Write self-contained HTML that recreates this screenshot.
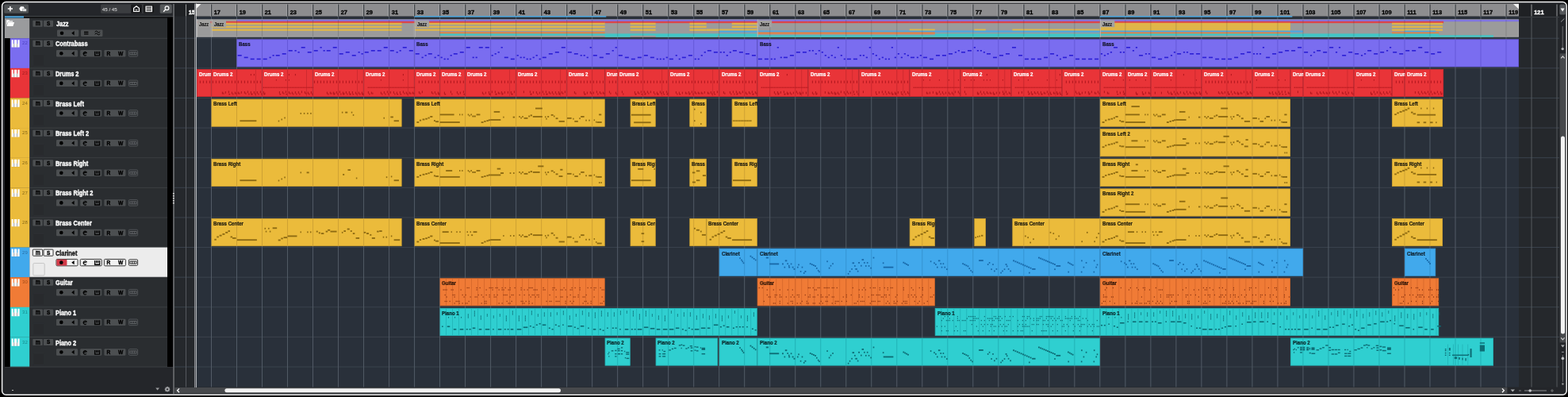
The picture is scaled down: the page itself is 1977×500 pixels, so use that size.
<!DOCTYPE html><html><head><meta charset="utf-8"><title>Project</title><style>
html,body{margin:0;padding:0;background:#24262a;width:1977px;height:500px;overflow:hidden}
body{position:relative;font-family:"Liberation Sans",sans-serif}
svg.l{position:absolute;left:0;top:0}
#txt{position:absolute;left:0;top:0;width:1977px;height:500px;will-change:transform}
.pl{position:absolute;font-size:6.9px;line-height:8px;font-weight:bold;white-space:nowrap;overflow:hidden;transform:scaleX(.885);transform-origin:0 0}
.fl{position:absolute;font-size:6.9px;line-height:8px;font-weight:bold;color:#1b1b1b;white-space:nowrap;overflow:hidden;transform:scaleX(.84);transform-origin:0 0}
.rl{position:absolute;top:10.9px;font-size:7.4px;line-height:9px;font-weight:bold;white-space:nowrap}
.ms{position:absolute;width:12.3px;height:8.2px;color:#000;font-size:6.4px;line-height:8.4px;font-weight:bold;text-align:center}
.tn{position:absolute;color:#fff;font-size:8.5px;line-height:10px;font-weight:bold;white-space:nowrap;transform:scaleX(.866);transform-origin:0 0}
.tn.dark{color:#111}
.rw{position:absolute;font-size:6.6px;line-height:9px;font-weight:bold;color:#000}
.num{position:absolute;font-size:6px;line-height:7px;width:8px;text-align:center}
.lm{display:inline-block;font-size:8.4px;line-height:8px;position:relative;top:-0.9px;transform:scaleX(.82)}
.tn,.ms,.rw,.rl{-webkit-text-stroke:0.35px currentColor}
.pl,.fl{-webkit-text-stroke:0.22px currentColor}
</style></head><body><svg class="l" width="1977" height="500" viewBox="0 0 1977 500"><rect x="220" y="4.5" width="1746" height="483" fill="#25282c"/><rect x="246.5" y="20.5" width="1668.5" height="467" fill="#29303a"/><rect x="220" y="47.7" width="1746" height="1" fill="#3b434d"/><rect x="220" y="85.32" width="1746" height="1" fill="#3b434d"/><rect x="220" y="122.94" width="1746" height="1" fill="#3b434d"/><rect x="220" y="160.56" width="1746" height="1" fill="#3b434d"/><rect x="220" y="198.18" width="1746" height="1" fill="#3b434d"/><rect x="220" y="235.8" width="1746" height="1" fill="#3b434d"/><rect x="220" y="273.42" width="1746" height="1" fill="#3b434d"/><rect x="220" y="311.04" width="1746" height="1" fill="#3b434d"/><rect x="220" y="348.66" width="1746" height="1" fill="#3b434d"/><rect x="220" y="386.28" width="1746" height="1" fill="#3b434d"/><rect x="220" y="423.9" width="1746" height="1" fill="#3b434d"/><rect x="220" y="461.52" width="1746" height="1" fill="#3b434d"/><rect x="233.99" y="20.4" width="1" height="467.1" fill="#565a5f"/><rect x="266" y="20.4" width="1" height="467.1" fill="#525b66"/><rect x="298.01" y="20.4" width="1" height="467.1" fill="#525b66"/><rect x="330.02" y="20.4" width="1" height="467.1" fill="#525b66"/><rect x="362.03" y="20.4" width="1" height="467.1" fill="#525b66"/><rect x="394.04" y="20.4" width="1" height="467.1" fill="#525b66"/><rect x="426.05" y="20.4" width="1" height="467.1" fill="#525b66"/><rect x="458.06" y="20.4" width="1" height="467.1" fill="#525b66"/><rect x="490.07" y="20.4" width="1" height="467.1" fill="#525b66"/><rect x="522.08" y="20.4" width="1" height="467.1" fill="#525b66"/><rect x="554.09" y="20.4" width="1" height="467.1" fill="#525b66"/><rect x="586.1" y="20.4" width="1" height="467.1" fill="#525b66"/><rect x="618.11" y="20.4" width="1" height="467.1" fill="#525b66"/><rect x="650.12" y="20.4" width="1" height="467.1" fill="#525b66"/><rect x="682.13" y="20.4" width="1" height="467.1" fill="#525b66"/><rect x="714.14" y="20.4" width="1" height="467.1" fill="#525b66"/><rect x="746.15" y="20.4" width="1" height="467.1" fill="#525b66"/><rect x="778.16" y="20.4" width="1" height="467.1" fill="#525b66"/><rect x="810.17" y="20.4" width="1" height="467.1" fill="#525b66"/><rect x="842.18" y="20.4" width="1" height="467.1" fill="#525b66"/><rect x="874.19" y="20.4" width="1" height="467.1" fill="#525b66"/><rect x="906.2" y="20.4" width="1" height="467.1" fill="#525b66"/><rect x="938.21" y="20.4" width="1" height="467.1" fill="#525b66"/><rect x="970.22" y="20.4" width="1" height="467.1" fill="#525b66"/><rect x="1002.23" y="20.4" width="1" height="467.1" fill="#525b66"/><rect x="1034.24" y="20.4" width="1" height="467.1" fill="#525b66"/><rect x="1066.25" y="20.4" width="1" height="467.1" fill="#525b66"/><rect x="1098.26" y="20.4" width="1" height="467.1" fill="#525b66"/><rect x="1130.27" y="20.4" width="1" height="467.1" fill="#525b66"/><rect x="1162.28" y="20.4" width="1" height="467.1" fill="#525b66"/><rect x="1194.29" y="20.4" width="1" height="467.1" fill="#525b66"/><rect x="1226.3" y="20.4" width="1" height="467.1" fill="#525b66"/><rect x="1258.31" y="20.4" width="1" height="467.1" fill="#525b66"/><rect x="1290.32" y="20.4" width="1" height="467.1" fill="#525b66"/><rect x="1322.33" y="20.4" width="1" height="467.1" fill="#525b66"/><rect x="1354.34" y="20.4" width="1" height="467.1" fill="#525b66"/><rect x="1386.35" y="20.4" width="1" height="467.1" fill="#525b66"/><rect x="1418.36" y="20.4" width="1" height="467.1" fill="#525b66"/><rect x="1450.37" y="20.4" width="1" height="467.1" fill="#525b66"/><rect x="1482.38" y="20.4" width="1" height="467.1" fill="#525b66"/><rect x="1514.39" y="20.4" width="1" height="467.1" fill="#525b66"/><rect x="1546.4" y="20.4" width="1" height="467.1" fill="#525b66"/><rect x="1578.41" y="20.4" width="1" height="467.1" fill="#525b66"/><rect x="1610.42" y="20.4" width="1" height="467.1" fill="#525b66"/><rect x="1642.43" y="20.4" width="1" height="467.1" fill="#525b66"/><rect x="1674.44" y="20.4" width="1" height="467.1" fill="#525b66"/><rect x="1706.45" y="20.4" width="1" height="467.1" fill="#525b66"/><rect x="1738.46" y="20.4" width="1" height="467.1" fill="#525b66"/><rect x="1770.47" y="20.4" width="1" height="467.1" fill="#525b66"/><rect x="1802.48" y="20.4" width="1" height="467.1" fill="#525b66"/><rect x="1834.49" y="20.4" width="1" height="467.1" fill="#525b66"/><rect x="1866.5" y="20.4" width="1" height="467.1" fill="#525b66"/><rect x="1898.51" y="20.4" width="1" height="467.1" fill="#525b66"/><rect x="1930.52" y="20.4" width="1" height="467.1" fill="#565a5f"/><rect x="1962.53" y="20.4" width="1" height="467.1" fill="#565a5f"/><rect x="248.49" y="24.8" width="17.61" height="21.4" fill="#9b9b9b" stroke="#b4b4b4" stroke-width="0.8"/><rect x="266.9" y="24.8" width="255.28" height="21.4" fill="#9b9b9b" stroke="#b4b4b4" stroke-width="0.8"/><rect x="522.98" y="24.8" width="431.33" height="21.4" fill="#9b9b9b" stroke="#b4b4b4" stroke-width="0.8"/><rect x="955.11" y="24.8" width="431.33" height="21.4" fill="#9b9b9b" stroke="#b4b4b4" stroke-width="0.8"/><rect x="1387.25" y="24.8" width="527.37" height="21.4" fill="#9b9b9b" stroke="#b4b4b4" stroke-width="0.8"/><rect x="298.91" y="49.8" width="223.27" height="34.2" fill="#7a6df0" stroke="#6a5ce0" stroke-width="0.8"/><rect x="522.98" y="49.8" width="431.33" height="34.2" fill="#7a6df0" stroke="#6a5ce0" stroke-width="0.8"/><rect x="955.11" y="49.8" width="431.33" height="34.2" fill="#7a6df0" stroke="#6a5ce0" stroke-width="0.8"/><rect x="1387.25" y="49.8" width="527.37" height="34.2" fill="#7a6df0" stroke="#6a5ce0" stroke-width="0.8"/><rect x="248.4" y="87.42" width="17.7" height="34.2" fill="#e93438" stroke="#d22a30" stroke-width="0.8"/><rect x="266.9" y="87.42" width="63.22" height="34.2" fill="#e93438" stroke="#d22a30" stroke-width="0.8"/><rect x="330.92" y="87.42" width="63.22" height="34.2" fill="#e93438" stroke="#d22a30" stroke-width="0.8"/><rect x="394.94" y="87.42" width="63.22" height="34.2" fill="#e93438" stroke="#d22a30" stroke-width="0.8"/><rect x="458.96" y="87.42" width="63.22" height="34.2" fill="#e93438" stroke="#d22a30" stroke-width="0.8"/><rect x="522.98" y="87.42" width="31.21" height="34.2" fill="#e93438" stroke="#d22a30" stroke-width="0.8"/><rect x="554.99" y="87.42" width="31.21" height="34.2" fill="#e93438" stroke="#d22a30" stroke-width="0.8"/><rect x="587" y="87.42" width="63.22" height="34.2" fill="#e93438" stroke="#d22a30" stroke-width="0.8"/><rect x="651.02" y="87.42" width="63.22" height="34.2" fill="#e93438" stroke="#d22a30" stroke-width="0.8"/><rect x="715.04" y="87.42" width="47.21" height="34.2" fill="#e93438" stroke="#d22a30" stroke-width="0.8"/><rect x="763.05" y="87.42" width="15.2" height="34.2" fill="#e93438" stroke="#d22a30" stroke-width="0.8"/><rect x="779.06" y="87.42" width="63.22" height="34.2" fill="#e93438" stroke="#d22a30" stroke-width="0.8"/><rect x="843.08" y="87.42" width="63.22" height="34.2" fill="#e93438" stroke="#d22a30" stroke-width="0.8"/><rect x="907.1" y="87.42" width="47.21" height="34.2" fill="#e93438" stroke="#d22a30" stroke-width="0.8"/><rect x="955.11" y="87.42" width="63.22" height="34.2" fill="#e93438" stroke="#d22a30" stroke-width="0.8"/><rect x="1019.13" y="87.42" width="63.22" height="34.2" fill="#e93438" stroke="#d22a30" stroke-width="0.8"/><rect x="1083.16" y="87.42" width="63.22" height="34.2" fill="#e93438" stroke="#d22a30" stroke-width="0.8"/><rect x="1147.18" y="87.42" width="63.22" height="34.2" fill="#e93438" stroke="#d22a30" stroke-width="0.8"/><rect x="1211.2" y="87.42" width="63.22" height="34.2" fill="#e93438" stroke="#d22a30" stroke-width="0.8"/><rect x="1275.22" y="87.42" width="63.22" height="34.2" fill="#e93438" stroke="#d22a30" stroke-width="0.8"/><rect x="1339.24" y="87.42" width="47.21" height="34.2" fill="#e93438" stroke="#d22a30" stroke-width="0.8"/><rect x="1387.25" y="87.42" width="31.21" height="34.2" fill="#e93438" stroke="#d22a30" stroke-width="0.8"/><rect x="1419.26" y="87.42" width="31.21" height="34.2" fill="#e93438" stroke="#d22a30" stroke-width="0.8"/><rect x="1451.27" y="87.42" width="63.22" height="34.2" fill="#e93438" stroke="#d22a30" stroke-width="0.8"/><rect x="1515.29" y="87.42" width="63.22" height="34.2" fill="#e93438" stroke="#d22a30" stroke-width="0.8"/><rect x="1579.31" y="87.42" width="47.22" height="34.2" fill="#e93438" stroke="#d22a30" stroke-width="0.8"/><rect x="1627.33" y="87.42" width="15.2" height="34.2" fill="#e93438" stroke="#d22a30" stroke-width="0.8"/><rect x="1643.33" y="87.42" width="63.22" height="34.2" fill="#e93438" stroke="#d22a30" stroke-width="0.8"/><rect x="1707.35" y="87.42" width="47.22" height="34.2" fill="#e93438" stroke="#d22a30" stroke-width="0.8"/><rect x="1755.37" y="87.42" width="15.2" height="34.2" fill="#e93438" stroke="#d22a30" stroke-width="0.8"/><rect x="1771.37" y="87.42" width="48.34" height="34.2" fill="#e93438" stroke="#d22a30" stroke-width="0.8"/><rect x="266.9" y="125.04" width="239.27" height="34.2" fill="#ebbb3b" stroke="#d6a832" stroke-width="0.8"/><rect x="522.98" y="125.04" width="239.28" height="34.2" fill="#ebbb3b" stroke="#d6a832" stroke-width="0.8"/><rect x="795.06" y="125.04" width="31.21" height="34.2" fill="#ebbb3b" stroke="#d6a832" stroke-width="0.8"/><rect x="869.81" y="125.04" width="20.49" height="34.2" fill="#ebbb3b" stroke="#d6a832" stroke-width="0.8"/><rect x="923.1" y="125.04" width="31.21" height="34.2" fill="#ebbb3b" stroke="#d6a832" stroke-width="0.8"/><rect x="1387.25" y="125.04" width="239.28" height="34.2" fill="#ebbb3b" stroke="#d6a832" stroke-width="0.8"/><rect x="1755.37" y="125.04" width="63.22" height="34.2" fill="#ebbb3b" stroke="#d6a832" stroke-width="0.8"/><rect x="1387.25" y="162.66" width="239.28" height="34.2" fill="#ebbb3b" stroke="#d6a832" stroke-width="0.8"/><rect x="266.9" y="200.28" width="239.27" height="34.2" fill="#ebbb3b" stroke="#d6a832" stroke-width="0.8"/><rect x="522.98" y="200.28" width="239.28" height="34.2" fill="#ebbb3b" stroke="#d6a832" stroke-width="0.8"/><rect x="795.06" y="200.28" width="31.21" height="34.2" fill="#ebbb3b" stroke="#d6a832" stroke-width="0.8"/><rect x="869.81" y="200.28" width="20.49" height="34.2" fill="#ebbb3b" stroke="#d6a832" stroke-width="0.8"/><rect x="923.1" y="200.28" width="31.21" height="34.2" fill="#ebbb3b" stroke="#d6a832" stroke-width="0.8"/><rect x="1387.25" y="200.28" width="239.28" height="34.2" fill="#ebbb3b" stroke="#d6a832" stroke-width="0.8"/><rect x="1755.37" y="200.28" width="63.22" height="34.2" fill="#ebbb3b" stroke="#d6a832" stroke-width="0.8"/><rect x="1387.25" y="237.9" width="239.28" height="34.2" fill="#ebbb3b" stroke="#d6a832" stroke-width="0.8"/><rect x="266.9" y="275.52" width="239.27" height="34.2" fill="#ebbb3b" stroke="#d6a832" stroke-width="0.8"/><rect x="522.98" y="275.52" width="239.28" height="34.2" fill="#ebbb3b" stroke="#d6a832" stroke-width="0.8"/><rect x="795.06" y="275.52" width="31.21" height="34.2" fill="#ebbb3b" stroke="#d6a832" stroke-width="0.8"/><rect x="869.81" y="275.52" width="20.49" height="34.2" fill="#ebbb3b" stroke="#d6a832" stroke-width="0.8"/><rect x="891.09" y="275.52" width="63.22" height="34.2" fill="#ebbb3b" stroke="#d6a832" stroke-width="0.8"/><rect x="1147.18" y="275.52" width="31.21" height="34.2" fill="#ebbb3b" stroke="#d6a832" stroke-width="0.8"/><rect x="1228.8" y="275.52" width="13.6" height="34.2" fill="#ebbb3b" stroke="#d6a832" stroke-width="0.8"/><rect x="1276.82" y="275.52" width="109.63" height="34.2" fill="#ebbb3b" stroke="#d6a832" stroke-width="0.8"/><rect x="1387.25" y="275.52" width="239.28" height="34.2" fill="#ebbb3b" stroke="#d6a832" stroke-width="0.8"/><rect x="1755.37" y="275.52" width="63.22" height="34.2" fill="#ebbb3b" stroke="#d6a832" stroke-width="0.8"/><rect x="907.1" y="313.14" width="47.21" height="34.2" fill="#41a9ec" stroke="#3698d8" stroke-width="0.8"/><rect x="955.11" y="313.14" width="431.33" height="34.2" fill="#41a9ec" stroke="#3698d8" stroke-width="0.8"/><rect x="1387.25" y="313.14" width="255.28" height="34.2" fill="#41a9ec" stroke="#3698d8" stroke-width="0.8"/><rect x="1771.37" y="313.14" width="38.41" height="34.2" fill="#41a9ec" stroke="#3698d8" stroke-width="0.8"/><rect x="554.99" y="350.76" width="207.27" height="34.2" fill="#f07b36" stroke="#d96a2a" stroke-width="0.8"/><rect x="955.11" y="350.76" width="223.27" height="34.2" fill="#f07b36" stroke="#d96a2a" stroke-width="0.8"/><rect x="1387.25" y="350.76" width="239.28" height="34.2" fill="#f07b36" stroke="#d96a2a" stroke-width="0.8"/><rect x="1755.37" y="350.76" width="58.42" height="34.2" fill="#f07b36" stroke="#d96a2a" stroke-width="0.8"/><rect x="554.99" y="388.38" width="399.32" height="34.2" fill="#2fcfd0" stroke="#25b8ba" stroke-width="0.8"/><rect x="1179.18" y="388.38" width="207.27" height="34.2" fill="#2fcfd0" stroke="#25b8ba" stroke-width="0.8"/><rect x="1387.25" y="388.38" width="426.53" height="34.2" fill="#2fcfd0" stroke="#25b8ba" stroke-width="0.8"/><rect x="763.05" y="426" width="31.21" height="34.2" fill="#2fcfd0" stroke="#25b8ba" stroke-width="0.8"/><rect x="827.07" y="426" width="77.62" height="34.2" fill="#2fcfd0" stroke="#25b8ba" stroke-width="0.8"/><rect x="907.1" y="426" width="47.21" height="34.2" fill="#2fcfd0" stroke="#25b8ba" stroke-width="0.8"/><rect x="955.11" y="426" width="431.33" height="34.2" fill="#2fcfd0" stroke="#25b8ba" stroke-width="0.8"/><rect x="1627.33" y="426" width="255.28" height="34.2" fill="#2fcfd0" stroke="#25b8ba" stroke-width="0.8"/><rect x="298.51" y="24.8" width="224.07" height="2.4" fill="#7a6df0" opacity="0.82"/><rect x="522.58" y="24.8" width="432.13" height="2.4" fill="#7a6df0" opacity="0.82"/><rect x="954.71" y="24.8" width="432.13" height="2.4" fill="#7a6df0" opacity="0.82"/><rect x="1386.85" y="24.8" width="528.16" height="2.4" fill="#7a6df0" opacity="0.82"/><rect x="248" y="26.75" width="18.5" height="2.4" fill="#e93438" opacity="0.82"/><rect x="266.5" y="26.75" width="64.02" height="2.4" fill="#e93438" opacity="0.82"/><rect x="330.52" y="26.75" width="64.02" height="2.4" fill="#e93438" opacity="0.82"/><rect x="394.54" y="26.75" width="64.02" height="2.4" fill="#e93438" opacity="0.82"/><rect x="458.56" y="26.75" width="64.02" height="2.4" fill="#e93438" opacity="0.82"/><rect x="522.58" y="26.75" width="32.01" height="2.4" fill="#e93438" opacity="0.82"/><rect x="554.59" y="26.75" width="32.01" height="2.4" fill="#e93438" opacity="0.82"/><rect x="586.6" y="26.75" width="64.02" height="2.4" fill="#e93438" opacity="0.82"/><rect x="650.62" y="26.75" width="64.02" height="2.4" fill="#e93438" opacity="0.82"/><rect x="714.64" y="26.75" width="48.01" height="2.4" fill="#e93438" opacity="0.82"/><rect x="762.65" y="26.75" width="16" height="2.4" fill="#e93438" opacity="0.82"/><rect x="778.66" y="26.75" width="64.02" height="2.4" fill="#e93438" opacity="0.82"/><rect x="842.68" y="26.75" width="64.02" height="2.4" fill="#e93438" opacity="0.82"/><rect x="906.7" y="26.75" width="48.01" height="2.4" fill="#e93438" opacity="0.82"/><rect x="954.71" y="26.75" width="64.02" height="2.4" fill="#e93438" opacity="0.82"/><rect x="1018.73" y="26.75" width="64.02" height="2.4" fill="#e93438" opacity="0.82"/><rect x="1082.76" y="26.75" width="64.02" height="2.4" fill="#e93438" opacity="0.82"/><rect x="1146.78" y="26.75" width="64.02" height="2.4" fill="#e93438" opacity="0.82"/><rect x="1210.8" y="26.75" width="64.02" height="2.4" fill="#e93438" opacity="0.82"/><rect x="1274.82" y="26.75" width="64.02" height="2.4" fill="#e93438" opacity="0.82"/><rect x="1338.84" y="26.75" width="48.01" height="2.4" fill="#e93438" opacity="0.82"/><rect x="1386.85" y="26.75" width="32.01" height="2.4" fill="#e93438" opacity="0.82"/><rect x="1418.86" y="26.75" width="32.01" height="2.4" fill="#e93438" opacity="0.82"/><rect x="1450.87" y="26.75" width="64.02" height="2.4" fill="#e93438" opacity="0.82"/><rect x="1514.89" y="26.75" width="64.02" height="2.4" fill="#e93438" opacity="0.82"/><rect x="1578.91" y="26.75" width="48.02" height="2.4" fill="#e93438" opacity="0.82"/><rect x="1626.92" y="26.75" width="16" height="2.4" fill="#e93438" opacity="0.82"/><rect x="1642.93" y="26.75" width="64.02" height="2.4" fill="#e93438" opacity="0.82"/><rect x="1706.95" y="26.75" width="48.02" height="2.4" fill="#e93438" opacity="0.82"/><rect x="1754.96" y="26.75" width="16" height="2.4" fill="#e93438" opacity="0.82"/><rect x="1770.97" y="26.75" width="49.14" height="2.4" fill="#e93438" opacity="0.82"/><rect x="266.5" y="28.7" width="240.07" height="2.4" fill="#ebbb3b" opacity="0.82"/><rect x="522.58" y="28.7" width="240.08" height="2.4" fill="#ebbb3b" opacity="0.82"/><rect x="794.66" y="28.7" width="32.01" height="2.4" fill="#ebbb3b" opacity="0.82"/><rect x="869.41" y="28.7" width="21.29" height="2.4" fill="#ebbb3b" opacity="0.82"/><rect x="922.7" y="28.7" width="32.01" height="2.4" fill="#ebbb3b" opacity="0.82"/><rect x="1386.85" y="28.7" width="240.08" height="2.4" fill="#ebbb3b" opacity="0.82"/><rect x="1754.96" y="28.7" width="64.02" height="2.4" fill="#ebbb3b" opacity="0.82"/><rect x="1386.85" y="30.65" width="240.08" height="2.4" fill="#ebbb3b" opacity="0.82"/><rect x="266.5" y="32.6" width="240.07" height="2.4" fill="#ebbb3b" opacity="0.82"/><rect x="522.58" y="32.6" width="240.08" height="2.4" fill="#ebbb3b" opacity="0.82"/><rect x="794.66" y="32.6" width="32.01" height="2.4" fill="#ebbb3b" opacity="0.82"/><rect x="869.41" y="32.6" width="21.29" height="2.4" fill="#ebbb3b" opacity="0.82"/><rect x="922.7" y="32.6" width="32.01" height="2.4" fill="#ebbb3b" opacity="0.82"/><rect x="1386.85" y="32.6" width="240.08" height="2.4" fill="#ebbb3b" opacity="0.82"/><rect x="1754.96" y="32.6" width="64.02" height="2.4" fill="#ebbb3b" opacity="0.82"/><rect x="1386.85" y="34.55" width="240.08" height="2.4" fill="#ebbb3b" opacity="0.82"/><rect x="266.5" y="36.5" width="240.07" height="2.4" fill="#ebbb3b" opacity="0.82"/><rect x="522.58" y="36.5" width="240.08" height="2.4" fill="#ebbb3b" opacity="0.82"/><rect x="794.66" y="36.5" width="32.01" height="2.4" fill="#ebbb3b" opacity="0.82"/><rect x="869.41" y="36.5" width="21.29" height="2.4" fill="#ebbb3b" opacity="0.82"/><rect x="890.69" y="36.5" width="64.02" height="2.4" fill="#ebbb3b" opacity="0.82"/><rect x="1146.78" y="36.5" width="32.01" height="2.4" fill="#ebbb3b" opacity="0.82"/><rect x="1228.4" y="36.5" width="14.4" height="2.4" fill="#ebbb3b" opacity="0.82"/><rect x="1276.42" y="36.5" width="110.43" height="2.4" fill="#ebbb3b" opacity="0.82"/><rect x="1386.85" y="36.5" width="240.08" height="2.4" fill="#ebbb3b" opacity="0.82"/><rect x="1754.96" y="36.5" width="64.02" height="2.4" fill="#ebbb3b" opacity="0.82"/><rect x="906.7" y="38.45" width="48.01" height="2.4" fill="#41a9ec" opacity="0.82"/><rect x="954.71" y="38.45" width="432.13" height="2.4" fill="#41a9ec" opacity="0.82"/><rect x="1386.85" y="38.45" width="256.08" height="2.4" fill="#41a9ec" opacity="0.82"/><rect x="1770.97" y="38.45" width="39.21" height="2.4" fill="#41a9ec" opacity="0.82"/><rect x="554.59" y="40.4" width="208.07" height="2.4" fill="#f07b36" opacity="0.82"/><rect x="954.71" y="40.4" width="224.07" height="2.4" fill="#f07b36" opacity="0.82"/><rect x="1386.85" y="40.4" width="240.08" height="2.4" fill="#f07b36" opacity="0.82"/><rect x="1754.96" y="40.4" width="59.22" height="2.4" fill="#f07b36" opacity="0.82"/><rect x="554.59" y="42.35" width="400.12" height="2.4" fill="#2fcfd0" opacity="0.82"/><rect x="1178.78" y="42.35" width="208.07" height="2.4" fill="#2fcfd0" opacity="0.82"/><rect x="1386.85" y="42.35" width="427.33" height="2.4" fill="#2fcfd0" opacity="0.82"/><rect x="762.65" y="44.3" width="32.01" height="2.4" fill="#2fcfd0" opacity="0.82"/><rect x="826.67" y="44.3" width="78.42" height="2.4" fill="#2fcfd0" opacity="0.82"/><rect x="906.7" y="44.3" width="48.01" height="2.4" fill="#2fcfd0" opacity="0.82"/><rect x="954.71" y="44.3" width="432.13" height="2.4" fill="#2fcfd0" opacity="0.82"/><rect x="1626.92" y="44.3" width="256.08" height="2.4" fill="#2fcfd0" opacity="0.82"/><rect x="266" y="24.9" width="1" height="21.2" fill="rgba(60,60,60,0.22)"/><rect x="298.01" y="24.9" width="1" height="21.2" fill="rgba(60,60,60,0.22)"/><rect x="330.02" y="24.9" width="1" height="21.2" fill="rgba(60,60,60,0.22)"/><rect x="362.03" y="24.9" width="1" height="21.2" fill="rgba(60,60,60,0.22)"/><rect x="394.04" y="24.9" width="1" height="21.2" fill="rgba(60,60,60,0.22)"/><rect x="426.05" y="24.9" width="1" height="21.2" fill="rgba(60,60,60,0.22)"/><rect x="458.06" y="24.9" width="1" height="21.2" fill="rgba(60,60,60,0.22)"/><rect x="490.07" y="24.9" width="1" height="21.2" fill="rgba(60,60,60,0.22)"/><rect x="522.08" y="24.9" width="1" height="21.2" fill="rgba(60,60,60,0.22)"/><rect x="554.09" y="24.9" width="1" height="21.2" fill="rgba(60,60,60,0.22)"/><rect x="586.1" y="24.9" width="1" height="21.2" fill="rgba(60,60,60,0.22)"/><rect x="618.11" y="24.9" width="1" height="21.2" fill="rgba(60,60,60,0.22)"/><rect x="650.12" y="24.9" width="1" height="21.2" fill="rgba(60,60,60,0.22)"/><rect x="682.13" y="24.9" width="1" height="21.2" fill="rgba(60,60,60,0.22)"/><rect x="714.14" y="24.9" width="1" height="21.2" fill="rgba(60,60,60,0.22)"/><rect x="746.15" y="24.9" width="1" height="21.2" fill="rgba(60,60,60,0.22)"/><rect x="778.16" y="24.9" width="1" height="21.2" fill="rgba(60,60,60,0.22)"/><rect x="810.17" y="24.9" width="1" height="21.2" fill="rgba(60,60,60,0.22)"/><rect x="842.18" y="24.9" width="1" height="21.2" fill="rgba(60,60,60,0.22)"/><rect x="874.19" y="24.9" width="1" height="21.2" fill="rgba(60,60,60,0.22)"/><rect x="906.2" y="24.9" width="1" height="21.2" fill="rgba(60,60,60,0.22)"/><rect x="938.21" y="24.9" width="1" height="21.2" fill="rgba(60,60,60,0.22)"/><rect x="970.22" y="24.9" width="1" height="21.2" fill="rgba(60,60,60,0.22)"/><rect x="1002.23" y="24.9" width="1" height="21.2" fill="rgba(60,60,60,0.22)"/><rect x="1034.24" y="24.9" width="1" height="21.2" fill="rgba(60,60,60,0.22)"/><rect x="1066.25" y="24.9" width="1" height="21.2" fill="rgba(60,60,60,0.22)"/><rect x="1098.26" y="24.9" width="1" height="21.2" fill="rgba(60,60,60,0.22)"/><rect x="1130.27" y="24.9" width="1" height="21.2" fill="rgba(60,60,60,0.22)"/><rect x="1162.28" y="24.9" width="1" height="21.2" fill="rgba(60,60,60,0.22)"/><rect x="1194.29" y="24.9" width="1" height="21.2" fill="rgba(60,60,60,0.22)"/><rect x="1226.3" y="24.9" width="1" height="21.2" fill="rgba(60,60,60,0.22)"/><rect x="1258.31" y="24.9" width="1" height="21.2" fill="rgba(60,60,60,0.22)"/><rect x="1290.32" y="24.9" width="1" height="21.2" fill="rgba(60,60,60,0.22)"/><rect x="1322.33" y="24.9" width="1" height="21.2" fill="rgba(60,60,60,0.22)"/><rect x="1354.34" y="24.9" width="1" height="21.2" fill="rgba(60,60,60,0.22)"/><rect x="1386.35" y="24.9" width="1" height="21.2" fill="rgba(60,60,60,0.22)"/><rect x="1418.36" y="24.9" width="1" height="21.2" fill="rgba(60,60,60,0.22)"/><rect x="1450.37" y="24.9" width="1" height="21.2" fill="rgba(60,60,60,0.22)"/><rect x="1482.38" y="24.9" width="1" height="21.2" fill="rgba(60,60,60,0.22)"/><rect x="1514.39" y="24.9" width="1" height="21.2" fill="rgba(60,60,60,0.22)"/><rect x="1546.4" y="24.9" width="1" height="21.2" fill="rgba(60,60,60,0.22)"/><rect x="1578.41" y="24.9" width="1" height="21.2" fill="rgba(60,60,60,0.22)"/><rect x="1610.42" y="24.9" width="1" height="21.2" fill="rgba(60,60,60,0.22)"/><rect x="1642.43" y="24.9" width="1" height="21.2" fill="rgba(60,60,60,0.22)"/><rect x="1674.44" y="24.9" width="1" height="21.2" fill="rgba(60,60,60,0.22)"/><rect x="1706.45" y="24.9" width="1" height="21.2" fill="rgba(60,60,60,0.22)"/><rect x="1738.46" y="24.9" width="1" height="21.2" fill="rgba(60,60,60,0.22)"/><rect x="1770.47" y="24.9" width="1" height="21.2" fill="rgba(60,60,60,0.22)"/><rect x="1802.48" y="24.9" width="1" height="21.2" fill="rgba(60,60,60,0.22)"/><rect x="1834.49" y="24.9" width="1" height="21.2" fill="rgba(60,60,60,0.22)"/><rect x="1866.5" y="24.9" width="1" height="21.2" fill="rgba(60,60,60,0.22)"/><rect x="1898.51" y="24.9" width="1" height="21.2" fill="rgba(60,60,60,0.22)"/><rect x="249.09" y="25.4" width="16.41" height="8.8" fill="#a3a2a0"/><rect x="248.09" y="24.4" width="1" height="22.2" fill="#b9b9b9"/><rect x="267.5" y="25.4" width="17.5" height="8.8" fill="#a3a2a0"/><rect x="266.5" y="24.4" width="1" height="22.2" fill="#b9b9b9"/><rect x="523.58" y="25.4" width="17.5" height="8.8" fill="#a3a2a0"/><rect x="522.58" y="24.4" width="1" height="22.2" fill="#b9b9b9"/><rect x="955.71" y="25.4" width="17.5" height="8.8" fill="#a3a2a0"/><rect x="954.71" y="24.4" width="1" height="22.2" fill="#b9b9b9"/><rect x="1387.85" y="25.4" width="17.5" height="8.8" fill="#a3a2a0"/><rect x="1386.85" y="24.4" width="1" height="22.2" fill="#b9b9b9"/><rect x="330.02" y="49.9" width="1" height="34" fill="#6558d8"/><rect x="362.03" y="49.9" width="1" height="34" fill="#6558d8"/><rect x="394.04" y="49.9" width="1" height="34" fill="#6558d8"/><rect x="426.05" y="49.9" width="1" height="34" fill="#6558d8"/><rect x="458.06" y="49.9" width="1" height="34" fill="#6558d8"/><rect x="490.07" y="49.9" width="1" height="34" fill="#6558d8"/><rect x="299.71" y="69" width="5" height="1.6" fill="#2b1fd6"/><rect x="307.71" y="71.6" width="5" height="1.6" fill="#2b1fd6"/><rect x="315.71" y="73.6" width="5" height="1.6" fill="#2b1fd6"/><rect x="323.71" y="73.6" width="5" height="1.6" fill="#2b1fd6"/><rect x="331.72" y="73.6" width="5" height="1.6" fill="#2b1fd6"/><rect x="339.52" y="71.6" width="2.2" height="1.6" fill="#2b1fd6"/><rect x="343.52" y="69" width="2.2" height="1.6" fill="#2b1fd6"/><rect x="347.72" y="69" width="5" height="1.6" fill="#2b1fd6"/><rect x="355.72" y="67" width="5" height="1.6" fill="#2b1fd6"/><rect x="363.73" y="63" width="5" height="1.6" fill="#2b1fd6"/><rect x="371.53" y="63" width="2.2" height="1.6" fill="#2b1fd6"/><rect x="375.53" y="65" width="2.2" height="1.6" fill="#2b1fd6"/><rect x="379.73" y="59" width="5" height="1.6" fill="#2b1fd6"/><rect x="387.73" y="65" width="5" height="1.6" fill="#2b1fd6"/><rect x="395.74" y="63" width="5" height="1.6" fill="#2b1fd6"/><rect x="403.54" y="59" width="2.2" height="1.6" fill="#2b1fd6"/><rect x="407.54" y="63" width="2.2" height="1.6" fill="#2b1fd6"/><rect x="411.74" y="63" width="5" height="1.6" fill="#2b1fd6"/><rect x="419.74" y="59" width="5" height="1.6" fill="#2b1fd6"/><rect x="427.75" y="67" width="5" height="1.6" fill="#2b1fd6"/><rect x="435.75" y="65" width="5" height="1.6" fill="#2b1fd6"/><rect x="443.75" y="69" width="5" height="1.6" fill="#2b1fd6"/><rect x="451.55" y="65" width="2.2" height="1.6" fill="#2b1fd6"/><rect x="455.55" y="67" width="2.2" height="1.6" fill="#2b1fd6"/><rect x="459.76" y="65" width="5" height="1.6" fill="#2b1fd6"/><rect x="467.76" y="63" width="5" height="1.6" fill="#2b1fd6"/><rect x="475.76" y="63" width="5" height="1.6" fill="#2b1fd6"/><rect x="483.76" y="59" width="5" height="1.6" fill="#2b1fd6"/><rect x="491.77" y="63" width="5" height="1.6" fill="#2b1fd6"/><rect x="499.57" y="65" width="2.2" height="1.6" fill="#2b1fd6"/><rect x="503.57" y="63" width="2.2" height="1.6" fill="#2b1fd6"/><rect x="507.77" y="59" width="5" height="1.6" fill="#2b1fd6"/><rect x="515.77" y="63" width="5" height="1.6" fill="#2b1fd6"/><rect x="554.09" y="49.9" width="1" height="34" fill="#6558d8"/><rect x="586.1" y="49.9" width="1" height="34" fill="#6558d8"/><rect x="618.11" y="49.9" width="1" height="34" fill="#6558d8"/><rect x="650.12" y="49.9" width="1" height="34" fill="#6558d8"/><rect x="682.13" y="49.9" width="1" height="34" fill="#6558d8"/><rect x="714.14" y="49.9" width="1" height="34" fill="#6558d8"/><rect x="746.15" y="49.9" width="1" height="34" fill="#6558d8"/><rect x="778.16" y="49.9" width="1" height="34" fill="#6558d8"/><rect x="810.17" y="49.9" width="1" height="34" fill="#6558d8"/><rect x="842.18" y="49.9" width="1" height="34" fill="#6558d8"/><rect x="874.19" y="49.9" width="1" height="34" fill="#6558d8"/><rect x="906.2" y="49.9" width="1" height="34" fill="#6558d8"/><rect x="938.21" y="49.9" width="1" height="34" fill="#6558d8"/><rect x="523.78" y="67" width="5" height="1.6" fill="#2b1fd6"/><rect x="531.58" y="71.6" width="2.2" height="1.6" fill="#2b1fd6"/><rect x="535.58" y="69" width="2.2" height="1.6" fill="#2b1fd6"/><rect x="539.78" y="67" width="5" height="1.6" fill="#2b1fd6"/><rect x="547.58" y="71.6" width="2.2" height="1.6" fill="#2b1fd6"/><rect x="551.58" y="69" width="2.2" height="1.6" fill="#2b1fd6"/><rect x="555.59" y="71.6" width="2.2" height="1.6" fill="#2b1fd6"/><rect x="559.59" y="73.6" width="2.2" height="1.6" fill="#2b1fd6"/><rect x="563.59" y="73.6" width="2.2" height="1.6" fill="#2b1fd6"/><rect x="567.59" y="69" width="2.2" height="1.6" fill="#2b1fd6"/><rect x="571.79" y="67" width="5" height="1.6" fill="#2b1fd6"/><rect x="579.79" y="65" width="5" height="1.6" fill="#2b1fd6"/><rect x="587.8" y="59" width="5" height="1.6" fill="#2b1fd6"/><rect x="595.6" y="71.6" width="2.2" height="1.6" fill="#2b1fd6"/><rect x="599.6" y="71.6" width="2.2" height="1.6" fill="#2b1fd6"/><rect x="603.8" y="59" width="5" height="1.6" fill="#2b1fd6"/><rect x="611.8" y="59" width="5" height="1.6" fill="#2b1fd6"/><rect x="619.61" y="69" width="2.2" height="1.6" fill="#2b1fd6"/><rect x="623.61" y="67" width="2.2" height="1.6" fill="#2b1fd6"/><rect x="627.61" y="65" width="2.2" height="1.6" fill="#2b1fd6"/><rect x="631.61" y="59" width="2.2" height="1.6" fill="#2b1fd6"/><rect x="635.81" y="71.6" width="5" height="1.6" fill="#2b1fd6"/><rect x="643.81" y="73.6" width="5" height="1.6" fill="#2b1fd6"/><rect x="651.62" y="69" width="2.2" height="1.6" fill="#2b1fd6"/><rect x="655.62" y="71.6" width="2.2" height="1.6" fill="#2b1fd6"/><rect x="659.62" y="71.6" width="2.2" height="1.6" fill="#2b1fd6"/><rect x="663.62" y="73.6" width="2.2" height="1.6" fill="#2b1fd6"/><rect x="667.62" y="73.6" width="2.2" height="1.6" fill="#2b1fd6"/><rect x="671.62" y="71.6" width="2.2" height="1.6" fill="#2b1fd6"/><rect x="675.62" y="69" width="2.2" height="1.6" fill="#2b1fd6"/><rect x="679.62" y="73.6" width="2.2" height="1.6" fill="#2b1fd6"/><rect x="683.83" y="71.6" width="5" height="1.6" fill="#2b1fd6"/><rect x="691.83" y="67" width="5" height="1.6" fill="#2b1fd6"/><rect x="699.83" y="65" width="5" height="1.6" fill="#2b1fd6"/><rect x="707.83" y="59" width="5" height="1.6" fill="#2b1fd6"/><rect x="715.84" y="65" width="5" height="1.6" fill="#2b1fd6"/><rect x="723.84" y="67" width="5" height="1.6" fill="#2b1fd6"/><rect x="731.64" y="69" width="2.2" height="1.6" fill="#2b1fd6"/><rect x="735.64" y="69" width="2.2" height="1.6" fill="#2b1fd6"/><rect x="739.64" y="71.6" width="2.2" height="1.6" fill="#2b1fd6"/><rect x="743.64" y="59" width="2.2" height="1.6" fill="#2b1fd6"/><rect x="747.85" y="69" width="5" height="1.6" fill="#2b1fd6"/><rect x="755.85" y="71.6" width="5" height="1.6" fill="#2b1fd6"/><rect x="763.85" y="67" width="5" height="1.6" fill="#2b1fd6"/><rect x="771.65" y="63" width="2.2" height="1.6" fill="#2b1fd6"/><rect x="775.65" y="59" width="2.2" height="1.6" fill="#2b1fd6"/><rect x="779.86" y="69" width="5" height="1.6" fill="#2b1fd6"/><rect x="787.86" y="71.6" width="5" height="1.6" fill="#2b1fd6"/><rect x="795.86" y="73.6" width="5" height="1.6" fill="#2b1fd6"/><rect x="803.86" y="71.6" width="5" height="1.6" fill="#2b1fd6"/><rect x="811.87" y="69" width="5" height="1.6" fill="#2b1fd6"/><rect x="819.87" y="71.6" width="5" height="1.6" fill="#2b1fd6"/><rect x="827.67" y="73.6" width="2.2" height="1.6" fill="#2b1fd6"/><rect x="831.67" y="73.6" width="2.2" height="1.6" fill="#2b1fd6"/><rect x="835.67" y="73.6" width="2.2" height="1.6" fill="#2b1fd6"/><rect x="839.67" y="71.6" width="2.2" height="1.6" fill="#2b1fd6"/><rect x="843.88" y="73.6" width="5" height="1.6" fill="#2b1fd6"/><rect x="851.68" y="69" width="2.2" height="1.6" fill="#2b1fd6"/><rect x="855.68" y="73.6" width="2.2" height="1.6" fill="#2b1fd6"/><rect x="859.88" y="71.6" width="5" height="1.6" fill="#2b1fd6"/><rect x="867.88" y="69" width="5" height="1.6" fill="#2b1fd6"/><rect x="875.69" y="73.6" width="2.2" height="1.6" fill="#2b1fd6"/><rect x="879.69" y="73.6" width="2.2" height="1.6" fill="#2b1fd6"/><rect x="883.69" y="69" width="2.2" height="1.6" fill="#2b1fd6"/><rect x="887.69" y="65" width="2.2" height="1.6" fill="#2b1fd6"/><rect x="891.89" y="63" width="5" height="1.6" fill="#2b1fd6"/><rect x="899.89" y="65" width="5" height="1.6" fill="#2b1fd6"/><rect x="907.7" y="65" width="2.2" height="1.6" fill="#2b1fd6"/><rect x="911.7" y="65" width="2.2" height="1.6" fill="#2b1fd6"/><rect x="915.7" y="69" width="2.2" height="1.6" fill="#2b1fd6"/><rect x="919.7" y="65" width="2.2" height="1.6" fill="#2b1fd6"/><rect x="923.9" y="63" width="5" height="1.6" fill="#2b1fd6"/><rect x="931.9" y="65" width="5" height="1.6" fill="#2b1fd6"/><rect x="939.91" y="67" width="5" height="1.6" fill="#2b1fd6"/><rect x="947.91" y="69" width="5" height="1.6" fill="#2b1fd6"/><rect x="970.22" y="49.9" width="1" height="34" fill="#6558d8"/><rect x="1002.23" y="49.9" width="1" height="34" fill="#6558d8"/><rect x="1034.24" y="49.9" width="1" height="34" fill="#6558d8"/><rect x="1066.25" y="49.9" width="1" height="34" fill="#6558d8"/><rect x="1098.26" y="49.9" width="1" height="34" fill="#6558d8"/><rect x="1130.27" y="49.9" width="1" height="34" fill="#6558d8"/><rect x="1162.28" y="49.9" width="1" height="34" fill="#6558d8"/><rect x="1194.29" y="49.9" width="1" height="34" fill="#6558d8"/><rect x="1226.3" y="49.9" width="1" height="34" fill="#6558d8"/><rect x="1258.31" y="49.9" width="1" height="34" fill="#6558d8"/><rect x="1290.32" y="49.9" width="1" height="34" fill="#6558d8"/><rect x="1322.33" y="49.9" width="1" height="34" fill="#6558d8"/><rect x="1354.34" y="49.9" width="1" height="34" fill="#6558d8"/><rect x="955.91" y="73.6" width="5" height="1.6" fill="#2b1fd6"/><rect x="963.91" y="73.6" width="5" height="1.6" fill="#2b1fd6"/><rect x="971.72" y="73.6" width="2.2" height="1.6" fill="#2b1fd6"/><rect x="975.72" y="73.6" width="2.2" height="1.6" fill="#2b1fd6"/><rect x="979.72" y="59" width="2.2" height="1.6" fill="#2b1fd6"/><rect x="983.72" y="71.6" width="2.2" height="1.6" fill="#2b1fd6"/><rect x="987.92" y="71.6" width="5" height="1.6" fill="#2b1fd6"/><rect x="995.92" y="69" width="5" height="1.6" fill="#2b1fd6"/><rect x="1003.93" y="65" width="5" height="1.6" fill="#2b1fd6"/><rect x="1011.93" y="65" width="5" height="1.6" fill="#2b1fd6"/><rect x="1019.73" y="63" width="2.2" height="1.6" fill="#2b1fd6"/><rect x="1023.73" y="63" width="2.2" height="1.6" fill="#2b1fd6"/><rect x="1027.73" y="67" width="2.2" height="1.6" fill="#2b1fd6"/><rect x="1031.73" y="63" width="2.2" height="1.6" fill="#2b1fd6"/><rect x="1035.74" y="65" width="2.2" height="1.6" fill="#2b1fd6"/><rect x="1039.74" y="69" width="2.2" height="1.6" fill="#2b1fd6"/><rect x="1043.74" y="71.6" width="2.2" height="1.6" fill="#2b1fd6"/><rect x="1047.74" y="69" width="2.2" height="1.6" fill="#2b1fd6"/><rect x="1051.75" y="71.6" width="2.2" height="1.6" fill="#2b1fd6"/><rect x="1055.75" y="59" width="2.2" height="1.6" fill="#2b1fd6"/><rect x="1059.75" y="69" width="2.2" height="1.6" fill="#2b1fd6"/><rect x="1063.75" y="73.6" width="2.2" height="1.6" fill="#2b1fd6"/><rect x="1067.95" y="73.6" width="5" height="1.6" fill="#2b1fd6"/><rect x="1075.95" y="73.6" width="5" height="1.6" fill="#2b1fd6"/><rect x="1083.76" y="69" width="2.2" height="1.6" fill="#2b1fd6"/><rect x="1087.76" y="69" width="2.2" height="1.6" fill="#2b1fd6"/><rect x="1091.76" y="71.6" width="2.2" height="1.6" fill="#2b1fd6"/><rect x="1095.76" y="59" width="2.2" height="1.6" fill="#2b1fd6"/><rect x="1099.76" y="67" width="2.2" height="1.6" fill="#2b1fd6"/><rect x="1103.76" y="69" width="2.2" height="1.6" fill="#2b1fd6"/><rect x="1107.76" y="73.6" width="2.2" height="1.6" fill="#2b1fd6"/><rect x="1111.76" y="71.6" width="2.2" height="1.6" fill="#2b1fd6"/><rect x="1115.77" y="73.6" width="2.2" height="1.6" fill="#2b1fd6"/><rect x="1119.77" y="73.6" width="2.2" height="1.6" fill="#2b1fd6"/><rect x="1123.77" y="59" width="2.2" height="1.6" fill="#2b1fd6"/><rect x="1127.77" y="71.6" width="2.2" height="1.6" fill="#2b1fd6"/><rect x="1131.77" y="67" width="2.2" height="1.6" fill="#2b1fd6"/><rect x="1135.77" y="71.6" width="2.2" height="1.6" fill="#2b1fd6"/><rect x="1139.77" y="67" width="2.2" height="1.6" fill="#2b1fd6"/><rect x="1143.77" y="69" width="2.2" height="1.6" fill="#2b1fd6"/><rect x="1147.98" y="71.6" width="5" height="1.6" fill="#2b1fd6"/><rect x="1155.78" y="71.6" width="2.2" height="1.6" fill="#2b1fd6"/><rect x="1159.78" y="69" width="2.2" height="1.6" fill="#2b1fd6"/><rect x="1163.98" y="71.6" width="5" height="1.6" fill="#2b1fd6"/><rect x="1171.98" y="73.6" width="5" height="1.6" fill="#2b1fd6"/><rect x="1179.99" y="69" width="5" height="1.6" fill="#2b1fd6"/><rect x="1187.99" y="69" width="5" height="1.6" fill="#2b1fd6"/><rect x="1195.99" y="67" width="5" height="1.6" fill="#2b1fd6"/><rect x="1203.79" y="65" width="2.2" height="1.6" fill="#2b1fd6"/><rect x="1207.79" y="63" width="2.2" height="1.6" fill="#2b1fd6"/><rect x="1212" y="65" width="5" height="1.6" fill="#2b1fd6"/><rect x="1220" y="63" width="5" height="1.6" fill="#2b1fd6"/><rect x="1227.8" y="59" width="2.2" height="1.6" fill="#2b1fd6"/><rect x="1231.8" y="63" width="2.2" height="1.6" fill="#2b1fd6"/><rect x="1235.8" y="63" width="2.2" height="1.6" fill="#2b1fd6"/><rect x="1239.8" y="65" width="2.2" height="1.6" fill="#2b1fd6"/><rect x="1244.01" y="67" width="5" height="1.6" fill="#2b1fd6"/><rect x="1252.01" y="71.6" width="5" height="1.6" fill="#2b1fd6"/><rect x="1260.01" y="69" width="5" height="1.6" fill="#2b1fd6"/><rect x="1268.01" y="67" width="5" height="1.6" fill="#2b1fd6"/><rect x="1276.02" y="59" width="5" height="1.6" fill="#2b1fd6"/><rect x="1284.02" y="69" width="5" height="1.6" fill="#2b1fd6"/><rect x="1292.02" y="73.6" width="5" height="1.6" fill="#2b1fd6"/><rect x="1300.02" y="73.6" width="5" height="1.6" fill="#2b1fd6"/><rect x="1308.03" y="73.6" width="5" height="1.6" fill="#2b1fd6"/><rect x="1316.03" y="71.6" width="5" height="1.6" fill="#2b1fd6"/><rect x="1324.03" y="67" width="5" height="1.6" fill="#2b1fd6"/><rect x="1331.83" y="69" width="2.2" height="1.6" fill="#2b1fd6"/><rect x="1335.83" y="73.6" width="2.2" height="1.6" fill="#2b1fd6"/><rect x="1340.04" y="71.6" width="5" height="1.6" fill="#2b1fd6"/><rect x="1348.04" y="69" width="5" height="1.6" fill="#2b1fd6"/><rect x="1356.04" y="73.6" width="5" height="1.6" fill="#2b1fd6"/><rect x="1364.04" y="73.6" width="5" height="1.6" fill="#2b1fd6"/><rect x="1372.05" y="73.6" width="5" height="1.6" fill="#2b1fd6"/><rect x="1380.05" y="73.6" width="5" height="1.6" fill="#2b1fd6"/><rect x="1418.36" y="49.9" width="1" height="34" fill="#6558d8"/><rect x="1450.37" y="49.9" width="1" height="34" fill="#6558d8"/><rect x="1482.38" y="49.9" width="1" height="34" fill="#6558d8"/><rect x="1514.39" y="49.9" width="1" height="34" fill="#6558d8"/><rect x="1546.4" y="49.9" width="1" height="34" fill="#6558d8"/><rect x="1578.41" y="49.9" width="1" height="34" fill="#6558d8"/><rect x="1610.42" y="49.9" width="1" height="34" fill="#6558d8"/><rect x="1642.43" y="49.9" width="1" height="34" fill="#6558d8"/><rect x="1674.44" y="49.9" width="1" height="34" fill="#6558d8"/><rect x="1706.45" y="49.9" width="1" height="34" fill="#6558d8"/><rect x="1738.46" y="49.9" width="1" height="34" fill="#6558d8"/><rect x="1770.47" y="49.9" width="1" height="34" fill="#6558d8"/><rect x="1802.48" y="49.9" width="1" height="34" fill="#6558d8"/><rect x="1834.49" y="49.9" width="1" height="34" fill="#6558d8"/><rect x="1866.5" y="49.9" width="1" height="34" fill="#6558d8"/><rect x="1898.51" y="49.9" width="1" height="34" fill="#6558d8"/><rect x="1387.85" y="67" width="2.2" height="1.6" fill="#2b1fd6"/><rect x="1391.85" y="69" width="2.2" height="1.6" fill="#2b1fd6"/><rect x="1395.85" y="67" width="2.2" height="1.6" fill="#2b1fd6"/><rect x="1399.85" y="65" width="2.2" height="1.6" fill="#2b1fd6"/><rect x="1404.06" y="59" width="5" height="1.6" fill="#2b1fd6"/><rect x="1411.86" y="65" width="2.2" height="1.6" fill="#2b1fd6"/><rect x="1415.86" y="65" width="2.2" height="1.6" fill="#2b1fd6"/><rect x="1420.06" y="59" width="5" height="1.6" fill="#2b1fd6"/><rect x="1427.86" y="63" width="2.2" height="1.6" fill="#2b1fd6"/><rect x="1431.86" y="59" width="2.2" height="1.6" fill="#2b1fd6"/><rect x="1436.07" y="69" width="5" height="1.6" fill="#2b1fd6"/><rect x="1443.87" y="67" width="2.2" height="1.6" fill="#2b1fd6"/><rect x="1447.87" y="67" width="2.2" height="1.6" fill="#2b1fd6"/><rect x="1452.07" y="71.6" width="5" height="1.6" fill="#2b1fd6"/><rect x="1460.07" y="73.6" width="5" height="1.6" fill="#2b1fd6"/><rect x="1468.08" y="71.6" width="5" height="1.6" fill="#2b1fd6"/><rect x="1475.88" y="69" width="2.2" height="1.6" fill="#2b1fd6"/><rect x="1479.88" y="65" width="2.2" height="1.6" fill="#2b1fd6"/><rect x="1484.08" y="67" width="5" height="1.6" fill="#2b1fd6"/><rect x="1491.88" y="65" width="2.2" height="1.6" fill="#2b1fd6"/><rect x="1495.88" y="65" width="2.2" height="1.6" fill="#2b1fd6"/><rect x="1500.09" y="67" width="5" height="1.6" fill="#2b1fd6"/><rect x="1508.09" y="67" width="5" height="1.6" fill="#2b1fd6"/><rect x="1516.09" y="71.6" width="5" height="1.6" fill="#2b1fd6"/><rect x="1524.09" y="71.6" width="5" height="1.6" fill="#2b1fd6"/><rect x="1532.1" y="73.6" width="5" height="1.6" fill="#2b1fd6"/><rect x="1540.1" y="73.6" width="5" height="1.6" fill="#2b1fd6"/><rect x="1548.1" y="73.6" width="5" height="1.6" fill="#2b1fd6"/><rect x="1556.1" y="71.6" width="5" height="1.6" fill="#2b1fd6"/><rect x="1564.11" y="67" width="5" height="1.6" fill="#2b1fd6"/><rect x="1572.11" y="65" width="5" height="1.6" fill="#2b1fd6"/><rect x="1579.91" y="67" width="2.2" height="1.6" fill="#2b1fd6"/><rect x="1583.91" y="67" width="2.2" height="1.6" fill="#2b1fd6"/><rect x="1587.91" y="67" width="2.2" height="1.6" fill="#2b1fd6"/><rect x="1591.91" y="59" width="2.2" height="1.6" fill="#2b1fd6"/><rect x="1596.12" y="71.6" width="5" height="1.6" fill="#2b1fd6"/><rect x="1604.12" y="67" width="5" height="1.6" fill="#2b1fd6"/><rect x="1612.12" y="65" width="5" height="1.6" fill="#2b1fd6"/><rect x="1620.12" y="63" width="5" height="1.6" fill="#2b1fd6"/><rect x="1628.13" y="63" width="5" height="1.6" fill="#2b1fd6"/><rect x="1636.13" y="59" width="5" height="1.6" fill="#2b1fd6"/><rect x="1644.13" y="65" width="5" height="1.6" fill="#2b1fd6"/><rect x="1651.93" y="69" width="2.2" height="1.6" fill="#2b1fd6"/><rect x="1655.93" y="65" width="2.2" height="1.6" fill="#2b1fd6"/><rect x="1660.14" y="63" width="5" height="1.6" fill="#2b1fd6"/><rect x="1668.14" y="65" width="5" height="1.6" fill="#2b1fd6"/><rect x="1676.14" y="59" width="5" height="1.6" fill="#2b1fd6"/><rect x="1683.94" y="65" width="2.2" height="1.6" fill="#2b1fd6"/><rect x="1687.94" y="59" width="2.2" height="1.6" fill="#2b1fd6"/><rect x="1692.15" y="69" width="5" height="1.6" fill="#2b1fd6"/><rect x="1700.15" y="65" width="5" height="1.6" fill="#2b1fd6"/><rect x="1708.15" y="67" width="5" height="1.6" fill="#2b1fd6"/><rect x="1715.95" y="69" width="2.2" height="1.6" fill="#2b1fd6"/><rect x="1719.95" y="67" width="2.2" height="1.6" fill="#2b1fd6"/><rect x="1724.16" y="63" width="5" height="1.6" fill="#2b1fd6"/><rect x="1732.16" y="67" width="5" height="1.6" fill="#2b1fd6"/><rect x="1740.16" y="65" width="5" height="1.6" fill="#2b1fd6"/><rect x="1747.96" y="63" width="2.2" height="1.6" fill="#2b1fd6"/><rect x="1751.96" y="59" width="2.2" height="1.6" fill="#2b1fd6"/><rect x="1756.17" y="65" width="5" height="1.6" fill="#2b1fd6"/><rect x="1764.17" y="67" width="5" height="1.6" fill="#2b1fd6"/><rect x="1772.17" y="63" width="5" height="1.6" fill="#2b1fd6"/><rect x="1780.17" y="63" width="5" height="1.6" fill="#2b1fd6"/><rect x="1788.18" y="59" width="5" height="1.6" fill="#2b1fd6"/><rect x="1796.18" y="65" width="5" height="1.6" fill="#2b1fd6"/><rect x="1804.18" y="67" width="5" height="1.6" fill="#2b1fd6"/><rect x="1812.18" y="65" width="5" height="1.6" fill="#2b1fd6"/><rect x="251.9" y="101.62" width="1" height="3.2" fill="#b0161d"/><rect x="255.9" y="101.62" width="1" height="3.2" fill="#b0161d"/><rect x="259.9" y="101.62" width="1" height="3.2" fill="#b0161d"/><rect x="263.9" y="101.62" width="1" height="3.2" fill="#b0161d"/><rect x="298.01" y="87.52" width="1" height="34" fill="#c9282e"/><rect x="322.12" y="87.52" width="0.8" height="34" fill="#c9282e"/><rect x="267.9" y="101.62" width="1" height="3.2" fill="#b0161d"/><rect x="271.9" y="101.62" width="1" height="3.2" fill="#b0161d"/><rect x="271.9" y="93.02" width="1" height="2.2" fill="#b0161d"/><rect x="275.9" y="101.62" width="1" height="3.2" fill="#b0161d"/><rect x="279.9" y="101.62" width="1" height="3.2" fill="#b0161d"/><rect x="279.9" y="115.62" width="1" height="2.8" fill="#b0161d"/><rect x="281.4" y="116.62" width="1" height="2.2" fill="#b0161d"/><rect x="283.9" y="101.62" width="1" height="3.2" fill="#b0161d"/><rect x="283.9" y="115.02" width="1" height="2.8" fill="#b0161d"/><rect x="283.9" y="93.02" width="1" height="2.2" fill="#b0161d"/><rect x="287.9" y="101.62" width="1" height="3.2" fill="#b0161d"/><rect x="287.9" y="114.42" width="1" height="2.8" fill="#b0161d"/><rect x="288.5" y="118.02" width="1.6" height="1.4" fill="#b0161d"/><rect x="291.9" y="101.62" width="1" height="3.2" fill="#b0161d"/><rect x="291.9" y="115.62" width="1" height="2.8" fill="#b0161d"/><rect x="293.4" y="117.42" width="1" height="2.2" fill="#b0161d"/><rect x="295.9" y="101.62" width="1" height="3.2" fill="#b0161d"/><rect x="295.9" y="115.62" width="1" height="2.8" fill="#b0161d"/><rect x="297.4" y="116.62" width="1" height="2.2" fill="#b0161d"/><rect x="299.9" y="101.62" width="1" height="3.2" fill="#b0161d"/><rect x="299.9" y="115.62" width="1" height="2.8" fill="#b0161d"/><rect x="301.4" y="116.62" width="1" height="2.2" fill="#b0161d"/><rect x="303.9" y="101.62" width="1" height="3.2" fill="#b0161d"/><rect x="303.9" y="115.02" width="1" height="2.8" fill="#b0161d"/><rect x="307.9" y="101.62" width="1" height="3.2" fill="#b0161d"/><rect x="307.9" y="115.02" width="1" height="2.8" fill="#b0161d"/><rect x="309.4" y="116.62" width="1" height="2.2" fill="#b0161d"/><rect x="311.9" y="101.62" width="1" height="3.2" fill="#b0161d"/><rect x="311.9" y="114.42" width="1" height="2.8" fill="#b0161d"/><rect x="313.4" y="117.42" width="1" height="2.2" fill="#b0161d"/><rect x="315.9" y="101.62" width="1" height="3.2" fill="#b0161d"/><rect x="315.9" y="115.02" width="1" height="2.8" fill="#b0161d"/><rect x="317.4" y="117.42" width="1" height="2.2" fill="#b0161d"/><rect x="316.5" y="118.02" width="1.6" height="1.4" fill="#b0161d"/><rect x="315.9" y="93.02" width="1" height="2.2" fill="#b0161d"/><rect x="319.9" y="101.62" width="1" height="3.2" fill="#b0161d"/><rect x="319.9" y="115.02" width="1" height="2.8" fill="#b0161d"/><rect x="321.4" y="117.42" width="1" height="2.2" fill="#b0161d"/><rect x="319.9" y="93.02" width="1" height="2.2" fill="#b0161d"/><rect x="323.9" y="101.62" width="1" height="3.2" fill="#b0161d"/><rect x="323.9" y="115.02" width="1" height="2.8" fill="#b0161d"/><rect x="325.4" y="117.42" width="1" height="2.2" fill="#b0161d"/><rect x="327.9" y="101.62" width="1" height="3.2" fill="#b0161d"/><rect x="327.9" y="114.42" width="1" height="2.8" fill="#b0161d"/><rect x="329.4" y="117.42" width="1" height="2.2" fill="#b0161d"/><rect x="362.03" y="87.52" width="1" height="34" fill="#c9282e"/><rect x="386.14" y="87.52" width="0.8" height="34" fill="#c9282e"/><rect x="331.7" y="109.62" width="1.2" height="1.3" fill="#b0161d"/><rect x="333.7" y="109.62" width="1.2" height="1.3" fill="#b0161d"/><rect x="331.9" y="115.02" width="1" height="2.8" fill="#b0161d"/><rect x="333.4" y="116.62" width="1" height="2.2" fill="#b0161d"/><rect x="332.5" y="118.02" width="1.6" height="1.4" fill="#b0161d"/><rect x="335.7" y="109.62" width="1.2" height="1.3" fill="#b0161d"/><rect x="337.7" y="109.62" width="1.2" height="1.3" fill="#b0161d"/><rect x="339.7" y="109.62" width="1.2" height="1.3" fill="#b0161d"/><rect x="341.7" y="109.62" width="1.2" height="1.3" fill="#b0161d"/><rect x="343.7" y="109.62" width="1.2" height="1.3" fill="#b0161d"/><rect x="345.7" y="109.62" width="1.2" height="1.3" fill="#b0161d"/><rect x="347.7" y="109.62" width="1.2" height="1.3" fill="#b0161d"/><rect x="349.7" y="109.62" width="1.2" height="1.3" fill="#b0161d"/><rect x="347.9" y="100.02" width="1" height="1.6" fill="#b0161d"/><rect x="351.7" y="109.62" width="1.2" height="1.3" fill="#b0161d"/><rect x="353.7" y="109.62" width="1.2" height="1.3" fill="#b0161d"/><rect x="351.9" y="115.02" width="1" height="2.8" fill="#b0161d"/><rect x="352.5" y="118.02" width="1.6" height="1.4" fill="#b0161d"/><rect x="355.7" y="109.62" width="1.2" height="1.3" fill="#b0161d"/><rect x="357.7" y="109.62" width="1.2" height="1.3" fill="#b0161d"/><rect x="355.9" y="115.02" width="1" height="2.8" fill="#b0161d"/><rect x="357.4" y="116.62" width="1" height="2.2" fill="#b0161d"/><rect x="359.7" y="109.62" width="1.2" height="1.3" fill="#b0161d"/><rect x="361.7" y="109.62" width="1.2" height="1.3" fill="#b0161d"/><rect x="359.9" y="100.02" width="1" height="1.6" fill="#b0161d"/><rect x="359.9" y="114.42" width="1" height="2.8" fill="#b0161d"/><rect x="360.5" y="118.02" width="1.6" height="1.4" fill="#b0161d"/><rect x="363.7" y="109.62" width="1.2" height="1.3" fill="#b0161d"/><rect x="365.7" y="109.62" width="1.2" height="1.3" fill="#b0161d"/><rect x="363.9" y="100.02" width="1" height="1.6" fill="#b0161d"/><rect x="363.9" y="115.02" width="1" height="2.8" fill="#b0161d"/><rect x="365.4" y="116.62" width="1" height="2.2" fill="#b0161d"/><rect x="363.9" y="93.02" width="1" height="2.2" fill="#b0161d"/><rect x="367.7" y="109.62" width="1.2" height="1.3" fill="#b0161d"/><rect x="369.7" y="109.62" width="1.2" height="1.3" fill="#b0161d"/><rect x="367.9" y="115.62" width="1" height="2.8" fill="#b0161d"/><rect x="369.4" y="117.42" width="1" height="2.2" fill="#b0161d"/><rect x="371.7" y="109.62" width="1.2" height="1.3" fill="#b0161d"/><rect x="373.7" y="109.62" width="1.2" height="1.3" fill="#b0161d"/><rect x="371.9" y="115.02" width="1" height="2.8" fill="#b0161d"/><rect x="373.4" y="117.42" width="1" height="2.2" fill="#b0161d"/><rect x="371.9" y="93.02" width="1" height="2.2" fill="#b0161d"/><rect x="375.7" y="109.62" width="1.2" height="1.3" fill="#b0161d"/><rect x="377.7" y="109.62" width="1.2" height="1.3" fill="#b0161d"/><rect x="375.9" y="115.02" width="1" height="2.8" fill="#b0161d"/><rect x="377.4" y="117.42" width="1" height="2.2" fill="#b0161d"/><rect x="379.7" y="109.62" width="1.2" height="1.3" fill="#b0161d"/><rect x="381.7" y="109.62" width="1.2" height="1.3" fill="#b0161d"/><rect x="379.9" y="114.42" width="1" height="2.8" fill="#b0161d"/><rect x="383.7" y="109.62" width="1.2" height="1.3" fill="#b0161d"/><rect x="385.7" y="109.62" width="1.2" height="1.3" fill="#b0161d"/><rect x="383.9" y="115.02" width="1" height="2.8" fill="#b0161d"/><rect x="385.4" y="116.62" width="1" height="2.2" fill="#b0161d"/><rect x="387.7" y="109.62" width="1.2" height="1.3" fill="#b0161d"/><rect x="389.7" y="109.62" width="1.2" height="1.3" fill="#b0161d"/><rect x="387.9" y="115.62" width="1" height="2.8" fill="#b0161d"/><rect x="389.4" y="117.42" width="1" height="2.2" fill="#b0161d"/><rect x="391.7" y="109.62" width="1.2" height="1.3" fill="#b0161d"/><rect x="393.7" y="109.62" width="1.2" height="1.3" fill="#b0161d"/><rect x="391.9" y="115.02" width="1" height="2.8" fill="#b0161d"/><rect x="393.4" y="117.42" width="1" height="2.2" fill="#b0161d"/><rect x="426.05" y="87.52" width="1" height="34" fill="#c9282e"/><rect x="450.16" y="87.52" width="0.8" height="34" fill="#c9282e"/><rect x="395.9" y="101.62" width="1" height="3.2" fill="#b0161d"/><rect x="399.9" y="101.62" width="1" height="3.2" fill="#b0161d"/><rect x="403.9" y="101.62" width="1" height="3.2" fill="#b0161d"/><rect x="407.9" y="101.62" width="1" height="3.2" fill="#b0161d"/><rect x="411.9" y="101.62" width="1" height="3.2" fill="#b0161d"/><rect x="411.9" y="115.62" width="1" height="2.8" fill="#b0161d"/><rect x="413.4" y="117.42" width="1" height="2.2" fill="#b0161d"/><rect x="415.9" y="101.62" width="1" height="3.2" fill="#b0161d"/><rect x="415.9" y="115.62" width="1" height="2.8" fill="#b0161d"/><rect x="417.4" y="116.62" width="1" height="2.2" fill="#b0161d"/><rect x="419.9" y="101.62" width="1" height="3.2" fill="#b0161d"/><rect x="419.9" y="115.62" width="1" height="2.8" fill="#b0161d"/><rect x="421.4" y="116.62" width="1" height="2.2" fill="#b0161d"/><rect x="420.5" y="118.02" width="1.6" height="1.4" fill="#b0161d"/><rect x="423.9" y="101.62" width="1" height="3.2" fill="#b0161d"/><rect x="423.9" y="115.02" width="1" height="2.8" fill="#b0161d"/><rect x="425.4" y="117.42" width="1" height="2.2" fill="#b0161d"/><rect x="427.9" y="101.62" width="1" height="3.2" fill="#b0161d"/><rect x="427.9" y="114.42" width="1" height="2.8" fill="#b0161d"/><rect x="429.4" y="117.42" width="1" height="2.2" fill="#b0161d"/><rect x="431.9" y="101.62" width="1" height="3.2" fill="#b0161d"/><rect x="431.9" y="115.62" width="1" height="2.8" fill="#b0161d"/><rect x="433.4" y="116.62" width="1" height="2.2" fill="#b0161d"/><rect x="432.5" y="118.02" width="1.6" height="1.4" fill="#b0161d"/><rect x="435.9" y="101.62" width="1" height="3.2" fill="#b0161d"/><rect x="435.9" y="115.02" width="1" height="2.8" fill="#b0161d"/><rect x="437.4" y="117.42" width="1" height="2.2" fill="#b0161d"/><rect x="439.9" y="101.62" width="1" height="3.2" fill="#b0161d"/><rect x="439.9" y="115.02" width="1" height="2.8" fill="#b0161d"/><rect x="441.4" y="117.42" width="1" height="2.2" fill="#b0161d"/><rect x="440.5" y="118.02" width="1.6" height="1.4" fill="#b0161d"/><rect x="443.9" y="101.62" width="1" height="3.2" fill="#b0161d"/><rect x="443.9" y="115.02" width="1" height="2.8" fill="#b0161d"/><rect x="444.5" y="118.02" width="1.6" height="1.4" fill="#b0161d"/><rect x="447.9" y="101.62" width="1" height="3.2" fill="#b0161d"/><rect x="447.9" y="115.62" width="1" height="2.8" fill="#b0161d"/><rect x="449.4" y="117.42" width="1" height="2.2" fill="#b0161d"/><rect x="451.9" y="101.62" width="1" height="3.2" fill="#b0161d"/><rect x="451.9" y="115.62" width="1" height="2.8" fill="#b0161d"/><rect x="453.4" y="117.42" width="1" height="2.2" fill="#b0161d"/><rect x="455.9" y="101.62" width="1" height="3.2" fill="#b0161d"/><rect x="455.9" y="115.62" width="1" height="2.8" fill="#b0161d"/><rect x="457.4" y="117.42" width="1" height="2.2" fill="#b0161d"/><rect x="456.5" y="118.02" width="1.6" height="1.4" fill="#b0161d"/><rect x="490.07" y="87.52" width="1" height="34" fill="#c9282e"/><rect x="514.18" y="87.52" width="0.8" height="34" fill="#c9282e"/><rect x="463.7" y="109.62" width="1.2" height="1.3" fill="#b0161d"/><rect x="465.7" y="109.62" width="1.2" height="1.3" fill="#b0161d"/><rect x="463.9" y="115.02" width="1" height="2.8" fill="#b0161d"/><rect x="465.4" y="117.42" width="1" height="2.2" fill="#b0161d"/><rect x="467.7" y="109.62" width="1.2" height="1.3" fill="#b0161d"/><rect x="469.7" y="109.62" width="1.2" height="1.3" fill="#b0161d"/><rect x="467.9" y="115.62" width="1" height="2.8" fill="#b0161d"/><rect x="469.4" y="116.62" width="1" height="2.2" fill="#b0161d"/><rect x="471.7" y="109.62" width="1.2" height="1.3" fill="#b0161d"/><rect x="473.7" y="109.62" width="1.2" height="1.3" fill="#b0161d"/><rect x="475.7" y="109.62" width="1.2" height="1.3" fill="#b0161d"/><rect x="477.7" y="109.62" width="1.2" height="1.3" fill="#b0161d"/><rect x="479.7" y="109.62" width="1.2" height="1.3" fill="#b0161d"/><rect x="481.7" y="109.62" width="1.2" height="1.3" fill="#b0161d"/><rect x="479.9" y="100.02" width="1" height="1.6" fill="#b0161d"/><rect x="479.9" y="115.62" width="1" height="2.8" fill="#b0161d"/><rect x="481.4" y="117.42" width="1" height="2.2" fill="#b0161d"/><rect x="483.7" y="109.62" width="1.2" height="1.3" fill="#b0161d"/><rect x="485.7" y="109.62" width="1.2" height="1.3" fill="#b0161d"/><rect x="483.9" y="115.02" width="1" height="2.8" fill="#b0161d"/><rect x="485.4" y="117.42" width="1" height="2.2" fill="#b0161d"/><rect x="487.7" y="109.62" width="1.2" height="1.3" fill="#b0161d"/><rect x="489.7" y="109.62" width="1.2" height="1.3" fill="#b0161d"/><rect x="487.9" y="114.42" width="1" height="2.8" fill="#b0161d"/><rect x="489.4" y="117.42" width="1" height="2.2" fill="#b0161d"/><rect x="491.7" y="109.62" width="1.2" height="1.3" fill="#b0161d"/><rect x="493.7" y="109.62" width="1.2" height="1.3" fill="#b0161d"/><rect x="491.9" y="115.02" width="1" height="2.8" fill="#b0161d"/><rect x="495.7" y="109.62" width="1.2" height="1.3" fill="#b0161d"/><rect x="497.7" y="109.62" width="1.2" height="1.3" fill="#b0161d"/><rect x="495.9" y="115.02" width="1" height="2.8" fill="#b0161d"/><rect x="497.4" y="117.42" width="1" height="2.2" fill="#b0161d"/><rect x="499.7" y="109.62" width="1.2" height="1.3" fill="#b0161d"/><rect x="501.7" y="109.62" width="1.2" height="1.3" fill="#b0161d"/><rect x="499.9" y="115.62" width="1" height="2.8" fill="#b0161d"/><rect x="500.5" y="118.02" width="1.6" height="1.4" fill="#b0161d"/><rect x="503.7" y="109.62" width="1.2" height="1.3" fill="#b0161d"/><rect x="505.7" y="109.62" width="1.2" height="1.3" fill="#b0161d"/><rect x="503.9" y="115.02" width="1" height="2.8" fill="#b0161d"/><rect x="504.5" y="118.02" width="1.6" height="1.4" fill="#b0161d"/><rect x="507.7" y="109.62" width="1.2" height="1.3" fill="#b0161d"/><rect x="509.7" y="109.62" width="1.2" height="1.3" fill="#b0161d"/><rect x="507.9" y="100.02" width="1" height="1.6" fill="#b0161d"/><rect x="507.9" y="114.42" width="1" height="2.8" fill="#b0161d"/><rect x="509.4" y="116.62" width="1" height="2.2" fill="#b0161d"/><rect x="507.9" y="93.02" width="1" height="2.2" fill="#b0161d"/><rect x="511.7" y="109.62" width="1.2" height="1.3" fill="#b0161d"/><rect x="513.7" y="109.62" width="1.2" height="1.3" fill="#b0161d"/><rect x="511.9" y="115.62" width="1" height="2.8" fill="#b0161d"/><rect x="513.4" y="117.42" width="1" height="2.2" fill="#b0161d"/><rect x="515.7" y="109.62" width="1.2" height="1.3" fill="#b0161d"/><rect x="517.7" y="109.62" width="1.2" height="1.3" fill="#b0161d"/><rect x="515.9" y="115.62" width="1" height="2.8" fill="#b0161d"/><rect x="517.4" y="116.62" width="1" height="2.2" fill="#b0161d"/><rect x="519.7" y="109.62" width="1.2" height="1.3" fill="#b0161d"/><rect x="521.7" y="109.62" width="1.2" height="1.3" fill="#b0161d"/><rect x="519.9" y="115.62" width="1" height="2.8" fill="#b0161d"/><rect x="521.4" y="116.62" width="1" height="2.2" fill="#b0161d"/><rect x="527.9" y="101.62" width="1" height="3.2" fill="#b0161d"/><rect x="527.9" y="115.02" width="1" height="2.8" fill="#b0161d"/><rect x="529.4" y="116.62" width="1" height="2.2" fill="#b0161d"/><rect x="531.9" y="101.62" width="1" height="3.2" fill="#b0161d"/><rect x="531.9" y="114.42" width="1" height="2.8" fill="#b0161d"/><rect x="535.9" y="101.62" width="1" height="3.2" fill="#b0161d"/><rect x="539.9" y="101.62" width="1" height="3.2" fill="#b0161d"/><rect x="543.9" y="101.62" width="1" height="3.2" fill="#b0161d"/><rect x="543.9" y="115.02" width="1" height="2.8" fill="#b0161d"/><rect x="545.4" y="116.62" width="1" height="2.2" fill="#b0161d"/><rect x="547.9" y="101.62" width="1" height="3.2" fill="#b0161d"/><rect x="547.9" y="115.02" width="1" height="2.8" fill="#b0161d"/><rect x="549.4" y="117.42" width="1" height="2.2" fill="#b0161d"/><rect x="551.9" y="101.62" width="1" height="3.2" fill="#b0161d"/><rect x="551.9" y="115.62" width="1" height="2.8" fill="#b0161d"/><rect x="553.4" y="116.62" width="1" height="2.2" fill="#b0161d"/><rect x="552.5" y="118.02" width="1.6" height="1.4" fill="#b0161d"/><rect x="559.9" y="101.62" width="1" height="3.2" fill="#b0161d"/><rect x="559.9" y="115.62" width="1" height="2.8" fill="#b0161d"/><rect x="560.5" y="118.02" width="1.6" height="1.4" fill="#b0161d"/><rect x="563.9" y="101.62" width="1" height="3.2" fill="#b0161d"/><rect x="567.9" y="101.62" width="1" height="3.2" fill="#b0161d"/><rect x="567.9" y="114.42" width="1" height="2.8" fill="#b0161d"/><rect x="569.4" y="117.42" width="1" height="2.2" fill="#b0161d"/><rect x="571.9" y="101.62" width="1" height="3.2" fill="#b0161d"/><rect x="575.9" y="101.62" width="1" height="3.2" fill="#b0161d"/><rect x="575.9" y="115.02" width="1" height="2.8" fill="#b0161d"/><rect x="577.4" y="117.42" width="1" height="2.2" fill="#b0161d"/><rect x="579.9" y="101.62" width="1" height="3.2" fill="#b0161d"/><rect x="579.9" y="115.62" width="1" height="2.8" fill="#b0161d"/><rect x="583.9" y="101.62" width="1" height="3.2" fill="#b0161d"/><rect x="583.9" y="114.42" width="1" height="2.8" fill="#b0161d"/><rect x="584.5" y="118.02" width="1.6" height="1.4" fill="#b0161d"/><rect x="618.11" y="87.52" width="1" height="34" fill="#c9282e"/><rect x="642.22" y="87.52" width="0.8" height="34" fill="#c9282e"/><rect x="591.9" y="101.62" width="1" height="3.2" fill="#b0161d"/><rect x="595.9" y="101.62" width="1" height="3.2" fill="#b0161d"/><rect x="599.9" y="101.62" width="1" height="3.2" fill="#b0161d"/><rect x="603.9" y="101.62" width="1" height="3.2" fill="#b0161d"/><rect x="607.9" y="101.62" width="1" height="3.2" fill="#b0161d"/><rect x="607.9" y="115.62" width="1" height="2.8" fill="#b0161d"/><rect x="609.4" y="117.42" width="1" height="2.2" fill="#b0161d"/><rect x="611.9" y="101.62" width="1" height="3.2" fill="#b0161d"/><rect x="611.9" y="115.62" width="1" height="2.8" fill="#b0161d"/><rect x="615.9" y="101.62" width="1" height="3.2" fill="#b0161d"/><rect x="615.9" y="115.02" width="1" height="2.8" fill="#b0161d"/><rect x="617.4" y="117.42" width="1" height="2.2" fill="#b0161d"/><rect x="616.5" y="118.02" width="1.6" height="1.4" fill="#b0161d"/><rect x="619.9" y="101.62" width="1" height="3.2" fill="#b0161d"/><rect x="619.9" y="114.42" width="1" height="2.8" fill="#b0161d"/><rect x="623.9" y="101.62" width="1" height="3.2" fill="#b0161d"/><rect x="623.9" y="114.42" width="1" height="2.8" fill="#b0161d"/><rect x="625.4" y="117.42" width="1" height="2.2" fill="#b0161d"/><rect x="624.5" y="118.02" width="1.6" height="1.4" fill="#b0161d"/><rect x="627.9" y="101.62" width="1" height="3.2" fill="#b0161d"/><rect x="627.9" y="115.62" width="1" height="2.8" fill="#b0161d"/><rect x="629.4" y="116.62" width="1" height="2.2" fill="#b0161d"/><rect x="631.9" y="101.62" width="1" height="3.2" fill="#b0161d"/><rect x="631.9" y="115.02" width="1" height="2.8" fill="#b0161d"/><rect x="633.4" y="116.62" width="1" height="2.2" fill="#b0161d"/><rect x="632.5" y="118.02" width="1.6" height="1.4" fill="#b0161d"/><rect x="635.9" y="101.62" width="1" height="3.2" fill="#b0161d"/><rect x="635.9" y="115.02" width="1" height="2.8" fill="#b0161d"/><rect x="639.9" y="101.62" width="1" height="3.2" fill="#b0161d"/><rect x="639.9" y="115.02" width="1" height="2.8" fill="#b0161d"/><rect x="643.9" y="101.62" width="1" height="3.2" fill="#b0161d"/><rect x="643.9" y="115.02" width="1" height="2.8" fill="#b0161d"/><rect x="645.4" y="117.42" width="1" height="2.2" fill="#b0161d"/><rect x="644.5" y="118.02" width="1.6" height="1.4" fill="#b0161d"/><rect x="647.9" y="101.62" width="1" height="3.2" fill="#b0161d"/><rect x="647.9" y="114.42" width="1" height="2.8" fill="#b0161d"/><rect x="682.13" y="87.52" width="1" height="34" fill="#c9282e"/><rect x="706.24" y="87.52" width="0.8" height="34" fill="#c9282e"/><rect x="655.9" y="101.62" width="1" height="3.2" fill="#b0161d"/><rect x="659.9" y="101.62" width="1" height="3.2" fill="#b0161d"/><rect x="659.9" y="114.42" width="1" height="2.8" fill="#b0161d"/><rect x="663.9" y="101.62" width="1" height="3.2" fill="#b0161d"/><rect x="667.9" y="101.62" width="1" height="3.2" fill="#b0161d"/><rect x="667.9" y="114.42" width="1" height="2.8" fill="#b0161d"/><rect x="669.4" y="117.42" width="1" height="2.2" fill="#b0161d"/><rect x="668.5" y="118.02" width="1.6" height="1.4" fill="#b0161d"/><rect x="671.9" y="101.62" width="1" height="3.2" fill="#b0161d"/><rect x="671.9" y="115.02" width="1" height="2.8" fill="#b0161d"/><rect x="675.9" y="101.62" width="1" height="3.2" fill="#b0161d"/><rect x="675.9" y="115.02" width="1" height="2.8" fill="#b0161d"/><rect x="677.4" y="117.42" width="1" height="2.2" fill="#b0161d"/><rect x="679.9" y="101.62" width="1" height="3.2" fill="#b0161d"/><rect x="679.9" y="115.62" width="1" height="2.8" fill="#b0161d"/><rect x="683.9" y="101.62" width="1" height="3.2" fill="#b0161d"/><rect x="683.9" y="114.42" width="1" height="2.8" fill="#b0161d"/><rect x="685.4" y="117.42" width="1" height="2.2" fill="#b0161d"/><rect x="687.9" y="101.62" width="1" height="3.2" fill="#b0161d"/><rect x="687.9" y="114.42" width="1" height="2.8" fill="#b0161d"/><rect x="689.4" y="117.42" width="1" height="2.2" fill="#b0161d"/><rect x="688.5" y="118.02" width="1.6" height="1.4" fill="#b0161d"/><rect x="691.9" y="101.62" width="1" height="3.2" fill="#b0161d"/><rect x="691.9" y="115.02" width="1" height="2.8" fill="#b0161d"/><rect x="693.4" y="116.62" width="1" height="2.2" fill="#b0161d"/><rect x="695.9" y="101.62" width="1" height="3.2" fill="#b0161d"/><rect x="695.9" y="115.02" width="1" height="2.8" fill="#b0161d"/><rect x="697.4" y="117.42" width="1" height="2.2" fill="#b0161d"/><rect x="699.9" y="101.62" width="1" height="3.2" fill="#b0161d"/><rect x="699.9" y="115.02" width="1" height="2.8" fill="#b0161d"/><rect x="701.4" y="117.42" width="1" height="2.2" fill="#b0161d"/><rect x="703.9" y="101.62" width="1" height="3.2" fill="#b0161d"/><rect x="703.9" y="115.02" width="1" height="2.8" fill="#b0161d"/><rect x="705.4" y="116.62" width="1" height="2.2" fill="#b0161d"/><rect x="704.5" y="118.02" width="1.6" height="1.4" fill="#b0161d"/><rect x="707.9" y="101.62" width="1" height="3.2" fill="#b0161d"/><rect x="707.9" y="115.02" width="1" height="2.8" fill="#b0161d"/><rect x="709.4" y="116.62" width="1" height="2.2" fill="#b0161d"/><rect x="711.9" y="101.62" width="1" height="3.2" fill="#b0161d"/><rect x="711.9" y="114.42" width="1" height="2.8" fill="#b0161d"/><rect x="746.15" y="87.52" width="1" height="34" fill="#c9282e"/><rect x="719.9" y="101.62" width="1" height="3.2" fill="#b0161d"/><rect x="723.9" y="101.62" width="1" height="3.2" fill="#b0161d"/><rect x="723.9" y="115.02" width="1" height="2.8" fill="#b0161d"/><rect x="725.4" y="116.62" width="1" height="2.2" fill="#b0161d"/><rect x="727.9" y="101.62" width="1" height="3.2" fill="#b0161d"/><rect x="731.9" y="101.62" width="1" height="3.2" fill="#b0161d"/><rect x="735.9" y="101.62" width="1" height="3.2" fill="#b0161d"/><rect x="735.9" y="115.02" width="1" height="2.8" fill="#b0161d"/><rect x="737.4" y="117.42" width="1" height="2.2" fill="#b0161d"/><rect x="736.5" y="118.02" width="1.6" height="1.4" fill="#b0161d"/><rect x="739.9" y="101.62" width="1" height="3.2" fill="#b0161d"/><rect x="739.9" y="115.62" width="1" height="2.8" fill="#b0161d"/><rect x="743.9" y="101.62" width="1" height="3.2" fill="#b0161d"/><rect x="743.9" y="115.02" width="1" height="2.8" fill="#b0161d"/><rect x="745.4" y="116.62" width="1" height="2.2" fill="#b0161d"/><rect x="747.9" y="101.62" width="1" height="3.2" fill="#b0161d"/><rect x="747.9" y="115.62" width="1" height="2.8" fill="#b0161d"/><rect x="751.9" y="101.62" width="1" height="3.2" fill="#b0161d"/><rect x="751.9" y="114.42" width="1" height="2.8" fill="#b0161d"/><rect x="753.4" y="117.42" width="1" height="2.2" fill="#b0161d"/><rect x="755.9" y="101.62" width="1" height="3.2" fill="#b0161d"/><rect x="755.9" y="115.02" width="1" height="2.8" fill="#b0161d"/><rect x="757.4" y="116.62" width="1" height="2.2" fill="#b0161d"/><rect x="759.9" y="101.62" width="1" height="3.2" fill="#b0161d"/><rect x="759.9" y="115.62" width="1" height="2.8" fill="#b0161d"/><rect x="761.4" y="116.62" width="1" height="2.2" fill="#b0161d"/><rect x="767.9" y="101.62" width="1" height="3.2" fill="#b0161d"/><rect x="767.9" y="114.42" width="1" height="2.8" fill="#b0161d"/><rect x="769.4" y="116.62" width="1" height="2.2" fill="#b0161d"/><rect x="771.9" y="101.62" width="1" height="3.2" fill="#b0161d"/><rect x="775.9" y="101.62" width="1" height="3.2" fill="#b0161d"/><rect x="775.9" y="115.62" width="1" height="2.8" fill="#b0161d"/><rect x="777.4" y="117.42" width="1" height="2.2" fill="#b0161d"/><rect x="810.17" y="87.52" width="1" height="34" fill="#c9282e"/><rect x="834.28" y="87.52" width="0.8" height="34" fill="#c9282e"/><rect x="783.9" y="101.62" width="1" height="3.2" fill="#b0161d"/><rect x="783.9" y="114.42" width="1" height="2.8" fill="#b0161d"/><rect x="785.4" y="117.42" width="1" height="2.2" fill="#b0161d"/><rect x="787.9" y="101.62" width="1" height="3.2" fill="#b0161d"/><rect x="791.9" y="101.62" width="1" height="3.2" fill="#b0161d"/><rect x="795.9" y="101.62" width="1" height="3.2" fill="#b0161d"/><rect x="799.9" y="101.62" width="1" height="3.2" fill="#b0161d"/><rect x="799.9" y="115.02" width="1" height="2.8" fill="#b0161d"/><rect x="801.4" y="117.42" width="1" height="2.2" fill="#b0161d"/><rect x="800.5" y="118.02" width="1.6" height="1.4" fill="#b0161d"/><rect x="803.9" y="101.62" width="1" height="3.2" fill="#b0161d"/><rect x="803.9" y="115.02" width="1" height="2.8" fill="#b0161d"/><rect x="805.4" y="116.62" width="1" height="2.2" fill="#b0161d"/><rect x="807.9" y="101.62" width="1" height="3.2" fill="#b0161d"/><rect x="807.9" y="114.42" width="1" height="2.8" fill="#b0161d"/><rect x="808.5" y="118.02" width="1.6" height="1.4" fill="#b0161d"/><rect x="811.9" y="101.62" width="1" height="3.2" fill="#b0161d"/><rect x="811.9" y="114.42" width="1" height="2.8" fill="#b0161d"/><rect x="813.4" y="116.62" width="1" height="2.2" fill="#b0161d"/><rect x="812.5" y="118.02" width="1.6" height="1.4" fill="#b0161d"/><rect x="815.9" y="101.62" width="1" height="3.2" fill="#b0161d"/><rect x="815.9" y="114.42" width="1" height="2.8" fill="#b0161d"/><rect x="817.4" y="116.62" width="1" height="2.2" fill="#b0161d"/><rect x="819.9" y="101.62" width="1" height="3.2" fill="#b0161d"/><rect x="819.9" y="114.42" width="1" height="2.8" fill="#b0161d"/><rect x="823.9" y="101.62" width="1" height="3.2" fill="#b0161d"/><rect x="823.9" y="115.02" width="1" height="2.8" fill="#b0161d"/><rect x="825.4" y="117.42" width="1" height="2.2" fill="#b0161d"/><rect x="827.9" y="101.62" width="1" height="3.2" fill="#b0161d"/><rect x="827.9" y="115.62" width="1" height="2.8" fill="#b0161d"/><rect x="829.4" y="117.42" width="1" height="2.2" fill="#b0161d"/><rect x="828.5" y="118.02" width="1.6" height="1.4" fill="#b0161d"/><rect x="831.9" y="101.62" width="1" height="3.2" fill="#b0161d"/><rect x="831.9" y="114.42" width="1" height="2.8" fill="#b0161d"/><rect x="833.4" y="116.62" width="1" height="2.2" fill="#b0161d"/><rect x="835.9" y="101.62" width="1" height="3.2" fill="#b0161d"/><rect x="835.9" y="115.02" width="1" height="2.8" fill="#b0161d"/><rect x="836.5" y="118.02" width="1.6" height="1.4" fill="#b0161d"/><rect x="839.9" y="101.62" width="1" height="3.2" fill="#b0161d"/><rect x="839.9" y="114.42" width="1" height="2.8" fill="#b0161d"/><rect x="841.4" y="116.62" width="1" height="2.2" fill="#b0161d"/><rect x="840.5" y="118.02" width="1.6" height="1.4" fill="#b0161d"/><rect x="874.19" y="87.52" width="1" height="34" fill="#c9282e"/><rect x="898.3" y="87.52" width="0.8" height="34" fill="#c9282e"/><rect x="847.9" y="101.62" width="1" height="3.2" fill="#b0161d"/><rect x="851.9" y="101.62" width="1" height="3.2" fill="#b0161d"/><rect x="851.9" y="115.02" width="1" height="2.8" fill="#b0161d"/><rect x="853.4" y="117.42" width="1" height="2.2" fill="#b0161d"/><rect x="855.9" y="101.62" width="1" height="3.2" fill="#b0161d"/><rect x="855.9" y="115.62" width="1" height="2.8" fill="#b0161d"/><rect x="856.5" y="118.02" width="1.6" height="1.4" fill="#b0161d"/><rect x="859.9" y="101.62" width="1" height="3.2" fill="#b0161d"/><rect x="859.9" y="115.62" width="1" height="2.8" fill="#b0161d"/><rect x="859.9" y="93.02" width="1" height="2.2" fill="#b0161d"/><rect x="863.9" y="101.62" width="1" height="3.2" fill="#b0161d"/><rect x="863.9" y="115.62" width="1" height="2.8" fill="#b0161d"/><rect x="865.4" y="116.62" width="1" height="2.2" fill="#b0161d"/><rect x="867.9" y="101.62" width="1" height="3.2" fill="#b0161d"/><rect x="867.9" y="115.02" width="1" height="2.8" fill="#b0161d"/><rect x="869.4" y="116.62" width="1" height="2.2" fill="#b0161d"/><rect x="868.5" y="118.02" width="1.6" height="1.4" fill="#b0161d"/><rect x="871.9" y="101.62" width="1" height="3.2" fill="#b0161d"/><rect x="871.9" y="114.42" width="1" height="2.8" fill="#b0161d"/><rect x="873.4" y="117.42" width="1" height="2.2" fill="#b0161d"/><rect x="875.9" y="101.62" width="1" height="3.2" fill="#b0161d"/><rect x="875.9" y="115.02" width="1" height="2.8" fill="#b0161d"/><rect x="877.4" y="116.62" width="1" height="2.2" fill="#b0161d"/><rect x="879.9" y="101.62" width="1" height="3.2" fill="#b0161d"/><rect x="879.9" y="115.62" width="1" height="2.8" fill="#b0161d"/><rect x="881.4" y="116.62" width="1" height="2.2" fill="#b0161d"/><rect x="883.9" y="101.62" width="1" height="3.2" fill="#b0161d"/><rect x="883.9" y="115.62" width="1" height="2.8" fill="#b0161d"/><rect x="885.4" y="116.62" width="1" height="2.2" fill="#b0161d"/><rect x="887.9" y="101.62" width="1" height="3.2" fill="#b0161d"/><rect x="887.9" y="115.02" width="1" height="2.8" fill="#b0161d"/><rect x="891.9" y="101.62" width="1" height="3.2" fill="#b0161d"/><rect x="891.9" y="115.62" width="1" height="2.8" fill="#b0161d"/><rect x="893.4" y="116.62" width="1" height="2.2" fill="#b0161d"/><rect x="895.9" y="101.62" width="1" height="3.2" fill="#b0161d"/><rect x="895.9" y="115.02" width="1" height="2.8" fill="#b0161d"/><rect x="897.4" y="117.42" width="1" height="2.2" fill="#b0161d"/><rect x="899.9" y="101.62" width="1" height="3.2" fill="#b0161d"/><rect x="899.9" y="115.02" width="1" height="2.8" fill="#b0161d"/><rect x="900.5" y="118.02" width="1.6" height="1.4" fill="#b0161d"/><rect x="903.9" y="101.62" width="1" height="3.2" fill="#b0161d"/><rect x="903.9" y="114.42" width="1" height="2.8" fill="#b0161d"/><rect x="938.21" y="87.52" width="1" height="34" fill="#c9282e"/><rect x="911.9" y="101.62" width="1" height="3.2" fill="#b0161d"/><rect x="911.9" y="115.02" width="1" height="2.8" fill="#b0161d"/><rect x="913.4" y="116.62" width="1" height="2.2" fill="#b0161d"/><rect x="915.9" y="101.62" width="1" height="3.2" fill="#b0161d"/><rect x="915.9" y="93.02" width="1" height="2.2" fill="#b0161d"/><rect x="919.9" y="101.62" width="1" height="3.2" fill="#b0161d"/><rect x="919.9" y="115.02" width="1" height="2.8" fill="#b0161d"/><rect x="921.4" y="117.42" width="1" height="2.2" fill="#b0161d"/><rect x="923.9" y="101.62" width="1" height="3.2" fill="#b0161d"/><rect x="923.9" y="114.42" width="1" height="2.8" fill="#b0161d"/><rect x="925.4" y="117.42" width="1" height="2.2" fill="#b0161d"/><rect x="927.9" y="101.62" width="1" height="3.2" fill="#b0161d"/><rect x="927.9" y="114.42" width="1" height="2.8" fill="#b0161d"/><rect x="929.4" y="116.62" width="1" height="2.2" fill="#b0161d"/><rect x="928.5" y="118.02" width="1.6" height="1.4" fill="#b0161d"/><rect x="931.9" y="101.62" width="1" height="3.2" fill="#b0161d"/><rect x="931.9" y="115.02" width="1" height="2.8" fill="#b0161d"/><rect x="933.4" y="116.62" width="1" height="2.2" fill="#b0161d"/><rect x="935.9" y="101.62" width="1" height="3.2" fill="#b0161d"/><rect x="935.9" y="114.42" width="1" height="2.8" fill="#b0161d"/><rect x="939.9" y="101.62" width="1" height="3.2" fill="#b0161d"/><rect x="939.9" y="115.62" width="1" height="2.8" fill="#b0161d"/><rect x="941.4" y="117.42" width="1" height="2.2" fill="#b0161d"/><rect x="943.9" y="101.62" width="1" height="3.2" fill="#b0161d"/><rect x="943.9" y="115.02" width="1" height="2.8" fill="#b0161d"/><rect x="945.4" y="116.62" width="1" height="2.2" fill="#b0161d"/><rect x="947.9" y="101.62" width="1" height="3.2" fill="#b0161d"/><rect x="947.9" y="114.42" width="1" height="2.8" fill="#b0161d"/><rect x="949.4" y="117.42" width="1" height="2.2" fill="#b0161d"/><rect x="948.5" y="118.02" width="1.6" height="1.4" fill="#b0161d"/><rect x="951.9" y="101.62" width="1" height="3.2" fill="#b0161d"/><rect x="951.9" y="115.02" width="1" height="2.8" fill="#b0161d"/><rect x="953.4" y="116.62" width="1" height="2.2" fill="#b0161d"/><rect x="970.22" y="87.52" width="1" height="34" fill="#c9282e"/><rect x="1002.23" y="87.52" width="1" height="34" fill="#c9282e"/><rect x="1010.33" y="87.52" width="0.8" height="34" fill="#c9282e"/><rect x="959.7" y="109.62" width="1.2" height="1.3" fill="#b0161d"/><rect x="961.7" y="109.62" width="1.2" height="1.3" fill="#b0161d"/><rect x="963.7" y="109.62" width="1.2" height="1.3" fill="#b0161d"/><rect x="965.7" y="109.62" width="1.2" height="1.3" fill="#b0161d"/><rect x="967.7" y="109.62" width="1.2" height="1.3" fill="#b0161d"/><rect x="969.7" y="109.62" width="1.2" height="1.3" fill="#b0161d"/><rect x="971.7" y="109.62" width="1.2" height="1.3" fill="#b0161d"/><rect x="973.7" y="109.62" width="1.2" height="1.3" fill="#b0161d"/><rect x="975.7" y="109.62" width="1.2" height="1.3" fill="#b0161d"/><rect x="977.7" y="109.62" width="1.2" height="1.3" fill="#b0161d"/><rect x="975.9" y="115.02" width="1" height="2.8" fill="#b0161d"/><rect x="977.4" y="117.42" width="1" height="2.2" fill="#b0161d"/><rect x="979.7" y="109.62" width="1.2" height="1.3" fill="#b0161d"/><rect x="981.7" y="109.62" width="1.2" height="1.3" fill="#b0161d"/><rect x="979.9" y="115.02" width="1" height="2.8" fill="#b0161d"/><rect x="981.4" y="116.62" width="1" height="2.2" fill="#b0161d"/><rect x="980.5" y="118.02" width="1.6" height="1.4" fill="#b0161d"/><rect x="983.7" y="109.62" width="1.2" height="1.3" fill="#b0161d"/><rect x="985.7" y="109.62" width="1.2" height="1.3" fill="#b0161d"/><rect x="983.9" y="115.02" width="1" height="2.8" fill="#b0161d"/><rect x="987.7" y="109.62" width="1.2" height="1.3" fill="#b0161d"/><rect x="989.7" y="109.62" width="1.2" height="1.3" fill="#b0161d"/><rect x="987.9" y="114.42" width="1" height="2.8" fill="#b0161d"/><rect x="989.4" y="117.42" width="1" height="2.2" fill="#b0161d"/><rect x="988.5" y="118.02" width="1.6" height="1.4" fill="#b0161d"/><rect x="991.7" y="109.62" width="1.2" height="1.3" fill="#b0161d"/><rect x="993.7" y="109.62" width="1.2" height="1.3" fill="#b0161d"/><rect x="991.9" y="115.62" width="1" height="2.8" fill="#b0161d"/><rect x="993.4" y="116.62" width="1" height="2.2" fill="#b0161d"/><rect x="992.5" y="118.02" width="1.6" height="1.4" fill="#b0161d"/><rect x="991.9" y="93.02" width="1" height="2.2" fill="#b0161d"/><rect x="995.7" y="109.62" width="1.2" height="1.3" fill="#b0161d"/><rect x="997.7" y="109.62" width="1.2" height="1.3" fill="#b0161d"/><rect x="995.9" y="115.62" width="1" height="2.8" fill="#b0161d"/><rect x="997.4" y="117.42" width="1" height="2.2" fill="#b0161d"/><rect x="999.7" y="109.62" width="1.2" height="1.3" fill="#b0161d"/><rect x="1001.7" y="109.62" width="1.2" height="1.3" fill="#b0161d"/><rect x="999.9" y="115.62" width="1" height="2.8" fill="#b0161d"/><rect x="1003.7" y="109.62" width="1.2" height="1.3" fill="#b0161d"/><rect x="1005.7" y="109.62" width="1.2" height="1.3" fill="#b0161d"/><rect x="1003.9" y="114.42" width="1" height="2.8" fill="#b0161d"/><rect x="1005.4" y="116.62" width="1" height="2.2" fill="#b0161d"/><rect x="1007.7" y="109.62" width="1.2" height="1.3" fill="#b0161d"/><rect x="1009.7" y="109.62" width="1.2" height="1.3" fill="#b0161d"/><rect x="1007.9" y="115.62" width="1" height="2.8" fill="#b0161d"/><rect x="1009.4" y="116.62" width="1" height="2.2" fill="#b0161d"/><rect x="1008.5" y="118.02" width="1.6" height="1.4" fill="#b0161d"/><rect x="1011.7" y="109.62" width="1.2" height="1.3" fill="#b0161d"/><rect x="1013.7" y="109.62" width="1.2" height="1.3" fill="#b0161d"/><rect x="1011.9" y="115.62" width="1" height="2.8" fill="#b0161d"/><rect x="1015.7" y="109.62" width="1.2" height="1.3" fill="#b0161d"/><rect x="1017.7" y="109.62" width="1.2" height="1.3" fill="#b0161d"/><rect x="1015.9" y="115.62" width="1" height="2.8" fill="#b0161d"/><rect x="1034.24" y="87.52" width="1" height="34" fill="#c9282e"/><rect x="1066.25" y="87.52" width="1" height="34" fill="#c9282e"/><rect x="1074.35" y="87.52" width="0.8" height="34" fill="#c9282e"/><rect x="1023.9" y="101.62" width="1" height="3.2" fill="#b0161d"/><rect x="1023.9" y="115.62" width="1" height="2.8" fill="#b0161d"/><rect x="1025.4" y="117.42" width="1" height="2.2" fill="#b0161d"/><rect x="1027.9" y="101.62" width="1" height="3.2" fill="#b0161d"/><rect x="1027.9" y="115.02" width="1" height="2.8" fill="#b0161d"/><rect x="1029.4" y="116.62" width="1" height="2.2" fill="#b0161d"/><rect x="1028.5" y="118.02" width="1.6" height="1.4" fill="#b0161d"/><rect x="1031.9" y="101.62" width="1" height="3.2" fill="#b0161d"/><rect x="1035.9" y="101.62" width="1" height="3.2" fill="#b0161d"/><rect x="1039.9" y="101.62" width="1" height="3.2" fill="#b0161d"/><rect x="1039.9" y="115.02" width="1" height="2.8" fill="#b0161d"/><rect x="1043.9" y="101.62" width="1" height="3.2" fill="#b0161d"/><rect x="1043.9" y="115.62" width="1" height="2.8" fill="#b0161d"/><rect x="1045.4" y="116.62" width="1" height="2.2" fill="#b0161d"/><rect x="1047.9" y="101.62" width="1" height="3.2" fill="#b0161d"/><rect x="1047.9" y="115.02" width="1" height="2.8" fill="#b0161d"/><rect x="1049.4" y="116.62" width="1" height="2.2" fill="#b0161d"/><rect x="1051.9" y="101.62" width="1" height="3.2" fill="#b0161d"/><rect x="1051.9" y="115.62" width="1" height="2.8" fill="#b0161d"/><rect x="1053.4" y="116.62" width="1" height="2.2" fill="#b0161d"/><rect x="1052.5" y="118.02" width="1.6" height="1.4" fill="#b0161d"/><rect x="1055.9" y="101.62" width="1" height="3.2" fill="#b0161d"/><rect x="1055.9" y="115.62" width="1" height="2.8" fill="#b0161d"/><rect x="1057.4" y="117.42" width="1" height="2.2" fill="#b0161d"/><rect x="1059.9" y="101.62" width="1" height="3.2" fill="#b0161d"/><rect x="1059.9" y="114.42" width="1" height="2.8" fill="#b0161d"/><rect x="1063.9" y="101.62" width="1" height="3.2" fill="#b0161d"/><rect x="1063.9" y="115.02" width="1" height="2.8" fill="#b0161d"/><rect x="1065.4" y="117.42" width="1" height="2.2" fill="#b0161d"/><rect x="1067.9" y="101.62" width="1" height="3.2" fill="#b0161d"/><rect x="1067.9" y="114.42" width="1" height="2.8" fill="#b0161d"/><rect x="1069.4" y="116.62" width="1" height="2.2" fill="#b0161d"/><rect x="1071.9" y="101.62" width="1" height="3.2" fill="#b0161d"/><rect x="1071.9" y="115.62" width="1" height="2.8" fill="#b0161d"/><rect x="1075.9" y="101.62" width="1" height="3.2" fill="#b0161d"/><rect x="1075.9" y="114.42" width="1" height="2.8" fill="#b0161d"/><rect x="1076.5" y="118.02" width="1.6" height="1.4" fill="#b0161d"/><rect x="1079.9" y="101.62" width="1" height="3.2" fill="#b0161d"/><rect x="1079.9" y="114.42" width="1" height="2.8" fill="#b0161d"/><rect x="1081.4" y="117.42" width="1" height="2.2" fill="#b0161d"/><rect x="1098.26" y="87.52" width="1" height="34" fill="#c9282e"/><rect x="1130.27" y="87.52" width="1" height="34" fill="#c9282e"/><rect x="1138.37" y="87.52" width="0.8" height="34" fill="#c9282e"/><rect x="1087.9" y="101.62" width="1" height="3.2" fill="#b0161d"/><rect x="1087.9" y="114.42" width="1" height="2.8" fill="#b0161d"/><rect x="1091.9" y="101.62" width="1" height="3.2" fill="#b0161d"/><rect x="1095.9" y="101.62" width="1" height="3.2" fill="#b0161d"/><rect x="1099.9" y="101.62" width="1" height="3.2" fill="#b0161d"/><rect x="1103.9" y="101.62" width="1" height="3.2" fill="#b0161d"/><rect x="1103.9" y="115.02" width="1" height="2.8" fill="#b0161d"/><rect x="1104.5" y="118.02" width="1.6" height="1.4" fill="#b0161d"/><rect x="1107.9" y="101.62" width="1" height="3.2" fill="#b0161d"/><rect x="1107.9" y="115.02" width="1" height="2.8" fill="#b0161d"/><rect x="1111.9" y="101.62" width="1" height="3.2" fill="#b0161d"/><rect x="1111.9" y="114.42" width="1" height="2.8" fill="#b0161d"/><rect x="1113.4" y="117.42" width="1" height="2.2" fill="#b0161d"/><rect x="1115.9" y="101.62" width="1" height="3.2" fill="#b0161d"/><rect x="1115.9" y="114.42" width="1" height="2.8" fill="#b0161d"/><rect x="1117.4" y="117.42" width="1" height="2.2" fill="#b0161d"/><rect x="1119.9" y="101.62" width="1" height="3.2" fill="#b0161d"/><rect x="1119.9" y="115.02" width="1" height="2.8" fill="#b0161d"/><rect x="1121.4" y="116.62" width="1" height="2.2" fill="#b0161d"/><rect x="1123.9" y="101.62" width="1" height="3.2" fill="#b0161d"/><rect x="1123.9" y="115.62" width="1" height="2.8" fill="#b0161d"/><rect x="1125.4" y="117.42" width="1" height="2.2" fill="#b0161d"/><rect x="1124.5" y="118.02" width="1.6" height="1.4" fill="#b0161d"/><rect x="1127.9" y="101.62" width="1" height="3.2" fill="#b0161d"/><rect x="1127.9" y="115.62" width="1" height="2.8" fill="#b0161d"/><rect x="1129.4" y="116.62" width="1" height="2.2" fill="#b0161d"/><rect x="1128.5" y="118.02" width="1.6" height="1.4" fill="#b0161d"/><rect x="1131.9" y="101.62" width="1" height="3.2" fill="#b0161d"/><rect x="1131.9" y="115.02" width="1" height="2.8" fill="#b0161d"/><rect x="1135.9" y="101.62" width="1" height="3.2" fill="#b0161d"/><rect x="1135.9" y="115.02" width="1" height="2.8" fill="#b0161d"/><rect x="1136.5" y="118.02" width="1.6" height="1.4" fill="#b0161d"/><rect x="1139.9" y="101.62" width="1" height="3.2" fill="#b0161d"/><rect x="1139.9" y="114.42" width="1" height="2.8" fill="#b0161d"/><rect x="1141.4" y="117.42" width="1" height="2.2" fill="#b0161d"/><rect x="1143.9" y="101.62" width="1" height="3.2" fill="#b0161d"/><rect x="1143.9" y="115.02" width="1" height="2.8" fill="#b0161d"/><rect x="1145.4" y="116.62" width="1" height="2.2" fill="#b0161d"/><rect x="1162.28" y="87.52" width="1" height="34" fill="#c9282e"/><rect x="1194.29" y="87.52" width="1" height="34" fill="#c9282e"/><rect x="1202.39" y="87.52" width="0.8" height="34" fill="#c9282e"/><rect x="1151.7" y="109.62" width="1.2" height="1.3" fill="#b0161d"/><rect x="1153.7" y="109.62" width="1.2" height="1.3" fill="#b0161d"/><rect x="1155.7" y="109.62" width="1.2" height="1.3" fill="#b0161d"/><rect x="1157.7" y="109.62" width="1.2" height="1.3" fill="#b0161d"/><rect x="1159.7" y="109.62" width="1.2" height="1.3" fill="#b0161d"/><rect x="1161.7" y="109.62" width="1.2" height="1.3" fill="#b0161d"/><rect x="1163.7" y="109.62" width="1.2" height="1.3" fill="#b0161d"/><rect x="1165.7" y="109.62" width="1.2" height="1.3" fill="#b0161d"/><rect x="1163.9" y="100.02" width="1" height="1.6" fill="#b0161d"/><rect x="1167.7" y="109.62" width="1.2" height="1.3" fill="#b0161d"/><rect x="1169.7" y="109.62" width="1.2" height="1.3" fill="#b0161d"/><rect x="1167.9" y="115.62" width="1" height="2.8" fill="#b0161d"/><rect x="1169.4" y="116.62" width="1" height="2.2" fill="#b0161d"/><rect x="1171.7" y="109.62" width="1.2" height="1.3" fill="#b0161d"/><rect x="1173.7" y="109.62" width="1.2" height="1.3" fill="#b0161d"/><rect x="1171.9" y="100.02" width="1" height="1.6" fill="#b0161d"/><rect x="1171.9" y="115.62" width="1" height="2.8" fill="#b0161d"/><rect x="1175.7" y="109.62" width="1.2" height="1.3" fill="#b0161d"/><rect x="1177.7" y="109.62" width="1.2" height="1.3" fill="#b0161d"/><rect x="1175.9" y="115.02" width="1" height="2.8" fill="#b0161d"/><rect x="1179.7" y="109.62" width="1.2" height="1.3" fill="#b0161d"/><rect x="1181.7" y="109.62" width="1.2" height="1.3" fill="#b0161d"/><rect x="1179.9" y="115.62" width="1" height="2.8" fill="#b0161d"/><rect x="1181.4" y="116.62" width="1" height="2.2" fill="#b0161d"/><rect x="1180.5" y="118.02" width="1.6" height="1.4" fill="#b0161d"/><rect x="1183.7" y="109.62" width="1.2" height="1.3" fill="#b0161d"/><rect x="1185.7" y="109.62" width="1.2" height="1.3" fill="#b0161d"/><rect x="1183.9" y="100.02" width="1" height="1.6" fill="#b0161d"/><rect x="1183.9" y="114.42" width="1" height="2.8" fill="#b0161d"/><rect x="1185.4" y="117.42" width="1" height="2.2" fill="#b0161d"/><rect x="1187.7" y="109.62" width="1.2" height="1.3" fill="#b0161d"/><rect x="1189.7" y="109.62" width="1.2" height="1.3" fill="#b0161d"/><rect x="1187.9" y="115.02" width="1" height="2.8" fill="#b0161d"/><rect x="1189.4" y="117.42" width="1" height="2.2" fill="#b0161d"/><rect x="1191.7" y="109.62" width="1.2" height="1.3" fill="#b0161d"/><rect x="1193.7" y="109.62" width="1.2" height="1.3" fill="#b0161d"/><rect x="1191.9" y="115.62" width="1" height="2.8" fill="#b0161d"/><rect x="1195.7" y="109.62" width="1.2" height="1.3" fill="#b0161d"/><rect x="1197.7" y="109.62" width="1.2" height="1.3" fill="#b0161d"/><rect x="1195.9" y="100.02" width="1" height="1.6" fill="#b0161d"/><rect x="1195.9" y="115.62" width="1" height="2.8" fill="#b0161d"/><rect x="1197.4" y="117.42" width="1" height="2.2" fill="#b0161d"/><rect x="1199.7" y="109.62" width="1.2" height="1.3" fill="#b0161d"/><rect x="1201.7" y="109.62" width="1.2" height="1.3" fill="#b0161d"/><rect x="1199.9" y="115.62" width="1" height="2.8" fill="#b0161d"/><rect x="1201.4" y="117.42" width="1" height="2.2" fill="#b0161d"/><rect x="1203.7" y="109.62" width="1.2" height="1.3" fill="#b0161d"/><rect x="1205.7" y="109.62" width="1.2" height="1.3" fill="#b0161d"/><rect x="1203.9" y="114.42" width="1" height="2.8" fill="#b0161d"/><rect x="1207.7" y="109.62" width="1.2" height="1.3" fill="#b0161d"/><rect x="1209.7" y="109.62" width="1.2" height="1.3" fill="#b0161d"/><rect x="1207.9" y="100.02" width="1" height="1.6" fill="#b0161d"/><rect x="1207.9" y="114.42" width="1" height="2.8" fill="#b0161d"/><rect x="1209.4" y="116.62" width="1" height="2.2" fill="#b0161d"/><rect x="1226.3" y="87.52" width="1" height="34" fill="#c9282e"/><rect x="1258.31" y="87.52" width="1" height="34" fill="#c9282e"/><rect x="1266.41" y="87.52" width="0.8" height="34" fill="#c9282e"/><rect x="1215.7" y="109.62" width="1.2" height="1.3" fill="#b0161d"/><rect x="1217.7" y="109.62" width="1.2" height="1.3" fill="#b0161d"/><rect x="1215.9" y="100.02" width="1" height="1.6" fill="#b0161d"/><rect x="1215.9" y="114.42" width="1" height="2.8" fill="#b0161d"/><rect x="1217.4" y="117.42" width="1" height="2.2" fill="#b0161d"/><rect x="1219.7" y="109.62" width="1.2" height="1.3" fill="#b0161d"/><rect x="1221.7" y="109.62" width="1.2" height="1.3" fill="#b0161d"/><rect x="1223.7" y="109.62" width="1.2" height="1.3" fill="#b0161d"/><rect x="1225.7" y="109.62" width="1.2" height="1.3" fill="#b0161d"/><rect x="1223.9" y="100.02" width="1" height="1.6" fill="#b0161d"/><rect x="1227.7" y="109.62" width="1.2" height="1.3" fill="#b0161d"/><rect x="1229.7" y="109.62" width="1.2" height="1.3" fill="#b0161d"/><rect x="1227.9" y="100.02" width="1" height="1.6" fill="#b0161d"/><rect x="1231.7" y="109.62" width="1.2" height="1.3" fill="#b0161d"/><rect x="1233.7" y="109.62" width="1.2" height="1.3" fill="#b0161d"/><rect x="1231.9" y="115.62" width="1" height="2.8" fill="#b0161d"/><rect x="1233.4" y="116.62" width="1" height="2.2" fill="#b0161d"/><rect x="1232.5" y="118.02" width="1.6" height="1.4" fill="#b0161d"/><rect x="1235.7" y="109.62" width="1.2" height="1.3" fill="#b0161d"/><rect x="1237.7" y="109.62" width="1.2" height="1.3" fill="#b0161d"/><rect x="1235.9" y="114.42" width="1" height="2.8" fill="#b0161d"/><rect x="1237.4" y="117.42" width="1" height="2.2" fill="#b0161d"/><rect x="1239.7" y="109.62" width="1.2" height="1.3" fill="#b0161d"/><rect x="1241.7" y="109.62" width="1.2" height="1.3" fill="#b0161d"/><rect x="1239.9" y="100.02" width="1" height="1.6" fill="#b0161d"/><rect x="1239.9" y="115.02" width="1" height="2.8" fill="#b0161d"/><rect x="1241.4" y="117.42" width="1" height="2.2" fill="#b0161d"/><rect x="1243.7" y="109.62" width="1.2" height="1.3" fill="#b0161d"/><rect x="1245.7" y="109.62" width="1.2" height="1.3" fill="#b0161d"/><rect x="1243.9" y="100.02" width="1" height="1.6" fill="#b0161d"/><rect x="1243.9" y="115.02" width="1" height="2.8" fill="#b0161d"/><rect x="1245.4" y="116.62" width="1" height="2.2" fill="#b0161d"/><rect x="1243.9" y="93.02" width="1" height="2.2" fill="#b0161d"/><rect x="1247.7" y="109.62" width="1.2" height="1.3" fill="#b0161d"/><rect x="1249.7" y="109.62" width="1.2" height="1.3" fill="#b0161d"/><rect x="1247.9" y="100.02" width="1" height="1.6" fill="#b0161d"/><rect x="1247.9" y="115.62" width="1" height="2.8" fill="#b0161d"/><rect x="1249.4" y="116.62" width="1" height="2.2" fill="#b0161d"/><rect x="1251.7" y="109.62" width="1.2" height="1.3" fill="#b0161d"/><rect x="1253.7" y="109.62" width="1.2" height="1.3" fill="#b0161d"/><rect x="1251.9" y="115.62" width="1" height="2.8" fill="#b0161d"/><rect x="1253.4" y="117.42" width="1" height="2.2" fill="#b0161d"/><rect x="1252.5" y="118.02" width="1.6" height="1.4" fill="#b0161d"/><rect x="1255.7" y="109.62" width="1.2" height="1.3" fill="#b0161d"/><rect x="1257.7" y="109.62" width="1.2" height="1.3" fill="#b0161d"/><rect x="1255.9" y="115.62" width="1" height="2.8" fill="#b0161d"/><rect x="1259.7" y="109.62" width="1.2" height="1.3" fill="#b0161d"/><rect x="1261.7" y="109.62" width="1.2" height="1.3" fill="#b0161d"/><rect x="1259.9" y="115.62" width="1" height="2.8" fill="#b0161d"/><rect x="1263.7" y="109.62" width="1.2" height="1.3" fill="#b0161d"/><rect x="1265.7" y="109.62" width="1.2" height="1.3" fill="#b0161d"/><rect x="1263.9" y="100.02" width="1" height="1.6" fill="#b0161d"/><rect x="1263.9" y="114.42" width="1" height="2.8" fill="#b0161d"/><rect x="1265.4" y="116.62" width="1" height="2.2" fill="#b0161d"/><rect x="1264.5" y="118.02" width="1.6" height="1.4" fill="#b0161d"/><rect x="1267.7" y="109.62" width="1.2" height="1.3" fill="#b0161d"/><rect x="1269.7" y="109.62" width="1.2" height="1.3" fill="#b0161d"/><rect x="1267.9" y="114.42" width="1" height="2.8" fill="#b0161d"/><rect x="1269.4" y="117.42" width="1" height="2.2" fill="#b0161d"/><rect x="1271.7" y="109.62" width="1.2" height="1.3" fill="#b0161d"/><rect x="1273.7" y="109.62" width="1.2" height="1.3" fill="#b0161d"/><rect x="1271.9" y="115.62" width="1" height="2.8" fill="#b0161d"/><rect x="1273.4" y="116.62" width="1" height="2.2" fill="#b0161d"/><rect x="1290.32" y="87.52" width="1" height="34" fill="#c9282e"/><rect x="1322.33" y="87.52" width="1" height="34" fill="#c9282e"/><rect x="1330.43" y="87.52" width="0.8" height="34" fill="#c9282e"/><rect x="1279.7" y="109.62" width="1.2" height="1.3" fill="#b0161d"/><rect x="1281.7" y="109.62" width="1.2" height="1.3" fill="#b0161d"/><rect x="1283.7" y="109.62" width="1.2" height="1.3" fill="#b0161d"/><rect x="1285.7" y="109.62" width="1.2" height="1.3" fill="#b0161d"/><rect x="1283.9" y="100.02" width="1" height="1.6" fill="#b0161d"/><rect x="1283.9" y="115.62" width="1" height="2.8" fill="#b0161d"/><rect x="1287.7" y="109.62" width="1.2" height="1.3" fill="#b0161d"/><rect x="1289.7" y="109.62" width="1.2" height="1.3" fill="#b0161d"/><rect x="1287.9" y="115.02" width="1" height="2.8" fill="#b0161d"/><rect x="1291.7" y="109.62" width="1.2" height="1.3" fill="#b0161d"/><rect x="1293.7" y="109.62" width="1.2" height="1.3" fill="#b0161d"/><rect x="1295.7" y="109.62" width="1.2" height="1.3" fill="#b0161d"/><rect x="1297.7" y="109.62" width="1.2" height="1.3" fill="#b0161d"/><rect x="1295.9" y="100.02" width="1" height="1.6" fill="#b0161d"/><rect x="1295.9" y="114.42" width="1" height="2.8" fill="#b0161d"/><rect x="1297.4" y="116.62" width="1" height="2.2" fill="#b0161d"/><rect x="1296.5" y="118.02" width="1.6" height="1.4" fill="#b0161d"/><rect x="1299.7" y="109.62" width="1.2" height="1.3" fill="#b0161d"/><rect x="1301.7" y="109.62" width="1.2" height="1.3" fill="#b0161d"/><rect x="1299.9" y="115.02" width="1" height="2.8" fill="#b0161d"/><rect x="1301.4" y="117.42" width="1" height="2.2" fill="#b0161d"/><rect x="1300.5" y="118.02" width="1.6" height="1.4" fill="#b0161d"/><rect x="1303.7" y="109.62" width="1.2" height="1.3" fill="#b0161d"/><rect x="1305.7" y="109.62" width="1.2" height="1.3" fill="#b0161d"/><rect x="1303.9" y="115.02" width="1" height="2.8" fill="#b0161d"/><rect x="1305.4" y="116.62" width="1" height="2.2" fill="#b0161d"/><rect x="1307.7" y="109.62" width="1.2" height="1.3" fill="#b0161d"/><rect x="1309.7" y="109.62" width="1.2" height="1.3" fill="#b0161d"/><rect x="1307.9" y="115.02" width="1" height="2.8" fill="#b0161d"/><rect x="1309.4" y="117.42" width="1" height="2.2" fill="#b0161d"/><rect x="1311.7" y="109.62" width="1.2" height="1.3" fill="#b0161d"/><rect x="1313.7" y="109.62" width="1.2" height="1.3" fill="#b0161d"/><rect x="1311.9" y="115.02" width="1" height="2.8" fill="#b0161d"/><rect x="1313.4" y="117.42" width="1" height="2.2" fill="#b0161d"/><rect x="1312.5" y="118.02" width="1.6" height="1.4" fill="#b0161d"/><rect x="1315.7" y="109.62" width="1.2" height="1.3" fill="#b0161d"/><rect x="1317.7" y="109.62" width="1.2" height="1.3" fill="#b0161d"/><rect x="1315.9" y="115.62" width="1" height="2.8" fill="#b0161d"/><rect x="1317.4" y="116.62" width="1" height="2.2" fill="#b0161d"/><rect x="1319.7" y="109.62" width="1.2" height="1.3" fill="#b0161d"/><rect x="1321.7" y="109.62" width="1.2" height="1.3" fill="#b0161d"/><rect x="1319.9" y="100.02" width="1" height="1.6" fill="#b0161d"/><rect x="1319.9" y="114.42" width="1" height="2.8" fill="#b0161d"/><rect x="1321.4" y="117.42" width="1" height="2.2" fill="#b0161d"/><rect x="1323.7" y="109.62" width="1.2" height="1.3" fill="#b0161d"/><rect x="1325.7" y="109.62" width="1.2" height="1.3" fill="#b0161d"/><rect x="1323.9" y="115.62" width="1" height="2.8" fill="#b0161d"/><rect x="1324.5" y="118.02" width="1.6" height="1.4" fill="#b0161d"/><rect x="1327.7" y="109.62" width="1.2" height="1.3" fill="#b0161d"/><rect x="1329.7" y="109.62" width="1.2" height="1.3" fill="#b0161d"/><rect x="1327.9" y="115.62" width="1" height="2.8" fill="#b0161d"/><rect x="1329.4" y="116.62" width="1" height="2.2" fill="#b0161d"/><rect x="1331.7" y="109.62" width="1.2" height="1.3" fill="#b0161d"/><rect x="1333.7" y="109.62" width="1.2" height="1.3" fill="#b0161d"/><rect x="1331.9" y="100.02" width="1" height="1.6" fill="#b0161d"/><rect x="1331.9" y="115.02" width="1" height="2.8" fill="#b0161d"/><rect x="1333.4" y="116.62" width="1" height="2.2" fill="#b0161d"/><rect x="1332.5" y="118.02" width="1.6" height="1.4" fill="#b0161d"/><rect x="1335.7" y="109.62" width="1.2" height="1.3" fill="#b0161d"/><rect x="1337.7" y="109.62" width="1.2" height="1.3" fill="#b0161d"/><rect x="1335.9" y="115.62" width="1" height="2.8" fill="#b0161d"/><rect x="1336.5" y="118.02" width="1.6" height="1.4" fill="#b0161d"/><rect x="1335.9" y="93.02" width="1" height="2.2" fill="#b0161d"/><rect x="1354.34" y="87.52" width="1" height="34" fill="#c9282e"/><rect x="1343.9" y="101.62" width="1" height="3.2" fill="#b0161d"/><rect x="1343.9" y="114.42" width="1" height="2.8" fill="#b0161d"/><rect x="1345.4" y="116.62" width="1" height="2.2" fill="#b0161d"/><rect x="1344.5" y="118.02" width="1.6" height="1.4" fill="#b0161d"/><rect x="1347.9" y="101.62" width="1" height="3.2" fill="#b0161d"/><rect x="1351.9" y="101.62" width="1" height="3.2" fill="#b0161d"/><rect x="1355.9" y="101.62" width="1" height="3.2" fill="#b0161d"/><rect x="1355.9" y="114.42" width="1" height="2.8" fill="#b0161d"/><rect x="1357.4" y="116.62" width="1" height="2.2" fill="#b0161d"/><rect x="1355.9" y="93.02" width="1" height="2.2" fill="#b0161d"/><rect x="1359.9" y="101.62" width="1" height="3.2" fill="#b0161d"/><rect x="1359.9" y="115.62" width="1" height="2.8" fill="#b0161d"/><rect x="1361.4" y="117.42" width="1" height="2.2" fill="#b0161d"/><rect x="1360.5" y="118.02" width="1.6" height="1.4" fill="#b0161d"/><rect x="1363.9" y="101.62" width="1" height="3.2" fill="#b0161d"/><rect x="1363.9" y="115.62" width="1" height="2.8" fill="#b0161d"/><rect x="1367.9" y="101.62" width="1" height="3.2" fill="#b0161d"/><rect x="1367.9" y="115.02" width="1" height="2.8" fill="#b0161d"/><rect x="1371.9" y="101.62" width="1" height="3.2" fill="#b0161d"/><rect x="1371.9" y="115.02" width="1" height="2.8" fill="#b0161d"/><rect x="1373.4" y="116.62" width="1" height="2.2" fill="#b0161d"/><rect x="1372.5" y="118.02" width="1.6" height="1.4" fill="#b0161d"/><rect x="1375.9" y="101.62" width="1" height="3.2" fill="#b0161d"/><rect x="1375.9" y="114.42" width="1" height="2.8" fill="#b0161d"/><rect x="1379.9" y="101.62" width="1" height="3.2" fill="#b0161d"/><rect x="1379.9" y="115.62" width="1" height="2.8" fill="#b0161d"/><rect x="1381.4" y="116.62" width="1" height="2.2" fill="#b0161d"/><rect x="1383.9" y="101.62" width="1" height="3.2" fill="#b0161d"/><rect x="1383.9" y="114.42" width="1" height="2.8" fill="#b0161d"/><rect x="1385.4" y="116.62" width="1" height="2.2" fill="#b0161d"/><rect x="1391.7" y="109.62" width="1.2" height="1.3" fill="#b0161d"/><rect x="1393.7" y="109.62" width="1.2" height="1.3" fill="#b0161d"/><rect x="1391.9" y="114.42" width="1" height="2.8" fill="#b0161d"/><rect x="1395.7" y="109.62" width="1.2" height="1.3" fill="#b0161d"/><rect x="1397.7" y="109.62" width="1.2" height="1.3" fill="#b0161d"/><rect x="1395.9" y="115.62" width="1" height="2.8" fill="#b0161d"/><rect x="1397.4" y="116.62" width="1" height="2.2" fill="#b0161d"/><rect x="1399.7" y="109.62" width="1.2" height="1.3" fill="#b0161d"/><rect x="1401.7" y="109.62" width="1.2" height="1.3" fill="#b0161d"/><rect x="1403.7" y="109.62" width="1.2" height="1.3" fill="#b0161d"/><rect x="1405.7" y="109.62" width="1.2" height="1.3" fill="#b0161d"/><rect x="1403.9" y="100.02" width="1" height="1.6" fill="#b0161d"/><rect x="1407.7" y="109.62" width="1.2" height="1.3" fill="#b0161d"/><rect x="1409.7" y="109.62" width="1.2" height="1.3" fill="#b0161d"/><rect x="1407.9" y="114.42" width="1" height="2.8" fill="#b0161d"/><rect x="1408.5" y="118.02" width="1.6" height="1.4" fill="#b0161d"/><rect x="1411.7" y="109.62" width="1.2" height="1.3" fill="#b0161d"/><rect x="1413.7" y="109.62" width="1.2" height="1.3" fill="#b0161d"/><rect x="1411.9" y="115.62" width="1" height="2.8" fill="#b0161d"/><rect x="1415.7" y="109.62" width="1.2" height="1.3" fill="#b0161d"/><rect x="1417.7" y="109.62" width="1.2" height="1.3" fill="#b0161d"/><rect x="1415.9" y="100.02" width="1" height="1.6" fill="#b0161d"/><rect x="1415.9" y="114.42" width="1" height="2.8" fill="#b0161d"/><rect x="1417.4" y="116.62" width="1" height="2.2" fill="#b0161d"/><rect x="1416.5" y="118.02" width="1.6" height="1.4" fill="#b0161d"/><rect x="1423.7" y="109.62" width="1.2" height="1.3" fill="#b0161d"/><rect x="1425.7" y="109.62" width="1.2" height="1.3" fill="#b0161d"/><rect x="1423.9" y="100.02" width="1" height="1.6" fill="#b0161d"/><rect x="1427.7" y="109.62" width="1.2" height="1.3" fill="#b0161d"/><rect x="1429.7" y="109.62" width="1.2" height="1.3" fill="#b0161d"/><rect x="1431.7" y="109.62" width="1.2" height="1.3" fill="#b0161d"/><rect x="1433.7" y="109.62" width="1.2" height="1.3" fill="#b0161d"/><rect x="1431.9" y="100.02" width="1" height="1.6" fill="#b0161d"/><rect x="1431.9" y="115.62" width="1" height="2.8" fill="#b0161d"/><rect x="1433.4" y="117.42" width="1" height="2.2" fill="#b0161d"/><rect x="1432.5" y="118.02" width="1.6" height="1.4" fill="#b0161d"/><rect x="1435.7" y="109.62" width="1.2" height="1.3" fill="#b0161d"/><rect x="1437.7" y="109.62" width="1.2" height="1.3" fill="#b0161d"/><rect x="1439.7" y="109.62" width="1.2" height="1.3" fill="#b0161d"/><rect x="1441.7" y="109.62" width="1.2" height="1.3" fill="#b0161d"/><rect x="1439.9" y="115.02" width="1" height="2.8" fill="#b0161d"/><rect x="1441.4" y="117.42" width="1" height="2.2" fill="#b0161d"/><rect x="1440.5" y="118.02" width="1.6" height="1.4" fill="#b0161d"/><rect x="1443.7" y="109.62" width="1.2" height="1.3" fill="#b0161d"/><rect x="1445.7" y="109.62" width="1.2" height="1.3" fill="#b0161d"/><rect x="1443.9" y="100.02" width="1" height="1.6" fill="#b0161d"/><rect x="1443.9" y="115.62" width="1" height="2.8" fill="#b0161d"/><rect x="1447.7" y="109.62" width="1.2" height="1.3" fill="#b0161d"/><rect x="1449.7" y="109.62" width="1.2" height="1.3" fill="#b0161d"/><rect x="1447.9" y="115.62" width="1" height="2.8" fill="#b0161d"/><rect x="1449.4" y="116.62" width="1" height="2.2" fill="#b0161d"/><rect x="1482.38" y="87.52" width="1" height="34" fill="#c9282e"/><rect x="1506.49" y="87.52" width="0.8" height="34" fill="#c9282e"/><rect x="1455.7" y="109.62" width="1.2" height="1.3" fill="#b0161d"/><rect x="1457.7" y="109.62" width="1.2" height="1.3" fill="#b0161d"/><rect x="1455.9" y="115.62" width="1" height="2.8" fill="#b0161d"/><rect x="1459.7" y="109.62" width="1.2" height="1.3" fill="#b0161d"/><rect x="1461.7" y="109.62" width="1.2" height="1.3" fill="#b0161d"/><rect x="1463.7" y="109.62" width="1.2" height="1.3" fill="#b0161d"/><rect x="1465.7" y="109.62" width="1.2" height="1.3" fill="#b0161d"/><rect x="1463.9" y="115.62" width="1" height="2.8" fill="#b0161d"/><rect x="1467.7" y="109.62" width="1.2" height="1.3" fill="#b0161d"/><rect x="1469.7" y="109.62" width="1.2" height="1.3" fill="#b0161d"/><rect x="1471.7" y="109.62" width="1.2" height="1.3" fill="#b0161d"/><rect x="1473.7" y="109.62" width="1.2" height="1.3" fill="#b0161d"/><rect x="1471.9" y="114.42" width="1" height="2.8" fill="#b0161d"/><rect x="1473.4" y="116.62" width="1" height="2.2" fill="#b0161d"/><rect x="1475.7" y="109.62" width="1.2" height="1.3" fill="#b0161d"/><rect x="1477.7" y="109.62" width="1.2" height="1.3" fill="#b0161d"/><rect x="1475.9" y="100.02" width="1" height="1.6" fill="#b0161d"/><rect x="1475.9" y="115.62" width="1" height="2.8" fill="#b0161d"/><rect x="1477.4" y="117.42" width="1" height="2.2" fill="#b0161d"/><rect x="1476.5" y="118.02" width="1.6" height="1.4" fill="#b0161d"/><rect x="1479.7" y="109.62" width="1.2" height="1.3" fill="#b0161d"/><rect x="1481.7" y="109.62" width="1.2" height="1.3" fill="#b0161d"/><rect x="1479.9" y="114.42" width="1" height="2.8" fill="#b0161d"/><rect x="1481.4" y="117.42" width="1" height="2.2" fill="#b0161d"/><rect x="1483.7" y="109.62" width="1.2" height="1.3" fill="#b0161d"/><rect x="1485.7" y="109.62" width="1.2" height="1.3" fill="#b0161d"/><rect x="1483.9" y="115.62" width="1" height="2.8" fill="#b0161d"/><rect x="1485.4" y="117.42" width="1" height="2.2" fill="#b0161d"/><rect x="1487.7" y="109.62" width="1.2" height="1.3" fill="#b0161d"/><rect x="1489.7" y="109.62" width="1.2" height="1.3" fill="#b0161d"/><rect x="1487.9" y="115.02" width="1" height="2.8" fill="#b0161d"/><rect x="1491.7" y="109.62" width="1.2" height="1.3" fill="#b0161d"/><rect x="1493.7" y="109.62" width="1.2" height="1.3" fill="#b0161d"/><rect x="1491.9" y="115.62" width="1" height="2.8" fill="#b0161d"/><rect x="1493.4" y="117.42" width="1" height="2.2" fill="#b0161d"/><rect x="1491.9" y="93.02" width="1" height="2.2" fill="#b0161d"/><rect x="1495.7" y="109.62" width="1.2" height="1.3" fill="#b0161d"/><rect x="1497.7" y="109.62" width="1.2" height="1.3" fill="#b0161d"/><rect x="1495.9" y="114.42" width="1" height="2.8" fill="#b0161d"/><rect x="1497.4" y="117.42" width="1" height="2.2" fill="#b0161d"/><rect x="1499.7" y="109.62" width="1.2" height="1.3" fill="#b0161d"/><rect x="1501.7" y="109.62" width="1.2" height="1.3" fill="#b0161d"/><rect x="1499.9" y="115.02" width="1" height="2.8" fill="#b0161d"/><rect x="1501.4" y="116.62" width="1" height="2.2" fill="#b0161d"/><rect x="1503.7" y="109.62" width="1.2" height="1.3" fill="#b0161d"/><rect x="1505.7" y="109.62" width="1.2" height="1.3" fill="#b0161d"/><rect x="1503.9" y="115.62" width="1" height="2.8" fill="#b0161d"/><rect x="1505.4" y="117.42" width="1" height="2.2" fill="#b0161d"/><rect x="1507.7" y="109.62" width="1.2" height="1.3" fill="#b0161d"/><rect x="1509.7" y="109.62" width="1.2" height="1.3" fill="#b0161d"/><rect x="1507.9" y="100.02" width="1" height="1.6" fill="#b0161d"/><rect x="1507.9" y="115.62" width="1" height="2.8" fill="#b0161d"/><rect x="1509.4" y="116.62" width="1" height="2.2" fill="#b0161d"/><rect x="1511.7" y="109.62" width="1.2" height="1.3" fill="#b0161d"/><rect x="1513.7" y="109.62" width="1.2" height="1.3" fill="#b0161d"/><rect x="1511.9" y="115.02" width="1" height="2.8" fill="#b0161d"/><rect x="1513.4" y="116.62" width="1" height="2.2" fill="#b0161d"/><rect x="1512.5" y="118.02" width="1.6" height="1.4" fill="#b0161d"/><rect x="1546.4" y="87.52" width="1" height="34" fill="#c9282e"/><rect x="1570.51" y="87.52" width="0.8" height="34" fill="#c9282e"/><rect x="1519.9" y="101.62" width="1" height="3.2" fill="#b0161d"/><rect x="1519.9" y="114.42" width="1" height="2.8" fill="#b0161d"/><rect x="1521.4" y="116.62" width="1" height="2.2" fill="#b0161d"/><rect x="1523.9" y="101.62" width="1" height="3.2" fill="#b0161d"/><rect x="1527.9" y="101.62" width="1" height="3.2" fill="#b0161d"/><rect x="1531.9" y="101.62" width="1" height="3.2" fill="#b0161d"/><rect x="1535.9" y="101.62" width="1" height="3.2" fill="#b0161d"/><rect x="1535.9" y="115.02" width="1" height="2.8" fill="#b0161d"/><rect x="1537.4" y="116.62" width="1" height="2.2" fill="#b0161d"/><rect x="1539.9" y="101.62" width="1" height="3.2" fill="#b0161d"/><rect x="1539.9" y="115.02" width="1" height="2.8" fill="#b0161d"/><rect x="1541.4" y="116.62" width="1" height="2.2" fill="#b0161d"/><rect x="1543.9" y="101.62" width="1" height="3.2" fill="#b0161d"/><rect x="1543.9" y="115.02" width="1" height="2.8" fill="#b0161d"/><rect x="1547.9" y="101.62" width="1" height="3.2" fill="#b0161d"/><rect x="1547.9" y="115.02" width="1" height="2.8" fill="#b0161d"/><rect x="1549.4" y="117.42" width="1" height="2.2" fill="#b0161d"/><rect x="1548.5" y="118.02" width="1.6" height="1.4" fill="#b0161d"/><rect x="1551.9" y="101.62" width="1" height="3.2" fill="#b0161d"/><rect x="1551.9" y="114.42" width="1" height="2.8" fill="#b0161d"/><rect x="1553.4" y="117.42" width="1" height="2.2" fill="#b0161d"/><rect x="1551.9" y="93.02" width="1" height="2.2" fill="#b0161d"/><rect x="1555.9" y="101.62" width="1" height="3.2" fill="#b0161d"/><rect x="1555.9" y="115.02" width="1" height="2.8" fill="#b0161d"/><rect x="1557.4" y="116.62" width="1" height="2.2" fill="#b0161d"/><rect x="1559.9" y="101.62" width="1" height="3.2" fill="#b0161d"/><rect x="1559.9" y="115.62" width="1" height="2.8" fill="#b0161d"/><rect x="1561.4" y="116.62" width="1" height="2.2" fill="#b0161d"/><rect x="1560.5" y="118.02" width="1.6" height="1.4" fill="#b0161d"/><rect x="1563.9" y="101.62" width="1" height="3.2" fill="#b0161d"/><rect x="1563.9" y="115.62" width="1" height="2.8" fill="#b0161d"/><rect x="1565.4" y="116.62" width="1" height="2.2" fill="#b0161d"/><rect x="1567.9" y="101.62" width="1" height="3.2" fill="#b0161d"/><rect x="1567.9" y="114.42" width="1" height="2.8" fill="#b0161d"/><rect x="1571.9" y="101.62" width="1" height="3.2" fill="#b0161d"/><rect x="1571.9" y="115.02" width="1" height="2.8" fill="#b0161d"/><rect x="1573.4" y="116.62" width="1" height="2.2" fill="#b0161d"/><rect x="1572.5" y="118.02" width="1.6" height="1.4" fill="#b0161d"/><rect x="1575.9" y="101.62" width="1" height="3.2" fill="#b0161d"/><rect x="1575.9" y="115.02" width="1" height="2.8" fill="#b0161d"/><rect x="1577.4" y="116.62" width="1" height="2.2" fill="#b0161d"/><rect x="1610.42" y="87.52" width="1" height="34" fill="#c9282e"/><rect x="1583.7" y="109.62" width="1.2" height="1.3" fill="#b0161d"/><rect x="1585.7" y="109.62" width="1.2" height="1.3" fill="#b0161d"/><rect x="1583.9" y="100.02" width="1" height="1.6" fill="#b0161d"/><rect x="1587.7" y="109.62" width="1.2" height="1.3" fill="#b0161d"/><rect x="1589.7" y="109.62" width="1.2" height="1.3" fill="#b0161d"/><rect x="1591.7" y="109.62" width="1.2" height="1.3" fill="#b0161d"/><rect x="1593.7" y="109.62" width="1.2" height="1.3" fill="#b0161d"/><rect x="1595.7" y="109.62" width="1.2" height="1.3" fill="#b0161d"/><rect x="1597.7" y="109.62" width="1.2" height="1.3" fill="#b0161d"/><rect x="1599.7" y="109.62" width="1.2" height="1.3" fill="#b0161d"/><rect x="1601.7" y="109.62" width="1.2" height="1.3" fill="#b0161d"/><rect x="1599.9" y="115.62" width="1" height="2.8" fill="#b0161d"/><rect x="1601.4" y="116.62" width="1" height="2.2" fill="#b0161d"/><rect x="1603.7" y="109.62" width="1.2" height="1.3" fill="#b0161d"/><rect x="1605.7" y="109.62" width="1.2" height="1.3" fill="#b0161d"/><rect x="1603.9" y="115.02" width="1" height="2.8" fill="#b0161d"/><rect x="1604.5" y="118.02" width="1.6" height="1.4" fill="#b0161d"/><rect x="1607.7" y="109.62" width="1.2" height="1.3" fill="#b0161d"/><rect x="1609.7" y="109.62" width="1.2" height="1.3" fill="#b0161d"/><rect x="1607.9" y="115.62" width="1" height="2.8" fill="#b0161d"/><rect x="1609.4" y="117.42" width="1" height="2.2" fill="#b0161d"/><rect x="1611.7" y="109.62" width="1.2" height="1.3" fill="#b0161d"/><rect x="1613.7" y="109.62" width="1.2" height="1.3" fill="#b0161d"/><rect x="1611.9" y="100.02" width="1" height="1.6" fill="#b0161d"/><rect x="1611.9" y="114.42" width="1" height="2.8" fill="#b0161d"/><rect x="1613.4" y="116.62" width="1" height="2.2" fill="#b0161d"/><rect x="1612.5" y="118.02" width="1.6" height="1.4" fill="#b0161d"/><rect x="1615.7" y="109.62" width="1.2" height="1.3" fill="#b0161d"/><rect x="1617.7" y="109.62" width="1.2" height="1.3" fill="#b0161d"/><rect x="1615.9" y="114.42" width="1" height="2.8" fill="#b0161d"/><rect x="1616.5" y="118.02" width="1.6" height="1.4" fill="#b0161d"/><rect x="1619.7" y="109.62" width="1.2" height="1.3" fill="#b0161d"/><rect x="1621.7" y="109.62" width="1.2" height="1.3" fill="#b0161d"/><rect x="1619.9" y="100.02" width="1" height="1.6" fill="#b0161d"/><rect x="1619.9" y="114.42" width="1" height="2.8" fill="#b0161d"/><rect x="1620.5" y="118.02" width="1.6" height="1.4" fill="#b0161d"/><rect x="1623.7" y="109.62" width="1.2" height="1.3" fill="#b0161d"/><rect x="1625.7" y="109.62" width="1.2" height="1.3" fill="#b0161d"/><rect x="1623.9" y="115.62" width="1" height="2.8" fill="#b0161d"/><rect x="1625.4" y="116.62" width="1" height="2.2" fill="#b0161d"/><rect x="1631.7" y="109.62" width="1.2" height="1.3" fill="#b0161d"/><rect x="1633.7" y="109.62" width="1.2" height="1.3" fill="#b0161d"/><rect x="1635.7" y="109.62" width="1.2" height="1.3" fill="#b0161d"/><rect x="1637.7" y="109.62" width="1.2" height="1.3" fill="#b0161d"/><rect x="1635.9" y="114.42" width="1" height="2.8" fill="#b0161d"/><rect x="1635.9" y="93.02" width="1" height="2.2" fill="#b0161d"/><rect x="1639.7" y="109.62" width="1.2" height="1.3" fill="#b0161d"/><rect x="1641.7" y="109.62" width="1.2" height="1.3" fill="#b0161d"/><rect x="1674.44" y="87.52" width="1" height="34" fill="#c9282e"/><rect x="1698.55" y="87.52" width="0.8" height="34" fill="#c9282e"/><rect x="1647.7" y="109.62" width="1.2" height="1.3" fill="#b0161d"/><rect x="1649.7" y="109.62" width="1.2" height="1.3" fill="#b0161d"/><rect x="1651.7" y="109.62" width="1.2" height="1.3" fill="#b0161d"/><rect x="1653.7" y="109.62" width="1.2" height="1.3" fill="#b0161d"/><rect x="1651.9" y="115.62" width="1" height="2.8" fill="#b0161d"/><rect x="1653.4" y="116.62" width="1" height="2.2" fill="#b0161d"/><rect x="1655.7" y="109.62" width="1.2" height="1.3" fill="#b0161d"/><rect x="1657.7" y="109.62" width="1.2" height="1.3" fill="#b0161d"/><rect x="1659.7" y="109.62" width="1.2" height="1.3" fill="#b0161d"/><rect x="1661.7" y="109.62" width="1.2" height="1.3" fill="#b0161d"/><rect x="1659.9" y="115.62" width="1" height="2.8" fill="#b0161d"/><rect x="1661.4" y="117.42" width="1" height="2.2" fill="#b0161d"/><rect x="1663.7" y="109.62" width="1.2" height="1.3" fill="#b0161d"/><rect x="1665.7" y="109.62" width="1.2" height="1.3" fill="#b0161d"/><rect x="1663.9" y="115.02" width="1" height="2.8" fill="#b0161d"/><rect x="1665.4" y="116.62" width="1" height="2.2" fill="#b0161d"/><rect x="1667.7" y="109.62" width="1.2" height="1.3" fill="#b0161d"/><rect x="1669.7" y="109.62" width="1.2" height="1.3" fill="#b0161d"/><rect x="1667.9" y="115.02" width="1" height="2.8" fill="#b0161d"/><rect x="1669.4" y="116.62" width="1" height="2.2" fill="#b0161d"/><rect x="1671.7" y="109.62" width="1.2" height="1.3" fill="#b0161d"/><rect x="1673.7" y="109.62" width="1.2" height="1.3" fill="#b0161d"/><rect x="1671.9" y="115.62" width="1" height="2.8" fill="#b0161d"/><rect x="1673.4" y="116.62" width="1" height="2.2" fill="#b0161d"/><rect x="1675.7" y="109.62" width="1.2" height="1.3" fill="#b0161d"/><rect x="1677.7" y="109.62" width="1.2" height="1.3" fill="#b0161d"/><rect x="1675.9" y="115.62" width="1" height="2.8" fill="#b0161d"/><rect x="1679.7" y="109.62" width="1.2" height="1.3" fill="#b0161d"/><rect x="1681.7" y="109.62" width="1.2" height="1.3" fill="#b0161d"/><rect x="1679.9" y="114.42" width="1" height="2.8" fill="#b0161d"/><rect x="1681.4" y="116.62" width="1" height="2.2" fill="#b0161d"/><rect x="1683.7" y="109.62" width="1.2" height="1.3" fill="#b0161d"/><rect x="1685.7" y="109.62" width="1.2" height="1.3" fill="#b0161d"/><rect x="1683.9" y="115.02" width="1" height="2.8" fill="#b0161d"/><rect x="1685.4" y="117.42" width="1" height="2.2" fill="#b0161d"/><rect x="1687.7" y="109.62" width="1.2" height="1.3" fill="#b0161d"/><rect x="1689.7" y="109.62" width="1.2" height="1.3" fill="#b0161d"/><rect x="1687.9" y="114.42" width="1" height="2.8" fill="#b0161d"/><rect x="1691.7" y="109.62" width="1.2" height="1.3" fill="#b0161d"/><rect x="1693.7" y="109.62" width="1.2" height="1.3" fill="#b0161d"/><rect x="1691.9" y="115.62" width="1" height="2.8" fill="#b0161d"/><rect x="1693.4" y="116.62" width="1" height="2.2" fill="#b0161d"/><rect x="1695.7" y="109.62" width="1.2" height="1.3" fill="#b0161d"/><rect x="1697.7" y="109.62" width="1.2" height="1.3" fill="#b0161d"/><rect x="1695.9" y="115.02" width="1" height="2.8" fill="#b0161d"/><rect x="1696.5" y="118.02" width="1.6" height="1.4" fill="#b0161d"/><rect x="1699.7" y="109.62" width="1.2" height="1.3" fill="#b0161d"/><rect x="1701.7" y="109.62" width="1.2" height="1.3" fill="#b0161d"/><rect x="1699.9" y="115.62" width="1" height="2.8" fill="#b0161d"/><rect x="1703.7" y="109.62" width="1.2" height="1.3" fill="#b0161d"/><rect x="1705.7" y="109.62" width="1.2" height="1.3" fill="#b0161d"/><rect x="1703.9" y="115.62" width="1" height="2.8" fill="#b0161d"/><rect x="1705.4" y="117.42" width="1" height="2.2" fill="#b0161d"/><rect x="1738.46" y="87.52" width="1" height="34" fill="#c9282e"/><rect x="1711.7" y="109.62" width="1.2" height="1.3" fill="#b0161d"/><rect x="1713.7" y="109.62" width="1.2" height="1.3" fill="#b0161d"/><rect x="1715.7" y="109.62" width="1.2" height="1.3" fill="#b0161d"/><rect x="1717.7" y="109.62" width="1.2" height="1.3" fill="#b0161d"/><rect x="1715.9" y="100.02" width="1" height="1.6" fill="#b0161d"/><rect x="1719.7" y="109.62" width="1.2" height="1.3" fill="#b0161d"/><rect x="1721.7" y="109.62" width="1.2" height="1.3" fill="#b0161d"/><rect x="1723.7" y="109.62" width="1.2" height="1.3" fill="#b0161d"/><rect x="1725.7" y="109.62" width="1.2" height="1.3" fill="#b0161d"/><rect x="1727.7" y="109.62" width="1.2" height="1.3" fill="#b0161d"/><rect x="1729.7" y="109.62" width="1.2" height="1.3" fill="#b0161d"/><rect x="1727.9" y="115.62" width="1" height="2.8" fill="#b0161d"/><rect x="1729.4" y="117.42" width="1" height="2.2" fill="#b0161d"/><rect x="1728.5" y="118.02" width="1.6" height="1.4" fill="#b0161d"/><rect x="1731.7" y="109.62" width="1.2" height="1.3" fill="#b0161d"/><rect x="1733.7" y="109.62" width="1.2" height="1.3" fill="#b0161d"/><rect x="1731.9" y="100.02" width="1" height="1.6" fill="#b0161d"/><rect x="1731.9" y="114.42" width="1" height="2.8" fill="#b0161d"/><rect x="1733.4" y="117.42" width="1" height="2.2" fill="#b0161d"/><rect x="1735.7" y="109.62" width="1.2" height="1.3" fill="#b0161d"/><rect x="1737.7" y="109.62" width="1.2" height="1.3" fill="#b0161d"/><rect x="1735.9" y="115.02" width="1" height="2.8" fill="#b0161d"/><rect x="1739.7" y="109.62" width="1.2" height="1.3" fill="#b0161d"/><rect x="1741.7" y="109.62" width="1.2" height="1.3" fill="#b0161d"/><rect x="1739.9" y="115.62" width="1" height="2.8" fill="#b0161d"/><rect x="1741.4" y="117.42" width="1" height="2.2" fill="#b0161d"/><rect x="1743.7" y="109.62" width="1.2" height="1.3" fill="#b0161d"/><rect x="1745.7" y="109.62" width="1.2" height="1.3" fill="#b0161d"/><rect x="1743.9" y="115.02" width="1" height="2.8" fill="#b0161d"/><rect x="1745.4" y="117.42" width="1" height="2.2" fill="#b0161d"/><rect x="1747.7" y="109.62" width="1.2" height="1.3" fill="#b0161d"/><rect x="1749.7" y="109.62" width="1.2" height="1.3" fill="#b0161d"/><rect x="1747.9" y="115.02" width="1" height="2.8" fill="#b0161d"/><rect x="1749.4" y="116.62" width="1" height="2.2" fill="#b0161d"/><rect x="1751.7" y="109.62" width="1.2" height="1.3" fill="#b0161d"/><rect x="1753.7" y="109.62" width="1.2" height="1.3" fill="#b0161d"/><rect x="1751.9" y="114.42" width="1" height="2.8" fill="#b0161d"/><rect x="1753.4" y="117.42" width="1" height="2.2" fill="#b0161d"/><rect x="1759.9" y="101.62" width="1" height="3.2" fill="#b0161d"/><rect x="1763.9" y="101.62" width="1" height="3.2" fill="#b0161d"/><rect x="1767.9" y="101.62" width="1" height="3.2" fill="#b0161d"/><rect x="1802.48" y="87.52" width="1" height="34" fill="#c9282e"/><rect x="1775.9" y="101.62" width="1" height="3.2" fill="#b0161d"/><rect x="1779.9" y="101.62" width="1" height="3.2" fill="#b0161d"/><rect x="1779.9" y="93.02" width="1" height="2.2" fill="#b0161d"/><rect x="1783.9" y="101.62" width="1" height="3.2" fill="#b0161d"/><rect x="1783.9" y="115.02" width="1" height="2.8" fill="#b0161d"/><rect x="1787.9" y="101.62" width="1" height="3.2" fill="#b0161d"/><rect x="1787.9" y="115.02" width="1" height="2.8" fill="#b0161d"/><rect x="1789.4" y="117.42" width="1" height="2.2" fill="#b0161d"/><rect x="1791.9" y="101.62" width="1" height="3.2" fill="#b0161d"/><rect x="1791.9" y="114.42" width="1" height="2.8" fill="#b0161d"/><rect x="1793.4" y="116.62" width="1" height="2.2" fill="#b0161d"/><rect x="1795.9" y="101.62" width="1" height="3.2" fill="#b0161d"/><rect x="1795.9" y="115.02" width="1" height="2.8" fill="#b0161d"/><rect x="1797.4" y="116.62" width="1" height="2.2" fill="#b0161d"/><rect x="1799.9" y="101.62" width="1" height="3.2" fill="#b0161d"/><rect x="1799.9" y="114.42" width="1" height="2.8" fill="#b0161d"/><rect x="1801.4" y="117.42" width="1" height="2.2" fill="#b0161d"/><rect x="1803.9" y="101.62" width="1" height="3.2" fill="#b0161d"/><rect x="1803.9" y="114.42" width="1" height="2.8" fill="#b0161d"/><rect x="1805.4" y="117.42" width="1" height="2.2" fill="#b0161d"/><rect x="1807.9" y="101.62" width="1" height="3.2" fill="#b0161d"/><rect x="1807.9" y="115.62" width="1" height="2.8" fill="#b0161d"/><rect x="1809.4" y="116.62" width="1" height="2.2" fill="#b0161d"/><rect x="1811.9" y="101.62" width="1" height="3.2" fill="#b0161d"/><rect x="1811.9" y="114.42" width="1" height="2.8" fill="#b0161d"/><rect x="1813.4" y="117.42" width="1" height="2.2" fill="#b0161d"/><rect x="1815.9" y="101.62" width="1" height="3.2" fill="#b0161d"/><rect x="1815.9" y="115.02" width="1" height="2.8" fill="#b0161d"/><rect x="1817.4" y="116.62" width="1" height="2.2" fill="#b0161d"/><rect x="1816.5" y="118.02" width="1.6" height="1.4" fill="#b0161d"/><rect x="298.01" y="125.14" width="1" height="34" fill="#cfa234"/><rect x="330.02" y="125.14" width="1" height="34" fill="#cfa234"/><rect x="362.03" y="125.14" width="1" height="34" fill="#cfa234"/><rect x="394.04" y="125.14" width="1" height="34" fill="#cfa234"/><rect x="426.05" y="125.14" width="1" height="34" fill="#cfa234"/><rect x="458.06" y="125.14" width="1" height="34" fill="#cfa234"/><rect x="490.07" y="125.14" width="1" height="34" fill="#cfa234"/><rect x="302.41" y="151.31" width="20.99" height="1.85" fill="#8d6a12"/><rect x="350.72" y="151.56" width="1.52" height="1.85" fill="#8d6a12"/><rect x="354.51" y="149.54" width="1.52" height="1.85" fill="#8d6a12"/><rect x="358.31" y="147.51" width="1.52" height="1.85" fill="#8d6a12"/><rect x="378.54" y="141.95" width="1.52" height="1.85" fill="#8d6a12"/><rect x="382.84" y="141.95" width="1.52" height="1.85" fill="#8d6a12"/><rect x="387.14" y="141.95" width="1.52" height="1.85" fill="#8d6a12"/><rect x="391.18" y="141.95" width="1.52" height="1.85" fill="#8d6a12"/><rect x="430.89" y="140.68" width="1.52" height="1.85" fill="#8d6a12"/><rect x="435.19" y="140.68" width="3.03" height="1.85" fill="#8d6a12"/><rect x="442.78" y="140.68" width="1.52" height="1.85" fill="#8d6a12"/><rect x="444.8" y="143.97" width="1.52" height="1.85" fill="#8d6a12"/><rect x="483.5" y="147.77" width="1.52" height="1.85" fill="#8d6a12"/><rect x="492.35" y="146.5" width="3.54" height="1.85" fill="#8d6a12"/><rect x="496.65" y="151.31" width="6.32" height="1.85" fill="#8d6a12"/><rect x="554.09" y="125.14" width="1" height="34" fill="#cfa234"/><rect x="586.1" y="125.14" width="1" height="34" fill="#cfa234"/><rect x="618.11" y="125.14" width="1" height="34" fill="#cfa234"/><rect x="650.12" y="125.14" width="1" height="34" fill="#cfa234"/><rect x="682.13" y="125.14" width="1" height="34" fill="#cfa234"/><rect x="714.14" y="125.14" width="1" height="34" fill="#cfa234"/><rect x="746.15" y="125.14" width="1" height="34" fill="#cfa234"/><rect x="525.38" y="153.07" width="2.88" height="1.85" fill="#8d6a12"/><rect x="528.9" y="150.67" width="2.24" height="1.85" fill="#8d6a12"/><rect x="532.59" y="149.55" width="2.88" height="1.85" fill="#8d6a12"/><rect x="536.27" y="148.75" width="2.56" height="1.85" fill="#8d6a12"/><rect x="539.47" y="147.63" width="2.24" height="1.85" fill="#8d6a12"/><rect x="542.19" y="146.03" width="3.2" height="1.85" fill="#8d6a12"/><rect x="546.99" y="151.15" width="1.92" height="1.85" fill="#8d6a12"/><rect x="549.07" y="152.27" width="4" height="1.85" fill="#8d6a12"/><rect x="554.67" y="143.47" width="17.93" height="1.85" fill="#8d6a12"/><rect x="554.67" y="153.07" width="25.13" height="1.85" fill="#8d6a12"/><rect x="579" y="143.47" width="1.4" height="1.85" fill="#8d6a12"/><rect x="582.2" y="143.47" width="1.4" height="1.85" fill="#8d6a12"/><rect x="589.72" y="143.47" width="1.4" height="1.85" fill="#8d6a12"/><rect x="591.32" y="144.75" width="1.4" height="1.85" fill="#8d6a12"/><rect x="593.4" y="143.47" width="1.6" height="1.85" fill="#8d6a12"/><rect x="595.33" y="145.55" width="1.92" height="1.85" fill="#8d6a12"/><rect x="597.41" y="145.55" width="2.4" height="1.85" fill="#8d6a12"/><rect x="600.61" y="143.47" width="4.8" height="1.85" fill="#8d6a12"/><rect x="606.69" y="153.07" width="2.88" height="1.85" fill="#8d6a12"/><rect x="610.21" y="151.95" width="2.4" height="1.85" fill="#8d6a12"/><rect x="613.41" y="151.15" width="2.4" height="1.85" fill="#8d6a12"/><rect x="615.81" y="150.35" width="2.4" height="1.85" fill="#8d6a12"/><rect x="618.21" y="150.03" width="13.12" height="1.85" fill="#8d6a12"/><rect x="622.69" y="139.95" width="7.52" height="1.85" fill="#8d6a12"/><rect x="634.22" y="146.67" width="1.4" height="1.85" fill="#8d6a12"/><rect x="646.7" y="146.67" width="2.4" height="1.85" fill="#8d6a12"/><rect x="654.22" y="146.03" width="1.6" height="1.85" fill="#8d6a12"/><rect x="656.3" y="147.63" width="1.6" height="1.85" fill="#8d6a12"/><rect x="658.23" y="146.03" width="1.6" height="1.85" fill="#8d6a12"/><rect x="660.63" y="147.95" width="4.8" height="1.85" fill="#8d6a12"/><rect x="666.23" y="145.55" width="1.92" height="1.85" fill="#8d6a12"/><rect x="668.63" y="144.43" width="2.4" height="1.85" fill="#8d6a12"/><rect x="671.83" y="146.03" width="12" height="1.85" fill="#8d6a12"/><rect x="675.03" y="135.63" width="8.8" height="1.85" fill="#8d6a12"/><rect x="687.03" y="146.35" width="1.4" height="1.85" fill="#8d6a12"/><rect x="688.32" y="148.75" width="1.4" height="1.85" fill="#8d6a12"/><rect x="690.24" y="146.03" width="1.92" height="1.85" fill="#8d6a12"/><rect x="694.72" y="143.95" width="2.88" height="1.85" fill="#8d6a12"/><rect x="697.92" y="145.55" width="1.6" height="1.85" fill="#8d6a12"/><rect x="700.64" y="148.27" width="2.88" height="1.85" fill="#8d6a12"/><rect x="704.64" y="151.95" width="7.2" height="1.85" fill="#8d6a12"/><rect x="715.04" y="147.95" width="5.6" height="1.85" fill="#8d6a12"/><rect x="722.25" y="148.75" width="1.4" height="1.85" fill="#8d6a12"/><rect x="724.33" y="151.95" width="4.48" height="1.85" fill="#8d6a12"/><rect x="730.25" y="148.27" width="1.6" height="1.85" fill="#8d6a12"/><rect x="732.17" y="146.03" width="4.48" height="1.85" fill="#8d6a12"/><rect x="738.25" y="150.67" width="1.6" height="1.85" fill="#8d6a12"/><rect x="742.25" y="150.67" width="1.6" height="1.85" fill="#8d6a12"/><rect x="748.65" y="150.35" width="1.4" height="1.85" fill="#8d6a12"/><rect x="751.06" y="152.75" width="1.4" height="1.85" fill="#8d6a12"/><rect x="752.66" y="153.07" width="6.08" height="1.85" fill="#8d6a12"/><rect x="755.06" y="143.47" width="3.2" height="1.85" fill="#8d6a12"/><rect x="810.17" y="125.14" width="1" height="34" fill="#cfa234"/><rect x="795.96" y="143.74" width="24.7" height="1.85" fill="#8d6a12"/><rect x="799.16" y="153.34" width="21.5" height="1.85" fill="#8d6a12"/><rect x="874.19" y="125.14" width="1" height="34" fill="#cfa234"/><rect x="875.01" y="136.74" width="1.5" height="1.85" fill="#8d6a12"/><rect x="883.11" y="140.74" width="1.5" height="1.85" fill="#8d6a12"/><rect x="875.01" y="151.24" width="1.5" height="1.85" fill="#8d6a12"/><rect x="883.11" y="155.14" width="1.5" height="1.85" fill="#8d6a12"/><rect x="938.21" y="125.14" width="1" height="34" fill="#cfa234"/><rect x="924" y="151.24" width="1.4" height="1.85" fill="#8d6a12"/><rect x="926" y="151.24" width="1.4" height="1.85" fill="#8d6a12"/><rect x="928" y="151.24" width="1.4" height="1.85" fill="#8d6a12"/><rect x="930" y="151.24" width="1.4" height="1.85" fill="#8d6a12"/><rect x="932" y="151.24" width="1.4" height="1.85" fill="#8d6a12"/><rect x="934" y="151.24" width="1.4" height="1.85" fill="#8d6a12"/><rect x="936" y="151.24" width="1.4" height="1.85" fill="#8d6a12"/><rect x="938" y="151.24" width="1.4" height="1.85" fill="#8d6a12"/><rect x="940" y="151.24" width="1.4" height="1.85" fill="#8d6a12"/><rect x="942" y="151.24" width="1.4" height="1.85" fill="#8d6a12"/><rect x="944" y="151.24" width="1.4" height="1.85" fill="#8d6a12"/><rect x="946" y="151.24" width="1.4" height="1.85" fill="#8d6a12"/><rect x="1418.36" y="125.14" width="1" height="34" fill="#cfa234"/><rect x="1450.37" y="125.14" width="1" height="34" fill="#cfa234"/><rect x="1482.38" y="125.14" width="1" height="34" fill="#cfa234"/><rect x="1514.39" y="125.14" width="1" height="34" fill="#cfa234"/><rect x="1546.4" y="125.14" width="1" height="34" fill="#cfa234"/><rect x="1578.41" y="125.14" width="1" height="34" fill="#cfa234"/><rect x="1610.42" y="125.14" width="1" height="34" fill="#cfa234"/><rect x="1389.65" y="153.07" width="2.88" height="1.85" fill="#8d6a12"/><rect x="1393.17" y="150.67" width="2.24" height="1.85" fill="#8d6a12"/><rect x="1396.86" y="149.55" width="2.88" height="1.85" fill="#8d6a12"/><rect x="1400.54" y="148.75" width="2.56" height="1.85" fill="#8d6a12"/><rect x="1403.74" y="147.63" width="2.24" height="1.85" fill="#8d6a12"/><rect x="1406.46" y="146.03" width="3.2" height="1.85" fill="#8d6a12"/><rect x="1411.26" y="151.15" width="1.92" height="1.85" fill="#8d6a12"/><rect x="1413.34" y="152.27" width="4" height="1.85" fill="#8d6a12"/><rect x="1418.94" y="143.47" width="17.93" height="1.85" fill="#8d6a12"/><rect x="1418.94" y="153.07" width="25.13" height="1.85" fill="#8d6a12"/><rect x="1426.46" y="133.22" width="10.4" height="1.85" fill="#8d6a12"/><rect x="1443.27" y="143.47" width="1.4" height="1.85" fill="#8d6a12"/><rect x="1446.47" y="143.47" width="1.4" height="1.85" fill="#8d6a12"/><rect x="1453.99" y="143.47" width="1.4" height="1.85" fill="#8d6a12"/><rect x="1455.59" y="144.75" width="1.4" height="1.85" fill="#8d6a12"/><rect x="1457.67" y="143.47" width="1.6" height="1.85" fill="#8d6a12"/><rect x="1459.6" y="145.55" width="1.92" height="1.85" fill="#8d6a12"/><rect x="1461.68" y="145.55" width="2.4" height="1.85" fill="#8d6a12"/><rect x="1464.88" y="143.47" width="4.8" height="1.85" fill="#8d6a12"/><rect x="1470.96" y="153.07" width="2.88" height="1.85" fill="#8d6a12"/><rect x="1474.48" y="151.95" width="2.4" height="1.85" fill="#8d6a12"/><rect x="1477.68" y="151.15" width="2.4" height="1.85" fill="#8d6a12"/><rect x="1480.08" y="150.35" width="2.4" height="1.85" fill="#8d6a12"/><rect x="1482.48" y="150.03" width="13.12" height="1.85" fill="#8d6a12"/><rect x="1486.96" y="139.95" width="7.52" height="1.85" fill="#8d6a12"/><rect x="1498.49" y="146.67" width="1.4" height="1.85" fill="#8d6a12"/><rect x="1510.97" y="146.67" width="2.4" height="1.85" fill="#8d6a12"/><rect x="1518.49" y="146.03" width="1.6" height="1.85" fill="#8d6a12"/><rect x="1520.57" y="147.63" width="1.6" height="1.85" fill="#8d6a12"/><rect x="1522.5" y="146.03" width="1.6" height="1.85" fill="#8d6a12"/><rect x="1524.9" y="147.95" width="4.8" height="1.85" fill="#8d6a12"/><rect x="1530.5" y="145.55" width="1.92" height="1.85" fill="#8d6a12"/><rect x="1532.9" y="144.43" width="2.4" height="1.85" fill="#8d6a12"/><rect x="1536.1" y="146.03" width="12" height="1.85" fill="#8d6a12"/><rect x="1539.3" y="135.63" width="8.8" height="1.85" fill="#8d6a12"/><rect x="1551.3" y="146.35" width="1.4" height="1.85" fill="#8d6a12"/><rect x="1552.59" y="148.75" width="1.4" height="1.85" fill="#8d6a12"/><rect x="1554.51" y="146.03" width="1.92" height="1.85" fill="#8d6a12"/><rect x="1558.99" y="143.95" width="2.88" height="1.85" fill="#8d6a12"/><rect x="1562.19" y="145.55" width="1.6" height="1.85" fill="#8d6a12"/><rect x="1564.91" y="148.27" width="2.88" height="1.85" fill="#8d6a12"/><rect x="1568.91" y="151.95" width="7.2" height="1.85" fill="#8d6a12"/><rect x="1579.31" y="147.95" width="5.6" height="1.85" fill="#8d6a12"/><rect x="1586.52" y="148.75" width="1.4" height="1.85" fill="#8d6a12"/><rect x="1588.6" y="151.95" width="4.48" height="1.85" fill="#8d6a12"/><rect x="1594.52" y="148.27" width="1.6" height="1.85" fill="#8d6a12"/><rect x="1596.44" y="146.03" width="4.48" height="1.85" fill="#8d6a12"/><rect x="1602.52" y="150.67" width="1.6" height="1.85" fill="#8d6a12"/><rect x="1606.52" y="150.67" width="1.6" height="1.85" fill="#8d6a12"/><rect x="1612.92" y="150.35" width="1.4" height="1.85" fill="#8d6a12"/><rect x="1615.33" y="152.75" width="1.4" height="1.85" fill="#8d6a12"/><rect x="1616.93" y="153.07" width="6.08" height="1.85" fill="#8d6a12"/><rect x="1619.33" y="143.47" width="3.2" height="1.85" fill="#8d6a12"/><rect x="1770.47" y="125.14" width="1" height="34" fill="#cfa234"/><rect x="1802.48" y="125.14" width="1" height="34" fill="#cfa234"/><rect x="1758.25" y="143.21" width="2.53" height="1.85" fill="#8d6a12"/><rect x="1761.29" y="141.44" width="2.53" height="1.85" fill="#8d6a12"/><rect x="1764.58" y="139.93" width="3.03" height="1.85" fill="#8d6a12"/><rect x="1768.12" y="138.66" width="3.03" height="1.85" fill="#8d6a12"/><rect x="1771.4" y="137.4" width="3.03" height="1.85" fill="#8d6a12"/><rect x="1774.69" y="135.63" width="2.53" height="1.85" fill="#8d6a12"/><rect x="1778.99" y="140.68" width="2.53" height="1.85" fill="#8d6a12"/><rect x="1781.52" y="142.46" width="3.54" height="1.85" fill="#8d6a12"/><rect x="1786.58" y="143.72" width="23.52" height="1.85" fill="#8d6a12"/><rect x="1791.13" y="135.63" width="1.4" height="1.85" fill="#8d6a12"/><rect x="1798.72" y="135.63" width="1.4" height="1.85" fill="#8d6a12"/><rect x="1806.81" y="135.63" width="1.4" height="1.85" fill="#8d6a12"/><rect x="1786.58" y="153.33" width="3.54" height="1.85" fill="#8d6a12"/><rect x="1794.67" y="153.33" width="3.54" height="1.85" fill="#8d6a12"/><rect x="1803.02" y="153.33" width="3.54" height="1.85" fill="#8d6a12"/><rect x="1810.1" y="153.33" width="1.52" height="1.85" fill="#8d6a12"/><rect x="1418.36" y="162.76" width="1" height="34" fill="#cfa234"/><rect x="1450.37" y="162.76" width="1" height="34" fill="#cfa234"/><rect x="1482.38" y="162.76" width="1" height="34" fill="#cfa234"/><rect x="1514.39" y="162.76" width="1" height="34" fill="#cfa234"/><rect x="1546.4" y="162.76" width="1" height="34" fill="#cfa234"/><rect x="1578.41" y="162.76" width="1" height="34" fill="#cfa234"/><rect x="1610.42" y="162.76" width="1" height="34" fill="#cfa234"/><rect x="1389.65" y="184.3" width="2.88" height="1.85" fill="#8d6a12"/><rect x="1393.17" y="182.38" width="2.24" height="1.85" fill="#8d6a12"/><rect x="1396.86" y="181.26" width="2.88" height="1.85" fill="#8d6a12"/><rect x="1400.54" y="180.46" width="2.56" height="1.85" fill="#8d6a12"/><rect x="1403.74" y="179.66" width="2.24" height="1.85" fill="#8d6a12"/><rect x="1406.46" y="178.38" width="3.2" height="1.85" fill="#8d6a12"/><rect x="1411.26" y="182.86" width="1.92" height="1.85" fill="#8d6a12"/><rect x="1413.34" y="183.5" width="4" height="1.85" fill="#8d6a12"/><rect x="1418.94" y="184.3" width="25.13" height="1.85" fill="#8d6a12"/><rect x="1426.46" y="176.46" width="8" height="1.85" fill="#8d6a12"/><rect x="1443.27" y="176.46" width="1.4" height="1.85" fill="#8d6a12"/><rect x="1446.47" y="176.46" width="1.4" height="1.85" fill="#8d6a12"/><rect x="1453.99" y="176.46" width="1.4" height="1.85" fill="#8d6a12"/><rect x="1455.59" y="177.74" width="1.4" height="1.85" fill="#8d6a12"/><rect x="1457.67" y="176.46" width="1.6" height="1.85" fill="#8d6a12"/><rect x="1459.6" y="178.38" width="1.92" height="1.85" fill="#8d6a12"/><rect x="1461.68" y="178.38" width="2.4" height="1.85" fill="#8d6a12"/><rect x="1464.88" y="176.46" width="4.8" height="1.85" fill="#8d6a12"/><rect x="1470.96" y="184.3" width="2.88" height="1.85" fill="#8d6a12"/><rect x="1474.48" y="183.5" width="2.4" height="1.85" fill="#8d6a12"/><rect x="1477.68" y="182.7" width="2.4" height="1.85" fill="#8d6a12"/><rect x="1480.08" y="181.9" width="2.4" height="1.85" fill="#8d6a12"/><rect x="1482.48" y="181.9" width="13.12" height="1.85" fill="#8d6a12"/><rect x="1490.97" y="174.06" width="4.48" height="1.85" fill="#8d6a12"/><rect x="1495.29" y="179.5" width="4" height="1.85" fill="#8d6a12"/><rect x="1506.97" y="179.5" width="1.6" height="1.85" fill="#8d6a12"/><rect x="1511.29" y="179.5" width="1.6" height="1.85" fill="#8d6a12"/><rect x="1518.49" y="178.38" width="1.6" height="1.85" fill="#8d6a12"/><rect x="1520.57" y="179.98" width="1.6" height="1.85" fill="#8d6a12"/><rect x="1522.5" y="178.38" width="1.6" height="1.85" fill="#8d6a12"/><rect x="1524.9" y="180.3" width="4.8" height="1.85" fill="#8d6a12"/><rect x="1530.5" y="178.38" width="1.92" height="1.85" fill="#8d6a12"/><rect x="1532.9" y="177.58" width="2.4" height="1.85" fill="#8d6a12"/><rect x="1536.1" y="178.38" width="8.8" height="1.85" fill="#8d6a12"/><rect x="1542.5" y="170.86" width="7.2" height="1.85" fill="#8d6a12"/><rect x="1551.3" y="178.7" width="1.4" height="1.85" fill="#8d6a12"/><rect x="1552.59" y="181.1" width="1.4" height="1.85" fill="#8d6a12"/><rect x="1554.51" y="178.38" width="1.92" height="1.85" fill="#8d6a12"/><rect x="1558.99" y="176.78" width="2.88" height="1.85" fill="#8d6a12"/><rect x="1562.19" y="178.38" width="1.6" height="1.85" fill="#8d6a12"/><rect x="1564.91" y="180.78" width="2.88" height="1.85" fill="#8d6a12"/><rect x="1568.91" y="183.5" width="4.8" height="1.85" fill="#8d6a12"/><rect x="1570.51" y="175.18" width="3.2" height="1.85" fill="#8d6a12"/><rect x="1579.31" y="180.3" width="5.6" height="1.85" fill="#8d6a12"/><rect x="1586.52" y="181.1" width="1.4" height="1.85" fill="#8d6a12"/><rect x="1588.6" y="183.5" width="4.48" height="1.85" fill="#8d6a12"/><rect x="1594.52" y="180.78" width="1.6" height="1.85" fill="#8d6a12"/><rect x="1596.44" y="178.38" width="4.48" height="1.85" fill="#8d6a12"/><rect x="1602.52" y="182.7" width="1.6" height="1.85" fill="#8d6a12"/><rect x="1606.52" y="182.7" width="4" height="1.85" fill="#8d6a12"/><rect x="1612.92" y="181.9" width="1.4" height="1.85" fill="#8d6a12"/><rect x="1615.33" y="183.98" width="1.4" height="1.85" fill="#8d6a12"/><rect x="1616.93" y="184.3" width="6.08" height="1.85" fill="#8d6a12"/><rect x="1619.33" y="191.5" width="1.4" height="1.85" fill="#8d6a12"/><rect x="1621.73" y="191.5" width="1.4" height="1.85" fill="#8d6a12"/><rect x="298.01" y="200.38" width="1" height="34" fill="#cfa234"/><rect x="330.02" y="200.38" width="1" height="34" fill="#cfa234"/><rect x="362.03" y="200.38" width="1" height="34" fill="#cfa234"/><rect x="394.04" y="200.38" width="1" height="34" fill="#cfa234"/><rect x="426.05" y="200.38" width="1" height="34" fill="#cfa234"/><rect x="458.06" y="200.38" width="1" height="34" fill="#cfa234"/><rect x="490.07" y="200.38" width="1" height="34" fill="#cfa234"/><rect x="302.41" y="226.29" width="20.99" height="1.85" fill="#8d6a12"/><rect x="350.72" y="226.55" width="1.52" height="1.85" fill="#8d6a12"/><rect x="354.51" y="224.52" width="1.52" height="1.85" fill="#8d6a12"/><rect x="358.31" y="222.5" width="1.52" height="1.85" fill="#8d6a12"/><rect x="378.54" y="216.43" width="1.52" height="1.85" fill="#8d6a12"/><rect x="386.63" y="216.43" width="3.03" height="1.85" fill="#8d6a12"/><rect x="432.16" y="218.96" width="2.02" height="1.85" fill="#8d6a12"/><rect x="438.48" y="213.14" width="3.54" height="1.85" fill="#8d6a12"/><rect x="448.85" y="223.51" width="1.52" height="1.85" fill="#8d6a12"/><rect x="486.78" y="222.25" width="1.52" height="1.85" fill="#8d6a12"/><rect x="492.85" y="221.49" width="1.52" height="1.85" fill="#8d6a12"/><rect x="496.65" y="226.29" width="6.32" height="1.85" fill="#8d6a12"/><rect x="554.09" y="200.38" width="1" height="34" fill="#cfa234"/><rect x="586.1" y="200.38" width="1" height="34" fill="#cfa234"/><rect x="618.11" y="200.38" width="1" height="34" fill="#cfa234"/><rect x="650.12" y="200.38" width="1" height="34" fill="#cfa234"/><rect x="682.13" y="200.38" width="1" height="34" fill="#cfa234"/><rect x="714.14" y="200.38" width="1" height="34" fill="#cfa234"/><rect x="746.15" y="200.38" width="1" height="34" fill="#cfa234"/><rect x="525.38" y="221.92" width="2.88" height="1.85" fill="#8d6a12"/><rect x="528.9" y="220" width="2.24" height="1.85" fill="#8d6a12"/><rect x="532.59" y="218.88" width="2.88" height="1.85" fill="#8d6a12"/><rect x="536.27" y="218.08" width="2.56" height="1.85" fill="#8d6a12"/><rect x="539.47" y="217.28" width="2.24" height="1.85" fill="#8d6a12"/><rect x="542.19" y="216" width="3.2" height="1.85" fill="#8d6a12"/><rect x="546.99" y="220.48" width="1.92" height="1.85" fill="#8d6a12"/><rect x="549.07" y="221.12" width="4" height="1.85" fill="#8d6a12"/><rect x="554.67" y="221.92" width="25.13" height="1.85" fill="#8d6a12"/><rect x="562.19" y="214.08" width="8" height="1.85" fill="#8d6a12"/><rect x="579" y="214.08" width="1.4" height="1.85" fill="#8d6a12"/><rect x="582.2" y="214.08" width="1.4" height="1.85" fill="#8d6a12"/><rect x="589.72" y="214.08" width="1.4" height="1.85" fill="#8d6a12"/><rect x="591.32" y="215.36" width="1.4" height="1.85" fill="#8d6a12"/><rect x="593.4" y="214.08" width="1.6" height="1.85" fill="#8d6a12"/><rect x="595.33" y="216" width="1.92" height="1.85" fill="#8d6a12"/><rect x="597.41" y="216" width="2.4" height="1.85" fill="#8d6a12"/><rect x="600.61" y="214.08" width="4.8" height="1.85" fill="#8d6a12"/><rect x="606.69" y="221.92" width="2.88" height="1.85" fill="#8d6a12"/><rect x="610.21" y="221.12" width="2.4" height="1.85" fill="#8d6a12"/><rect x="613.41" y="220.32" width="2.4" height="1.85" fill="#8d6a12"/><rect x="615.81" y="219.52" width="2.4" height="1.85" fill="#8d6a12"/><rect x="618.21" y="219.52" width="13.12" height="1.85" fill="#8d6a12"/><rect x="626.7" y="211.68" width="4.48" height="1.85" fill="#8d6a12"/><rect x="631.02" y="217.12" width="4" height="1.85" fill="#8d6a12"/><rect x="642.7" y="217.12" width="1.6" height="1.85" fill="#8d6a12"/><rect x="647.02" y="217.12" width="1.6" height="1.85" fill="#8d6a12"/><rect x="654.22" y="216" width="1.6" height="1.85" fill="#8d6a12"/><rect x="656.3" y="217.6" width="1.6" height="1.85" fill="#8d6a12"/><rect x="658.23" y="216" width="1.6" height="1.85" fill="#8d6a12"/><rect x="660.63" y="217.92" width="4.8" height="1.85" fill="#8d6a12"/><rect x="666.23" y="216" width="1.92" height="1.85" fill="#8d6a12"/><rect x="668.63" y="215.2" width="2.4" height="1.85" fill="#8d6a12"/><rect x="671.83" y="216" width="8.8" height="1.85" fill="#8d6a12"/><rect x="678.23" y="208.48" width="7.2" height="1.85" fill="#8d6a12"/><rect x="687.03" y="216.32" width="1.4" height="1.85" fill="#8d6a12"/><rect x="688.32" y="218.72" width="1.4" height="1.85" fill="#8d6a12"/><rect x="690.24" y="216" width="1.92" height="1.85" fill="#8d6a12"/><rect x="694.72" y="214.4" width="2.88" height="1.85" fill="#8d6a12"/><rect x="697.92" y="216" width="1.6" height="1.85" fill="#8d6a12"/><rect x="700.64" y="218.4" width="2.88" height="1.85" fill="#8d6a12"/><rect x="704.64" y="221.12" width="4.8" height="1.85" fill="#8d6a12"/><rect x="706.24" y="212.8" width="3.2" height="1.85" fill="#8d6a12"/><rect x="715.04" y="217.92" width="5.6" height="1.85" fill="#8d6a12"/><rect x="722.25" y="218.72" width="1.4" height="1.85" fill="#8d6a12"/><rect x="724.33" y="221.12" width="4.48" height="1.85" fill="#8d6a12"/><rect x="730.25" y="218.4" width="1.6" height="1.85" fill="#8d6a12"/><rect x="732.17" y="216" width="4.48" height="1.85" fill="#8d6a12"/><rect x="738.25" y="220.32" width="1.6" height="1.85" fill="#8d6a12"/><rect x="742.25" y="220.32" width="4" height="1.85" fill="#8d6a12"/><rect x="748.65" y="219.52" width="1.4" height="1.85" fill="#8d6a12"/><rect x="751.06" y="221.6" width="1.4" height="1.85" fill="#8d6a12"/><rect x="752.66" y="221.92" width="6.08" height="1.85" fill="#8d6a12"/><rect x="755.06" y="229.12" width="1.4" height="1.85" fill="#8d6a12"/><rect x="757.46" y="229.12" width="1.4" height="1.85" fill="#8d6a12"/><rect x="810.17" y="200.38" width="1" height="34" fill="#cfa234"/><rect x="804.26" y="211.98" width="7" height="1.85" fill="#8d6a12"/><rect x="824.46" y="211.98" width="1.41" height="1.85" fill="#8d6a12"/><rect x="795.96" y="226.28" width="24.7" height="1.85" fill="#8d6a12"/><rect x="874.19" y="200.38" width="1" height="34" fill="#cfa234"/><rect x="872.91" y="216.48" width="3.5" height="1.85" fill="#8d6a12"/><rect x="877.91" y="214.38" width="4.5" height="1.85" fill="#8d6a12"/><rect x="885.91" y="220.18" width="3.99" height="1.85" fill="#8d6a12"/><rect x="877.91" y="226.28" width="4.5" height="1.85" fill="#8d6a12"/><rect x="872.91" y="228.58" width="4" height="1.85" fill="#8d6a12"/><rect x="938.21" y="200.38" width="1" height="34" fill="#cfa234"/><rect x="924" y="226.28" width="23" height="1.85" fill="#8d6a12"/><rect x="1418.36" y="200.38" width="1" height="34" fill="#cfa234"/><rect x="1450.37" y="200.38" width="1" height="34" fill="#cfa234"/><rect x="1482.38" y="200.38" width="1" height="34" fill="#cfa234"/><rect x="1514.39" y="200.38" width="1" height="34" fill="#cfa234"/><rect x="1546.4" y="200.38" width="1" height="34" fill="#cfa234"/><rect x="1578.41" y="200.38" width="1" height="34" fill="#cfa234"/><rect x="1610.42" y="200.38" width="1" height="34" fill="#cfa234"/><rect x="1389.65" y="221.92" width="2.88" height="1.85" fill="#8d6a12"/><rect x="1393.17" y="220" width="2.24" height="1.85" fill="#8d6a12"/><rect x="1396.86" y="218.88" width="2.88" height="1.85" fill="#8d6a12"/><rect x="1400.54" y="218.08" width="2.56" height="1.85" fill="#8d6a12"/><rect x="1403.74" y="217.28" width="2.24" height="1.85" fill="#8d6a12"/><rect x="1406.46" y="216" width="3.2" height="1.85" fill="#8d6a12"/><rect x="1411.26" y="220.48" width="1.92" height="1.85" fill="#8d6a12"/><rect x="1413.34" y="221.12" width="4" height="1.85" fill="#8d6a12"/><rect x="1418.94" y="221.92" width="25.13" height="1.85" fill="#8d6a12"/><rect x="1426.46" y="214.08" width="8" height="1.85" fill="#8d6a12"/><rect x="1443.27" y="214.08" width="1.4" height="1.85" fill="#8d6a12"/><rect x="1446.47" y="214.08" width="1.4" height="1.85" fill="#8d6a12"/><rect x="1453.99" y="214.08" width="1.4" height="1.85" fill="#8d6a12"/><rect x="1455.59" y="215.36" width="1.4" height="1.85" fill="#8d6a12"/><rect x="1457.67" y="214.08" width="1.6" height="1.85" fill="#8d6a12"/><rect x="1459.6" y="216" width="1.92" height="1.85" fill="#8d6a12"/><rect x="1461.68" y="216" width="2.4" height="1.85" fill="#8d6a12"/><rect x="1464.88" y="214.08" width="4.8" height="1.85" fill="#8d6a12"/><rect x="1470.96" y="221.92" width="2.88" height="1.85" fill="#8d6a12"/><rect x="1474.48" y="221.12" width="2.4" height="1.85" fill="#8d6a12"/><rect x="1477.68" y="220.32" width="2.4" height="1.85" fill="#8d6a12"/><rect x="1480.08" y="219.52" width="2.4" height="1.85" fill="#8d6a12"/><rect x="1482.48" y="219.52" width="13.12" height="1.85" fill="#8d6a12"/><rect x="1490.97" y="211.68" width="4.48" height="1.85" fill="#8d6a12"/><rect x="1495.29" y="217.12" width="4" height="1.85" fill="#8d6a12"/><rect x="1506.97" y="217.12" width="1.6" height="1.85" fill="#8d6a12"/><rect x="1511.29" y="217.12" width="1.6" height="1.85" fill="#8d6a12"/><rect x="1518.49" y="216" width="1.6" height="1.85" fill="#8d6a12"/><rect x="1520.57" y="217.6" width="1.6" height="1.85" fill="#8d6a12"/><rect x="1522.5" y="216" width="1.6" height="1.85" fill="#8d6a12"/><rect x="1524.9" y="217.92" width="4.8" height="1.85" fill="#8d6a12"/><rect x="1530.5" y="216" width="1.92" height="1.85" fill="#8d6a12"/><rect x="1532.9" y="215.2" width="2.4" height="1.85" fill="#8d6a12"/><rect x="1536.1" y="216" width="8.8" height="1.85" fill="#8d6a12"/><rect x="1542.5" y="208.48" width="7.2" height="1.85" fill="#8d6a12"/><rect x="1551.3" y="216.32" width="1.4" height="1.85" fill="#8d6a12"/><rect x="1552.59" y="218.72" width="1.4" height="1.85" fill="#8d6a12"/><rect x="1554.51" y="216" width="1.92" height="1.85" fill="#8d6a12"/><rect x="1558.99" y="214.4" width="2.88" height="1.85" fill="#8d6a12"/><rect x="1562.19" y="216" width="1.6" height="1.85" fill="#8d6a12"/><rect x="1564.91" y="218.4" width="2.88" height="1.85" fill="#8d6a12"/><rect x="1568.91" y="221.12" width="4.8" height="1.85" fill="#8d6a12"/><rect x="1570.51" y="212.8" width="3.2" height="1.85" fill="#8d6a12"/><rect x="1579.31" y="217.92" width="5.6" height="1.85" fill="#8d6a12"/><rect x="1586.52" y="218.72" width="1.4" height="1.85" fill="#8d6a12"/><rect x="1588.6" y="221.12" width="4.48" height="1.85" fill="#8d6a12"/><rect x="1594.52" y="218.4" width="1.6" height="1.85" fill="#8d6a12"/><rect x="1596.44" y="216" width="4.48" height="1.85" fill="#8d6a12"/><rect x="1602.52" y="220.32" width="1.6" height="1.85" fill="#8d6a12"/><rect x="1606.52" y="220.32" width="4" height="1.85" fill="#8d6a12"/><rect x="1612.92" y="219.52" width="1.4" height="1.85" fill="#8d6a12"/><rect x="1615.33" y="221.6" width="1.4" height="1.85" fill="#8d6a12"/><rect x="1616.93" y="221.92" width="6.08" height="1.85" fill="#8d6a12"/><rect x="1619.33" y="229.12" width="1.4" height="1.85" fill="#8d6a12"/><rect x="1621.73" y="229.12" width="1.4" height="1.85" fill="#8d6a12"/><rect x="1431.85" y="206.38" width="3" height="1.85" fill="#8d6a12"/><rect x="1770.47" y="200.38" width="1" height="34" fill="#cfa234"/><rect x="1802.48" y="200.38" width="1" height="34" fill="#cfa234"/><rect x="1758.25" y="218.45" width="2.53" height="1.85" fill="#8d6a12"/><rect x="1761.29" y="216.68" width="2.53" height="1.85" fill="#8d6a12"/><rect x="1764.58" y="215.17" width="3.03" height="1.85" fill="#8d6a12"/><rect x="1768.12" y="213.9" width="3.03" height="1.85" fill="#8d6a12"/><rect x="1771.4" y="212.64" width="3.03" height="1.85" fill="#8d6a12"/><rect x="1774.69" y="210.87" width="2.53" height="1.85" fill="#8d6a12"/><rect x="1778.99" y="215.92" width="2.53" height="1.85" fill="#8d6a12"/><rect x="1781.52" y="217.7" width="3.54" height="1.85" fill="#8d6a12"/><rect x="1786.58" y="218.96" width="24.53" height="1.85" fill="#8d6a12"/><rect x="1791.13" y="210.61" width="1.4" height="1.85" fill="#8d6a12"/><rect x="1798.72" y="210.61" width="1.4" height="1.85" fill="#8d6a12"/><rect x="1806.81" y="210.61" width="1.4" height="1.85" fill="#8d6a12"/><rect x="1786.58" y="228.57" width="3.54" height="1.85" fill="#8d6a12"/><rect x="1794.67" y="228.57" width="3.54" height="1.85" fill="#8d6a12"/><rect x="1803.02" y="228.57" width="3.03" height="1.85" fill="#8d6a12"/><rect x="1810.6" y="228.57" width="1.4" height="1.85" fill="#8d6a12"/><rect x="1418.36" y="238" width="1" height="34" fill="#cfa234"/><rect x="1450.37" y="238" width="1" height="34" fill="#cfa234"/><rect x="1482.38" y="238" width="1" height="34" fill="#cfa234"/><rect x="1514.39" y="238" width="1" height="34" fill="#cfa234"/><rect x="1546.4" y="238" width="1" height="34" fill="#cfa234"/><rect x="1578.41" y="238" width="1" height="34" fill="#cfa234"/><rect x="1610.42" y="238" width="1" height="34" fill="#cfa234"/><rect x="1389.65" y="265.93" width="2.88" height="1.85" fill="#8d6a12"/><rect x="1393.17" y="263.53" width="2.24" height="1.85" fill="#8d6a12"/><rect x="1396.86" y="262.41" width="2.88" height="1.85" fill="#8d6a12"/><rect x="1400.54" y="261.61" width="2.56" height="1.85" fill="#8d6a12"/><rect x="1403.74" y="260.49" width="2.24" height="1.85" fill="#8d6a12"/><rect x="1406.46" y="258.89" width="3.2" height="1.85" fill="#8d6a12"/><rect x="1411.26" y="264.01" width="1.92" height="1.85" fill="#8d6a12"/><rect x="1413.34" y="265.13" width="4" height="1.85" fill="#8d6a12"/><rect x="1418.94" y="256.33" width="17.93" height="1.85" fill="#8d6a12"/><rect x="1418.94" y="265.93" width="25.13" height="1.85" fill="#8d6a12"/><rect x="1443.27" y="256.33" width="1.4" height="1.85" fill="#8d6a12"/><rect x="1446.47" y="256.33" width="1.4" height="1.85" fill="#8d6a12"/><rect x="1453.99" y="256.33" width="1.4" height="1.85" fill="#8d6a12"/><rect x="1455.59" y="257.61" width="1.4" height="1.85" fill="#8d6a12"/><rect x="1457.67" y="256.33" width="1.6" height="1.85" fill="#8d6a12"/><rect x="1459.6" y="258.41" width="1.92" height="1.85" fill="#8d6a12"/><rect x="1461.68" y="258.41" width="2.4" height="1.85" fill="#8d6a12"/><rect x="1464.88" y="256.33" width="4.8" height="1.85" fill="#8d6a12"/><rect x="1470.96" y="265.93" width="2.88" height="1.85" fill="#8d6a12"/><rect x="1474.48" y="264.81" width="2.4" height="1.85" fill="#8d6a12"/><rect x="1477.68" y="264.01" width="2.4" height="1.85" fill="#8d6a12"/><rect x="1480.08" y="263.21" width="2.4" height="1.85" fill="#8d6a12"/><rect x="1482.48" y="262.89" width="13.12" height="1.85" fill="#8d6a12"/><rect x="1486.96" y="252.81" width="7.52" height="1.85" fill="#8d6a12"/><rect x="1498.49" y="259.53" width="1.4" height="1.85" fill="#8d6a12"/><rect x="1510.97" y="259.53" width="2.4" height="1.85" fill="#8d6a12"/><rect x="1518.49" y="258.89" width="1.6" height="1.85" fill="#8d6a12"/><rect x="1520.57" y="260.49" width="1.6" height="1.85" fill="#8d6a12"/><rect x="1522.5" y="258.89" width="1.6" height="1.85" fill="#8d6a12"/><rect x="1524.9" y="260.81" width="4.8" height="1.85" fill="#8d6a12"/><rect x="1530.5" y="258.41" width="1.92" height="1.85" fill="#8d6a12"/><rect x="1532.9" y="257.29" width="2.4" height="1.85" fill="#8d6a12"/><rect x="1536.1" y="258.89" width="12" height="1.85" fill="#8d6a12"/><rect x="1539.3" y="248.49" width="8.8" height="1.85" fill="#8d6a12"/><rect x="1551.3" y="259.21" width="1.4" height="1.85" fill="#8d6a12"/><rect x="1552.59" y="261.61" width="1.4" height="1.85" fill="#8d6a12"/><rect x="1554.51" y="258.89" width="1.92" height="1.85" fill="#8d6a12"/><rect x="1558.99" y="256.81" width="2.88" height="1.85" fill="#8d6a12"/><rect x="1562.19" y="258.41" width="1.6" height="1.85" fill="#8d6a12"/><rect x="1564.91" y="261.13" width="2.88" height="1.85" fill="#8d6a12"/><rect x="1568.91" y="264.81" width="7.2" height="1.85" fill="#8d6a12"/><rect x="1579.31" y="260.81" width="5.6" height="1.85" fill="#8d6a12"/><rect x="1586.52" y="261.61" width="1.4" height="1.85" fill="#8d6a12"/><rect x="1588.6" y="264.81" width="4.48" height="1.85" fill="#8d6a12"/><rect x="1594.52" y="261.13" width="1.6" height="1.85" fill="#8d6a12"/><rect x="1596.44" y="258.89" width="4.48" height="1.85" fill="#8d6a12"/><rect x="1602.52" y="263.53" width="1.6" height="1.85" fill="#8d6a12"/><rect x="1606.52" y="263.53" width="1.6" height="1.85" fill="#8d6a12"/><rect x="1612.92" y="263.21" width="1.4" height="1.85" fill="#8d6a12"/><rect x="1615.33" y="265.61" width="1.4" height="1.85" fill="#8d6a12"/><rect x="1616.93" y="265.93" width="6.08" height="1.85" fill="#8d6a12"/><rect x="1619.33" y="256.33" width="3.2" height="1.85" fill="#8d6a12"/><rect x="298.01" y="275.62" width="1" height="34" fill="#cfa234"/><rect x="330.02" y="275.62" width="1" height="34" fill="#cfa234"/><rect x="362.03" y="275.62" width="1" height="34" fill="#cfa234"/><rect x="394.04" y="275.62" width="1" height="34" fill="#cfa234"/><rect x="426.05" y="275.62" width="1" height="34" fill="#cfa234"/><rect x="458.06" y="275.62" width="1" height="34" fill="#cfa234"/><rect x="490.07" y="275.62" width="1" height="34" fill="#cfa234"/><rect x="270.29" y="300.78" width="2.53" height="1.85" fill="#8d6a12"/><rect x="273.33" y="297.49" width="2.53" height="1.85" fill="#8d6a12"/><rect x="276.62" y="295.72" width="3.03" height="1.85" fill="#8d6a12"/><rect x="280.41" y="293.95" width="3.03" height="1.85" fill="#8d6a12"/><rect x="284.2" y="291.92" width="3.03" height="1.85" fill="#8d6a12"/><rect x="287.49" y="290.15" width="2.53" height="1.85" fill="#8d6a12"/><rect x="290.53" y="297.49" width="2.53" height="1.85" fill="#8d6a12"/><rect x="293.06" y="299.01" width="4.55" height="1.85" fill="#8d6a12"/><rect x="298.87" y="301.28" width="25.04" height="1.85" fill="#8d6a12"/><rect x="333.52" y="286.87" width="1.52" height="1.85" fill="#8d6a12"/><rect x="338.07" y="286.87" width="1.52" height="1.85" fill="#8d6a12"/><rect x="334.79" y="290.66" width="1.52" height="1.85" fill="#8d6a12"/><rect x="339.84" y="290.66" width="1.52" height="1.85" fill="#8d6a12"/><rect x="343.64" y="286.36" width="5.56" height="1.85" fill="#8d6a12"/><rect x="350.72" y="301.53" width="3.03" height="1.85" fill="#8d6a12"/><rect x="354.26" y="299.51" width="2.53" height="1.85" fill="#8d6a12"/><rect x="357.55" y="298.25" width="4.55" height="1.85" fill="#8d6a12"/><rect x="362.61" y="296.48" width="11.89" height="1.85" fill="#8d6a12"/><rect x="378.54" y="291.42" width="1.4" height="1.85" fill="#8d6a12"/><rect x="387.14" y="291.42" width="1.52" height="1.85" fill="#8d6a12"/><rect x="390.93" y="291.42" width="1.52" height="1.85" fill="#8d6a12"/><rect x="398.77" y="290.66" width="2.02" height="1.85" fill="#8d6a12"/><rect x="401.81" y="292.43" width="2.02" height="1.85" fill="#8d6a12"/><rect x="404.84" y="293.19" width="3.54" height="1.85" fill="#8d6a12"/><rect x="410.66" y="290.66" width="2.53" height="1.85" fill="#8d6a12"/><rect x="413.19" y="288.89" width="3.03" height="1.85" fill="#8d6a12"/><rect x="416.47" y="290.66" width="8.09" height="1.85" fill="#8d6a12"/><rect x="430.89" y="291.92" width="1.52" height="1.85" fill="#8d6a12"/><rect x="433.42" y="290.15" width="2.53" height="1.85" fill="#8d6a12"/><rect x="437.72" y="287.62" width="3.03" height="1.85" fill="#8d6a12"/><rect x="441.77" y="290.15" width="2.02" height="1.85" fill="#8d6a12"/><rect x="444.8" y="293.19" width="2.53" height="1.85" fill="#8d6a12"/><rect x="448.59" y="299.01" width="4.55" height="1.85" fill="#8d6a12"/><rect x="458.71" y="291.92" width="2.53" height="1.85" fill="#8d6a12"/><rect x="462" y="293.19" width="3.03" height="1.85" fill="#8d6a12"/><rect x="466.3" y="294.96" width="2.02" height="1.85" fill="#8d6a12"/><rect x="468.83" y="299.01" width="4.05" height="1.85" fill="#8d6a12"/><rect x="475.15" y="290.66" width="2.53" height="1.85" fill="#8d6a12"/><rect x="478.18" y="290.15" width="3.54" height="1.85" fill="#8d6a12"/><rect x="482.74" y="297.74" width="1.52" height="1.85" fill="#8d6a12"/><rect x="486.53" y="297.74" width="1.52" height="1.85" fill="#8d6a12"/><rect x="492.85" y="296.48" width="1.52" height="1.85" fill="#8d6a12"/><rect x="496.65" y="301.28" width="7.59" height="1.85" fill="#8d6a12"/><rect x="554.09" y="275.62" width="1" height="34" fill="#cfa234"/><rect x="586.1" y="275.62" width="1" height="34" fill="#cfa234"/><rect x="618.11" y="275.62" width="1" height="34" fill="#cfa234"/><rect x="650.12" y="275.62" width="1" height="34" fill="#cfa234"/><rect x="682.13" y="275.62" width="1" height="34" fill="#cfa234"/><rect x="714.14" y="275.62" width="1" height="34" fill="#cfa234"/><rect x="746.15" y="275.62" width="1" height="34" fill="#cfa234"/><rect x="525.38" y="303.55" width="2.88" height="1.85" fill="#8d6a12"/><rect x="528.9" y="301.15" width="2.24" height="1.85" fill="#8d6a12"/><rect x="532.59" y="300.03" width="2.88" height="1.85" fill="#8d6a12"/><rect x="536.27" y="299.23" width="2.56" height="1.85" fill="#8d6a12"/><rect x="539.47" y="298.11" width="2.24" height="1.85" fill="#8d6a12"/><rect x="542.19" y="296.51" width="3.2" height="1.85" fill="#8d6a12"/><rect x="546.99" y="301.63" width="1.92" height="1.85" fill="#8d6a12"/><rect x="549.07" y="302.75" width="4" height="1.85" fill="#8d6a12"/><rect x="554.67" y="305.15" width="25.13" height="1.85" fill="#8d6a12"/><rect x="557.71" y="291.23" width="8" height="1.85" fill="#8d6a12"/><rect x="568.6" y="291.23" width="1.4" height="1.85" fill="#8d6a12"/><rect x="575.32" y="291.23" width="1.4" height="1.85" fill="#8d6a12"/><rect x="579.32" y="291.23" width="1.4" height="1.85" fill="#8d6a12"/><rect x="588.6" y="291.23" width="1.4" height="1.85" fill="#8d6a12"/><rect x="592.6" y="291.23" width="1.4" height="1.85" fill="#8d6a12"/><rect x="596.61" y="291.23" width="4.8" height="1.85" fill="#8d6a12"/><rect x="589.72" y="295.23" width="1.4" height="1.85" fill="#8d6a12"/><rect x="594.21" y="295.23" width="1.92" height="1.85" fill="#8d6a12"/><rect x="606.69" y="305.15" width="2.88" height="1.85" fill="#8d6a12"/><rect x="610.21" y="303.55" width="2.4" height="1.85" fill="#8d6a12"/><rect x="613.41" y="302.43" width="2.4" height="1.85" fill="#8d6a12"/><rect x="615.81" y="301.63" width="2.4" height="1.85" fill="#8d6a12"/><rect x="618.21" y="301.15" width="13.12" height="1.85" fill="#8d6a12"/><rect x="634.22" y="296.03" width="1.4" height="1.85" fill="#8d6a12"/><rect x="643.02" y="296.03" width="1.4" height="1.85" fill="#8d6a12"/><rect x="647.02" y="296.03" width="1.6" height="1.85" fill="#8d6a12"/><rect x="654.22" y="295.23" width="1.6" height="1.85" fill="#8d6a12"/><rect x="656.3" y="296.83" width="1.6" height="1.85" fill="#8d6a12"/><rect x="658.23" y="295.23" width="1.6" height="1.85" fill="#8d6a12"/><rect x="660.63" y="297.15" width="4.8" height="1.85" fill="#8d6a12"/><rect x="666.23" y="295.23" width="1.92" height="1.85" fill="#8d6a12"/><rect x="668.63" y="293.95" width="2.4" height="1.85" fill="#8d6a12"/><rect x="671.83" y="295.23" width="12" height="1.85" fill="#8d6a12"/><rect x="687.03" y="296.03" width="1.4" height="1.85" fill="#8d6a12"/><rect x="688.32" y="298.43" width="1.4" height="1.85" fill="#8d6a12"/><rect x="690.24" y="295.55" width="1.92" height="1.85" fill="#8d6a12"/><rect x="694.72" y="292.83" width="2.88" height="1.85" fill="#8d6a12"/><rect x="697.92" y="295.23" width="1.6" height="1.85" fill="#8d6a12"/><rect x="700.64" y="298.75" width="2.88" height="1.85" fill="#8d6a12"/><rect x="704.64" y="303.55" width="7.2" height="1.85" fill="#8d6a12"/><rect x="715.04" y="297.63" width="5.6" height="1.85" fill="#8d6a12"/><rect x="722.25" y="299.23" width="1.4" height="1.85" fill="#8d6a12"/><rect x="724.33" y="303.55" width="4.48" height="1.85" fill="#8d6a12"/><rect x="730.25" y="297.63" width="1.6" height="1.85" fill="#8d6a12"/><rect x="732.17" y="295.23" width="4.48" height="1.85" fill="#8d6a12"/><rect x="738.25" y="300.83" width="1.6" height="1.85" fill="#8d6a12"/><rect x="742.25" y="300.83" width="1.6" height="1.85" fill="#8d6a12"/><rect x="748.65" y="300.03" width="1.4" height="1.85" fill="#8d6a12"/><rect x="751.06" y="304.03" width="1.4" height="1.85" fill="#8d6a12"/><rect x="752.66" y="305.63" width="6.08" height="1.85" fill="#8d6a12"/><rect x="810.17" y="275.62" width="1" height="34" fill="#cfa234"/><rect x="808.66" y="293.22" width="3.5" height="1.85" fill="#8d6a12"/><rect x="808.66" y="303.22" width="3.5" height="1.85" fill="#8d6a12"/><rect x="874.19" y="275.62" width="1" height="34" fill="#cfa234"/><rect x="875.01" y="286.82" width="1.8" height="1.85" fill="#8d6a12"/><rect x="877.91" y="288.82" width="4" height="1.85" fill="#8d6a12"/><rect x="882.91" y="290.62" width="1.8" height="1.85" fill="#8d6a12"/><rect x="884.91" y="294.92" width="4.99" height="1.85" fill="#8d6a12"/><rect x="906.2" y="275.62" width="1" height="34" fill="#cfa234"/><rect x="938.21" y="275.62" width="1" height="34" fill="#cfa234"/><rect x="894.49" y="300.78" width="2.53" height="1.85" fill="#8d6a12"/><rect x="897.52" y="297.49" width="2.53" height="1.85" fill="#8d6a12"/><rect x="900.81" y="295.72" width="3.03" height="1.85" fill="#8d6a12"/><rect x="904.6" y="293.95" width="3.03" height="1.85" fill="#8d6a12"/><rect x="908.4" y="291.92" width="3.03" height="1.85" fill="#8d6a12"/><rect x="911.69" y="290.15" width="2.53" height="1.85" fill="#8d6a12"/><rect x="914.72" y="297.49" width="2.53" height="1.85" fill="#8d6a12"/><rect x="917.25" y="299.01" width="4.55" height="1.85" fill="#8d6a12"/><rect x="923.07" y="301.28" width="25.04" height="1.85" fill="#8d6a12"/><rect x="1162.28" y="275.62" width="1" height="34" fill="#cfa234"/><rect x="1150.57" y="300.78" width="2.53" height="1.85" fill="#8d6a12"/><rect x="1153.6" y="297.49" width="2.53" height="1.85" fill="#8d6a12"/><rect x="1156.89" y="295.72" width="3.03" height="1.85" fill="#8d6a12"/><rect x="1160.68" y="293.95" width="3.03" height="1.85" fill="#8d6a12"/><rect x="1164.48" y="291.92" width="3.03" height="1.85" fill="#8d6a12"/><rect x="1167.77" y="290.15" width="2.53" height="1.85" fill="#8d6a12"/><rect x="1170.8" y="297.49" width="2.53" height="1.85" fill="#8d6a12"/><rect x="1173.33" y="299.01" width="4.55" height="1.85" fill="#8d6a12"/><rect x="1229.4" y="298.22" width="1.6" height="1.85" fill="#8d6a12"/><rect x="1231.9" y="297.22" width="1.6" height="1.85" fill="#8d6a12"/><rect x="1234.4" y="296.62" width="1.6" height="1.85" fill="#8d6a12"/><rect x="1237" y="295.82" width="2.4" height="1.85" fill="#8d6a12"/><rect x="1290.32" y="275.62" width="1" height="34" fill="#cfa234"/><rect x="1322.33" y="275.62" width="1" height="34" fill="#cfa234"/><rect x="1354.34" y="275.62" width="1" height="34" fill="#cfa234"/><rect x="1292.1" y="296.48" width="1.6" height="1.85" fill="#8d6a12"/><rect x="1295.38" y="298.25" width="1.6" height="1.85" fill="#8d6a12"/><rect x="1298.42" y="304.57" width="1.6" height="1.85" fill="#8d6a12"/><rect x="1302.21" y="300.27" width="1.6" height="1.85" fill="#8d6a12"/><rect x="1323.71" y="291.92" width="1.6" height="1.85" fill="#8d6a12"/><rect x="1327.5" y="293.19" width="1.6" height="1.85" fill="#8d6a12"/><rect x="1330.79" y="300.27" width="1.6" height="1.85" fill="#8d6a12"/><rect x="1334.33" y="296.48" width="1.6" height="1.85" fill="#8d6a12"/><rect x="1363.42" y="303.3" width="1.6" height="1.85" fill="#8d6a12"/><rect x="1369.99" y="291.92" width="1.6" height="1.85" fill="#8d6a12"/><rect x="1379.35" y="303.3" width="1.6" height="1.85" fill="#8d6a12"/><rect x="1381.88" y="298.25" width="1.6" height="1.85" fill="#8d6a12"/><rect x="1384.41" y="293.19" width="1.6" height="1.85" fill="#8d6a12"/><rect x="1418.36" y="275.62" width="1" height="34" fill="#cfa234"/><rect x="1450.37" y="275.62" width="1" height="34" fill="#cfa234"/><rect x="1482.38" y="275.62" width="1" height="34" fill="#cfa234"/><rect x="1514.39" y="275.62" width="1" height="34" fill="#cfa234"/><rect x="1546.4" y="275.62" width="1" height="34" fill="#cfa234"/><rect x="1578.41" y="275.62" width="1" height="34" fill="#cfa234"/><rect x="1610.42" y="275.62" width="1" height="34" fill="#cfa234"/><rect x="1389.65" y="303.55" width="2.88" height="1.85" fill="#8d6a12"/><rect x="1393.17" y="301.15" width="2.24" height="1.85" fill="#8d6a12"/><rect x="1396.86" y="300.03" width="2.88" height="1.85" fill="#8d6a12"/><rect x="1400.54" y="299.23" width="2.56" height="1.85" fill="#8d6a12"/><rect x="1403.74" y="298.11" width="2.24" height="1.85" fill="#8d6a12"/><rect x="1406.46" y="296.51" width="3.2" height="1.85" fill="#8d6a12"/><rect x="1411.26" y="301.63" width="1.92" height="1.85" fill="#8d6a12"/><rect x="1413.34" y="302.75" width="4" height="1.85" fill="#8d6a12"/><rect x="1418.94" y="305.15" width="25.13" height="1.85" fill="#8d6a12"/><rect x="1421.98" y="291.23" width="8" height="1.85" fill="#8d6a12"/><rect x="1432.87" y="291.23" width="1.4" height="1.85" fill="#8d6a12"/><rect x="1439.59" y="291.23" width="1.4" height="1.85" fill="#8d6a12"/><rect x="1443.59" y="291.23" width="1.4" height="1.85" fill="#8d6a12"/><rect x="1452.87" y="291.23" width="1.4" height="1.85" fill="#8d6a12"/><rect x="1456.87" y="291.23" width="1.4" height="1.85" fill="#8d6a12"/><rect x="1460.88" y="291.23" width="4.8" height="1.85" fill="#8d6a12"/><rect x="1453.99" y="295.23" width="1.4" height="1.85" fill="#8d6a12"/><rect x="1458.48" y="295.23" width="1.92" height="1.85" fill="#8d6a12"/><rect x="1470.96" y="305.15" width="2.88" height="1.85" fill="#8d6a12"/><rect x="1474.48" y="303.55" width="2.4" height="1.85" fill="#8d6a12"/><rect x="1477.68" y="302.43" width="2.4" height="1.85" fill="#8d6a12"/><rect x="1480.08" y="301.63" width="2.4" height="1.85" fill="#8d6a12"/><rect x="1482.48" y="301.15" width="13.12" height="1.85" fill="#8d6a12"/><rect x="1498.49" y="296.03" width="1.4" height="1.85" fill="#8d6a12"/><rect x="1507.29" y="296.03" width="1.4" height="1.85" fill="#8d6a12"/><rect x="1511.29" y="296.03" width="1.6" height="1.85" fill="#8d6a12"/><rect x="1518.49" y="295.23" width="1.6" height="1.85" fill="#8d6a12"/><rect x="1520.57" y="296.83" width="1.6" height="1.85" fill="#8d6a12"/><rect x="1522.5" y="295.23" width="1.6" height="1.85" fill="#8d6a12"/><rect x="1524.9" y="297.15" width="4.8" height="1.85" fill="#8d6a12"/><rect x="1530.5" y="295.23" width="1.92" height="1.85" fill="#8d6a12"/><rect x="1532.9" y="293.95" width="2.4" height="1.85" fill="#8d6a12"/><rect x="1536.1" y="295.23" width="12" height="1.85" fill="#8d6a12"/><rect x="1551.3" y="296.03" width="1.4" height="1.85" fill="#8d6a12"/><rect x="1552.59" y="298.43" width="1.4" height="1.85" fill="#8d6a12"/><rect x="1554.51" y="295.55" width="1.92" height="1.85" fill="#8d6a12"/><rect x="1558.99" y="292.83" width="2.88" height="1.85" fill="#8d6a12"/><rect x="1562.19" y="295.23" width="1.6" height="1.85" fill="#8d6a12"/><rect x="1564.91" y="298.75" width="2.88" height="1.85" fill="#8d6a12"/><rect x="1568.91" y="303.55" width="7.2" height="1.85" fill="#8d6a12"/><rect x="1579.31" y="297.63" width="5.6" height="1.85" fill="#8d6a12"/><rect x="1586.52" y="299.23" width="1.4" height="1.85" fill="#8d6a12"/><rect x="1588.6" y="303.55" width="4.48" height="1.85" fill="#8d6a12"/><rect x="1594.52" y="297.63" width="1.6" height="1.85" fill="#8d6a12"/><rect x="1596.44" y="295.23" width="4.48" height="1.85" fill="#8d6a12"/><rect x="1602.52" y="300.83" width="1.6" height="1.85" fill="#8d6a12"/><rect x="1606.52" y="300.83" width="1.6" height="1.85" fill="#8d6a12"/><rect x="1612.92" y="300.03" width="1.4" height="1.85" fill="#8d6a12"/><rect x="1615.33" y="304.03" width="1.4" height="1.85" fill="#8d6a12"/><rect x="1616.93" y="305.63" width="6.08" height="1.85" fill="#8d6a12"/><rect x="1770.47" y="275.62" width="1" height="34" fill="#cfa234"/><rect x="1802.48" y="275.62" width="1" height="34" fill="#cfa234"/><rect x="1758.25" y="300.78" width="2.53" height="1.85" fill="#8d6a12"/><rect x="1761.29" y="298.25" width="2.53" height="1.85" fill="#8d6a12"/><rect x="1764.58" y="296.48" width="3.03" height="1.85" fill="#8d6a12"/><rect x="1768.12" y="294.45" width="3.03" height="1.85" fill="#8d6a12"/><rect x="1771.4" y="292.68" width="3.03" height="1.85" fill="#8d6a12"/><rect x="1774.69" y="290.66" width="2.53" height="1.85" fill="#8d6a12"/><rect x="1778.99" y="297.49" width="2.53" height="1.85" fill="#8d6a12"/><rect x="1781.52" y="299.01" width="3.54" height="1.85" fill="#8d6a12"/><rect x="1786.58" y="301.28" width="25.29" height="1.85" fill="#8d6a12"/><rect x="938.21" y="313.24" width="1" height="34" fill="#3594d2"/><rect x="932.28" y="324.33" width="1.6" height="1.8" fill="#1868a8"/><rect x="934.17" y="326.61" width="1.6" height="1.8" fill="#1868a8"/><rect x="935.44" y="328.38" width="1.6" height="1.8" fill="#1868a8"/><rect x="936.7" y="330.4" width="1.6" height="1.8" fill="#1868a8"/><rect x="945.56" y="321.8" width="1.8" height="1.8" fill="#1868a8"/><rect x="947.66" y="323.41" width="1.8" height="1.8" fill="#1868a8"/><rect x="949.77" y="325.01" width="1.8" height="1.8" fill="#1868a8"/><rect x="951.88" y="326.61" width="1.6" height="1.8" fill="#1868a8"/><rect x="970.22" y="313.24" width="1" height="34" fill="#3594d2"/><rect x="1002.23" y="313.24" width="1" height="34" fill="#3594d2"/><rect x="1034.24" y="313.24" width="1" height="34" fill="#3594d2"/><rect x="1066.25" y="313.24" width="1" height="34" fill="#3594d2"/><rect x="1098.26" y="313.24" width="1" height="34" fill="#3594d2"/><rect x="1130.27" y="313.24" width="1" height="34" fill="#3594d2"/><rect x="1162.28" y="313.24" width="1" height="34" fill="#3594d2"/><rect x="1194.29" y="313.24" width="1" height="34" fill="#3594d2"/><rect x="1226.3" y="313.24" width="1" height="34" fill="#3594d2"/><rect x="1258.31" y="313.24" width="1" height="34" fill="#3594d2"/><rect x="1290.32" y="313.24" width="1" height="34" fill="#3594d2"/><rect x="1322.33" y="313.24" width="1" height="34" fill="#3594d2"/><rect x="1354.34" y="313.24" width="1" height="34" fill="#3594d2"/><rect x="965.79" y="323.7" width="3.16" height="1.8" fill="#1868a8"/><rect x="970.21" y="331.54" width="12.01" height="1.8" fill="#1868a8"/><rect x="986.02" y="331.54" width="1.9" height="1.8" fill="#1868a8"/><rect x="989.81" y="327.49" width="2.53" height="1.8" fill="#1868a8"/><rect x="992.34" y="331.29" width="1.6" height="1.8" fill="#1868a8"/><rect x="988.55" y="335.71" width="1.6" height="1.8" fill="#1868a8"/><rect x="993.99" y="333.82" width="1.6" height="1.8" fill="#1868a8"/><rect x="996.77" y="331.54" width="1.6" height="1.8" fill="#1868a8"/><rect x="994.24" y="335.71" width="1.9" height="1.8" fill="#1868a8"/><rect x="998.67" y="335.71" width="1.9" height="1.8" fill="#1868a8"/><rect x="1000.56" y="337.99" width="1.9" height="1.8" fill="#1868a8"/><rect x="1006.25" y="332.55" width="1.6" height="1.8" fill="#1868a8"/><rect x="1004.99" y="335.71" width="1.6" height="1.8" fill="#1868a8"/><rect x="1010.68" y="335.71" width="1.6" height="1.8" fill="#1868a8"/><rect x="1008.78" y="341.02" width="1.6" height="1.8" fill="#1868a8"/><rect x="1014.47" y="341.02" width="1.9" height="1.8" fill="#1868a8"/><rect x="1012.96" y="343.05" width="1.6" height="1.8" fill="#1868a8"/><rect x="1029.02" y="336.98" width="1.6" height="1.8" fill="#1868a8"/><rect x="1030.91" y="339.89" width="1.6" height="1.8" fill="#1868a8"/><rect x="1032.18" y="341.4" width="1.6" height="1.8" fill="#1868a8"/><rect x="1042.29" y="328.38" width="1.6" height="1.8" fill="#1868a8"/><rect x="1049.25" y="331.29" width="1.6" height="1.8" fill="#1868a8"/><rect x="1046.72" y="333.82" width="1.6" height="1.8" fill="#1868a8"/><rect x="1044.82" y="336.73" width="1.6" height="1.8" fill="#1868a8"/><rect x="1068.85" y="343.93" width="1.6" height="1.8" fill="#1868a8"/><rect x="1070.75" y="341.02" width="1.6" height="1.8" fill="#1868a8"/><rect x="1073.27" y="337.99" width="1.6" height="1.8" fill="#1868a8"/><rect x="1077.07" y="334.07" width="1.6" height="1.8" fill="#1868a8"/><rect x="1074.54" y="330.4" width="2.53" height="1.8" fill="#1868a8"/><rect x="1082.13" y="330.02" width="1.9" height="1.8" fill="#1868a8"/><rect x="1086.55" y="326.23" width="2.53" height="1.8" fill="#1868a8"/><rect x="1089.08" y="330.02" width="1.6" height="1.8" fill="#1868a8"/><rect x="1092.87" y="330.02" width="1.6" height="1.8" fill="#1868a8"/><rect x="1078.33" y="337.99" width="2.53" height="1.8" fill="#1868a8"/><rect x="1080.86" y="340.77" width="1.6" height="1.8" fill="#1868a8"/><rect x="1085.03" y="333.82" width="1.6" height="1.8" fill="#1868a8"/><rect x="1090.98" y="334.07" width="1.6" height="1.8" fill="#1868a8"/><rect x="1094.77" y="334.07" width="1.6" height="1.8" fill="#1868a8"/><rect x="1097.3" y="336.73" width="1.6" height="1.8" fill="#1868a8"/><rect x="1100.72" y="323.7" width="1.6" height="1.8" fill="#1868a8"/><rect x="1112.85" y="330.4" width="1.6" height="1.8" fill="#1868a8"/><rect x="1113.74" y="335.71" width="12.65" height="1.8" fill="#1868a8"/><rect x="1020.8" y="331.29" width="1.8" height="1.8" fill="#1868a8"/><rect x="1022.9" y="332.26" width="1.8" height="1.8" fill="#1868a8"/><rect x="1025.01" y="333.23" width="1.8" height="1.8" fill="#1868a8"/><rect x="1027.12" y="334.2" width="1.8" height="1.8" fill="#1868a8"/><rect x="1138.4" y="329.77" width="1.8" height="1.8" fill="#1868a8"/><rect x="1140.3" y="330.82" width="1.8" height="1.8" fill="#1868a8"/><rect x="1142.19" y="331.88" width="1.8" height="1.8" fill="#1868a8"/><rect x="1144.09" y="332.93" width="1.8" height="1.8" fill="#1868a8"/><rect x="1172.79" y="328.38" width="1.6" height="1.8" fill="#1868a8"/><rect x="1177.22" y="330.4" width="1.6" height="1.8" fill="#1868a8"/><rect x="1182.91" y="327.49" width="2.53" height="1.8" fill="#1868a8"/><rect x="1179.12" y="332.17" width="1.6" height="1.8" fill="#1868a8"/><rect x="1181.01" y="335.71" width="1.6" height="1.8" fill="#1868a8"/><rect x="1185.44" y="331.29" width="1.6" height="1.8" fill="#1868a8"/><rect x="1188.6" y="331.29" width="1.6" height="1.8" fill="#1868a8"/><rect x="1186.7" y="335.71" width="1.6" height="1.8" fill="#1868a8"/><rect x="1190.5" y="335.71" width="1.6" height="1.8" fill="#1868a8"/><rect x="1193.03" y="338.24" width="1.6" height="1.8" fill="#1868a8"/><rect x="1221.48" y="337.23" width="1.6" height="1.8" fill="#1868a8"/><rect x="1223.38" y="339.89" width="1.6" height="1.8" fill="#1868a8"/><rect x="1225.27" y="341.66" width="1.6" height="1.8" fill="#1868a8"/><rect x="1234.12" y="327.24" width="5.69" height="1.8" fill="#1868a8"/><rect x="1246.77" y="330.02" width="1.6" height="1.8" fill="#1868a8"/><rect x="1244.87" y="332.17" width="1.6" height="1.8" fill="#1868a8"/><rect x="1251.2" y="332.17" width="1.6" height="1.8" fill="#1868a8"/><rect x="1249.3" y="338.24" width="1.6" height="1.8" fill="#1868a8"/><rect x="1253.09" y="340.52" width="1.6" height="1.8" fill="#1868a8"/><rect x="1255.62" y="337.99" width="1.6" height="1.8" fill="#1868a8"/><rect x="1261.31" y="342.67" width="1.6" height="1.8" fill="#1868a8"/><rect x="1263.21" y="340.52" width="1.6" height="1.8" fill="#1868a8"/><rect x="1265.74" y="338.24" width="1.6" height="1.8" fill="#1868a8"/><rect x="1267.63" y="332.17" width="1.9" height="1.8" fill="#1868a8"/><rect x="1268.9" y="334.45" width="1.6" height="1.8" fill="#1868a8"/><rect x="1270.8" y="337.99" width="1.6" height="1.8" fill="#1868a8"/><rect x="1273.33" y="340.52" width="1.6" height="1.8" fill="#1868a8"/><rect x="1301.15" y="337.99" width="4.43" height="1.8" fill="#1868a8"/><rect x="1297.1" y="342.67" width="1.6" height="1.8" fill="#1868a8"/><rect x="1331.49" y="334.07" width="5.69" height="1.8" fill="#1868a8"/><rect x="1329.22" y="338.24" width="1.6" height="1.8" fill="#1868a8"/><rect x="1346.42" y="341.66" width="1.6" height="1.8" fill="#1868a8"/><rect x="1363.11" y="327.49" width="1.6" height="1.8" fill="#1868a8"/><rect x="1368.8" y="330.02" width="1.6" height="1.8" fill="#1868a8"/><rect x="1365.64" y="335.71" width="1.6" height="1.8" fill="#1868a8"/><rect x="1362.85" y="341.66" width="1.6" height="1.8" fill="#1868a8"/><rect x="1378.91" y="327.49" width="1.6" height="1.8" fill="#1868a8"/><rect x="1382.71" y="332.55" width="1.6" height="1.8" fill="#1868a8"/><rect x="1381.44" y="335.71" width="1.6" height="1.8" fill="#1868a8"/><rect x="1378.54" y="341.66" width="1.6" height="1.8" fill="#1868a8"/><rect x="1213.26" y="331.29" width="1.8" height="1.8" fill="#1868a8"/><rect x="1215.37" y="332.34" width="1.8" height="1.8" fill="#1868a8"/><rect x="1217.47" y="333.4" width="1.8" height="1.8" fill="#1868a8"/><rect x="1219.58" y="334.45" width="1.8" height="1.8" fill="#1868a8"/><rect x="1277.12" y="327.49" width="1.9" height="1.8" fill="#1868a8"/><rect x="1279.51" y="328.52" width="1.9" height="1.8" fill="#1868a8"/><rect x="1281.9" y="329.55" width="1.9" height="1.8" fill="#1868a8"/><rect x="1284.28" y="330.57" width="1.9" height="1.8" fill="#1868a8"/><rect x="1286.67" y="331.6" width="1.9" height="1.8" fill="#1868a8"/><rect x="1289.06" y="332.62" width="1.9" height="1.8" fill="#1868a8"/><rect x="1291.45" y="333.65" width="1.9" height="1.8" fill="#1868a8"/><rect x="1293.84" y="334.67" width="1.9" height="1.8" fill="#1868a8"/><rect x="1296.23" y="335.7" width="1.9" height="1.8" fill="#1868a8"/><rect x="1298.62" y="336.73" width="1.9" height="1.8" fill="#1868a8"/><rect x="1308.99" y="323.7" width="1.9" height="1.8" fill="#1868a8"/><rect x="1311.21" y="324.64" width="1.9" height="1.8" fill="#1868a8"/><rect x="1313.43" y="325.58" width="1.9" height="1.8" fill="#1868a8"/><rect x="1315.65" y="326.52" width="1.9" height="1.8" fill="#1868a8"/><rect x="1317.87" y="327.47" width="1.9" height="1.8" fill="#1868a8"/><rect x="1320.09" y="328.41" width="1.9" height="1.8" fill="#1868a8"/><rect x="1322.31" y="329.35" width="1.9" height="1.8" fill="#1868a8"/><rect x="1324.53" y="330.29" width="1.9" height="1.8" fill="#1868a8"/><rect x="1326.75" y="331.23" width="1.9" height="1.8" fill="#1868a8"/><rect x="1328.96" y="332.17" width="1.9" height="1.8" fill="#1868a8"/><rect x="1346.04" y="329.77" width="1.8" height="1.8" fill="#1868a8"/><rect x="1347.93" y="330.82" width="1.8" height="1.8" fill="#1868a8"/><rect x="1349.83" y="331.88" width="1.8" height="1.8" fill="#1868a8"/><rect x="1351.73" y="332.93" width="1.8" height="1.8" fill="#1868a8"/><rect x="1418.36" y="313.24" width="1" height="34" fill="#3594d2"/><rect x="1450.37" y="313.24" width="1" height="34" fill="#3594d2"/><rect x="1482.38" y="313.24" width="1" height="34" fill="#3594d2"/><rect x="1514.39" y="313.24" width="1" height="34" fill="#3594d2"/><rect x="1546.4" y="313.24" width="1" height="34" fill="#3594d2"/><rect x="1578.41" y="313.24" width="1" height="34" fill="#3594d2"/><rect x="1610.42" y="313.24" width="1" height="34" fill="#3594d2"/><rect x="1412.87" y="328.38" width="1.6" height="1.8" fill="#1868a8"/><rect x="1417.3" y="330.4" width="1.6" height="1.8" fill="#1868a8"/><rect x="1422.99" y="327.49" width="2.53" height="1.8" fill="#1868a8"/><rect x="1419.2" y="332.17" width="1.6" height="1.8" fill="#1868a8"/><rect x="1421.09" y="335.71" width="1.6" height="1.8" fill="#1868a8"/><rect x="1425.52" y="331.29" width="1.6" height="1.8" fill="#1868a8"/><rect x="1428.68" y="331.29" width="1.6" height="1.8" fill="#1868a8"/><rect x="1426.78" y="335.71" width="1.6" height="1.8" fill="#1868a8"/><rect x="1430.58" y="335.71" width="1.6" height="1.8" fill="#1868a8"/><rect x="1433.11" y="338.24" width="1.6" height="1.8" fill="#1868a8"/><rect x="1461.56" y="337.23" width="1.6" height="1.8" fill="#1868a8"/><rect x="1463.46" y="339.89" width="1.6" height="1.8" fill="#1868a8"/><rect x="1465.35" y="341.66" width="1.6" height="1.8" fill="#1868a8"/><rect x="1474.2" y="327.24" width="5.69" height="1.8" fill="#1868a8"/><rect x="1486.85" y="330.02" width="1.6" height="1.8" fill="#1868a8"/><rect x="1484.95" y="332.17" width="1.6" height="1.8" fill="#1868a8"/><rect x="1491.28" y="332.17" width="1.6" height="1.8" fill="#1868a8"/><rect x="1489.38" y="338.24" width="1.6" height="1.8" fill="#1868a8"/><rect x="1493.17" y="340.52" width="1.6" height="1.8" fill="#1868a8"/><rect x="1495.7" y="337.99" width="1.6" height="1.8" fill="#1868a8"/><rect x="1501.39" y="342.67" width="1.6" height="1.8" fill="#1868a8"/><rect x="1503.29" y="340.52" width="1.6" height="1.8" fill="#1868a8"/><rect x="1505.82" y="338.24" width="1.6" height="1.8" fill="#1868a8"/><rect x="1507.71" y="332.17" width="1.9" height="1.8" fill="#1868a8"/><rect x="1508.98" y="334.45" width="1.6" height="1.8" fill="#1868a8"/><rect x="1510.88" y="337.99" width="1.6" height="1.8" fill="#1868a8"/><rect x="1513.41" y="340.52" width="1.6" height="1.8" fill="#1868a8"/><rect x="1541.23" y="337.99" width="4.43" height="1.8" fill="#1868a8"/><rect x="1537.18" y="342.67" width="1.6" height="1.8" fill="#1868a8"/><rect x="1571.57" y="334.07" width="5.69" height="1.8" fill="#1868a8"/><rect x="1569.3" y="338.24" width="1.6" height="1.8" fill="#1868a8"/><rect x="1586.5" y="341.66" width="1.6" height="1.8" fill="#1868a8"/><rect x="1603.19" y="327.49" width="1.6" height="1.8" fill="#1868a8"/><rect x="1608.88" y="330.02" width="1.6" height="1.8" fill="#1868a8"/><rect x="1605.72" y="335.71" width="1.6" height="1.8" fill="#1868a8"/><rect x="1602.93" y="341.66" width="1.6" height="1.8" fill="#1868a8"/><rect x="1618.99" y="327.49" width="1.6" height="1.8" fill="#1868a8"/><rect x="1622.79" y="332.55" width="1.6" height="1.8" fill="#1868a8"/><rect x="1621.52" y="335.71" width="1.6" height="1.8" fill="#1868a8"/><rect x="1618.62" y="341.66" width="1.6" height="1.8" fill="#1868a8"/><rect x="1453.34" y="331.29" width="1.8" height="1.8" fill="#1868a8"/><rect x="1455.45" y="332.34" width="1.8" height="1.8" fill="#1868a8"/><rect x="1457.55" y="333.4" width="1.8" height="1.8" fill="#1868a8"/><rect x="1459.66" y="334.45" width="1.8" height="1.8" fill="#1868a8"/><rect x="1517.2" y="327.49" width="1.9" height="1.8" fill="#1868a8"/><rect x="1519.59" y="328.52" width="1.9" height="1.8" fill="#1868a8"/><rect x="1521.98" y="329.55" width="1.9" height="1.8" fill="#1868a8"/><rect x="1524.36" y="330.57" width="1.9" height="1.8" fill="#1868a8"/><rect x="1526.75" y="331.6" width="1.9" height="1.8" fill="#1868a8"/><rect x="1529.14" y="332.62" width="1.9" height="1.8" fill="#1868a8"/><rect x="1531.53" y="333.65" width="1.9" height="1.8" fill="#1868a8"/><rect x="1533.92" y="334.67" width="1.9" height="1.8" fill="#1868a8"/><rect x="1536.31" y="335.7" width="1.9" height="1.8" fill="#1868a8"/><rect x="1538.7" y="336.73" width="1.9" height="1.8" fill="#1868a8"/><rect x="1549.07" y="323.7" width="1.9" height="1.8" fill="#1868a8"/><rect x="1551.29" y="324.64" width="1.9" height="1.8" fill="#1868a8"/><rect x="1553.51" y="325.58" width="1.9" height="1.8" fill="#1868a8"/><rect x="1555.73" y="326.52" width="1.9" height="1.8" fill="#1868a8"/><rect x="1557.95" y="327.47" width="1.9" height="1.8" fill="#1868a8"/><rect x="1560.17" y="328.41" width="1.9" height="1.8" fill="#1868a8"/><rect x="1562.39" y="329.35" width="1.9" height="1.8" fill="#1868a8"/><rect x="1564.61" y="330.29" width="1.9" height="1.8" fill="#1868a8"/><rect x="1566.83" y="331.23" width="1.9" height="1.8" fill="#1868a8"/><rect x="1569.04" y="332.17" width="1.9" height="1.8" fill="#1868a8"/><rect x="1586.12" y="329.77" width="1.8" height="1.8" fill="#1868a8"/><rect x="1588.01" y="330.82" width="1.8" height="1.8" fill="#1868a8"/><rect x="1589.91" y="331.88" width="1.8" height="1.8" fill="#1868a8"/><rect x="1591.81" y="332.93" width="1.8" height="1.8" fill="#1868a8"/><rect x="1802.48" y="313.24" width="1" height="34" fill="#3594d2"/><rect x="1797.09" y="325.09" width="1.8" height="1.8" fill="#1868a8"/><rect x="1798.86" y="327.11" width="1.8" height="1.8" fill="#1868a8"/><rect x="1800.63" y="329.14" width="1.8" height="1.8" fill="#1868a8"/><rect x="1802.15" y="331.16" width="1.8" height="1.8" fill="#1868a8"/><rect x="586.1" y="350.86" width="1" height="34" fill="#d4672b"/><rect x="618.11" y="350.86" width="1" height="34" fill="#d4672b"/><rect x="650.12" y="350.86" width="1" height="34" fill="#d4672b"/><rect x="682.13" y="350.86" width="1" height="34" fill="#d4672b"/><rect x="714.14" y="350.86" width="1" height="34" fill="#d4672b"/><rect x="746.15" y="350.86" width="1" height="34" fill="#d4672b"/><rect x="562.19" y="350.86" width="0.8" height="34" fill="#d4672b"/><rect x="570.2" y="350.86" width="0.8" height="34" fill="#d4672b"/><rect x="578.2" y="350.86" width="0.8" height="34" fill="#d4672b"/><rect x="586.2" y="350.86" width="0.8" height="34" fill="#d4672b"/><rect x="594.2" y="350.86" width="0.8" height="34" fill="#d4672b"/><rect x="602.21" y="350.86" width="0.8" height="34" fill="#d4672b"/><rect x="610.21" y="350.86" width="0.8" height="34" fill="#d4672b"/><rect x="618.21" y="350.86" width="0.8" height="34" fill="#d4672b"/><rect x="626.21" y="350.86" width="0.8" height="34" fill="#d4672b"/><rect x="634.22" y="350.86" width="0.8" height="34" fill="#d4672b"/><rect x="642.22" y="350.86" width="0.8" height="34" fill="#d4672b"/><rect x="650.22" y="350.86" width="0.8" height="34" fill="#d4672b"/><rect x="658.22" y="350.86" width="0.8" height="34" fill="#d4672b"/><rect x="666.23" y="350.86" width="0.8" height="34" fill="#d4672b"/><rect x="674.23" y="350.86" width="0.8" height="34" fill="#d4672b"/><rect x="682.23" y="350.86" width="0.8" height="34" fill="#d4672b"/><rect x="690.23" y="350.86" width="0.8" height="34" fill="#d4672b"/><rect x="698.24" y="350.86" width="0.8" height="34" fill="#d4672b"/><rect x="706.24" y="350.86" width="0.8" height="34" fill="#d4672b"/><rect x="714.24" y="350.86" width="0.8" height="34" fill="#d4672b"/><rect x="722.24" y="350.86" width="0.8" height="34" fill="#d4672b"/><rect x="730.25" y="350.86" width="0.8" height="34" fill="#d4672b"/><rect x="738.25" y="350.86" width="0.8" height="34" fill="#d4672b"/><rect x="746.25" y="350.86" width="0.8" height="34" fill="#d4672b"/><rect x="754.25" y="350.86" width="0.8" height="34" fill="#d4672b"/><rect x="558.59" y="364.36" width="1.1" height="1.3" fill="#8a3410"/><rect x="560.59" y="364.36" width="1.1" height="1.3" fill="#8a3410"/><rect x="560.59" y="370.86" width="1.1" height="1.3" fill="#8a3410"/><rect x="560.59" y="378.86" width="1.1" height="1.3" fill="#8a3410"/><rect x="562.59" y="364.36" width="1.1" height="1.3" fill="#8a3410"/><rect x="562.59" y="373.36" width="1.1" height="1.3" fill="#8a3410"/><rect x="562.59" y="378.86" width="1.1" height="1.3" fill="#8a3410"/><rect x="566.59" y="378.86" width="1.1" height="1.3" fill="#8a3410"/><rect x="568.59" y="364.36" width="1.1" height="1.3" fill="#8a3410"/><rect x="570.59" y="364.36" width="1.1" height="1.3" fill="#8a3410"/><rect x="570.59" y="370.86" width="1.1" height="1.3" fill="#8a3410"/><rect x="572.59" y="370.86" width="1.1" height="1.3" fill="#8a3410"/><rect x="572.59" y="373.36" width="1.1" height="1.3" fill="#8a3410"/><rect x="572.59" y="381.36" width="1.1" height="1.3" fill="#8a3410"/><rect x="574.59" y="378.86" width="1.1" height="1.3" fill="#8a3410"/><rect x="576.59" y="378.86" width="1.1" height="1.3" fill="#8a3410"/><rect x="578.59" y="378.86" width="1.1" height="1.3" fill="#8a3410"/><rect x="578.59" y="381.36" width="1.1" height="1.3" fill="#8a3410"/><rect x="580.59" y="364.36" width="1.1" height="1.3" fill="#8a3410"/><rect x="582.59" y="370.86" width="1.1" height="1.3" fill="#8a3410"/><rect x="582.59" y="381.36" width="1.1" height="1.3" fill="#8a3410"/><rect x="584.59" y="373.36" width="1.1" height="1.3" fill="#8a3410"/><rect x="586.59" y="370.86" width="1.1" height="1.3" fill="#8a3410"/><rect x="586.59" y="381.36" width="1.1" height="1.3" fill="#8a3410"/><rect x="588.59" y="361.86" width="1.1" height="1.3" fill="#8a3410"/><rect x="588.59" y="381.36" width="1.1" height="1.3" fill="#8a3410"/><rect x="590.59" y="361.86" width="1.1" height="1.3" fill="#8a3410"/><rect x="590.59" y="378.86" width="1.1" height="1.3" fill="#8a3410"/><rect x="592.59" y="373.36" width="1.1" height="1.3" fill="#8a3410"/><rect x="598.59" y="373.36" width="1.1" height="1.3" fill="#8a3410"/><rect x="600.59" y="361.86" width="1.1" height="1.3" fill="#8a3410"/><rect x="600.59" y="364.36" width="1.1" height="1.3" fill="#8a3410"/><rect x="600.59" y="373.36" width="1.1" height="1.3" fill="#8a3410"/><rect x="602.59" y="370.86" width="1.1" height="1.3" fill="#8a3410"/><rect x="604.59" y="361.86" width="1.1" height="1.3" fill="#8a3410"/><rect x="606.59" y="370.86" width="1.1" height="1.3" fill="#8a3410"/><rect x="606.59" y="381.36" width="1.1" height="1.3" fill="#8a3410"/><rect x="608.59" y="373.36" width="1.1" height="1.3" fill="#8a3410"/><rect x="610.59" y="378.86" width="1.1" height="1.3" fill="#8a3410"/><rect x="610.59" y="381.36" width="1.1" height="1.3" fill="#8a3410"/><rect x="612.59" y="364.36" width="1.1" height="1.3" fill="#8a3410"/><rect x="612.59" y="370.86" width="1.1" height="1.3" fill="#8a3410"/><rect x="612.59" y="378.86" width="1.1" height="1.3" fill="#8a3410"/><rect x="612.59" y="381.36" width="1.1" height="1.3" fill="#8a3410"/><rect x="616.59" y="361.86" width="1.1" height="1.3" fill="#8a3410"/><rect x="616.59" y="370.86" width="1.1" height="1.3" fill="#8a3410"/><rect x="616.59" y="373.36" width="1.1" height="1.3" fill="#8a3410"/><rect x="618.59" y="361.86" width="1.1" height="1.3" fill="#8a3410"/><rect x="620.59" y="361.86" width="1.1" height="1.3" fill="#8a3410"/><rect x="620.59" y="364.36" width="1.1" height="1.3" fill="#8a3410"/><rect x="622.59" y="370.86" width="1.1" height="1.3" fill="#8a3410"/><rect x="622.59" y="373.36" width="1.1" height="1.3" fill="#8a3410"/><rect x="624.59" y="361.86" width="1.1" height="1.3" fill="#8a3410"/><rect x="624.59" y="373.36" width="1.1" height="1.3" fill="#8a3410"/><rect x="626.59" y="361.86" width="1.1" height="1.3" fill="#8a3410"/><rect x="626.59" y="370.86" width="1.1" height="1.3" fill="#8a3410"/><rect x="628.59" y="364.36" width="1.1" height="1.3" fill="#8a3410"/><rect x="628.59" y="381.36" width="1.1" height="1.3" fill="#8a3410"/><rect x="632.59" y="361.86" width="1.1" height="1.3" fill="#8a3410"/><rect x="632.59" y="364.36" width="1.1" height="1.3" fill="#8a3410"/><rect x="632.59" y="381.36" width="1.1" height="1.3" fill="#8a3410"/><rect x="634.59" y="364.36" width="1.1" height="1.3" fill="#8a3410"/><rect x="634.59" y="370.86" width="1.1" height="1.3" fill="#8a3410"/><rect x="636.59" y="361.86" width="1.1" height="1.3" fill="#8a3410"/><rect x="636.59" y="370.86" width="1.1" height="1.3" fill="#8a3410"/><rect x="638.59" y="370.86" width="1.1" height="1.3" fill="#8a3410"/><rect x="638.59" y="378.86" width="1.1" height="1.3" fill="#8a3410"/><rect x="640.59" y="364.36" width="1.1" height="1.3" fill="#8a3410"/><rect x="640.59" y="381.36" width="1.1" height="1.3" fill="#8a3410"/><rect x="642.59" y="361.86" width="1.1" height="1.3" fill="#8a3410"/><rect x="642.59" y="364.36" width="1.1" height="1.3" fill="#8a3410"/><rect x="642.59" y="373.36" width="1.1" height="1.3" fill="#8a3410"/><rect x="642.59" y="381.36" width="1.1" height="1.3" fill="#8a3410"/><rect x="644.59" y="370.86" width="1.1" height="1.3" fill="#8a3410"/><rect x="644.59" y="378.86" width="1.1" height="1.3" fill="#8a3410"/><rect x="646.59" y="370.86" width="1.1" height="1.3" fill="#8a3410"/><rect x="648.59" y="361.86" width="1.1" height="1.3" fill="#8a3410"/><rect x="654.59" y="370.86" width="1.1" height="1.3" fill="#8a3410"/><rect x="656.59" y="361.86" width="1.1" height="1.3" fill="#8a3410"/><rect x="656.59" y="364.36" width="1.1" height="1.3" fill="#8a3410"/><rect x="656.59" y="378.86" width="1.1" height="1.3" fill="#8a3410"/><rect x="658.59" y="378.86" width="1.1" height="1.3" fill="#8a3410"/><rect x="658.59" y="381.36" width="1.1" height="1.3" fill="#8a3410"/><rect x="660.59" y="364.36" width="1.1" height="1.3" fill="#8a3410"/><rect x="660.59" y="370.86" width="1.1" height="1.3" fill="#8a3410"/><rect x="660.59" y="381.36" width="1.1" height="1.3" fill="#8a3410"/><rect x="662.59" y="378.86" width="1.1" height="1.3" fill="#8a3410"/><rect x="664.59" y="364.36" width="1.1" height="1.3" fill="#8a3410"/><rect x="666.59" y="361.86" width="1.1" height="1.3" fill="#8a3410"/><rect x="666.59" y="370.86" width="1.1" height="1.3" fill="#8a3410"/><rect x="666.59" y="378.86" width="1.1" height="1.3" fill="#8a3410"/><rect x="666.59" y="381.36" width="1.1" height="1.3" fill="#8a3410"/><rect x="668.59" y="361.86" width="1.1" height="1.3" fill="#8a3410"/><rect x="668.59" y="373.36" width="1.1" height="1.3" fill="#8a3410"/><rect x="670.59" y="361.86" width="1.1" height="1.3" fill="#8a3410"/><rect x="670.59" y="370.86" width="1.1" height="1.3" fill="#8a3410"/><rect x="670.59" y="381.36" width="1.1" height="1.3" fill="#8a3410"/><rect x="672.59" y="364.36" width="1.1" height="1.3" fill="#8a3410"/><rect x="672.59" y="370.86" width="1.1" height="1.3" fill="#8a3410"/><rect x="674.59" y="364.36" width="1.1" height="1.3" fill="#8a3410"/><rect x="674.59" y="373.36" width="1.1" height="1.3" fill="#8a3410"/><rect x="676.59" y="364.36" width="1.1" height="1.3" fill="#8a3410"/><rect x="676.59" y="370.86" width="1.1" height="1.3" fill="#8a3410"/><rect x="678.59" y="370.86" width="1.1" height="1.3" fill="#8a3410"/><rect x="678.59" y="373.36" width="1.1" height="1.3" fill="#8a3410"/><rect x="684.59" y="361.86" width="1.1" height="1.3" fill="#8a3410"/><rect x="684.59" y="364.36" width="1.1" height="1.3" fill="#8a3410"/><rect x="686.59" y="364.36" width="1.1" height="1.3" fill="#8a3410"/><rect x="688.59" y="378.86" width="1.1" height="1.3" fill="#8a3410"/><rect x="692.59" y="370.86" width="1.1" height="1.3" fill="#8a3410"/><rect x="692.59" y="378.86" width="1.1" height="1.3" fill="#8a3410"/><rect x="694.59" y="378.86" width="1.1" height="1.3" fill="#8a3410"/><rect x="696.59" y="361.86" width="1.1" height="1.3" fill="#8a3410"/><rect x="696.59" y="364.36" width="1.1" height="1.3" fill="#8a3410"/><rect x="698.59" y="361.86" width="1.1" height="1.3" fill="#8a3410"/><rect x="700.59" y="364.36" width="1.1" height="1.3" fill="#8a3410"/><rect x="700.59" y="373.36" width="1.1" height="1.3" fill="#8a3410"/><rect x="700.59" y="378.86" width="1.1" height="1.3" fill="#8a3410"/><rect x="702.59" y="378.86" width="1.1" height="1.3" fill="#8a3410"/><rect x="704.59" y="378.86" width="1.1" height="1.3" fill="#8a3410"/><rect x="706.59" y="364.36" width="1.1" height="1.3" fill="#8a3410"/><rect x="706.59" y="373.36" width="1.1" height="1.3" fill="#8a3410"/><rect x="708.59" y="364.36" width="1.1" height="1.3" fill="#8a3410"/><rect x="708.59" y="373.36" width="1.1" height="1.3" fill="#8a3410"/><rect x="710.59" y="361.86" width="1.1" height="1.3" fill="#8a3410"/><rect x="712.59" y="364.36" width="1.1" height="1.3" fill="#8a3410"/><rect x="712.59" y="378.86" width="1.1" height="1.3" fill="#8a3410"/><rect x="712.59" y="381.36" width="1.1" height="1.3" fill="#8a3410"/><rect x="714.59" y="373.36" width="1.1" height="1.3" fill="#8a3410"/><rect x="718.59" y="364.36" width="1.1" height="1.3" fill="#8a3410"/><rect x="718.59" y="370.86" width="1.1" height="1.3" fill="#8a3410"/><rect x="718.59" y="378.86" width="1.1" height="1.3" fill="#8a3410"/><rect x="720.59" y="361.86" width="1.1" height="1.3" fill="#8a3410"/><rect x="720.59" y="364.36" width="1.1" height="1.3" fill="#8a3410"/><rect x="720.59" y="381.36" width="1.1" height="1.3" fill="#8a3410"/><rect x="722.59" y="373.36" width="1.1" height="1.3" fill="#8a3410"/><rect x="722.59" y="378.86" width="1.1" height="1.3" fill="#8a3410"/><rect x="724.59" y="361.86" width="1.1" height="1.3" fill="#8a3410"/><rect x="724.59" y="373.36" width="1.1" height="1.3" fill="#8a3410"/><rect x="728.59" y="370.86" width="1.1" height="1.3" fill="#8a3410"/><rect x="728.59" y="373.36" width="1.1" height="1.3" fill="#8a3410"/><rect x="730.59" y="361.86" width="1.1" height="1.3" fill="#8a3410"/><rect x="730.59" y="364.36" width="1.1" height="1.3" fill="#8a3410"/><rect x="734.59" y="373.36" width="1.1" height="1.3" fill="#8a3410"/><rect x="734.59" y="381.36" width="1.1" height="1.3" fill="#8a3410"/><rect x="736.59" y="373.36" width="1.1" height="1.3" fill="#8a3410"/><rect x="736.59" y="378.86" width="1.1" height="1.3" fill="#8a3410"/><rect x="738.59" y="370.86" width="1.1" height="1.3" fill="#8a3410"/><rect x="738.59" y="378.86" width="1.1" height="1.3" fill="#8a3410"/><rect x="740.59" y="361.86" width="1.1" height="1.3" fill="#8a3410"/><rect x="740.59" y="381.36" width="1.1" height="1.3" fill="#8a3410"/><rect x="744.59" y="361.86" width="1.1" height="1.3" fill="#8a3410"/><rect x="744.59" y="378.86" width="1.1" height="1.3" fill="#8a3410"/><rect x="744.59" y="381.36" width="1.1" height="1.3" fill="#8a3410"/><rect x="748.59" y="361.86" width="1.1" height="1.3" fill="#8a3410"/><rect x="748.59" y="364.36" width="1.1" height="1.3" fill="#8a3410"/><rect x="748.59" y="373.36" width="1.1" height="1.3" fill="#8a3410"/><rect x="750.59" y="361.86" width="1.1" height="1.3" fill="#8a3410"/><rect x="756.59" y="361.86" width="1.1" height="1.3" fill="#8a3410"/><rect x="756.59" y="381.36" width="1.1" height="1.3" fill="#8a3410"/><rect x="758.59" y="364.36" width="1.1" height="1.3" fill="#8a3410"/><rect x="758.59" y="373.36" width="1.1" height="1.3" fill="#8a3410"/><rect x="758.59" y="381.36" width="1.1" height="1.3" fill="#8a3410"/><rect x="760.59" y="364.36" width="1.1" height="1.3" fill="#8a3410"/><rect x="760.59" y="378.86" width="1.1" height="1.3" fill="#8a3410"/><rect x="970.22" y="350.86" width="1" height="34" fill="#d4672b"/><rect x="1002.23" y="350.86" width="1" height="34" fill="#d4672b"/><rect x="1034.24" y="350.86" width="1" height="34" fill="#d4672b"/><rect x="1066.25" y="350.86" width="1" height="34" fill="#d4672b"/><rect x="1098.26" y="350.86" width="1" height="34" fill="#d4672b"/><rect x="1130.27" y="350.86" width="1" height="34" fill="#d4672b"/><rect x="1162.28" y="350.86" width="1" height="34" fill="#d4672b"/><rect x="962.32" y="350.86" width="0.8" height="34" fill="#d4672b"/><rect x="970.32" y="350.86" width="0.8" height="34" fill="#d4672b"/><rect x="978.32" y="350.86" width="0.8" height="34" fill="#d4672b"/><rect x="986.33" y="350.86" width="0.8" height="34" fill="#d4672b"/><rect x="994.33" y="350.86" width="0.8" height="34" fill="#d4672b"/><rect x="1002.33" y="350.86" width="0.8" height="34" fill="#d4672b"/><rect x="1010.33" y="350.86" width="0.8" height="34" fill="#d4672b"/><rect x="1018.34" y="350.86" width="0.8" height="34" fill="#d4672b"/><rect x="1026.34" y="350.86" width="0.8" height="34" fill="#d4672b"/><rect x="1034.34" y="350.86" width="0.8" height="34" fill="#d4672b"/><rect x="1042.34" y="350.86" width="0.8" height="34" fill="#d4672b"/><rect x="1050.35" y="350.86" width="0.8" height="34" fill="#d4672b"/><rect x="1058.35" y="350.86" width="0.8" height="34" fill="#d4672b"/><rect x="1066.35" y="350.86" width="0.8" height="34" fill="#d4672b"/><rect x="1074.35" y="350.86" width="0.8" height="34" fill="#d4672b"/><rect x="1082.36" y="350.86" width="0.8" height="34" fill="#d4672b"/><rect x="1090.36" y="350.86" width="0.8" height="34" fill="#d4672b"/><rect x="1098.36" y="350.86" width="0.8" height="34" fill="#d4672b"/><rect x="1106.36" y="350.86" width="0.8" height="34" fill="#d4672b"/><rect x="1114.37" y="350.86" width="0.8" height="34" fill="#d4672b"/><rect x="1122.37" y="350.86" width="0.8" height="34" fill="#d4672b"/><rect x="1130.37" y="350.86" width="0.8" height="34" fill="#d4672b"/><rect x="1138.37" y="350.86" width="0.8" height="34" fill="#d4672b"/><rect x="1146.38" y="350.86" width="0.8" height="34" fill="#d4672b"/><rect x="1154.38" y="350.86" width="0.8" height="34" fill="#d4672b"/><rect x="1162.38" y="350.86" width="0.8" height="34" fill="#d4672b"/><rect x="1170.38" y="350.86" width="0.8" height="34" fill="#d4672b"/><rect x="956.71" y="361.86" width="1.1" height="1.3" fill="#8a3410"/><rect x="960.71" y="361.86" width="1.1" height="1.3" fill="#8a3410"/><rect x="962.71" y="378.86" width="1.1" height="1.3" fill="#8a3410"/><rect x="966.71" y="364.36" width="1.1" height="1.3" fill="#8a3410"/><rect x="966.71" y="370.86" width="1.1" height="1.3" fill="#8a3410"/><rect x="968.71" y="373.36" width="1.1" height="1.3" fill="#8a3410"/><rect x="970.71" y="373.36" width="1.1" height="1.3" fill="#8a3410"/><rect x="974.71" y="364.36" width="1.1" height="1.3" fill="#8a3410"/><rect x="974.71" y="381.36" width="1.1" height="1.3" fill="#8a3410"/><rect x="976.71" y="370.86" width="1.1" height="1.3" fill="#8a3410"/><rect x="976.71" y="373.36" width="1.1" height="1.3" fill="#8a3410"/><rect x="976.71" y="381.36" width="1.1" height="1.3" fill="#8a3410"/><rect x="978.71" y="370.86" width="1.1" height="1.3" fill="#8a3410"/><rect x="982.71" y="364.36" width="1.1" height="1.3" fill="#8a3410"/><rect x="982.71" y="370.86" width="1.1" height="1.3" fill="#8a3410"/><rect x="982.71" y="373.36" width="1.1" height="1.3" fill="#8a3410"/><rect x="982.71" y="378.86" width="1.1" height="1.3" fill="#8a3410"/><rect x="982.71" y="381.36" width="1.1" height="1.3" fill="#8a3410"/><rect x="984.71" y="373.36" width="1.1" height="1.3" fill="#8a3410"/><rect x="990.71" y="373.36" width="1.1" height="1.3" fill="#8a3410"/><rect x="992.71" y="364.36" width="1.1" height="1.3" fill="#8a3410"/><rect x="992.71" y="381.36" width="1.1" height="1.3" fill="#8a3410"/><rect x="996.71" y="373.36" width="1.1" height="1.3" fill="#8a3410"/><rect x="996.71" y="378.86" width="1.1" height="1.3" fill="#8a3410"/><rect x="998.71" y="364.36" width="1.1" height="1.3" fill="#8a3410"/><rect x="998.71" y="370.86" width="1.1" height="1.3" fill="#8a3410"/><rect x="998.71" y="378.86" width="1.1" height="1.3" fill="#8a3410"/><rect x="998.71" y="381.36" width="1.1" height="1.3" fill="#8a3410"/><rect x="1000.71" y="373.36" width="1.1" height="1.3" fill="#8a3410"/><rect x="1004.71" y="370.86" width="1.1" height="1.3" fill="#8a3410"/><rect x="1004.71" y="381.36" width="1.1" height="1.3" fill="#8a3410"/><rect x="1006.71" y="370.86" width="1.1" height="1.3" fill="#8a3410"/><rect x="1006.71" y="373.36" width="1.1" height="1.3" fill="#8a3410"/><rect x="1008.71" y="381.36" width="1.1" height="1.3" fill="#8a3410"/><rect x="1010.71" y="378.86" width="1.1" height="1.3" fill="#8a3410"/><rect x="1014.71" y="370.86" width="1.1" height="1.3" fill="#8a3410"/><rect x="1016.71" y="378.86" width="1.1" height="1.3" fill="#8a3410"/><rect x="1016.71" y="381.36" width="1.1" height="1.3" fill="#8a3410"/><rect x="1018.71" y="361.86" width="1.1" height="1.3" fill="#8a3410"/><rect x="1018.71" y="373.36" width="1.1" height="1.3" fill="#8a3410"/><rect x="1018.71" y="381.36" width="1.1" height="1.3" fill="#8a3410"/><rect x="1020.71" y="361.86" width="1.1" height="1.3" fill="#8a3410"/><rect x="1020.71" y="370.86" width="1.1" height="1.3" fill="#8a3410"/><rect x="1020.71" y="373.36" width="1.1" height="1.3" fill="#8a3410"/><rect x="1024.71" y="361.86" width="1.1" height="1.3" fill="#8a3410"/><rect x="1024.71" y="373.36" width="1.1" height="1.3" fill="#8a3410"/><rect x="1024.71" y="381.36" width="1.1" height="1.3" fill="#8a3410"/><rect x="1026.71" y="364.36" width="1.1" height="1.3" fill="#8a3410"/><rect x="1026.71" y="373.36" width="1.1" height="1.3" fill="#8a3410"/><rect x="1026.71" y="381.36" width="1.1" height="1.3" fill="#8a3410"/><rect x="1028.71" y="364.36" width="1.1" height="1.3" fill="#8a3410"/><rect x="1030.71" y="361.86" width="1.1" height="1.3" fill="#8a3410"/><rect x="1030.71" y="370.86" width="1.1" height="1.3" fill="#8a3410"/><rect x="1032.71" y="361.86" width="1.1" height="1.3" fill="#8a3410"/><rect x="1032.71" y="381.36" width="1.1" height="1.3" fill="#8a3410"/><rect x="1034.71" y="370.86" width="1.1" height="1.3" fill="#8a3410"/><rect x="1034.71" y="373.36" width="1.1" height="1.3" fill="#8a3410"/><rect x="1034.71" y="378.86" width="1.1" height="1.3" fill="#8a3410"/><rect x="1036.71" y="373.36" width="1.1" height="1.3" fill="#8a3410"/><rect x="1036.71" y="381.36" width="1.1" height="1.3" fill="#8a3410"/><rect x="1038.71" y="361.86" width="1.1" height="1.3" fill="#8a3410"/><rect x="1040.71" y="361.86" width="1.1" height="1.3" fill="#8a3410"/><rect x="1040.71" y="373.36" width="1.1" height="1.3" fill="#8a3410"/><rect x="1040.71" y="378.86" width="1.1" height="1.3" fill="#8a3410"/><rect x="1042.71" y="361.86" width="1.1" height="1.3" fill="#8a3410"/><rect x="1042.71" y="373.36" width="1.1" height="1.3" fill="#8a3410"/><rect x="1042.71" y="378.86" width="1.1" height="1.3" fill="#8a3410"/><rect x="1044.71" y="361.86" width="1.1" height="1.3" fill="#8a3410"/><rect x="1044.71" y="370.86" width="1.1" height="1.3" fill="#8a3410"/><rect x="1048.71" y="361.86" width="1.1" height="1.3" fill="#8a3410"/><rect x="1048.71" y="373.36" width="1.1" height="1.3" fill="#8a3410"/><rect x="1048.71" y="381.36" width="1.1" height="1.3" fill="#8a3410"/><rect x="1050.71" y="361.86" width="1.1" height="1.3" fill="#8a3410"/><rect x="1050.71" y="373.36" width="1.1" height="1.3" fill="#8a3410"/><rect x="1052.71" y="378.86" width="1.1" height="1.3" fill="#8a3410"/><rect x="1052.71" y="381.36" width="1.1" height="1.3" fill="#8a3410"/><rect x="1054.71" y="361.86" width="1.1" height="1.3" fill="#8a3410"/><rect x="1054.71" y="378.86" width="1.1" height="1.3" fill="#8a3410"/><rect x="1056.71" y="378.86" width="1.1" height="1.3" fill="#8a3410"/><rect x="1060.71" y="378.86" width="1.1" height="1.3" fill="#8a3410"/><rect x="1062.71" y="373.36" width="1.1" height="1.3" fill="#8a3410"/><rect x="1066.71" y="370.86" width="1.1" height="1.3" fill="#8a3410"/><rect x="1066.71" y="373.36" width="1.1" height="1.3" fill="#8a3410"/><rect x="1066.71" y="378.86" width="1.1" height="1.3" fill="#8a3410"/><rect x="1072.71" y="370.86" width="1.1" height="1.3" fill="#8a3410"/><rect x="1074.71" y="361.86" width="1.1" height="1.3" fill="#8a3410"/><rect x="1076.71" y="381.36" width="1.1" height="1.3" fill="#8a3410"/><rect x="1078.71" y="381.36" width="1.1" height="1.3" fill="#8a3410"/><rect x="1080.71" y="378.86" width="1.1" height="1.3" fill="#8a3410"/><rect x="1082.71" y="364.36" width="1.1" height="1.3" fill="#8a3410"/><rect x="1082.71" y="370.86" width="1.1" height="1.3" fill="#8a3410"/><rect x="1082.71" y="373.36" width="1.1" height="1.3" fill="#8a3410"/><rect x="1084.71" y="378.86" width="1.1" height="1.3" fill="#8a3410"/><rect x="1086.71" y="364.36" width="1.1" height="1.3" fill="#8a3410"/><rect x="1086.71" y="373.36" width="1.1" height="1.3" fill="#8a3410"/><rect x="1086.71" y="378.86" width="1.1" height="1.3" fill="#8a3410"/><rect x="1088.71" y="361.86" width="1.1" height="1.3" fill="#8a3410"/><rect x="1088.71" y="378.86" width="1.1" height="1.3" fill="#8a3410"/><rect x="1090.71" y="364.36" width="1.1" height="1.3" fill="#8a3410"/><rect x="1094.71" y="373.36" width="1.1" height="1.3" fill="#8a3410"/><rect x="1096.71" y="361.86" width="1.1" height="1.3" fill="#8a3410"/><rect x="1096.71" y="381.36" width="1.1" height="1.3" fill="#8a3410"/><rect x="1098.71" y="370.86" width="1.1" height="1.3" fill="#8a3410"/><rect x="1098.71" y="378.86" width="1.1" height="1.3" fill="#8a3410"/><rect x="1100.71" y="361.86" width="1.1" height="1.3" fill="#8a3410"/><rect x="1100.71" y="370.86" width="1.1" height="1.3" fill="#8a3410"/><rect x="1100.71" y="378.86" width="1.1" height="1.3" fill="#8a3410"/><rect x="1102.71" y="361.86" width="1.1" height="1.3" fill="#8a3410"/><rect x="1102.71" y="378.86" width="1.1" height="1.3" fill="#8a3410"/><rect x="1104.71" y="370.86" width="1.1" height="1.3" fill="#8a3410"/><rect x="1106.71" y="370.86" width="1.1" height="1.3" fill="#8a3410"/><rect x="1106.71" y="378.86" width="1.1" height="1.3" fill="#8a3410"/><rect x="1108.71" y="361.86" width="1.1" height="1.3" fill="#8a3410"/><rect x="1108.71" y="364.36" width="1.1" height="1.3" fill="#8a3410"/><rect x="1108.71" y="370.86" width="1.1" height="1.3" fill="#8a3410"/><rect x="1108.71" y="378.86" width="1.1" height="1.3" fill="#8a3410"/><rect x="1110.71" y="373.36" width="1.1" height="1.3" fill="#8a3410"/><rect x="1112.71" y="373.36" width="1.1" height="1.3" fill="#8a3410"/><rect x="1114.71" y="361.86" width="1.1" height="1.3" fill="#8a3410"/><rect x="1114.71" y="370.86" width="1.1" height="1.3" fill="#8a3410"/><rect x="1116.71" y="370.86" width="1.1" height="1.3" fill="#8a3410"/><rect x="1116.71" y="373.36" width="1.1" height="1.3" fill="#8a3410"/><rect x="1116.71" y="381.36" width="1.1" height="1.3" fill="#8a3410"/><rect x="1118.71" y="361.86" width="1.1" height="1.3" fill="#8a3410"/><rect x="1118.71" y="364.36" width="1.1" height="1.3" fill="#8a3410"/><rect x="1118.71" y="378.86" width="1.1" height="1.3" fill="#8a3410"/><rect x="1120.71" y="370.86" width="1.1" height="1.3" fill="#8a3410"/><rect x="1120.71" y="381.36" width="1.1" height="1.3" fill="#8a3410"/><rect x="1122.71" y="361.86" width="1.1" height="1.3" fill="#8a3410"/><rect x="1124.71" y="361.86" width="1.1" height="1.3" fill="#8a3410"/><rect x="1126.71" y="378.86" width="1.1" height="1.3" fill="#8a3410"/><rect x="1126.71" y="381.36" width="1.1" height="1.3" fill="#8a3410"/><rect x="1128.71" y="373.36" width="1.1" height="1.3" fill="#8a3410"/><rect x="1128.71" y="381.36" width="1.1" height="1.3" fill="#8a3410"/><rect x="1130.71" y="370.86" width="1.1" height="1.3" fill="#8a3410"/><rect x="1130.71" y="378.86" width="1.1" height="1.3" fill="#8a3410"/><rect x="1136.71" y="381.36" width="1.1" height="1.3" fill="#8a3410"/><rect x="1138.71" y="361.86" width="1.1" height="1.3" fill="#8a3410"/><rect x="1138.71" y="364.36" width="1.1" height="1.3" fill="#8a3410"/><rect x="1138.71" y="378.86" width="1.1" height="1.3" fill="#8a3410"/><rect x="1140.71" y="378.86" width="1.1" height="1.3" fill="#8a3410"/><rect x="1140.71" y="381.36" width="1.1" height="1.3" fill="#8a3410"/><rect x="1142.71" y="378.86" width="1.1" height="1.3" fill="#8a3410"/><rect x="1142.71" y="381.36" width="1.1" height="1.3" fill="#8a3410"/><rect x="1144.71" y="370.86" width="1.1" height="1.3" fill="#8a3410"/><rect x="1144.71" y="373.36" width="1.1" height="1.3" fill="#8a3410"/><rect x="1148.71" y="361.86" width="1.1" height="1.3" fill="#8a3410"/><rect x="1148.71" y="370.86" width="1.1" height="1.3" fill="#8a3410"/><rect x="1150.71" y="364.36" width="1.1" height="1.3" fill="#8a3410"/><rect x="1150.71" y="373.36" width="1.1" height="1.3" fill="#8a3410"/><rect x="1152.71" y="370.86" width="1.1" height="1.3" fill="#8a3410"/><rect x="1152.71" y="378.86" width="1.1" height="1.3" fill="#8a3410"/><rect x="1154.71" y="373.36" width="1.1" height="1.3" fill="#8a3410"/><rect x="1156.71" y="381.36" width="1.1" height="1.3" fill="#8a3410"/><rect x="1158.71" y="361.86" width="1.1" height="1.3" fill="#8a3410"/><rect x="1158.71" y="378.86" width="1.1" height="1.3" fill="#8a3410"/><rect x="1160.71" y="373.36" width="1.1" height="1.3" fill="#8a3410"/><rect x="1162.71" y="361.86" width="1.1" height="1.3" fill="#8a3410"/><rect x="1162.71" y="364.36" width="1.1" height="1.3" fill="#8a3410"/><rect x="1162.71" y="370.86" width="1.1" height="1.3" fill="#8a3410"/><rect x="1164.71" y="381.36" width="1.1" height="1.3" fill="#8a3410"/><rect x="1168.71" y="378.86" width="1.1" height="1.3" fill="#8a3410"/><rect x="1172.71" y="361.86" width="1.1" height="1.3" fill="#8a3410"/><rect x="1172.71" y="373.36" width="1.1" height="1.3" fill="#8a3410"/><rect x="1174.71" y="373.36" width="1.1" height="1.3" fill="#8a3410"/><rect x="1176.71" y="370.86" width="1.1" height="1.3" fill="#8a3410"/><rect x="1418.36" y="350.86" width="1" height="34" fill="#d4672b"/><rect x="1450.37" y="350.86" width="1" height="34" fill="#d4672b"/><rect x="1482.38" y="350.86" width="1" height="34" fill="#d4672b"/><rect x="1514.39" y="350.86" width="1" height="34" fill="#d4672b"/><rect x="1546.4" y="350.86" width="1" height="34" fill="#d4672b"/><rect x="1578.41" y="350.86" width="1" height="34" fill="#d4672b"/><rect x="1610.42" y="350.86" width="1" height="34" fill="#d4672b"/><rect x="1394.45" y="350.86" width="0.8" height="34" fill="#d4672b"/><rect x="1402.45" y="350.86" width="0.8" height="34" fill="#d4672b"/><rect x="1410.46" y="350.86" width="0.8" height="34" fill="#d4672b"/><rect x="1418.46" y="350.86" width="0.8" height="34" fill="#d4672b"/><rect x="1426.46" y="350.86" width="0.8" height="34" fill="#d4672b"/><rect x="1434.47" y="350.86" width="0.8" height="34" fill="#d4672b"/><rect x="1442.47" y="350.86" width="0.8" height="34" fill="#d4672b"/><rect x="1450.47" y="350.86" width="0.8" height="34" fill="#d4672b"/><rect x="1458.47" y="350.86" width="0.8" height="34" fill="#d4672b"/><rect x="1466.48" y="350.86" width="0.8" height="34" fill="#d4672b"/><rect x="1474.48" y="350.86" width="0.8" height="34" fill="#d4672b"/><rect x="1482.48" y="350.86" width="0.8" height="34" fill="#d4672b"/><rect x="1490.48" y="350.86" width="0.8" height="34" fill="#d4672b"/><rect x="1498.49" y="350.86" width="0.8" height="34" fill="#d4672b"/><rect x="1506.49" y="350.86" width="0.8" height="34" fill="#d4672b"/><rect x="1514.49" y="350.86" width="0.8" height="34" fill="#d4672b"/><rect x="1522.49" y="350.86" width="0.8" height="34" fill="#d4672b"/><rect x="1530.5" y="350.86" width="0.8" height="34" fill="#d4672b"/><rect x="1538.5" y="350.86" width="0.8" height="34" fill="#d4672b"/><rect x="1546.5" y="350.86" width="0.8" height="34" fill="#d4672b"/><rect x="1554.5" y="350.86" width="0.8" height="34" fill="#d4672b"/><rect x="1562.51" y="350.86" width="0.8" height="34" fill="#d4672b"/><rect x="1570.51" y="350.86" width="0.8" height="34" fill="#d4672b"/><rect x="1578.51" y="350.86" width="0.8" height="34" fill="#d4672b"/><rect x="1586.51" y="350.86" width="0.8" height="34" fill="#d4672b"/><rect x="1594.52" y="350.86" width="0.8" height="34" fill="#d4672b"/><rect x="1602.52" y="350.86" width="0.8" height="34" fill="#d4672b"/><rect x="1610.52" y="350.86" width="0.8" height="34" fill="#d4672b"/><rect x="1618.52" y="350.86" width="0.8" height="34" fill="#d4672b"/><rect x="1388.85" y="381.36" width="1.1" height="1.3" fill="#8a3410"/><rect x="1390.85" y="370.86" width="1.1" height="1.3" fill="#8a3410"/><rect x="1390.85" y="373.36" width="1.1" height="1.3" fill="#8a3410"/><rect x="1390.85" y="378.86" width="1.1" height="1.3" fill="#8a3410"/><rect x="1392.85" y="364.36" width="1.1" height="1.3" fill="#8a3410"/><rect x="1392.85" y="373.36" width="1.1" height="1.3" fill="#8a3410"/><rect x="1392.85" y="378.86" width="1.1" height="1.3" fill="#8a3410"/><rect x="1394.85" y="361.86" width="1.1" height="1.3" fill="#8a3410"/><rect x="1394.85" y="373.36" width="1.1" height="1.3" fill="#8a3410"/><rect x="1398.85" y="378.86" width="1.1" height="1.3" fill="#8a3410"/><rect x="1400.85" y="373.36" width="1.1" height="1.3" fill="#8a3410"/><rect x="1402.85" y="361.86" width="1.1" height="1.3" fill="#8a3410"/><rect x="1402.85" y="373.36" width="1.1" height="1.3" fill="#8a3410"/><rect x="1404.85" y="381.36" width="1.1" height="1.3" fill="#8a3410"/><rect x="1412.85" y="361.86" width="1.1" height="1.3" fill="#8a3410"/><rect x="1418.85" y="378.86" width="1.1" height="1.3" fill="#8a3410"/><rect x="1418.85" y="381.36" width="1.1" height="1.3" fill="#8a3410"/><rect x="1422.85" y="364.36" width="1.1" height="1.3" fill="#8a3410"/><rect x="1424.85" y="361.86" width="1.1" height="1.3" fill="#8a3410"/><rect x="1426.85" y="381.36" width="1.1" height="1.3" fill="#8a3410"/><rect x="1430.85" y="381.36" width="1.1" height="1.3" fill="#8a3410"/><rect x="1432.85" y="361.86" width="1.1" height="1.3" fill="#8a3410"/><rect x="1432.85" y="378.86" width="1.1" height="1.3" fill="#8a3410"/><rect x="1432.85" y="381.36" width="1.1" height="1.3" fill="#8a3410"/><rect x="1434.85" y="364.36" width="1.1" height="1.3" fill="#8a3410"/><rect x="1436.85" y="381.36" width="1.1" height="1.3" fill="#8a3410"/><rect x="1438.85" y="373.36" width="1.1" height="1.3" fill="#8a3410"/><rect x="1438.85" y="381.36" width="1.1" height="1.3" fill="#8a3410"/><rect x="1440.85" y="361.86" width="1.1" height="1.3" fill="#8a3410"/><rect x="1442.85" y="361.86" width="1.1" height="1.3" fill="#8a3410"/><rect x="1442.85" y="364.36" width="1.1" height="1.3" fill="#8a3410"/><rect x="1442.85" y="381.36" width="1.1" height="1.3" fill="#8a3410"/><rect x="1444.85" y="381.36" width="1.1" height="1.3" fill="#8a3410"/><rect x="1446.85" y="378.86" width="1.1" height="1.3" fill="#8a3410"/><rect x="1448.85" y="364.36" width="1.1" height="1.3" fill="#8a3410"/><rect x="1448.85" y="378.86" width="1.1" height="1.3" fill="#8a3410"/><rect x="1448.85" y="381.36" width="1.1" height="1.3" fill="#8a3410"/><rect x="1452.85" y="378.86" width="1.1" height="1.3" fill="#8a3410"/><rect x="1454.85" y="373.36" width="1.1" height="1.3" fill="#8a3410"/><rect x="1456.85" y="361.86" width="1.1" height="1.3" fill="#8a3410"/><rect x="1456.85" y="381.36" width="1.1" height="1.3" fill="#8a3410"/><rect x="1458.85" y="378.86" width="1.1" height="1.3" fill="#8a3410"/><rect x="1460.85" y="364.36" width="1.1" height="1.3" fill="#8a3410"/><rect x="1460.85" y="381.36" width="1.1" height="1.3" fill="#8a3410"/><rect x="1462.85" y="364.36" width="1.1" height="1.3" fill="#8a3410"/><rect x="1462.85" y="370.86" width="1.1" height="1.3" fill="#8a3410"/><rect x="1462.85" y="373.36" width="1.1" height="1.3" fill="#8a3410"/><rect x="1462.85" y="378.86" width="1.1" height="1.3" fill="#8a3410"/><rect x="1464.85" y="364.36" width="1.1" height="1.3" fill="#8a3410"/><rect x="1464.85" y="381.36" width="1.1" height="1.3" fill="#8a3410"/><rect x="1470.85" y="370.86" width="1.1" height="1.3" fill="#8a3410"/><rect x="1470.85" y="373.36" width="1.1" height="1.3" fill="#8a3410"/><rect x="1472.85" y="370.86" width="1.1" height="1.3" fill="#8a3410"/><rect x="1472.85" y="373.36" width="1.1" height="1.3" fill="#8a3410"/><rect x="1474.85" y="370.86" width="1.1" height="1.3" fill="#8a3410"/><rect x="1474.85" y="381.36" width="1.1" height="1.3" fill="#8a3410"/><rect x="1476.85" y="370.86" width="1.1" height="1.3" fill="#8a3410"/><rect x="1476.85" y="373.36" width="1.1" height="1.3" fill="#8a3410"/><rect x="1476.85" y="378.86" width="1.1" height="1.3" fill="#8a3410"/><rect x="1478.85" y="370.86" width="1.1" height="1.3" fill="#8a3410"/><rect x="1480.85" y="378.86" width="1.1" height="1.3" fill="#8a3410"/><rect x="1482.85" y="378.86" width="1.1" height="1.3" fill="#8a3410"/><rect x="1484.85" y="370.86" width="1.1" height="1.3" fill="#8a3410"/><rect x="1490.85" y="364.36" width="1.1" height="1.3" fill="#8a3410"/><rect x="1494.85" y="361.86" width="1.1" height="1.3" fill="#8a3410"/><rect x="1494.85" y="370.86" width="1.1" height="1.3" fill="#8a3410"/><rect x="1494.85" y="373.36" width="1.1" height="1.3" fill="#8a3410"/><rect x="1496.85" y="370.86" width="1.1" height="1.3" fill="#8a3410"/><rect x="1496.85" y="378.86" width="1.1" height="1.3" fill="#8a3410"/><rect x="1496.85" y="381.36" width="1.1" height="1.3" fill="#8a3410"/><rect x="1498.85" y="378.86" width="1.1" height="1.3" fill="#8a3410"/><rect x="1498.85" y="381.36" width="1.1" height="1.3" fill="#8a3410"/><rect x="1500.85" y="370.86" width="1.1" height="1.3" fill="#8a3410"/><rect x="1504.85" y="364.36" width="1.1" height="1.3" fill="#8a3410"/><rect x="1506.85" y="370.86" width="1.1" height="1.3" fill="#8a3410"/><rect x="1510.85" y="364.36" width="1.1" height="1.3" fill="#8a3410"/><rect x="1510.85" y="373.36" width="1.1" height="1.3" fill="#8a3410"/><rect x="1510.85" y="378.86" width="1.1" height="1.3" fill="#8a3410"/><rect x="1516.85" y="361.86" width="1.1" height="1.3" fill="#8a3410"/><rect x="1516.85" y="381.36" width="1.1" height="1.3" fill="#8a3410"/><rect x="1518.85" y="364.36" width="1.1" height="1.3" fill="#8a3410"/><rect x="1518.85" y="370.86" width="1.1" height="1.3" fill="#8a3410"/><rect x="1518.85" y="378.86" width="1.1" height="1.3" fill="#8a3410"/><rect x="1518.85" y="381.36" width="1.1" height="1.3" fill="#8a3410"/><rect x="1520.85" y="361.86" width="1.1" height="1.3" fill="#8a3410"/><rect x="1520.85" y="364.36" width="1.1" height="1.3" fill="#8a3410"/><rect x="1520.85" y="381.36" width="1.1" height="1.3" fill="#8a3410"/><rect x="1522.85" y="370.86" width="1.1" height="1.3" fill="#8a3410"/><rect x="1524.85" y="361.86" width="1.1" height="1.3" fill="#8a3410"/><rect x="1524.85" y="370.86" width="1.1" height="1.3" fill="#8a3410"/><rect x="1524.85" y="373.36" width="1.1" height="1.3" fill="#8a3410"/><rect x="1524.85" y="378.86" width="1.1" height="1.3" fill="#8a3410"/><rect x="1528.85" y="364.36" width="1.1" height="1.3" fill="#8a3410"/><rect x="1530.85" y="370.86" width="1.1" height="1.3" fill="#8a3410"/><rect x="1536.85" y="361.86" width="1.1" height="1.3" fill="#8a3410"/><rect x="1536.85" y="373.36" width="1.1" height="1.3" fill="#8a3410"/><rect x="1538.85" y="370.86" width="1.1" height="1.3" fill="#8a3410"/><rect x="1538.85" y="373.36" width="1.1" height="1.3" fill="#8a3410"/><rect x="1540.85" y="361.86" width="1.1" height="1.3" fill="#8a3410"/><rect x="1540.85" y="370.86" width="1.1" height="1.3" fill="#8a3410"/><rect x="1540.85" y="381.36" width="1.1" height="1.3" fill="#8a3410"/><rect x="1542.85" y="373.36" width="1.1" height="1.3" fill="#8a3410"/><rect x="1542.85" y="381.36" width="1.1" height="1.3" fill="#8a3410"/><rect x="1544.85" y="364.36" width="1.1" height="1.3" fill="#8a3410"/><rect x="1544.85" y="370.86" width="1.1" height="1.3" fill="#8a3410"/><rect x="1544.85" y="378.86" width="1.1" height="1.3" fill="#8a3410"/><rect x="1544.85" y="381.36" width="1.1" height="1.3" fill="#8a3410"/><rect x="1548.85" y="378.86" width="1.1" height="1.3" fill="#8a3410"/><rect x="1548.85" y="381.36" width="1.1" height="1.3" fill="#8a3410"/><rect x="1550.85" y="370.86" width="1.1" height="1.3" fill="#8a3410"/><rect x="1550.85" y="373.36" width="1.1" height="1.3" fill="#8a3410"/><rect x="1550.85" y="381.36" width="1.1" height="1.3" fill="#8a3410"/><rect x="1552.85" y="378.86" width="1.1" height="1.3" fill="#8a3410"/><rect x="1554.85" y="361.86" width="1.1" height="1.3" fill="#8a3410"/><rect x="1554.85" y="364.36" width="1.1" height="1.3" fill="#8a3410"/><rect x="1554.85" y="370.86" width="1.1" height="1.3" fill="#8a3410"/><rect x="1554.85" y="381.36" width="1.1" height="1.3" fill="#8a3410"/><rect x="1556.85" y="370.86" width="1.1" height="1.3" fill="#8a3410"/><rect x="1556.85" y="373.36" width="1.1" height="1.3" fill="#8a3410"/><rect x="1558.85" y="378.86" width="1.1" height="1.3" fill="#8a3410"/><rect x="1560.85" y="373.36" width="1.1" height="1.3" fill="#8a3410"/><rect x="1560.85" y="381.36" width="1.1" height="1.3" fill="#8a3410"/><rect x="1562.85" y="381.36" width="1.1" height="1.3" fill="#8a3410"/><rect x="1564.85" y="370.86" width="1.1" height="1.3" fill="#8a3410"/><rect x="1566.85" y="381.36" width="1.1" height="1.3" fill="#8a3410"/><rect x="1568.85" y="364.36" width="1.1" height="1.3" fill="#8a3410"/><rect x="1568.85" y="373.36" width="1.1" height="1.3" fill="#8a3410"/><rect x="1570.85" y="370.86" width="1.1" height="1.3" fill="#8a3410"/><rect x="1570.85" y="378.86" width="1.1" height="1.3" fill="#8a3410"/><rect x="1570.85" y="381.36" width="1.1" height="1.3" fill="#8a3410"/><rect x="1572.85" y="378.86" width="1.1" height="1.3" fill="#8a3410"/><rect x="1574.85" y="361.86" width="1.1" height="1.3" fill="#8a3410"/><rect x="1574.85" y="364.36" width="1.1" height="1.3" fill="#8a3410"/><rect x="1574.85" y="378.86" width="1.1" height="1.3" fill="#8a3410"/><rect x="1576.85" y="361.86" width="1.1" height="1.3" fill="#8a3410"/><rect x="1576.85" y="381.36" width="1.1" height="1.3" fill="#8a3410"/><rect x="1578.85" y="370.86" width="1.1" height="1.3" fill="#8a3410"/><rect x="1578.85" y="378.86" width="1.1" height="1.3" fill="#8a3410"/><rect x="1578.85" y="381.36" width="1.1" height="1.3" fill="#8a3410"/><rect x="1580.85" y="378.86" width="1.1" height="1.3" fill="#8a3410"/><rect x="1582.85" y="361.86" width="1.1" height="1.3" fill="#8a3410"/><rect x="1582.85" y="370.86" width="1.1" height="1.3" fill="#8a3410"/><rect x="1582.85" y="378.86" width="1.1" height="1.3" fill="#8a3410"/><rect x="1588.85" y="370.86" width="1.1" height="1.3" fill="#8a3410"/><rect x="1588.85" y="373.36" width="1.1" height="1.3" fill="#8a3410"/><rect x="1590.85" y="370.86" width="1.1" height="1.3" fill="#8a3410"/><rect x="1592.85" y="378.86" width="1.1" height="1.3" fill="#8a3410"/><rect x="1592.85" y="381.36" width="1.1" height="1.3" fill="#8a3410"/><rect x="1594.85" y="370.86" width="1.1" height="1.3" fill="#8a3410"/><rect x="1598.85" y="361.86" width="1.1" height="1.3" fill="#8a3410"/><rect x="1600.85" y="370.86" width="1.1" height="1.3" fill="#8a3410"/><rect x="1600.85" y="373.36" width="1.1" height="1.3" fill="#8a3410"/><rect x="1600.85" y="378.86" width="1.1" height="1.3" fill="#8a3410"/><rect x="1604.85" y="370.86" width="1.1" height="1.3" fill="#8a3410"/><rect x="1604.85" y="378.86" width="1.1" height="1.3" fill="#8a3410"/><rect x="1606.85" y="361.86" width="1.1" height="1.3" fill="#8a3410"/><rect x="1608.85" y="361.86" width="1.1" height="1.3" fill="#8a3410"/><rect x="1608.85" y="364.36" width="1.1" height="1.3" fill="#8a3410"/><rect x="1608.85" y="373.36" width="1.1" height="1.3" fill="#8a3410"/><rect x="1610.85" y="381.36" width="1.1" height="1.3" fill="#8a3410"/><rect x="1614.85" y="381.36" width="1.1" height="1.3" fill="#8a3410"/><rect x="1618.85" y="370.86" width="1.1" height="1.3" fill="#8a3410"/><rect x="1618.85" y="373.36" width="1.1" height="1.3" fill="#8a3410"/><rect x="1618.85" y="381.36" width="1.1" height="1.3" fill="#8a3410"/><rect x="1620.85" y="361.86" width="1.1" height="1.3" fill="#8a3410"/><rect x="1620.85" y="364.36" width="1.1" height="1.3" fill="#8a3410"/><rect x="1620.85" y="378.86" width="1.1" height="1.3" fill="#8a3410"/><rect x="1620.85" y="381.36" width="1.1" height="1.3" fill="#8a3410"/><rect x="1624.85" y="373.36" width="1.1" height="1.3" fill="#8a3410"/><rect x="1770.47" y="350.86" width="1" height="34" fill="#d4672b"/><rect x="1802.48" y="350.86" width="1" height="34" fill="#d4672b"/><rect x="1762.57" y="350.86" width="0.8" height="34" fill="#d4672b"/><rect x="1770.57" y="350.86" width="0.8" height="34" fill="#d4672b"/><rect x="1778.57" y="350.86" width="0.8" height="34" fill="#d4672b"/><rect x="1786.58" y="350.86" width="0.8" height="34" fill="#d4672b"/><rect x="1794.58" y="350.86" width="0.8" height="34" fill="#d4672b"/><rect x="1802.58" y="350.86" width="0.8" height="34" fill="#d4672b"/><rect x="1810.58" y="350.86" width="0.8" height="34" fill="#d4672b"/><rect x="1756.96" y="361.86" width="1.1" height="1.3" fill="#8a3410"/><rect x="1756.96" y="370.86" width="1.1" height="1.3" fill="#8a3410"/><rect x="1758.96" y="364.36" width="1.1" height="1.3" fill="#8a3410"/><rect x="1762.96" y="364.36" width="1.1" height="1.3" fill="#8a3410"/><rect x="1764.96" y="381.36" width="1.1" height="1.3" fill="#8a3410"/><rect x="1766.96" y="361.86" width="1.1" height="1.3" fill="#8a3410"/><rect x="1766.96" y="373.36" width="1.1" height="1.3" fill="#8a3410"/><rect x="1766.96" y="381.36" width="1.1" height="1.3" fill="#8a3410"/><rect x="1768.96" y="373.36" width="1.1" height="1.3" fill="#8a3410"/><rect x="1768.96" y="378.86" width="1.1" height="1.3" fill="#8a3410"/><rect x="1770.96" y="370.86" width="1.1" height="1.3" fill="#8a3410"/><rect x="1774.96" y="381.36" width="1.1" height="1.3" fill="#8a3410"/><rect x="1776.96" y="370.86" width="1.1" height="1.3" fill="#8a3410"/><rect x="1778.96" y="361.86" width="1.1" height="1.3" fill="#8a3410"/><rect x="1778.96" y="378.86" width="1.1" height="1.3" fill="#8a3410"/><rect x="1780.96" y="370.86" width="1.1" height="1.3" fill="#8a3410"/><rect x="1784.96" y="361.86" width="1.1" height="1.3" fill="#8a3410"/><rect x="1784.96" y="373.36" width="1.1" height="1.3" fill="#8a3410"/><rect x="1784.96" y="378.86" width="1.1" height="1.3" fill="#8a3410"/><rect x="1786.96" y="361.86" width="1.1" height="1.3" fill="#8a3410"/><rect x="1786.96" y="370.86" width="1.1" height="1.3" fill="#8a3410"/><rect x="1788.96" y="364.36" width="1.1" height="1.3" fill="#8a3410"/><rect x="1788.96" y="370.86" width="1.1" height="1.3" fill="#8a3410"/><rect x="1788.96" y="373.36" width="1.1" height="1.3" fill="#8a3410"/><rect x="1790.96" y="370.86" width="1.1" height="1.3" fill="#8a3410"/><rect x="1790.96" y="373.36" width="1.1" height="1.3" fill="#8a3410"/><rect x="1792.96" y="364.36" width="1.1" height="1.3" fill="#8a3410"/><rect x="1792.96" y="370.86" width="1.1" height="1.3" fill="#8a3410"/><rect x="1792.96" y="378.86" width="1.1" height="1.3" fill="#8a3410"/><rect x="1792.96" y="381.36" width="1.1" height="1.3" fill="#8a3410"/><rect x="1794.96" y="373.36" width="1.1" height="1.3" fill="#8a3410"/><rect x="1800.96" y="364.36" width="1.1" height="1.3" fill="#8a3410"/><rect x="1800.96" y="373.36" width="1.1" height="1.3" fill="#8a3410"/><rect x="1802.96" y="361.86" width="1.1" height="1.3" fill="#8a3410"/><rect x="1802.96" y="364.36" width="1.1" height="1.3" fill="#8a3410"/><rect x="1802.96" y="381.36" width="1.1" height="1.3" fill="#8a3410"/><rect x="1804.96" y="364.36" width="1.1" height="1.3" fill="#8a3410"/><rect x="1804.96" y="370.86" width="1.1" height="1.3" fill="#8a3410"/><rect x="1804.96" y="378.86" width="1.1" height="1.3" fill="#8a3410"/><rect x="1806.96" y="373.36" width="1.1" height="1.3" fill="#8a3410"/><rect x="1810.96" y="364.36" width="1.1" height="1.3" fill="#8a3410"/><rect x="1810.96" y="373.36" width="1.1" height="1.3" fill="#8a3410"/><rect x="1812.96" y="364.36" width="1.1" height="1.3" fill="#8a3410"/><rect x="1812.96" y="370.86" width="1.1" height="1.3" fill="#8a3410"/><rect x="1812.96" y="373.36" width="1.1" height="1.3" fill="#8a3410"/><rect x="1812.96" y="378.86" width="1.1" height="1.3" fill="#8a3410"/><rect x="586.1" y="388.48" width="1" height="34" fill="#22b2b6"/><rect x="618.11" y="388.48" width="1" height="34" fill="#22b2b6"/><rect x="650.12" y="388.48" width="1" height="34" fill="#22b2b6"/><rect x="682.13" y="388.48" width="1" height="34" fill="#22b2b6"/><rect x="714.14" y="388.48" width="1" height="34" fill="#22b2b6"/><rect x="746.15" y="388.48" width="1" height="34" fill="#22b2b6"/><rect x="778.16" y="388.48" width="1" height="34" fill="#22b2b6"/><rect x="810.17" y="388.48" width="1" height="34" fill="#22b2b6"/><rect x="842.18" y="388.48" width="1" height="34" fill="#22b2b6"/><rect x="874.19" y="388.48" width="1" height="34" fill="#22b2b6"/><rect x="906.2" y="388.48" width="1" height="34" fill="#22b2b6"/><rect x="938.21" y="388.48" width="1" height="34" fill="#22b2b6"/><rect x="562.19" y="388.48" width="0.8" height="34" fill="#22b2b6"/><rect x="570.2" y="388.48" width="0.8" height="34" fill="#22b2b6"/><rect x="578.2" y="388.48" width="0.8" height="34" fill="#22b2b6"/><rect x="586.2" y="388.48" width="0.8" height="34" fill="#22b2b6"/><rect x="594.2" y="388.48" width="0.8" height="34" fill="#22b2b6"/><rect x="602.21" y="388.48" width="0.8" height="34" fill="#22b2b6"/><rect x="610.21" y="388.48" width="0.8" height="34" fill="#22b2b6"/><rect x="618.21" y="388.48" width="0.8" height="34" fill="#22b2b6"/><rect x="626.21" y="388.48" width="0.8" height="34" fill="#22b2b6"/><rect x="634.22" y="388.48" width="0.8" height="34" fill="#22b2b6"/><rect x="642.22" y="388.48" width="0.8" height="34" fill="#22b2b6"/><rect x="650.22" y="388.48" width="0.8" height="34" fill="#22b2b6"/><rect x="658.22" y="388.48" width="0.8" height="34" fill="#22b2b6"/><rect x="666.23" y="388.48" width="0.8" height="34" fill="#22b2b6"/><rect x="674.23" y="388.48" width="0.8" height="34" fill="#22b2b6"/><rect x="682.23" y="388.48" width="0.8" height="34" fill="#22b2b6"/><rect x="690.23" y="388.48" width="0.8" height="34" fill="#22b2b6"/><rect x="698.24" y="388.48" width="0.8" height="34" fill="#22b2b6"/><rect x="706.24" y="388.48" width="0.8" height="34" fill="#22b2b6"/><rect x="714.24" y="388.48" width="0.8" height="34" fill="#22b2b6"/><rect x="722.24" y="388.48" width="0.8" height="34" fill="#22b2b6"/><rect x="730.25" y="388.48" width="0.8" height="34" fill="#22b2b6"/><rect x="738.25" y="388.48" width="0.8" height="34" fill="#22b2b6"/><rect x="746.25" y="388.48" width="0.8" height="34" fill="#22b2b6"/><rect x="754.25" y="388.48" width="0.8" height="34" fill="#22b2b6"/><rect x="762.26" y="388.48" width="0.8" height="34" fill="#22b2b6"/><rect x="770.26" y="388.48" width="0.8" height="34" fill="#22b2b6"/><rect x="778.26" y="388.48" width="0.8" height="34" fill="#22b2b6"/><rect x="786.26" y="388.48" width="0.8" height="34" fill="#22b2b6"/><rect x="794.27" y="388.48" width="0.8" height="34" fill="#22b2b6"/><rect x="802.27" y="388.48" width="0.8" height="34" fill="#22b2b6"/><rect x="810.27" y="388.48" width="0.8" height="34" fill="#22b2b6"/><rect x="818.27" y="388.48" width="0.8" height="34" fill="#22b2b6"/><rect x="826.28" y="388.48" width="0.8" height="34" fill="#22b2b6"/><rect x="834.28" y="388.48" width="0.8" height="34" fill="#22b2b6"/><rect x="842.28" y="388.48" width="0.8" height="34" fill="#22b2b6"/><rect x="850.28" y="388.48" width="0.8" height="34" fill="#22b2b6"/><rect x="858.29" y="388.48" width="0.8" height="34" fill="#22b2b6"/><rect x="866.29" y="388.48" width="0.8" height="34" fill="#22b2b6"/><rect x="874.29" y="388.48" width="0.8" height="34" fill="#22b2b6"/><rect x="882.29" y="388.48" width="0.8" height="34" fill="#22b2b6"/><rect x="890.3" y="388.48" width="0.8" height="34" fill="#22b2b6"/><rect x="898.3" y="388.48" width="0.8" height="34" fill="#22b2b6"/><rect x="906.3" y="388.48" width="0.8" height="34" fill="#22b2b6"/><rect x="914.3" y="388.48" width="0.8" height="34" fill="#22b2b6"/><rect x="922.31" y="388.48" width="0.8" height="34" fill="#22b2b6"/><rect x="930.31" y="388.48" width="0.8" height="34" fill="#22b2b6"/><rect x="938.31" y="388.48" width="0.8" height="34" fill="#22b2b6"/><rect x="946.31" y="388.48" width="0.8" height="34" fill="#22b2b6"/><rect x="557.09" y="410.48" width="1.6" height="1.5" fill="#0d6c74"/><rect x="563.79" y="410.48" width="3.5" height="1.6" fill="#0d6c74"/><rect x="565.09" y="398.98" width="1" height="1.6" fill="#0d6c74"/><rect x="571.8" y="413.98" width="3.5" height="1.6" fill="#0d6c74"/><rect x="573.1" y="398.98" width="1" height="1.6" fill="#0d6c74"/><rect x="579.8" y="413.98" width="4.5" height="1.6" fill="#0d6c74"/><rect x="581.1" y="398.98" width="1" height="1.6" fill="#0d6c74"/><rect x="587.8" y="413.98" width="2" height="1.5" fill="#0d6c74"/><rect x="591.6" y="413.98" width="2" height="1.5" fill="#0d6c74"/><rect x="589.8" y="395.48" width="1.1" height="1.3" fill="#0d6c74"/><rect x="589.8" y="397.38" width="1.1" height="1.3" fill="#0d6c74"/><rect x="589.8" y="399.28" width="1.1" height="1.3" fill="#0d6c74"/><rect x="595.8" y="412.48" width="3.5" height="1.6" fill="#0d6c74"/><rect x="597.8" y="391.48" width="1.1" height="1.3" fill="#0d6c74"/><rect x="597.8" y="393.38" width="1.1" height="1.3" fill="#0d6c74"/><rect x="597.8" y="395.28" width="1.1" height="1.3" fill="#0d6c74"/><rect x="597.8" y="397.18" width="1.1" height="1.3" fill="#0d6c74"/><rect x="603.81" y="413.98" width="3.5" height="1.6" fill="#0d6c74"/><rect x="605.81" y="397.48" width="1.1" height="1.3" fill="#0d6c74"/><rect x="605.81" y="399.38" width="1.1" height="1.3" fill="#0d6c74"/><rect x="605.81" y="401.28" width="1.1" height="1.3" fill="#0d6c74"/><rect x="611.81" y="413.98" width="5.5" height="1.6" fill="#0d6c74"/><rect x="613.81" y="395.48" width="1.1" height="1.3" fill="#0d6c74"/><rect x="613.81" y="397.38" width="1.1" height="1.3" fill="#0d6c74"/><rect x="621.11" y="413.98" width="1.6" height="1.5" fill="#0d6c74"/><rect x="621.81" y="397.48" width="1.1" height="1.3" fill="#0d6c74"/><rect x="621.81" y="399.38" width="1.1" height="1.3" fill="#0d6c74"/><rect x="627.81" y="413.98" width="4.5" height="1.6" fill="#0d6c74"/><rect x="629.81" y="395.48" width="1.1" height="1.3" fill="#0d6c74"/><rect x="629.81" y="397.38" width="1.1" height="1.3" fill="#0d6c74"/><rect x="635.82" y="413.98" width="2" height="1.5" fill="#0d6c74"/><rect x="639.62" y="413.98" width="2" height="1.5" fill="#0d6c74"/><rect x="637.82" y="397.48" width="1.1" height="1.3" fill="#0d6c74"/><rect x="637.82" y="399.38" width="1.1" height="1.3" fill="#0d6c74"/><rect x="637.82" y="401.28" width="1.1" height="1.3" fill="#0d6c74"/><rect x="637.82" y="403.18" width="1.1" height="1.3" fill="#0d6c74"/><rect x="643.82" y="413.98" width="3.5" height="1.6" fill="#0d6c74"/><rect x="645.82" y="391.48" width="1.1" height="1.3" fill="#0d6c74"/><rect x="645.82" y="393.38" width="1.1" height="1.3" fill="#0d6c74"/><rect x="645.82" y="395.28" width="1.1" height="1.3" fill="#0d6c74"/><rect x="651.82" y="413.98" width="5.5" height="1.6" fill="#0d6c74"/><rect x="653.82" y="397.48" width="1.1" height="1.3" fill="#0d6c74"/><rect x="653.82" y="399.38" width="1.1" height="1.3" fill="#0d6c74"/><rect x="653.82" y="401.28" width="1.1" height="1.3" fill="#0d6c74"/><rect x="653.82" y="403.18" width="1.1" height="1.3" fill="#0d6c74"/><rect x="659.82" y="411.48" width="5.5" height="1.6" fill="#0d6c74"/><rect x="661.82" y="397.48" width="1.1" height="1.3" fill="#0d6c74"/><rect x="661.82" y="399.38" width="1.1" height="1.3" fill="#0d6c74"/><rect x="661.82" y="401.28" width="1.1" height="1.3" fill="#0d6c74"/><rect x="661.82" y="403.18" width="1.1" height="1.3" fill="#0d6c74"/><rect x="667.83" y="409.98" width="2" height="1.5" fill="#0d6c74"/><rect x="671.63" y="411.48" width="2" height="1.5" fill="#0d6c74"/><rect x="669.83" y="391.48" width="1.1" height="1.3" fill="#0d6c74"/><rect x="669.83" y="393.38" width="1.1" height="1.3" fill="#0d6c74"/><rect x="669.83" y="395.28" width="1.1" height="1.3" fill="#0d6c74"/><rect x="675.83" y="408.48" width="2" height="1.5" fill="#0d6c74"/><rect x="679.63" y="406.98" width="2" height="1.5" fill="#0d6c74"/><rect x="677.83" y="395.48" width="1.1" height="1.3" fill="#0d6c74"/><rect x="677.83" y="397.38" width="1.1" height="1.3" fill="#0d6c74"/><rect x="683.83" y="408.48" width="4.5" height="1.6" fill="#0d6c74"/><rect x="685.83" y="393.48" width="1.1" height="1.3" fill="#0d6c74"/><rect x="685.83" y="395.38" width="1.1" height="1.3" fill="#0d6c74"/><rect x="685.83" y="397.28" width="1.1" height="1.3" fill="#0d6c74"/><rect x="691.83" y="412.48" width="2" height="1.5" fill="#0d6c74"/><rect x="695.63" y="413.98" width="2" height="1.5" fill="#0d6c74"/><rect x="693.83" y="393.48" width="1.1" height="1.3" fill="#0d6c74"/><rect x="693.83" y="395.38" width="1.1" height="1.3" fill="#0d6c74"/><rect x="693.83" y="397.28" width="1.1" height="1.3" fill="#0d6c74"/><rect x="699.84" y="408.48" width="2" height="1.5" fill="#0d6c74"/><rect x="703.64" y="409.98" width="2" height="1.5" fill="#0d6c74"/><rect x="701.84" y="393.48" width="1.1" height="1.3" fill="#0d6c74"/><rect x="701.84" y="395.38" width="1.1" height="1.3" fill="#0d6c74"/><rect x="709.14" y="408.48" width="1.6" height="1.5" fill="#0d6c74"/><rect x="709.84" y="391.48" width="1.1" height="1.3" fill="#0d6c74"/><rect x="709.84" y="393.38" width="1.1" height="1.3" fill="#0d6c74"/><rect x="709.84" y="395.28" width="1.1" height="1.3" fill="#0d6c74"/><rect x="715.84" y="409.98" width="5.5" height="1.6" fill="#0d6c74"/><rect x="717.84" y="397.48" width="1.1" height="1.3" fill="#0d6c74"/><rect x="717.84" y="399.38" width="1.1" height="1.3" fill="#0d6c74"/><rect x="717.84" y="401.28" width="1.1" height="1.3" fill="#0d6c74"/><rect x="723.84" y="411.48" width="2" height="1.5" fill="#0d6c74"/><rect x="727.64" y="412.98" width="2" height="1.5" fill="#0d6c74"/><rect x="725.84" y="395.48" width="1.1" height="1.3" fill="#0d6c74"/><rect x="725.84" y="397.38" width="1.1" height="1.3" fill="#0d6c74"/><rect x="731.85" y="409.98" width="4.5" height="1.6" fill="#0d6c74"/><rect x="733.85" y="391.48" width="1.1" height="1.3" fill="#0d6c74"/><rect x="733.85" y="393.38" width="1.1" height="1.3" fill="#0d6c74"/><rect x="733.85" y="395.28" width="1.1" height="1.3" fill="#0d6c74"/><rect x="741.15" y="412.48" width="1.6" height="1.5" fill="#0d6c74"/><rect x="741.85" y="393.48" width="1.1" height="1.3" fill="#0d6c74"/><rect x="741.85" y="395.38" width="1.1" height="1.3" fill="#0d6c74"/><rect x="741.85" y="397.28" width="1.1" height="1.3" fill="#0d6c74"/><rect x="747.85" y="413.98" width="3.5" height="1.6" fill="#0d6c74"/><rect x="749.85" y="393.48" width="1.1" height="1.3" fill="#0d6c74"/><rect x="749.85" y="395.38" width="1.1" height="1.3" fill="#0d6c74"/><rect x="749.85" y="397.28" width="1.1" height="1.3" fill="#0d6c74"/><rect x="749.85" y="399.18" width="1.1" height="1.3" fill="#0d6c74"/><rect x="755.85" y="413.98" width="2" height="1.5" fill="#0d6c74"/><rect x="759.65" y="415.48" width="2" height="1.5" fill="#0d6c74"/><rect x="757.85" y="391.48" width="1.1" height="1.3" fill="#0d6c74"/><rect x="757.85" y="393.38" width="1.1" height="1.3" fill="#0d6c74"/><rect x="757.85" y="395.28" width="1.1" height="1.3" fill="#0d6c74"/><rect x="757.85" y="397.18" width="1.1" height="1.3" fill="#0d6c74"/><rect x="765.16" y="412.48" width="1.6" height="1.5" fill="#0d6c74"/><rect x="765.86" y="393.48" width="1.1" height="1.3" fill="#0d6c74"/><rect x="765.86" y="395.38" width="1.1" height="1.3" fill="#0d6c74"/><rect x="765.86" y="397.28" width="1.1" height="1.3" fill="#0d6c74"/><rect x="771.86" y="412.48" width="2" height="1.5" fill="#0d6c74"/><rect x="775.66" y="412.48" width="2" height="1.5" fill="#0d6c74"/><rect x="773.86" y="393.48" width="1.1" height="1.3" fill="#0d6c74"/><rect x="773.86" y="395.38" width="1.1" height="1.3" fill="#0d6c74"/><rect x="773.86" y="397.28" width="1.1" height="1.3" fill="#0d6c74"/><rect x="781.16" y="413.98" width="1.6" height="1.5" fill="#0d6c74"/><rect x="781.86" y="391.48" width="1.1" height="1.3" fill="#0d6c74"/><rect x="781.86" y="393.38" width="1.1" height="1.3" fill="#0d6c74"/><rect x="781.86" y="395.28" width="1.1" height="1.3" fill="#0d6c74"/><rect x="787.86" y="413.98" width="4.5" height="1.6" fill="#0d6c74"/><rect x="789.86" y="391.48" width="1.1" height="1.3" fill="#0d6c74"/><rect x="789.86" y="393.38" width="1.1" height="1.3" fill="#0d6c74"/><rect x="795.87" y="413.98" width="2" height="1.5" fill="#0d6c74"/><rect x="799.67" y="413.98" width="2" height="1.5" fill="#0d6c74"/><rect x="797.87" y="391.48" width="1.1" height="1.3" fill="#0d6c74"/><rect x="797.87" y="393.38" width="1.1" height="1.3" fill="#0d6c74"/><rect x="797.87" y="395.28" width="1.1" height="1.3" fill="#0d6c74"/><rect x="797.87" y="397.18" width="1.1" height="1.3" fill="#0d6c74"/><rect x="803.87" y="413.98" width="5.5" height="1.6" fill="#0d6c74"/><rect x="805.87" y="395.48" width="1.1" height="1.3" fill="#0d6c74"/><rect x="805.87" y="397.38" width="1.1" height="1.3" fill="#0d6c74"/><rect x="805.87" y="399.28" width="1.1" height="1.3" fill="#0d6c74"/><rect x="805.87" y="401.18" width="1.1" height="1.3" fill="#0d6c74"/><rect x="811.87" y="411.48" width="5.5" height="1.6" fill="#0d6c74"/><rect x="813.87" y="391.48" width="1.1" height="1.3" fill="#0d6c74"/><rect x="813.87" y="393.38" width="1.1" height="1.3" fill="#0d6c74"/><rect x="813.87" y="395.28" width="1.1" height="1.3" fill="#0d6c74"/><rect x="813.87" y="397.18" width="1.1" height="1.3" fill="#0d6c74"/><rect x="819.87" y="412.98" width="5.5" height="1.6" fill="#0d6c74"/><rect x="821.87" y="395.48" width="1.1" height="1.3" fill="#0d6c74"/><rect x="821.87" y="397.38" width="1.1" height="1.3" fill="#0d6c74"/><rect x="827.88" y="413.98" width="4.5" height="1.6" fill="#0d6c74"/><rect x="829.88" y="397.48" width="1.1" height="1.3" fill="#0d6c74"/><rect x="829.88" y="399.38" width="1.1" height="1.3" fill="#0d6c74"/><rect x="829.88" y="401.28" width="1.1" height="1.3" fill="#0d6c74"/><rect x="835.88" y="413.98" width="5.5" height="1.6" fill="#0d6c74"/><rect x="837.88" y="397.48" width="1.1" height="1.3" fill="#0d6c74"/><rect x="837.88" y="399.38" width="1.1" height="1.3" fill="#0d6c74"/><rect x="837.88" y="401.28" width="1.1" height="1.3" fill="#0d6c74"/><rect x="837.88" y="403.18" width="1.1" height="1.3" fill="#0d6c74"/><rect x="843.88" y="413.98" width="5.5" height="1.6" fill="#0d6c74"/><rect x="845.88" y="391.48" width="1.1" height="1.3" fill="#0d6c74"/><rect x="845.88" y="393.38" width="1.1" height="1.3" fill="#0d6c74"/><rect x="851.88" y="412.48" width="4.5" height="1.6" fill="#0d6c74"/><rect x="853.88" y="395.48" width="1.1" height="1.3" fill="#0d6c74"/><rect x="853.88" y="397.38" width="1.1" height="1.3" fill="#0d6c74"/><rect x="859.89" y="413.98" width="2" height="1.5" fill="#0d6c74"/><rect x="863.69" y="415.48" width="2" height="1.5" fill="#0d6c74"/><rect x="861.89" y="393.48" width="1.1" height="1.3" fill="#0d6c74"/><rect x="861.89" y="395.38" width="1.1" height="1.3" fill="#0d6c74"/><rect x="861.89" y="397.28" width="1.1" height="1.3" fill="#0d6c74"/><rect x="867.89" y="412.48" width="2" height="1.5" fill="#0d6c74"/><rect x="871.69" y="413.98" width="2" height="1.5" fill="#0d6c74"/><rect x="869.89" y="393.48" width="1.1" height="1.3" fill="#0d6c74"/><rect x="869.89" y="395.38" width="1.1" height="1.3" fill="#0d6c74"/><rect x="869.89" y="397.28" width="1.1" height="1.3" fill="#0d6c74"/><rect x="875.89" y="413.98" width="5.5" height="1.6" fill="#0d6c74"/><rect x="877.89" y="397.48" width="1.1" height="1.3" fill="#0d6c74"/><rect x="877.89" y="399.38" width="1.1" height="1.3" fill="#0d6c74"/><rect x="877.89" y="401.28" width="1.1" height="1.3" fill="#0d6c74"/><rect x="883.89" y="412.48" width="5.5" height="1.6" fill="#0d6c74"/><rect x="885.89" y="395.48" width="1.1" height="1.3" fill="#0d6c74"/><rect x="885.89" y="397.38" width="1.1" height="1.3" fill="#0d6c74"/><rect x="885.89" y="399.28" width="1.1" height="1.3" fill="#0d6c74"/><rect x="891.9" y="412.48" width="3.5" height="1.6" fill="#0d6c74"/><rect x="893.9" y="397.48" width="1.1" height="1.3" fill="#0d6c74"/><rect x="893.9" y="399.38" width="1.1" height="1.3" fill="#0d6c74"/><rect x="893.9" y="401.28" width="1.1" height="1.3" fill="#0d6c74"/><rect x="899.9" y="408.48" width="5.5" height="1.6" fill="#0d6c74"/><rect x="901.9" y="395.48" width="1.1" height="1.3" fill="#0d6c74"/><rect x="901.9" y="397.38" width="1.1" height="1.3" fill="#0d6c74"/><rect x="901.9" y="399.28" width="1.1" height="1.3" fill="#0d6c74"/><rect x="907.9" y="410.98" width="2" height="1.5" fill="#0d6c74"/><rect x="911.7" y="409.48" width="2" height="1.5" fill="#0d6c74"/><rect x="909.9" y="397.48" width="1.1" height="1.3" fill="#0d6c74"/><rect x="909.9" y="399.38" width="1.1" height="1.3" fill="#0d6c74"/><rect x="909.9" y="401.28" width="1.1" height="1.3" fill="#0d6c74"/><rect x="909.9" y="403.18" width="1.1" height="1.3" fill="#0d6c74"/><rect x="915.9" y="410.98" width="3.5" height="1.6" fill="#0d6c74"/><rect x="917.9" y="397.48" width="1.1" height="1.3" fill="#0d6c74"/><rect x="917.9" y="399.38" width="1.1" height="1.3" fill="#0d6c74"/><rect x="923.91" y="412.48" width="2" height="1.5" fill="#0d6c74"/><rect x="927.71" y="410.98" width="2" height="1.5" fill="#0d6c74"/><rect x="925.91" y="391.48" width="1.1" height="1.3" fill="#0d6c74"/><rect x="925.91" y="393.38" width="1.1" height="1.3" fill="#0d6c74"/><rect x="931.91" y="410.98" width="2" height="1.5" fill="#0d6c74"/><rect x="935.71" y="410.98" width="2" height="1.5" fill="#0d6c74"/><rect x="933.91" y="397.48" width="1.1" height="1.3" fill="#0d6c74"/><rect x="933.91" y="399.38" width="1.1" height="1.3" fill="#0d6c74"/><rect x="941.21" y="410.98" width="1.6" height="1.5" fill="#0d6c74"/><rect x="941.91" y="397.48" width="1.1" height="1.3" fill="#0d6c74"/><rect x="941.91" y="399.38" width="1.1" height="1.3" fill="#0d6c74"/><rect x="941.91" y="401.28" width="1.1" height="1.3" fill="#0d6c74"/><rect x="941.91" y="403.18" width="1.1" height="1.3" fill="#0d6c74"/><rect x="947.91" y="413.48" width="2" height="1.5" fill="#0d6c74"/><rect x="951.71" y="414.98" width="2" height="1.5" fill="#0d6c74"/><rect x="949.91" y="393.48" width="1.1" height="1.3" fill="#0d6c74"/><rect x="949.91" y="395.38" width="1.1" height="1.3" fill="#0d6c74"/><rect x="949.91" y="397.28" width="1.1" height="1.3" fill="#0d6c74"/><rect x="1194.29" y="388.48" width="1" height="34" fill="#22b2b6"/><rect x="1226.3" y="388.48" width="1" height="34" fill="#22b2b6"/><rect x="1258.31" y="388.48" width="1" height="34" fill="#22b2b6"/><rect x="1290.32" y="388.48" width="1" height="34" fill="#22b2b6"/><rect x="1322.33" y="388.48" width="1" height="34" fill="#22b2b6"/><rect x="1354.34" y="388.48" width="1" height="34" fill="#22b2b6"/><rect x="1186.39" y="388.48" width="0.8" height="34" fill="#22b2b6"/><rect x="1194.39" y="388.48" width="0.8" height="34" fill="#22b2b6"/><rect x="1202.39" y="388.48" width="0.8" height="34" fill="#22b2b6"/><rect x="1210.39" y="388.48" width="0.8" height="34" fill="#22b2b6"/><rect x="1218.4" y="388.48" width="0.8" height="34" fill="#22b2b6"/><rect x="1226.4" y="388.48" width="0.8" height="34" fill="#22b2b6"/><rect x="1234.4" y="388.48" width="0.8" height="34" fill="#22b2b6"/><rect x="1242.41" y="388.48" width="0.8" height="34" fill="#22b2b6"/><rect x="1250.41" y="388.48" width="0.8" height="34" fill="#22b2b6"/><rect x="1258.41" y="388.48" width="0.8" height="34" fill="#22b2b6"/><rect x="1266.41" y="388.48" width="0.8" height="34" fill="#22b2b6"/><rect x="1274.42" y="388.48" width="0.8" height="34" fill="#22b2b6"/><rect x="1282.42" y="388.48" width="0.8" height="34" fill="#22b2b6"/><rect x="1290.42" y="388.48" width="0.8" height="34" fill="#22b2b6"/><rect x="1298.42" y="388.48" width="0.8" height="34" fill="#22b2b6"/><rect x="1306.43" y="388.48" width="0.8" height="34" fill="#22b2b6"/><rect x="1314.43" y="388.48" width="0.8" height="34" fill="#22b2b6"/><rect x="1322.43" y="388.48" width="0.8" height="34" fill="#22b2b6"/><rect x="1330.43" y="388.48" width="0.8" height="34" fill="#22b2b6"/><rect x="1338.44" y="388.48" width="0.8" height="34" fill="#22b2b6"/><rect x="1346.44" y="388.48" width="0.8" height="34" fill="#22b2b6"/><rect x="1354.44" y="388.48" width="0.8" height="34" fill="#22b2b6"/><rect x="1362.44" y="388.48" width="0.8" height="34" fill="#22b2b6"/><rect x="1370.45" y="388.48" width="0.8" height="34" fill="#22b2b6"/><rect x="1378.45" y="388.48" width="0.8" height="34" fill="#22b2b6"/><rect x="1180.78" y="410.48" width="1.1" height="1.3" fill="#0d6c74"/><rect x="1186.78" y="402.98" width="1.1" height="1.3" fill="#0d6c74"/><rect x="1186.78" y="410.48" width="1.1" height="1.3" fill="#0d6c74"/><rect x="1186.78" y="415.98" width="1.1" height="1.3" fill="#0d6c74"/><rect x="1188.78" y="400.48" width="1.1" height="1.3" fill="#0d6c74"/><rect x="1190.78" y="397.98" width="1.1" height="1.3" fill="#0d6c74"/><rect x="1190.78" y="410.48" width="1.1" height="1.3" fill="#0d6c74"/><rect x="1192.78" y="402.98" width="1.1" height="1.3" fill="#0d6c74"/><rect x="1192.78" y="415.98" width="1.1" height="1.3" fill="#0d6c74"/><rect x="1194.78" y="397.98" width="1.1" height="1.3" fill="#0d6c74"/><rect x="1194.78" y="402.98" width="1.1" height="1.3" fill="#0d6c74"/><rect x="1194.78" y="415.98" width="1.1" height="1.3" fill="#0d6c74"/><rect x="1196.78" y="400.48" width="1.1" height="1.3" fill="#0d6c74"/><rect x="1196.78" y="402.98" width="1.1" height="1.3" fill="#0d6c74"/><rect x="1200.78" y="402.98" width="1.1" height="1.3" fill="#0d6c74"/><rect x="1202.78" y="415.98" width="1.1" height="1.3" fill="#0d6c74"/><rect x="1204.78" y="410.48" width="1.1" height="1.3" fill="#0d6c74"/><rect x="1206.78" y="397.98" width="1.1" height="1.3" fill="#0d6c74"/><rect x="1206.78" y="400.48" width="1.1" height="1.3" fill="#0d6c74"/><rect x="1206.78" y="402.98" width="1.1" height="1.3" fill="#0d6c74"/><rect x="1206.78" y="415.98" width="1.1" height="1.3" fill="#0d6c74"/><rect x="1208.78" y="402.98" width="1.1" height="1.3" fill="#0d6c74"/><rect x="1212.78" y="402.98" width="1.1" height="1.3" fill="#0d6c74"/><rect x="1214.78" y="402.98" width="1.1" height="1.3" fill="#0d6c74"/><rect x="1214.78" y="415.98" width="1.1" height="1.3" fill="#0d6c74"/><rect x="1216.78" y="402.98" width="1.1" height="1.3" fill="#0d6c74"/><rect x="1216.78" y="415.98" width="1.1" height="1.3" fill="#0d6c74"/><rect x="1218.78" y="400.48" width="1.1" height="1.3" fill="#0d6c74"/><rect x="1220.78" y="397.98" width="1.1" height="1.3" fill="#0d6c74"/><rect x="1222.78" y="397.98" width="1.1" height="1.3" fill="#0d6c74"/><rect x="1222.78" y="402.98" width="1.1" height="1.3" fill="#0d6c74"/><rect x="1224.78" y="397.98" width="1.1" height="1.3" fill="#0d6c74"/><rect x="1224.78" y="402.98" width="1.1" height="1.3" fill="#0d6c74"/><rect x="1224.78" y="407.98" width="1.1" height="1.3" fill="#0d6c74"/><rect x="1226.78" y="397.98" width="1.1" height="1.3" fill="#0d6c74"/><rect x="1226.78" y="400.48" width="1.1" height="1.3" fill="#0d6c74"/><rect x="1226.78" y="402.98" width="1.1" height="1.3" fill="#0d6c74"/><rect x="1228.78" y="397.98" width="1.1" height="1.3" fill="#0d6c74"/><rect x="1228.78" y="400.48" width="1.1" height="1.3" fill="#0d6c74"/><rect x="1228.78" y="402.98" width="1.1" height="1.3" fill="#0d6c74"/><rect x="1230.78" y="400.48" width="1.1" height="1.3" fill="#0d6c74"/><rect x="1230.78" y="410.48" width="1.1" height="1.3" fill="#0d6c74"/><rect x="1232.78" y="400.48" width="1.1" height="1.3" fill="#0d6c74"/><rect x="1232.78" y="415.98" width="1.1" height="1.3" fill="#0d6c74"/><rect x="1236.78" y="402.98" width="1.1" height="1.3" fill="#0d6c74"/><rect x="1236.78" y="407.98" width="1.1" height="1.3" fill="#0d6c74"/><rect x="1238.78" y="410.48" width="1.1" height="1.3" fill="#0d6c74"/><rect x="1238.78" y="415.98" width="1.1" height="1.3" fill="#0d6c74"/><rect x="1240.78" y="397.98" width="1.1" height="1.3" fill="#0d6c74"/><rect x="1240.78" y="402.98" width="1.1" height="1.3" fill="#0d6c74"/><rect x="1240.78" y="407.98" width="1.1" height="1.3" fill="#0d6c74"/><rect x="1244.78" y="400.48" width="1.1" height="1.3" fill="#0d6c74"/><rect x="1244.78" y="407.98" width="1.1" height="1.3" fill="#0d6c74"/><rect x="1246.78" y="400.48" width="1.1" height="1.3" fill="#0d6c74"/><rect x="1246.78" y="402.98" width="1.1" height="1.3" fill="#0d6c74"/><rect x="1246.78" y="415.98" width="1.1" height="1.3" fill="#0d6c74"/><rect x="1248.78" y="400.48" width="1.1" height="1.3" fill="#0d6c74"/><rect x="1248.78" y="407.98" width="1.1" height="1.3" fill="#0d6c74"/><rect x="1248.78" y="410.48" width="1.1" height="1.3" fill="#0d6c74"/><rect x="1250.78" y="400.48" width="1.1" height="1.3" fill="#0d6c74"/><rect x="1250.78" y="402.98" width="1.1" height="1.3" fill="#0d6c74"/><rect x="1250.78" y="407.98" width="1.1" height="1.3" fill="#0d6c74"/><rect x="1252.78" y="397.98" width="1.1" height="1.3" fill="#0d6c74"/><rect x="1252.78" y="402.98" width="1.1" height="1.3" fill="#0d6c74"/><rect x="1252.78" y="410.48" width="1.1" height="1.3" fill="#0d6c74"/><rect x="1252.78" y="415.98" width="1.1" height="1.3" fill="#0d6c74"/><rect x="1254.78" y="397.98" width="1.1" height="1.3" fill="#0d6c74"/><rect x="1254.78" y="400.48" width="1.1" height="1.3" fill="#0d6c74"/><rect x="1254.78" y="410.48" width="1.1" height="1.3" fill="#0d6c74"/><rect x="1256.78" y="400.48" width="1.1" height="1.3" fill="#0d6c74"/><rect x="1258.78" y="397.98" width="1.1" height="1.3" fill="#0d6c74"/><rect x="1258.78" y="400.48" width="1.1" height="1.3" fill="#0d6c74"/><rect x="1258.78" y="402.98" width="1.1" height="1.3" fill="#0d6c74"/><rect x="1258.78" y="410.48" width="1.1" height="1.3" fill="#0d6c74"/><rect x="1260.78" y="397.98" width="1.1" height="1.3" fill="#0d6c74"/><rect x="1260.78" y="402.98" width="1.1" height="1.3" fill="#0d6c74"/><rect x="1260.78" y="407.98" width="1.1" height="1.3" fill="#0d6c74"/><rect x="1262.78" y="400.48" width="1.1" height="1.3" fill="#0d6c74"/><rect x="1262.78" y="410.48" width="1.1" height="1.3" fill="#0d6c74"/><rect x="1264.78" y="407.98" width="1.1" height="1.3" fill="#0d6c74"/><rect x="1264.78" y="415.98" width="1.1" height="1.3" fill="#0d6c74"/><rect x="1266.78" y="397.98" width="1.1" height="1.3" fill="#0d6c74"/><rect x="1266.78" y="410.48" width="1.1" height="1.3" fill="#0d6c74"/><rect x="1268.78" y="402.98" width="1.1" height="1.3" fill="#0d6c74"/><rect x="1268.78" y="410.48" width="1.1" height="1.3" fill="#0d6c74"/><rect x="1268.78" y="415.98" width="1.1" height="1.3" fill="#0d6c74"/><rect x="1270.78" y="402.98" width="1.1" height="1.3" fill="#0d6c74"/><rect x="1270.78" y="407.98" width="1.1" height="1.3" fill="#0d6c74"/><rect x="1272.78" y="397.98" width="1.1" height="1.3" fill="#0d6c74"/><rect x="1272.78" y="402.98" width="1.1" height="1.3" fill="#0d6c74"/><rect x="1276.78" y="397.98" width="1.1" height="1.3" fill="#0d6c74"/><rect x="1276.78" y="415.98" width="1.1" height="1.3" fill="#0d6c74"/><rect x="1282.78" y="402.98" width="1.1" height="1.3" fill="#0d6c74"/><rect x="1282.78" y="410.48" width="1.1" height="1.3" fill="#0d6c74"/><rect x="1282.78" y="415.98" width="1.1" height="1.3" fill="#0d6c74"/><rect x="1284.78" y="407.98" width="1.1" height="1.3" fill="#0d6c74"/><rect x="1286.78" y="415.98" width="1.1" height="1.3" fill="#0d6c74"/><rect x="1288.78" y="397.98" width="1.1" height="1.3" fill="#0d6c74"/><rect x="1288.78" y="402.98" width="1.1" height="1.3" fill="#0d6c74"/><rect x="1288.78" y="407.98" width="1.1" height="1.3" fill="#0d6c74"/><rect x="1288.78" y="410.48" width="1.1" height="1.3" fill="#0d6c74"/><rect x="1288.78" y="415.98" width="1.1" height="1.3" fill="#0d6c74"/><rect x="1290.78" y="397.98" width="1.1" height="1.3" fill="#0d6c74"/><rect x="1290.78" y="410.48" width="1.1" height="1.3" fill="#0d6c74"/><rect x="1292.78" y="402.98" width="1.1" height="1.3" fill="#0d6c74"/><rect x="1292.78" y="407.98" width="1.1" height="1.3" fill="#0d6c74"/><rect x="1292.78" y="410.48" width="1.1" height="1.3" fill="#0d6c74"/><rect x="1294.78" y="397.98" width="1.1" height="1.3" fill="#0d6c74"/><rect x="1294.78" y="400.48" width="1.1" height="1.3" fill="#0d6c74"/><rect x="1294.78" y="410.48" width="1.1" height="1.3" fill="#0d6c74"/><rect x="1296.78" y="397.98" width="1.1" height="1.3" fill="#0d6c74"/><rect x="1296.78" y="410.48" width="1.1" height="1.3" fill="#0d6c74"/><rect x="1298.78" y="400.48" width="1.1" height="1.3" fill="#0d6c74"/><rect x="1300.78" y="407.98" width="1.1" height="1.3" fill="#0d6c74"/><rect x="1300.78" y="415.98" width="1.1" height="1.3" fill="#0d6c74"/><rect x="1302.78" y="400.48" width="1.1" height="1.3" fill="#0d6c74"/><rect x="1302.78" y="402.98" width="1.1" height="1.3" fill="#0d6c74"/><rect x="1302.78" y="407.98" width="1.1" height="1.3" fill="#0d6c74"/><rect x="1306.78" y="400.48" width="1.1" height="1.3" fill="#0d6c74"/><rect x="1306.78" y="402.98" width="1.1" height="1.3" fill="#0d6c74"/><rect x="1306.78" y="407.98" width="1.1" height="1.3" fill="#0d6c74"/><rect x="1308.78" y="400.48" width="1.1" height="1.3" fill="#0d6c74"/><rect x="1308.78" y="402.98" width="1.1" height="1.3" fill="#0d6c74"/><rect x="1308.78" y="407.98" width="1.1" height="1.3" fill="#0d6c74"/><rect x="1310.78" y="397.98" width="1.1" height="1.3" fill="#0d6c74"/><rect x="1310.78" y="400.48" width="1.1" height="1.3" fill="#0d6c74"/><rect x="1312.78" y="397.98" width="1.1" height="1.3" fill="#0d6c74"/><rect x="1312.78" y="415.98" width="1.1" height="1.3" fill="#0d6c74"/><rect x="1314.78" y="402.98" width="1.1" height="1.3" fill="#0d6c74"/><rect x="1314.78" y="407.98" width="1.1" height="1.3" fill="#0d6c74"/><rect x="1314.78" y="415.98" width="1.1" height="1.3" fill="#0d6c74"/><rect x="1316.78" y="402.98" width="1.1" height="1.3" fill="#0d6c74"/><rect x="1316.78" y="415.98" width="1.1" height="1.3" fill="#0d6c74"/><rect x="1318.78" y="397.98" width="1.1" height="1.3" fill="#0d6c74"/><rect x="1318.78" y="400.48" width="1.1" height="1.3" fill="#0d6c74"/><rect x="1318.78" y="407.98" width="1.1" height="1.3" fill="#0d6c74"/><rect x="1318.78" y="415.98" width="1.1" height="1.3" fill="#0d6c74"/><rect x="1320.78" y="397.98" width="1.1" height="1.3" fill="#0d6c74"/><rect x="1320.78" y="402.98" width="1.1" height="1.3" fill="#0d6c74"/><rect x="1320.78" y="407.98" width="1.1" height="1.3" fill="#0d6c74"/><rect x="1320.78" y="410.48" width="1.1" height="1.3" fill="#0d6c74"/><rect x="1322.78" y="397.98" width="1.1" height="1.3" fill="#0d6c74"/><rect x="1324.78" y="397.98" width="1.1" height="1.3" fill="#0d6c74"/><rect x="1324.78" y="400.48" width="1.1" height="1.3" fill="#0d6c74"/><rect x="1324.78" y="410.48" width="1.1" height="1.3" fill="#0d6c74"/><rect x="1326.78" y="397.98" width="1.1" height="1.3" fill="#0d6c74"/><rect x="1326.78" y="402.98" width="1.1" height="1.3" fill="#0d6c74"/><rect x="1326.78" y="407.98" width="1.1" height="1.3" fill="#0d6c74"/><rect x="1326.78" y="415.98" width="1.1" height="1.3" fill="#0d6c74"/><rect x="1328.78" y="400.48" width="1.1" height="1.3" fill="#0d6c74"/><rect x="1330.78" y="402.98" width="1.1" height="1.3" fill="#0d6c74"/><rect x="1332.78" y="400.48" width="1.1" height="1.3" fill="#0d6c74"/><rect x="1332.78" y="407.98" width="1.1" height="1.3" fill="#0d6c74"/><rect x="1332.78" y="415.98" width="1.1" height="1.3" fill="#0d6c74"/><rect x="1334.78" y="397.98" width="1.1" height="1.3" fill="#0d6c74"/><rect x="1334.78" y="400.48" width="1.1" height="1.3" fill="#0d6c74"/><rect x="1336.78" y="402.98" width="1.1" height="1.3" fill="#0d6c74"/><rect x="1338.78" y="402.98" width="1.1" height="1.3" fill="#0d6c74"/><rect x="1338.78" y="410.48" width="1.1" height="1.3" fill="#0d6c74"/><rect x="1340.78" y="407.98" width="1.1" height="1.3" fill="#0d6c74"/><rect x="1340.78" y="410.48" width="1.1" height="1.3" fill="#0d6c74"/><rect x="1342.78" y="397.98" width="1.1" height="1.3" fill="#0d6c74"/><rect x="1342.78" y="400.48" width="1.1" height="1.3" fill="#0d6c74"/><rect x="1342.78" y="415.98" width="1.1" height="1.3" fill="#0d6c74"/><rect x="1344.78" y="400.48" width="1.1" height="1.3" fill="#0d6c74"/><rect x="1344.78" y="407.98" width="1.1" height="1.3" fill="#0d6c74"/><rect x="1346.78" y="400.48" width="1.1" height="1.3" fill="#0d6c74"/><rect x="1346.78" y="410.48" width="1.1" height="1.3" fill="#0d6c74"/><rect x="1348.78" y="400.48" width="1.1" height="1.3" fill="#0d6c74"/><rect x="1348.78" y="402.98" width="1.1" height="1.3" fill="#0d6c74"/><rect x="1350.78" y="397.98" width="1.1" height="1.3" fill="#0d6c74"/><rect x="1350.78" y="400.48" width="1.1" height="1.3" fill="#0d6c74"/><rect x="1352.78" y="407.98" width="1.1" height="1.3" fill="#0d6c74"/><rect x="1352.78" y="415.98" width="1.1" height="1.3" fill="#0d6c74"/><rect x="1354.78" y="397.98" width="1.1" height="1.3" fill="#0d6c74"/><rect x="1354.78" y="400.48" width="1.1" height="1.3" fill="#0d6c74"/><rect x="1354.78" y="410.48" width="1.1" height="1.3" fill="#0d6c74"/><rect x="1356.78" y="400.48" width="1.1" height="1.3" fill="#0d6c74"/><rect x="1358.78" y="400.48" width="1.1" height="1.3" fill="#0d6c74"/><rect x="1358.78" y="402.98" width="1.1" height="1.3" fill="#0d6c74"/><rect x="1358.78" y="407.98" width="1.1" height="1.3" fill="#0d6c74"/><rect x="1360.78" y="397.98" width="1.1" height="1.3" fill="#0d6c74"/><rect x="1360.78" y="402.98" width="1.1" height="1.3" fill="#0d6c74"/><rect x="1360.78" y="410.48" width="1.1" height="1.3" fill="#0d6c74"/><rect x="1360.78" y="415.98" width="1.1" height="1.3" fill="#0d6c74"/><rect x="1362.78" y="407.98" width="1.1" height="1.3" fill="#0d6c74"/><rect x="1362.78" y="410.48" width="1.1" height="1.3" fill="#0d6c74"/><rect x="1364.78" y="400.48" width="1.1" height="1.3" fill="#0d6c74"/><rect x="1364.78" y="407.98" width="1.1" height="1.3" fill="#0d6c74"/><rect x="1366.78" y="407.98" width="1.1" height="1.3" fill="#0d6c74"/><rect x="1368.78" y="400.48" width="1.1" height="1.3" fill="#0d6c74"/><rect x="1370.78" y="402.98" width="1.1" height="1.3" fill="#0d6c74"/><rect x="1370.78" y="410.48" width="1.1" height="1.3" fill="#0d6c74"/><rect x="1372.78" y="407.98" width="1.1" height="1.3" fill="#0d6c74"/><rect x="1374.78" y="410.48" width="1.1" height="1.3" fill="#0d6c74"/><rect x="1376.78" y="407.98" width="1.1" height="1.3" fill="#0d6c74"/><rect x="1376.78" y="415.98" width="1.1" height="1.3" fill="#0d6c74"/><rect x="1378.78" y="407.98" width="1.1" height="1.3" fill="#0d6c74"/><rect x="1378.78" y="410.48" width="1.1" height="1.3" fill="#0d6c74"/><rect x="1382.78" y="402.98" width="1.1" height="1.3" fill="#0d6c74"/><rect x="1382.78" y="410.48" width="1.1" height="1.3" fill="#0d6c74"/><rect x="1384.78" y="410.48" width="1.1" height="1.3" fill="#0d6c74"/><rect x="1418.36" y="388.48" width="1" height="34" fill="#22b2b6"/><rect x="1450.37" y="388.48" width="1" height="34" fill="#22b2b6"/><rect x="1482.38" y="388.48" width="1" height="34" fill="#22b2b6"/><rect x="1514.39" y="388.48" width="1" height="34" fill="#22b2b6"/><rect x="1546.4" y="388.48" width="1" height="34" fill="#22b2b6"/><rect x="1578.41" y="388.48" width="1" height="34" fill="#22b2b6"/><rect x="1610.42" y="388.48" width="1" height="34" fill="#22b2b6"/><rect x="1642.43" y="388.48" width="1" height="34" fill="#22b2b6"/><rect x="1674.44" y="388.48" width="1" height="34" fill="#22b2b6"/><rect x="1706.45" y="388.48" width="1" height="34" fill="#22b2b6"/><rect x="1738.46" y="388.48" width="1" height="34" fill="#22b2b6"/><rect x="1770.47" y="388.48" width="1" height="34" fill="#22b2b6"/><rect x="1802.48" y="388.48" width="1" height="34" fill="#22b2b6"/><rect x="1394.45" y="388.48" width="0.8" height="34" fill="#22b2b6"/><rect x="1402.45" y="388.48" width="0.8" height="34" fill="#22b2b6"/><rect x="1410.46" y="388.48" width="0.8" height="34" fill="#22b2b6"/><rect x="1418.46" y="388.48" width="0.8" height="34" fill="#22b2b6"/><rect x="1426.46" y="388.48" width="0.8" height="34" fill="#22b2b6"/><rect x="1434.47" y="388.48" width="0.8" height="34" fill="#22b2b6"/><rect x="1442.47" y="388.48" width="0.8" height="34" fill="#22b2b6"/><rect x="1450.47" y="388.48" width="0.8" height="34" fill="#22b2b6"/><rect x="1458.47" y="388.48" width="0.8" height="34" fill="#22b2b6"/><rect x="1466.48" y="388.48" width="0.8" height="34" fill="#22b2b6"/><rect x="1474.48" y="388.48" width="0.8" height="34" fill="#22b2b6"/><rect x="1482.48" y="388.48" width="0.8" height="34" fill="#22b2b6"/><rect x="1490.48" y="388.48" width="0.8" height="34" fill="#22b2b6"/><rect x="1498.49" y="388.48" width="0.8" height="34" fill="#22b2b6"/><rect x="1506.49" y="388.48" width="0.8" height="34" fill="#22b2b6"/><rect x="1514.49" y="388.48" width="0.8" height="34" fill="#22b2b6"/><rect x="1522.49" y="388.48" width="0.8" height="34" fill="#22b2b6"/><rect x="1530.5" y="388.48" width="0.8" height="34" fill="#22b2b6"/><rect x="1538.5" y="388.48" width="0.8" height="34" fill="#22b2b6"/><rect x="1546.5" y="388.48" width="0.8" height="34" fill="#22b2b6"/><rect x="1554.5" y="388.48" width="0.8" height="34" fill="#22b2b6"/><rect x="1562.51" y="388.48" width="0.8" height="34" fill="#22b2b6"/><rect x="1570.51" y="388.48" width="0.8" height="34" fill="#22b2b6"/><rect x="1578.51" y="388.48" width="0.8" height="34" fill="#22b2b6"/><rect x="1586.51" y="388.48" width="0.8" height="34" fill="#22b2b6"/><rect x="1594.52" y="388.48" width="0.8" height="34" fill="#22b2b6"/><rect x="1602.52" y="388.48" width="0.8" height="34" fill="#22b2b6"/><rect x="1610.52" y="388.48" width="0.8" height="34" fill="#22b2b6"/><rect x="1618.52" y="388.48" width="0.8" height="34" fill="#22b2b6"/><rect x="1626.53" y="388.48" width="0.8" height="34" fill="#22b2b6"/><rect x="1634.53" y="388.48" width="0.8" height="34" fill="#22b2b6"/><rect x="1642.53" y="388.48" width="0.8" height="34" fill="#22b2b6"/><rect x="1650.53" y="388.48" width="0.8" height="34" fill="#22b2b6"/><rect x="1658.54" y="388.48" width="0.8" height="34" fill="#22b2b6"/><rect x="1666.54" y="388.48" width="0.8" height="34" fill="#22b2b6"/><rect x="1674.54" y="388.48" width="0.8" height="34" fill="#22b2b6"/><rect x="1682.54" y="388.48" width="0.8" height="34" fill="#22b2b6"/><rect x="1690.55" y="388.48" width="0.8" height="34" fill="#22b2b6"/><rect x="1698.55" y="388.48" width="0.8" height="34" fill="#22b2b6"/><rect x="1706.55" y="388.48" width="0.8" height="34" fill="#22b2b6"/><rect x="1714.55" y="388.48" width="0.8" height="34" fill="#22b2b6"/><rect x="1722.56" y="388.48" width="0.8" height="34" fill="#22b2b6"/><rect x="1730.56" y="388.48" width="0.8" height="34" fill="#22b2b6"/><rect x="1738.56" y="388.48" width="0.8" height="34" fill="#22b2b6"/><rect x="1746.56" y="388.48" width="0.8" height="34" fill="#22b2b6"/><rect x="1754.57" y="388.48" width="0.8" height="34" fill="#22b2b6"/><rect x="1762.57" y="388.48" width="0.8" height="34" fill="#22b2b6"/><rect x="1770.57" y="388.48" width="0.8" height="34" fill="#22b2b6"/><rect x="1778.57" y="388.48" width="0.8" height="34" fill="#22b2b6"/><rect x="1786.58" y="388.48" width="0.8" height="34" fill="#22b2b6"/><rect x="1794.58" y="388.48" width="0.8" height="34" fill="#22b2b6"/><rect x="1802.58" y="388.48" width="0.8" height="34" fill="#22b2b6"/><rect x="1810.58" y="388.48" width="0.8" height="34" fill="#22b2b6"/><rect x="1388.05" y="408.98" width="2" height="1.5" fill="#0d6c74"/><rect x="1391.85" y="408.98" width="2" height="1.5" fill="#0d6c74"/><rect x="1397.35" y="407.48" width="1.6" height="1.5" fill="#0d6c74"/><rect x="1397.35" y="398.98" width="1" height="1.6" fill="#0d6c74"/><rect x="1404.06" y="409.98" width="2" height="1.5" fill="#0d6c74"/><rect x="1407.86" y="411.48" width="2" height="1.5" fill="#0d6c74"/><rect x="1405.36" y="398.98" width="1" height="1.6" fill="#0d6c74"/><rect x="1412.06" y="405.98" width="5.5" height="1.6" fill="#0d6c74"/><rect x="1413.36" y="398.98" width="1" height="1.6" fill="#0d6c74"/><rect x="1421.36" y="404.48" width="1.6" height="1.5" fill="#0d6c74"/><rect x="1422.06" y="395.48" width="1.1" height="1.3" fill="#0d6c74"/><rect x="1422.06" y="397.38" width="1.1" height="1.3" fill="#0d6c74"/><rect x="1422.06" y="399.28" width="1.1" height="1.3" fill="#0d6c74"/><rect x="1422.06" y="401.18" width="1.1" height="1.3" fill="#0d6c74"/><rect x="1428.06" y="404.48" width="4.5" height="1.6" fill="#0d6c74"/><rect x="1430.06" y="393.48" width="1.1" height="1.3" fill="#0d6c74"/><rect x="1430.06" y="395.38" width="1.1" height="1.3" fill="#0d6c74"/><rect x="1430.06" y="397.28" width="1.1" height="1.3" fill="#0d6c74"/><rect x="1430.06" y="399.18" width="1.1" height="1.3" fill="#0d6c74"/><rect x="1436.07" y="404.48" width="4.5" height="1.6" fill="#0d6c74"/><rect x="1438.07" y="393.48" width="1.1" height="1.3" fill="#0d6c74"/><rect x="1438.07" y="395.38" width="1.1" height="1.3" fill="#0d6c74"/><rect x="1444.07" y="404.48" width="3.5" height="1.6" fill="#0d6c74"/><rect x="1446.07" y="393.48" width="1.1" height="1.3" fill="#0d6c74"/><rect x="1446.07" y="395.38" width="1.1" height="1.3" fill="#0d6c74"/><rect x="1446.07" y="397.28" width="1.1" height="1.3" fill="#0d6c74"/><rect x="1452.07" y="404.48" width="2" height="1.5" fill="#0d6c74"/><rect x="1455.87" y="404.48" width="2" height="1.5" fill="#0d6c74"/><rect x="1454.07" y="393.48" width="1.1" height="1.3" fill="#0d6c74"/><rect x="1454.07" y="395.38" width="1.1" height="1.3" fill="#0d6c74"/><rect x="1454.07" y="397.28" width="1.1" height="1.3" fill="#0d6c74"/><rect x="1460.07" y="405.98" width="4.5" height="1.6" fill="#0d6c74"/><rect x="1462.07" y="391.48" width="1.1" height="1.3" fill="#0d6c74"/><rect x="1462.07" y="393.38" width="1.1" height="1.3" fill="#0d6c74"/><rect x="1469.38" y="404.48" width="1.6" height="1.5" fill="#0d6c74"/><rect x="1470.08" y="391.48" width="1.1" height="1.3" fill="#0d6c74"/><rect x="1470.08" y="393.38" width="1.1" height="1.3" fill="#0d6c74"/><rect x="1470.08" y="395.28" width="1.1" height="1.3" fill="#0d6c74"/><rect x="1470.08" y="397.18" width="1.1" height="1.3" fill="#0d6c74"/><rect x="1476.08" y="404.48" width="5.5" height="1.6" fill="#0d6c74"/><rect x="1478.08" y="391.48" width="1.1" height="1.3" fill="#0d6c74"/><rect x="1478.08" y="393.38" width="1.1" height="1.3" fill="#0d6c74"/><rect x="1478.08" y="395.28" width="1.1" height="1.3" fill="#0d6c74"/><rect x="1478.08" y="397.18" width="1.1" height="1.3" fill="#0d6c74"/><rect x="1484.08" y="404.48" width="5.5" height="1.6" fill="#0d6c74"/><rect x="1486.08" y="397.48" width="1.1" height="1.3" fill="#0d6c74"/><rect x="1486.08" y="399.38" width="1.1" height="1.3" fill="#0d6c74"/><rect x="1486.08" y="401.28" width="1.1" height="1.3" fill="#0d6c74"/><rect x="1492.08" y="405.98" width="3.5" height="1.6" fill="#0d6c74"/><rect x="1494.08" y="395.48" width="1.1" height="1.3" fill="#0d6c74"/><rect x="1494.08" y="397.38" width="1.1" height="1.3" fill="#0d6c74"/><rect x="1494.08" y="399.28" width="1.1" height="1.3" fill="#0d6c74"/><rect x="1501.39" y="409.98" width="1.6" height="1.5" fill="#0d6c74"/><rect x="1502.09" y="395.48" width="1.1" height="1.3" fill="#0d6c74"/><rect x="1502.09" y="397.38" width="1.1" height="1.3" fill="#0d6c74"/><rect x="1502.09" y="399.28" width="1.1" height="1.3" fill="#0d6c74"/><rect x="1502.09" y="401.18" width="1.1" height="1.3" fill="#0d6c74"/><rect x="1508.09" y="412.48" width="2" height="1.5" fill="#0d6c74"/><rect x="1511.89" y="412.48" width="2" height="1.5" fill="#0d6c74"/><rect x="1510.09" y="397.48" width="1.1" height="1.3" fill="#0d6c74"/><rect x="1510.09" y="399.38" width="1.1" height="1.3" fill="#0d6c74"/><rect x="1516.09" y="413.98" width="5.5" height="1.6" fill="#0d6c74"/><rect x="1518.09" y="391.48" width="1.1" height="1.3" fill="#0d6c74"/><rect x="1518.09" y="393.38" width="1.1" height="1.3" fill="#0d6c74"/><rect x="1524.09" y="413.98" width="4.5" height="1.6" fill="#0d6c74"/><rect x="1526.09" y="395.48" width="1.1" height="1.3" fill="#0d6c74"/><rect x="1526.09" y="397.38" width="1.1" height="1.3" fill="#0d6c74"/><rect x="1526.09" y="399.28" width="1.1" height="1.3" fill="#0d6c74"/><rect x="1526.09" y="401.18" width="1.1" height="1.3" fill="#0d6c74"/><rect x="1532.1" y="413.98" width="2" height="1.5" fill="#0d6c74"/><rect x="1535.9" y="413.98" width="2" height="1.5" fill="#0d6c74"/><rect x="1534.1" y="395.48" width="1.1" height="1.3" fill="#0d6c74"/><rect x="1534.1" y="397.38" width="1.1" height="1.3" fill="#0d6c74"/><rect x="1534.1" y="399.28" width="1.1" height="1.3" fill="#0d6c74"/><rect x="1540.1" y="412.48" width="2" height="1.5" fill="#0d6c74"/><rect x="1543.9" y="410.98" width="2" height="1.5" fill="#0d6c74"/><rect x="1542.1" y="397.48" width="1.1" height="1.3" fill="#0d6c74"/><rect x="1542.1" y="399.38" width="1.1" height="1.3" fill="#0d6c74"/><rect x="1542.1" y="401.28" width="1.1" height="1.3" fill="#0d6c74"/><rect x="1542.1" y="403.18" width="1.1" height="1.3" fill="#0d6c74"/><rect x="1548.1" y="409.98" width="4.5" height="1.6" fill="#0d6c74"/><rect x="1550.1" y="391.48" width="1.1" height="1.3" fill="#0d6c74"/><rect x="1550.1" y="393.38" width="1.1" height="1.3" fill="#0d6c74"/><rect x="1550.1" y="395.28" width="1.1" height="1.3" fill="#0d6c74"/><rect x="1557.4" y="409.98" width="1.6" height="1.5" fill="#0d6c74"/><rect x="1558.1" y="397.48" width="1.1" height="1.3" fill="#0d6c74"/><rect x="1558.1" y="399.38" width="1.1" height="1.3" fill="#0d6c74"/><rect x="1558.1" y="401.28" width="1.1" height="1.3" fill="#0d6c74"/><rect x="1565.41" y="407.48" width="1.6" height="1.5" fill="#0d6c74"/><rect x="1566.11" y="393.48" width="1.1" height="1.3" fill="#0d6c74"/><rect x="1566.11" y="395.38" width="1.1" height="1.3" fill="#0d6c74"/><rect x="1566.11" y="397.28" width="1.1" height="1.3" fill="#0d6c74"/><rect x="1572.11" y="404.98" width="5.5" height="1.6" fill="#0d6c74"/><rect x="1574.11" y="397.48" width="1.1" height="1.3" fill="#0d6c74"/><rect x="1574.11" y="399.38" width="1.1" height="1.3" fill="#0d6c74"/><rect x="1574.11" y="401.28" width="1.1" height="1.3" fill="#0d6c74"/><rect x="1580.11" y="404.48" width="3.5" height="1.6" fill="#0d6c74"/><rect x="1582.11" y="393.48" width="1.1" height="1.3" fill="#0d6c74"/><rect x="1582.11" y="395.38" width="1.1" height="1.3" fill="#0d6c74"/><rect x="1582.11" y="397.28" width="1.1" height="1.3" fill="#0d6c74"/><rect x="1582.11" y="399.18" width="1.1" height="1.3" fill="#0d6c74"/><rect x="1588.11" y="404.48" width="5.5" height="1.6" fill="#0d6c74"/><rect x="1590.11" y="393.48" width="1.1" height="1.3" fill="#0d6c74"/><rect x="1590.11" y="395.38" width="1.1" height="1.3" fill="#0d6c74"/><rect x="1590.11" y="397.28" width="1.1" height="1.3" fill="#0d6c74"/><rect x="1590.11" y="399.18" width="1.1" height="1.3" fill="#0d6c74"/><rect x="1597.42" y="404.48" width="1.6" height="1.5" fill="#0d6c74"/><rect x="1598.12" y="393.48" width="1.1" height="1.3" fill="#0d6c74"/><rect x="1598.12" y="395.38" width="1.1" height="1.3" fill="#0d6c74"/><rect x="1598.12" y="397.28" width="1.1" height="1.3" fill="#0d6c74"/><rect x="1598.12" y="399.18" width="1.1" height="1.3" fill="#0d6c74"/><rect x="1604.12" y="406.98" width="3.5" height="1.6" fill="#0d6c74"/><rect x="1606.12" y="393.48" width="1.1" height="1.3" fill="#0d6c74"/><rect x="1606.12" y="395.38" width="1.1" height="1.3" fill="#0d6c74"/><rect x="1613.42" y="410.98" width="1.6" height="1.5" fill="#0d6c74"/><rect x="1614.12" y="393.48" width="1.1" height="1.3" fill="#0d6c74"/><rect x="1614.12" y="395.38" width="1.1" height="1.3" fill="#0d6c74"/><rect x="1620.12" y="413.98" width="2" height="1.5" fill="#0d6c74"/><rect x="1623.92" y="413.98" width="2" height="1.5" fill="#0d6c74"/><rect x="1622.12" y="397.48" width="1.1" height="1.3" fill="#0d6c74"/><rect x="1622.12" y="399.38" width="1.1" height="1.3" fill="#0d6c74"/><rect x="1622.12" y="401.28" width="1.1" height="1.3" fill="#0d6c74"/><rect x="1628.13" y="413.98" width="2" height="1.5" fill="#0d6c74"/><rect x="1631.93" y="413.98" width="2" height="1.5" fill="#0d6c74"/><rect x="1630.13" y="393.48" width="1.1" height="1.3" fill="#0d6c74"/><rect x="1630.13" y="395.38" width="1.1" height="1.3" fill="#0d6c74"/><rect x="1636.13" y="413.98" width="3.5" height="1.6" fill="#0d6c74"/><rect x="1638.13" y="397.48" width="1.1" height="1.3" fill="#0d6c74"/><rect x="1638.13" y="399.38" width="1.1" height="1.3" fill="#0d6c74"/><rect x="1644.13" y="413.98" width="5.5" height="1.6" fill="#0d6c74"/><rect x="1646.13" y="395.48" width="1.1" height="1.3" fill="#0d6c74"/><rect x="1646.13" y="397.38" width="1.1" height="1.3" fill="#0d6c74"/><rect x="1646.13" y="399.28" width="1.1" height="1.3" fill="#0d6c74"/><rect x="1653.43" y="412.48" width="1.6" height="1.5" fill="#0d6c74"/><rect x="1654.13" y="397.48" width="1.1" height="1.3" fill="#0d6c74"/><rect x="1654.13" y="399.38" width="1.1" height="1.3" fill="#0d6c74"/><rect x="1660.14" y="413.98" width="4.5" height="1.6" fill="#0d6c74"/><rect x="1662.14" y="391.48" width="1.1" height="1.3" fill="#0d6c74"/><rect x="1662.14" y="393.38" width="1.1" height="1.3" fill="#0d6c74"/><rect x="1662.14" y="395.28" width="1.1" height="1.3" fill="#0d6c74"/><rect x="1662.14" y="397.18" width="1.1" height="1.3" fill="#0d6c74"/><rect x="1668.14" y="413.98" width="5.5" height="1.6" fill="#0d6c74"/><rect x="1670.14" y="397.48" width="1.1" height="1.3" fill="#0d6c74"/><rect x="1670.14" y="399.38" width="1.1" height="1.3" fill="#0d6c74"/><rect x="1670.14" y="401.28" width="1.1" height="1.3" fill="#0d6c74"/><rect x="1676.14" y="411.48" width="2" height="1.5" fill="#0d6c74"/><rect x="1679.94" y="411.48" width="2" height="1.5" fill="#0d6c74"/><rect x="1678.14" y="393.48" width="1.1" height="1.3" fill="#0d6c74"/><rect x="1678.14" y="395.38" width="1.1" height="1.3" fill="#0d6c74"/><rect x="1684.14" y="408.98" width="3.5" height="1.6" fill="#0d6c74"/><rect x="1686.14" y="391.48" width="1.1" height="1.3" fill="#0d6c74"/><rect x="1686.14" y="393.38" width="1.1" height="1.3" fill="#0d6c74"/><rect x="1686.14" y="395.28" width="1.1" height="1.3" fill="#0d6c74"/><rect x="1686.14" y="397.18" width="1.1" height="1.3" fill="#0d6c74"/><rect x="1692.15" y="407.48" width="3.5" height="1.6" fill="#0d6c74"/><rect x="1694.15" y="391.48" width="1.1" height="1.3" fill="#0d6c74"/><rect x="1694.15" y="393.38" width="1.1" height="1.3" fill="#0d6c74"/><rect x="1694.15" y="395.28" width="1.1" height="1.3" fill="#0d6c74"/><rect x="1700.15" y="409.98" width="2" height="1.5" fill="#0d6c74"/><rect x="1703.95" y="408.48" width="2" height="1.5" fill="#0d6c74"/><rect x="1702.15" y="395.48" width="1.1" height="1.3" fill="#0d6c74"/><rect x="1702.15" y="397.38" width="1.1" height="1.3" fill="#0d6c74"/><rect x="1702.15" y="399.28" width="1.1" height="1.3" fill="#0d6c74"/><rect x="1708.15" y="413.98" width="2" height="1.5" fill="#0d6c74"/><rect x="1711.95" y="415.48" width="2" height="1.5" fill="#0d6c74"/><rect x="1710.15" y="391.48" width="1.1" height="1.3" fill="#0d6c74"/><rect x="1710.15" y="393.38" width="1.1" height="1.3" fill="#0d6c74"/><rect x="1710.15" y="395.28" width="1.1" height="1.3" fill="#0d6c74"/><rect x="1710.15" y="397.18" width="1.1" height="1.3" fill="#0d6c74"/><rect x="1716.15" y="412.48" width="4.5" height="1.6" fill="#0d6c74"/><rect x="1718.15" y="395.48" width="1.1" height="1.3" fill="#0d6c74"/><rect x="1718.15" y="397.38" width="1.1" height="1.3" fill="#0d6c74"/><rect x="1718.15" y="399.28" width="1.1" height="1.3" fill="#0d6c74"/><rect x="1724.16" y="408.48" width="4.5" height="1.6" fill="#0d6c74"/><rect x="1726.16" y="393.48" width="1.1" height="1.3" fill="#0d6c74"/><rect x="1726.16" y="395.38" width="1.1" height="1.3" fill="#0d6c74"/><rect x="1726.16" y="397.28" width="1.1" height="1.3" fill="#0d6c74"/><rect x="1732.16" y="406.98" width="3.5" height="1.6" fill="#0d6c74"/><rect x="1734.16" y="391.48" width="1.1" height="1.3" fill="#0d6c74"/><rect x="1734.16" y="393.38" width="1.1" height="1.3" fill="#0d6c74"/><rect x="1734.16" y="395.28" width="1.1" height="1.3" fill="#0d6c74"/><rect x="1740.16" y="404.48" width="5.5" height="1.6" fill="#0d6c74"/><rect x="1742.16" y="393.48" width="1.1" height="1.3" fill="#0d6c74"/><rect x="1742.16" y="395.38" width="1.1" height="1.3" fill="#0d6c74"/><rect x="1742.16" y="397.28" width="1.1" height="1.3" fill="#0d6c74"/><rect x="1748.16" y="404.48" width="2" height="1.5" fill="#0d6c74"/><rect x="1751.96" y="402.98" width="2" height="1.5" fill="#0d6c74"/><rect x="1750.16" y="391.48" width="1.1" height="1.3" fill="#0d6c74"/><rect x="1750.16" y="393.38" width="1.1" height="1.3" fill="#0d6c74"/><rect x="1757.47" y="406.98" width="1.6" height="1.5" fill="#0d6c74"/><rect x="1758.17" y="397.48" width="1.1" height="1.3" fill="#0d6c74"/><rect x="1758.17" y="399.38" width="1.1" height="1.3" fill="#0d6c74"/><rect x="1758.17" y="401.28" width="1.1" height="1.3" fill="#0d6c74"/><rect x="1758.17" y="403.18" width="1.1" height="1.3" fill="#0d6c74"/><rect x="1764.17" y="409.48" width="5.5" height="1.6" fill="#0d6c74"/><rect x="1766.17" y="393.48" width="1.1" height="1.3" fill="#0d6c74"/><rect x="1766.17" y="395.38" width="1.1" height="1.3" fill="#0d6c74"/><rect x="1766.17" y="397.28" width="1.1" height="1.3" fill="#0d6c74"/><rect x="1766.17" y="399.18" width="1.1" height="1.3" fill="#0d6c74"/><rect x="1772.17" y="411.98" width="5.5" height="1.6" fill="#0d6c74"/><rect x="1774.17" y="395.48" width="1.1" height="1.3" fill="#0d6c74"/><rect x="1774.17" y="397.38" width="1.1" height="1.3" fill="#0d6c74"/><rect x="1774.17" y="399.28" width="1.1" height="1.3" fill="#0d6c74"/><rect x="1781.47" y="413.98" width="1.6" height="1.5" fill="#0d6c74"/><rect x="1782.17" y="395.48" width="1.1" height="1.3" fill="#0d6c74"/><rect x="1782.17" y="397.38" width="1.1" height="1.3" fill="#0d6c74"/><rect x="1782.17" y="399.28" width="1.1" height="1.3" fill="#0d6c74"/><rect x="1782.17" y="401.18" width="1.1" height="1.3" fill="#0d6c74"/><rect x="1788.18" y="411.48" width="5.5" height="1.6" fill="#0d6c74"/><rect x="1790.18" y="393.48" width="1.1" height="1.3" fill="#0d6c74"/><rect x="1790.18" y="395.38" width="1.1" height="1.3" fill="#0d6c74"/><rect x="1790.18" y="397.28" width="1.1" height="1.3" fill="#0d6c74"/><rect x="1796.18" y="413.98" width="3.5" height="1.6" fill="#0d6c74"/><rect x="1798.18" y="393.48" width="1.1" height="1.3" fill="#0d6c74"/><rect x="1798.18" y="395.38" width="1.1" height="1.3" fill="#0d6c74"/><rect x="1804.18" y="413.98" width="3.5" height="1.6" fill="#0d6c74"/><rect x="1806.18" y="395.48" width="1.1" height="1.3" fill="#0d6c74"/><rect x="1806.18" y="397.38" width="1.1" height="1.3" fill="#0d6c74"/><rect x="1806.18" y="399.28" width="1.1" height="1.3" fill="#0d6c74"/><rect x="1812.18" y="409.98" width="4.5" height="1.6" fill="#0d6c74"/><rect x="1814.18" y="393.48" width="1.1" height="1.3" fill="#0d6c74"/><rect x="1814.18" y="395.38" width="1.1" height="1.3" fill="#0d6c74"/><rect x="778.16" y="426.1" width="1" height="34" fill="#22b2b6"/><rect x="767.15" y="443.22" width="1.35" height="1.4" fill="#0d6c74"/><rect x="766.25" y="445.02" width="1.3" height="1.4" fill="#0d6c74"/><rect x="767.15" y="448.17" width="1.3" height="1.4" fill="#0d6c74"/><rect x="770.75" y="441.15" width="2.7" height="1.4" fill="#0d6c74"/><rect x="775.25" y="440.79" width="2.25" height="1.4" fill="#0d6c74"/><rect x="778.4" y="438.72" width="3.15" height="1.4" fill="#0d6c74"/><rect x="782.9" y="437.19" width="2.25" height="1.4" fill="#0d6c74"/><rect x="778.85" y="440.97" width="2.7" height="1.4" fill="#0d6c74"/><rect x="782.9" y="440.97" width="2.25" height="1.4" fill="#0d6c74"/><rect x="775.25" y="445.02" width="2.25" height="1.4" fill="#0d6c74"/><rect x="778.85" y="445.02" width="3.15" height="1.4" fill="#0d6c74"/><rect x="782.9" y="445.02" width="2.25" height="1.4" fill="#0d6c74"/><rect x="775.25" y="448.17" width="2.25" height="1.4" fill="#0d6c74"/><rect x="786.95" y="441.87" width="1.3" height="1.4" fill="#0d6c74"/><rect x="789.2" y="443.22" width="4.05" height="1.4" fill="#0d6c74"/><rect x="789.2" y="445.47" width="4.05" height="1.4" fill="#0d6c74"/><rect x="787.85" y="449.97" width="1.3" height="1.4" fill="#0d6c74"/><rect x="789.65" y="450.69" width="3.6" height="1.4" fill="#0d6c74"/><rect x="842.18" y="426.1" width="1" height="34" fill="#22b2b6"/><rect x="874.19" y="426.1" width="1" height="34" fill="#22b2b6"/><rect x="830.61" y="440.25" width="1.8" height="1.4" fill="#0d6c74"/><rect x="834.66" y="440.25" width="1.3" height="1.4" fill="#0d6c74"/><rect x="836.46" y="441.87" width="2.7" height="1.4" fill="#0d6c74"/><rect x="830.61" y="445.02" width="2.7" height="1.4" fill="#0d6c74"/><rect x="835.11" y="445.02" width="4.05" height="1.4" fill="#0d6c74"/><rect x="830.61" y="448.17" width="2.7" height="1.4" fill="#0d6c74"/><rect x="835.11" y="448.17" width="4.05" height="1.4" fill="#0d6c74"/><rect x="843.21" y="440.25" width="2.7" height="1.4" fill="#0d6c74"/><rect x="846.81" y="438.72" width="2.25" height="1.4" fill="#0d6c74"/><rect x="849.96" y="437.82" width="2.7" height="1.4" fill="#0d6c74"/><rect x="855.81" y="434.22" width="2.7" height="1.4" fill="#0d6c74"/><rect x="858.51" y="433.59" width="1.8" height="1.4" fill="#0d6c74"/><rect x="860.76" y="434.49" width="2.7" height="1.4" fill="#0d6c74"/><rect x="858.51" y="437.82" width="1.35" height="1.4" fill="#0d6c74"/><rect x="864.36" y="438.27" width="2.25" height="1.4" fill="#0d6c74"/><rect x="867.06" y="437.19" width="1.8" height="1.4" fill="#0d6c74"/><rect x="869.76" y="435.12" width="3.15" height="1.4" fill="#0d6c74"/><rect x="870.66" y="437.37" width="2.7" height="1.4" fill="#0d6c74"/><rect x="870.66" y="441.15" width="2.7" height="1.4" fill="#0d6c74"/><rect x="875.61" y="436.02" width="1.8" height="1.4" fill="#0d6c74"/><rect x="877.86" y="436.47" width="2.7" height="1.4" fill="#0d6c74"/><rect x="875.61" y="440.52" width="1.8" height="1.4" fill="#0d6c74"/><rect x="877.86" y="441.15" width="2.7" height="1.4" fill="#0d6c74"/><rect x="882.81" y="437.37" width="1.3" height="1.4" fill="#0d6c74"/><rect x="884.61" y="437.78" width="4.5" height="3.15" fill="#0d6c74"/><rect x="884.61" y="445.02" width="4.5" height="1.4" fill="#0d6c74"/><rect x="938.21" y="426.1" width="1" height="34" fill="#22b2b6"/><rect x="932.28" y="437.19" width="1.6" height="1.8" fill="#0d6c74"/><rect x="934.17" y="439.47" width="1.6" height="1.8" fill="#0d6c74"/><rect x="935.44" y="441.24" width="1.6" height="1.8" fill="#0d6c74"/><rect x="936.7" y="443.26" width="1.6" height="1.8" fill="#0d6c74"/><rect x="945.56" y="434.66" width="1.8" height="1.8" fill="#0d6c74"/><rect x="947.66" y="436.27" width="1.8" height="1.8" fill="#0d6c74"/><rect x="949.77" y="437.87" width="1.8" height="1.8" fill="#0d6c74"/><rect x="951.88" y="439.47" width="1.6" height="1.8" fill="#0d6c74"/><rect x="970.22" y="426.1" width="1" height="34" fill="#22b2b6"/><rect x="1002.23" y="426.1" width="1" height="34" fill="#22b2b6"/><rect x="1034.24" y="426.1" width="1" height="34" fill="#22b2b6"/><rect x="1066.25" y="426.1" width="1" height="34" fill="#22b2b6"/><rect x="1098.26" y="426.1" width="1" height="34" fill="#22b2b6"/><rect x="1130.27" y="426.1" width="1" height="34" fill="#22b2b6"/><rect x="1162.28" y="426.1" width="1" height="34" fill="#22b2b6"/><rect x="1194.29" y="426.1" width="1" height="34" fill="#22b2b6"/><rect x="1226.3" y="426.1" width="1" height="34" fill="#22b2b6"/><rect x="1258.31" y="426.1" width="1" height="34" fill="#22b2b6"/><rect x="1290.32" y="426.1" width="1" height="34" fill="#22b2b6"/><rect x="1322.33" y="426.1" width="1" height="34" fill="#22b2b6"/><rect x="1354.34" y="426.1" width="1" height="34" fill="#22b2b6"/><rect x="965.79" y="436.56" width="3.16" height="1.8" fill="#0d6c74"/><rect x="970.21" y="444.4" width="12.01" height="1.8" fill="#0d6c74"/><rect x="986.02" y="444.4" width="1.9" height="1.8" fill="#0d6c74"/><rect x="989.81" y="440.35" width="2.53" height="1.8" fill="#0d6c74"/><rect x="992.34" y="444.15" width="1.6" height="1.8" fill="#0d6c74"/><rect x="988.55" y="448.57" width="1.6" height="1.8" fill="#0d6c74"/><rect x="993.99" y="446.68" width="1.6" height="1.8" fill="#0d6c74"/><rect x="996.77" y="444.4" width="1.6" height="1.8" fill="#0d6c74"/><rect x="994.24" y="448.57" width="1.9" height="1.8" fill="#0d6c74"/><rect x="998.67" y="448.57" width="1.9" height="1.8" fill="#0d6c74"/><rect x="1000.56" y="450.85" width="1.9" height="1.8" fill="#0d6c74"/><rect x="1006.25" y="445.41" width="1.6" height="1.8" fill="#0d6c74"/><rect x="1004.99" y="448.57" width="1.6" height="1.8" fill="#0d6c74"/><rect x="1010.68" y="448.57" width="1.6" height="1.8" fill="#0d6c74"/><rect x="1008.78" y="453.88" width="1.6" height="1.8" fill="#0d6c74"/><rect x="1014.47" y="453.88" width="1.9" height="1.8" fill="#0d6c74"/><rect x="1012.96" y="455.91" width="1.6" height="1.8" fill="#0d6c74"/><rect x="1029.02" y="449.84" width="1.6" height="1.8" fill="#0d6c74"/><rect x="1030.91" y="452.75" width="1.6" height="1.8" fill="#0d6c74"/><rect x="1032.18" y="454.26" width="1.6" height="1.8" fill="#0d6c74"/><rect x="1042.29" y="441.24" width="1.6" height="1.8" fill="#0d6c74"/><rect x="1049.25" y="444.15" width="1.6" height="1.8" fill="#0d6c74"/><rect x="1046.72" y="446.68" width="1.6" height="1.8" fill="#0d6c74"/><rect x="1044.82" y="449.59" width="1.6" height="1.8" fill="#0d6c74"/><rect x="1068.85" y="456.79" width="1.6" height="1.8" fill="#0d6c74"/><rect x="1070.75" y="453.88" width="1.6" height="1.8" fill="#0d6c74"/><rect x="1073.27" y="450.85" width="1.6" height="1.8" fill="#0d6c74"/><rect x="1077.07" y="446.93" width="1.6" height="1.8" fill="#0d6c74"/><rect x="1074.54" y="443.26" width="2.53" height="1.8" fill="#0d6c74"/><rect x="1082.13" y="442.88" width="1.9" height="1.8" fill="#0d6c74"/><rect x="1086.55" y="439.09" width="2.53" height="1.8" fill="#0d6c74"/><rect x="1089.08" y="442.88" width="1.6" height="1.8" fill="#0d6c74"/><rect x="1092.87" y="442.88" width="1.6" height="1.8" fill="#0d6c74"/><rect x="1078.33" y="450.85" width="2.53" height="1.8" fill="#0d6c74"/><rect x="1080.86" y="453.63" width="1.6" height="1.8" fill="#0d6c74"/><rect x="1085.03" y="446.68" width="1.6" height="1.8" fill="#0d6c74"/><rect x="1090.98" y="446.93" width="1.6" height="1.8" fill="#0d6c74"/><rect x="1094.77" y="446.93" width="1.6" height="1.8" fill="#0d6c74"/><rect x="1097.3" y="449.59" width="1.6" height="1.8" fill="#0d6c74"/><rect x="1100.72" y="436.56" width="1.6" height="1.8" fill="#0d6c74"/><rect x="1112.85" y="443.26" width="1.6" height="1.8" fill="#0d6c74"/><rect x="1113.74" y="448.57" width="12.65" height="1.8" fill="#0d6c74"/><rect x="1020.8" y="444.15" width="1.8" height="1.8" fill="#0d6c74"/><rect x="1022.9" y="445.12" width="1.8" height="1.8" fill="#0d6c74"/><rect x="1025.01" y="446.09" width="1.8" height="1.8" fill="#0d6c74"/><rect x="1027.12" y="447.06" width="1.8" height="1.8" fill="#0d6c74"/><rect x="1138.4" y="442.63" width="1.8" height="1.8" fill="#0d6c74"/><rect x="1140.3" y="443.68" width="1.8" height="1.8" fill="#0d6c74"/><rect x="1142.19" y="444.74" width="1.8" height="1.8" fill="#0d6c74"/><rect x="1144.09" y="445.79" width="1.8" height="1.8" fill="#0d6c74"/><rect x="1172.79" y="441.24" width="1.6" height="1.8" fill="#0d6c74"/><rect x="1177.22" y="443.26" width="1.6" height="1.8" fill="#0d6c74"/><rect x="1182.91" y="440.35" width="2.53" height="1.8" fill="#0d6c74"/><rect x="1179.12" y="445.03" width="1.6" height="1.8" fill="#0d6c74"/><rect x="1181.01" y="448.57" width="1.6" height="1.8" fill="#0d6c74"/><rect x="1185.44" y="444.15" width="1.6" height="1.8" fill="#0d6c74"/><rect x="1188.6" y="444.15" width="1.6" height="1.8" fill="#0d6c74"/><rect x="1186.7" y="448.57" width="1.6" height="1.8" fill="#0d6c74"/><rect x="1190.5" y="448.57" width="1.6" height="1.8" fill="#0d6c74"/><rect x="1193.03" y="451.1" width="1.6" height="1.8" fill="#0d6c74"/><rect x="1221.48" y="450.09" width="1.6" height="1.8" fill="#0d6c74"/><rect x="1223.38" y="452.75" width="1.6" height="1.8" fill="#0d6c74"/><rect x="1225.27" y="454.52" width="1.6" height="1.8" fill="#0d6c74"/><rect x="1234.12" y="440.1" width="5.69" height="1.8" fill="#0d6c74"/><rect x="1246.77" y="442.88" width="1.6" height="1.8" fill="#0d6c74"/><rect x="1244.87" y="445.03" width="1.6" height="1.8" fill="#0d6c74"/><rect x="1251.2" y="445.03" width="1.6" height="1.8" fill="#0d6c74"/><rect x="1249.3" y="451.1" width="1.6" height="1.8" fill="#0d6c74"/><rect x="1253.09" y="453.38" width="1.6" height="1.8" fill="#0d6c74"/><rect x="1255.62" y="450.85" width="1.6" height="1.8" fill="#0d6c74"/><rect x="1261.31" y="455.53" width="1.6" height="1.8" fill="#0d6c74"/><rect x="1263.21" y="453.38" width="1.6" height="1.8" fill="#0d6c74"/><rect x="1265.74" y="451.1" width="1.6" height="1.8" fill="#0d6c74"/><rect x="1267.63" y="445.03" width="1.9" height="1.8" fill="#0d6c74"/><rect x="1268.9" y="447.31" width="1.6" height="1.8" fill="#0d6c74"/><rect x="1270.8" y="450.85" width="1.6" height="1.8" fill="#0d6c74"/><rect x="1273.33" y="453.38" width="1.6" height="1.8" fill="#0d6c74"/><rect x="1301.15" y="450.85" width="4.43" height="1.8" fill="#0d6c74"/><rect x="1297.1" y="455.53" width="1.6" height="1.8" fill="#0d6c74"/><rect x="1331.49" y="446.93" width="5.69" height="1.8" fill="#0d6c74"/><rect x="1329.22" y="451.1" width="1.6" height="1.8" fill="#0d6c74"/><rect x="1346.42" y="454.52" width="1.6" height="1.8" fill="#0d6c74"/><rect x="1363.11" y="440.35" width="1.6" height="1.8" fill="#0d6c74"/><rect x="1368.8" y="442.88" width="1.6" height="1.8" fill="#0d6c74"/><rect x="1365.64" y="448.57" width="1.6" height="1.8" fill="#0d6c74"/><rect x="1362.85" y="454.52" width="1.6" height="1.8" fill="#0d6c74"/><rect x="1378.91" y="440.35" width="1.6" height="1.8" fill="#0d6c74"/><rect x="1382.71" y="445.41" width="1.6" height="1.8" fill="#0d6c74"/><rect x="1381.44" y="448.57" width="1.6" height="1.8" fill="#0d6c74"/><rect x="1378.54" y="454.52" width="1.6" height="1.8" fill="#0d6c74"/><rect x="1213.26" y="444.15" width="1.8" height="1.8" fill="#0d6c74"/><rect x="1215.37" y="445.2" width="1.8" height="1.8" fill="#0d6c74"/><rect x="1217.47" y="446.26" width="1.8" height="1.8" fill="#0d6c74"/><rect x="1219.58" y="447.31" width="1.8" height="1.8" fill="#0d6c74"/><rect x="1277.12" y="440.35" width="1.9" height="1.8" fill="#0d6c74"/><rect x="1279.51" y="441.38" width="1.9" height="1.8" fill="#0d6c74"/><rect x="1281.9" y="442.41" width="1.9" height="1.8" fill="#0d6c74"/><rect x="1284.28" y="443.43" width="1.9" height="1.8" fill="#0d6c74"/><rect x="1286.67" y="444.46" width="1.9" height="1.8" fill="#0d6c74"/><rect x="1289.06" y="445.48" width="1.9" height="1.8" fill="#0d6c74"/><rect x="1291.45" y="446.51" width="1.9" height="1.8" fill="#0d6c74"/><rect x="1293.84" y="447.53" width="1.9" height="1.8" fill="#0d6c74"/><rect x="1296.23" y="448.56" width="1.9" height="1.8" fill="#0d6c74"/><rect x="1298.62" y="449.59" width="1.9" height="1.8" fill="#0d6c74"/><rect x="1308.99" y="436.56" width="1.9" height="1.8" fill="#0d6c74"/><rect x="1311.21" y="437.5" width="1.9" height="1.8" fill="#0d6c74"/><rect x="1313.43" y="438.44" width="1.9" height="1.8" fill="#0d6c74"/><rect x="1315.65" y="439.38" width="1.9" height="1.8" fill="#0d6c74"/><rect x="1317.87" y="440.33" width="1.9" height="1.8" fill="#0d6c74"/><rect x="1320.09" y="441.27" width="1.9" height="1.8" fill="#0d6c74"/><rect x="1322.31" y="442.21" width="1.9" height="1.8" fill="#0d6c74"/><rect x="1324.53" y="443.15" width="1.9" height="1.8" fill="#0d6c74"/><rect x="1326.75" y="444.09" width="1.9" height="1.8" fill="#0d6c74"/><rect x="1328.96" y="445.03" width="1.9" height="1.8" fill="#0d6c74"/><rect x="1346.04" y="442.63" width="1.8" height="1.8" fill="#0d6c74"/><rect x="1347.93" y="443.68" width="1.8" height="1.8" fill="#0d6c74"/><rect x="1349.83" y="444.74" width="1.8" height="1.8" fill="#0d6c74"/><rect x="1351.73" y="445.79" width="1.8" height="1.8" fill="#0d6c74"/><rect x="1642.43" y="426.1" width="1" height="34" fill="#22b2b6"/><rect x="1674.44" y="426.1" width="1" height="34" fill="#22b2b6"/><rect x="1706.45" y="426.1" width="1" height="34" fill="#22b2b6"/><rect x="1738.46" y="426.1" width="1" height="34" fill="#22b2b6"/><rect x="1770.47" y="426.1" width="1" height="34" fill="#22b2b6"/><rect x="1802.48" y="426.1" width="1" height="34" fill="#22b2b6"/><rect x="1834.49" y="426.1" width="1" height="34" fill="#22b2b6"/><rect x="1866.5" y="426.1" width="1" height="34" fill="#22b2b6"/><rect x="1825.14" y="433.6" width="0.8" height="26" fill="#22b2b6"/><rect x="1831.97" y="433.6" width="0.8" height="26" fill="#22b2b6"/><rect x="1838.12" y="433.6" width="0.8" height="26" fill="#22b2b6"/><rect x="1843.58" y="433.6" width="0.8" height="26" fill="#22b2b6"/><rect x="1850.41" y="433.6" width="0.8" height="26" fill="#22b2b6"/><rect x="1630.24" y="439.8" width="1.64" height="1.4" fill="#0d6c74"/><rect x="1631.61" y="438.71" width="1.37" height="1.4" fill="#0d6c74"/><rect x="1630.93" y="443.22" width="1.3" height="1.4" fill="#0d6c74"/><rect x="1633.66" y="439.8" width="1.37" height="1.4" fill="#0d6c74"/><rect x="1635.71" y="437.07" width="2.05" height="1.4" fill="#0d6c74"/><rect x="1639.12" y="436.8" width="2.73" height="1.4" fill="#0d6c74"/><rect x="1639.12" y="438.44" width="2.73" height="1.4" fill="#0d6c74"/><rect x="1639.12" y="440.08" width="2.73" height="1.4" fill="#0d6c74"/><rect x="1642.53" y="436.8" width="2.73" height="1.4" fill="#0d6c74"/><rect x="1642.53" y="438.44" width="2.73" height="1.4" fill="#0d6c74"/><rect x="1642.53" y="440.08" width="2.73" height="1.4" fill="#0d6c74"/><rect x="1639.12" y="443.22" width="2.73" height="1.4" fill="#0d6c74"/><rect x="1647.31" y="437.07" width="2.73" height="1.4" fill="#0d6c74"/><rect x="1647.31" y="438.71" width="2.73" height="1.4" fill="#0d6c74"/><rect x="1647.31" y="440.08" width="2.73" height="1.4" fill="#0d6c74"/><rect x="1650.73" y="437.75" width="1.37" height="2.73" fill="#0d6c74"/><rect x="1650.73" y="443.9" width="2.05" height="1.4" fill="#0d6c74"/><rect x="1653.46" y="437.41" width="4.1" height="3.41" fill="#0d6c74"/><rect x="1653.46" y="444.58" width="4.78" height="1.4" fill="#0d6c74"/><rect x="1659.61" y="440.08" width="3.41" height="1.4" fill="#0d6c74"/><rect x="1663.7" y="438.44" width="2.73" height="1.4" fill="#0d6c74"/><rect x="1667.12" y="437.07" width="2.73" height="1.4" fill="#0d6c74"/><rect x="1671.22" y="434.34" width="3.41" height="1.4" fill="#0d6c74"/><rect x="1675.31" y="437.07" width="2.73" height="1.4" fill="#0d6c74"/><rect x="1675.31" y="440.49" width="2.73" height="1.4" fill="#0d6c74"/><rect x="1678.73" y="439.8" width="3.41" height="1.4" fill="#0d6c74"/><rect x="1682.82" y="439.8" width="3.41" height="1.4" fill="#0d6c74"/><rect x="1686.92" y="439.8" width="2.73" height="1.4" fill="#0d6c74"/><rect x="1678.73" y="445.27" width="3.41" height="1.4" fill="#0d6c74"/><rect x="1682.82" y="445.27" width="3.41" height="1.4" fill="#0d6c74"/><rect x="1686.92" y="443.63" width="2.73" height="1.4" fill="#0d6c74"/><rect x="1695.12" y="439.8" width="2.05" height="1.4" fill="#0d6c74"/><rect x="1698.53" y="439.8" width="1.37" height="1.4" fill="#0d6c74"/><rect x="1701.26" y="441.85" width="2.05" height="1.4" fill="#0d6c74"/><rect x="1695.12" y="444.58" width="3.41" height="1.4" fill="#0d6c74"/><rect x="1699.21" y="444.58" width="4.1" height="1.4" fill="#0d6c74"/><rect x="1695.12" y="447.72" width="3.41" height="1.4" fill="#0d6c74"/><rect x="1699.21" y="447.72" width="4.1" height="1.4" fill="#0d6c74"/><rect x="1707.41" y="440.08" width="3.41" height="1.4" fill="#0d6c74"/><rect x="1711.51" y="438.71" width="3.41" height="1.4" fill="#0d6c74"/><rect x="1715.6" y="437.34" width="2.73" height="1.4" fill="#0d6c74"/><rect x="1719.02" y="434.34" width="2.73" height="1.4" fill="#0d6c74"/><rect x="1721.75" y="433.66" width="2.73" height="1.4" fill="#0d6c74"/><rect x="1724.48" y="434.34" width="2.73" height="1.4" fill="#0d6c74"/><rect x="1723.11" y="437.07" width="1.37" height="1.4" fill="#0d6c74"/><rect x="1728.58" y="438.44" width="2.05" height="1.4" fill="#0d6c74"/><rect x="1731.31" y="437.07" width="2.05" height="1.4" fill="#0d6c74"/><rect x="1734.72" y="434.61" width="3.41" height="1.4" fill="#0d6c74"/><rect x="1735.41" y="437.34" width="2.73" height="1.4" fill="#0d6c74"/><rect x="1735.41" y="440.49" width="2.73" height="1.4" fill="#0d6c74"/><rect x="1739.5" y="435.71" width="2.73" height="1.4" fill="#0d6c74"/><rect x="1742.92" y="436.39" width="4.1" height="1.4" fill="#0d6c74"/><rect x="1739.5" y="440.08" width="2.73" height="1.4" fill="#0d6c74"/><rect x="1742.92" y="440.9" width="4.78" height="1.4" fill="#0d6c74"/><rect x="1749.06" y="437.41" width="4.78" height="3.41" fill="#0d6c74"/><rect x="1749.06" y="444.58" width="4.78" height="1.4" fill="#0d6c74"/><rect x="1821.86" y="439.12" width="1.64" height="1.4" fill="#0d6c74"/><rect x="1821.86" y="440.9" width="1.64" height="1.4" fill="#0d6c74"/><rect x="1821.86" y="443.9" width="1.64" height="1.4" fill="#0d6c74"/><rect x="1821.86" y="446.63" width="1.64" height="1.4" fill="#0d6c74"/><rect x="1826.91" y="438.1" width="1.91" height="3.41" fill="#0d6c74"/><rect x="1826.91" y="443.9" width="1.64" height="1.4" fill="#0d6c74"/><rect x="1826.91" y="446.63" width="1.64" height="1.4" fill="#0d6c74"/><rect x="1831.01" y="446.63" width="20.49" height="1.4" fill="#0d6c74"/><rect x="1833.74" y="449.36" width="3.41" height="2.73" fill="#0d6c74"/><rect x="1839.2" y="450.05" width="1.64" height="2.73" fill="#0d6c74"/><rect x="1843.3" y="450.73" width="1.37" height="2.73" fill="#0d6c74"/><rect x="1847.4" y="451.07" width="1.37" height="3.41" fill="#0d6c74"/><rect x="1850.81" y="445.95" width="1.37" height="1.4" fill="#0d6c74"/><rect x="1853.54" y="439.12" width="2.05" height="10.93" fill="#0d6c74"/><rect x="1865.83" y="431.34" width="6.15" height="1.4" fill="#0d6c74"/><rect x="1865.83" y="434.61" width="6.15" height="1.4" fill="#0d6c74"/><rect x="1865.83" y="435.71" width="6.15" height="6.83" fill="#0d6c74"/><rect x="220" y="4.5" width="1755" height="16" fill="#1f2124"/><rect x="246.5" y="4.5" width="1668.5" height="16" fill="#8d8d8f"/><rect x="233.99" y="5.5" width="1" height="15" fill="#9a9c9e"/><rect x="265" y="5.5" width="1" height="15" fill="#a3a3a5"/><rect x="266" y="5.5" width="1.2" height="15" fill="#3c4044"/><rect x="297.01" y="5.5" width="1" height="15" fill="#a3a3a5"/><rect x="298.01" y="5.5" width="1.2" height="15" fill="#3c4044"/><rect x="329.02" y="5.5" width="1" height="15" fill="#a3a3a5"/><rect x="330.02" y="5.5" width="1.2" height="15" fill="#3c4044"/><rect x="361.03" y="5.5" width="1" height="15" fill="#a3a3a5"/><rect x="362.03" y="5.5" width="1.2" height="15" fill="#3c4044"/><rect x="393.04" y="5.5" width="1" height="15" fill="#a3a3a5"/><rect x="394.04" y="5.5" width="1.2" height="15" fill="#3c4044"/><rect x="425.05" y="5.5" width="1" height="15" fill="#a3a3a5"/><rect x="426.05" y="5.5" width="1.2" height="15" fill="#3c4044"/><rect x="457.06" y="5.5" width="1" height="15" fill="#a3a3a5"/><rect x="458.06" y="5.5" width="1.2" height="15" fill="#3c4044"/><rect x="489.07" y="5.5" width="1" height="15" fill="#a3a3a5"/><rect x="490.07" y="5.5" width="1.2" height="15" fill="#3c4044"/><rect x="521.08" y="5.5" width="1" height="15" fill="#a3a3a5"/><rect x="522.08" y="5.5" width="1.2" height="15" fill="#3c4044"/><rect x="553.09" y="5.5" width="1" height="15" fill="#a3a3a5"/><rect x="554.09" y="5.5" width="1.2" height="15" fill="#3c4044"/><rect x="585.1" y="5.5" width="1" height="15" fill="#a3a3a5"/><rect x="586.1" y="5.5" width="1.2" height="15" fill="#3c4044"/><rect x="617.11" y="5.5" width="1" height="15" fill="#a3a3a5"/><rect x="618.11" y="5.5" width="1.2" height="15" fill="#3c4044"/><rect x="649.12" y="5.5" width="1" height="15" fill="#a3a3a5"/><rect x="650.12" y="5.5" width="1.2" height="15" fill="#3c4044"/><rect x="681.13" y="5.5" width="1" height="15" fill="#a3a3a5"/><rect x="682.13" y="5.5" width="1.2" height="15" fill="#3c4044"/><rect x="713.14" y="5.5" width="1" height="15" fill="#a3a3a5"/><rect x="714.14" y="5.5" width="1.2" height="15" fill="#3c4044"/><rect x="745.15" y="5.5" width="1" height="15" fill="#a3a3a5"/><rect x="746.15" y="5.5" width="1.2" height="15" fill="#3c4044"/><rect x="777.16" y="5.5" width="1" height="15" fill="#a3a3a5"/><rect x="778.16" y="5.5" width="1.2" height="15" fill="#3c4044"/><rect x="809.17" y="5.5" width="1" height="15" fill="#a3a3a5"/><rect x="810.17" y="5.5" width="1.2" height="15" fill="#3c4044"/><rect x="841.18" y="5.5" width="1" height="15" fill="#a3a3a5"/><rect x="842.18" y="5.5" width="1.2" height="15" fill="#3c4044"/><rect x="873.19" y="5.5" width="1" height="15" fill="#a3a3a5"/><rect x="874.19" y="5.5" width="1.2" height="15" fill="#3c4044"/><rect x="905.2" y="5.5" width="1" height="15" fill="#a3a3a5"/><rect x="906.2" y="5.5" width="1.2" height="15" fill="#3c4044"/><rect x="937.21" y="5.5" width="1" height="15" fill="#a3a3a5"/><rect x="938.21" y="5.5" width="1.2" height="15" fill="#3c4044"/><rect x="969.22" y="5.5" width="1" height="15" fill="#a3a3a5"/><rect x="970.22" y="5.5" width="1.2" height="15" fill="#3c4044"/><rect x="1001.23" y="5.5" width="1" height="15" fill="#a3a3a5"/><rect x="1002.23" y="5.5" width="1.2" height="15" fill="#3c4044"/><rect x="1033.24" y="5.5" width="1" height="15" fill="#a3a3a5"/><rect x="1034.24" y="5.5" width="1.2" height="15" fill="#3c4044"/><rect x="1065.25" y="5.5" width="1" height="15" fill="#a3a3a5"/><rect x="1066.25" y="5.5" width="1.2" height="15" fill="#3c4044"/><rect x="1097.26" y="5.5" width="1" height="15" fill="#a3a3a5"/><rect x="1098.26" y="5.5" width="1.2" height="15" fill="#3c4044"/><rect x="1129.27" y="5.5" width="1" height="15" fill="#a3a3a5"/><rect x="1130.27" y="5.5" width="1.2" height="15" fill="#3c4044"/><rect x="1161.28" y="5.5" width="1" height="15" fill="#a3a3a5"/><rect x="1162.28" y="5.5" width="1.2" height="15" fill="#3c4044"/><rect x="1193.29" y="5.5" width="1" height="15" fill="#a3a3a5"/><rect x="1194.29" y="5.5" width="1.2" height="15" fill="#3c4044"/><rect x="1225.3" y="5.5" width="1" height="15" fill="#a3a3a5"/><rect x="1226.3" y="5.5" width="1.2" height="15" fill="#3c4044"/><rect x="1257.31" y="5.5" width="1" height="15" fill="#a3a3a5"/><rect x="1258.31" y="5.5" width="1.2" height="15" fill="#3c4044"/><rect x="1289.32" y="5.5" width="1" height="15" fill="#a3a3a5"/><rect x="1290.32" y="5.5" width="1.2" height="15" fill="#3c4044"/><rect x="1321.33" y="5.5" width="1" height="15" fill="#a3a3a5"/><rect x="1322.33" y="5.5" width="1.2" height="15" fill="#3c4044"/><rect x="1353.34" y="5.5" width="1" height="15" fill="#a3a3a5"/><rect x="1354.34" y="5.5" width="1.2" height="15" fill="#3c4044"/><rect x="1385.35" y="5.5" width="1" height="15" fill="#a3a3a5"/><rect x="1386.35" y="5.5" width="1.2" height="15" fill="#3c4044"/><rect x="1417.36" y="5.5" width="1" height="15" fill="#a3a3a5"/><rect x="1418.36" y="5.5" width="1.2" height="15" fill="#3c4044"/><rect x="1449.37" y="5.5" width="1" height="15" fill="#a3a3a5"/><rect x="1450.37" y="5.5" width="1.2" height="15" fill="#3c4044"/><rect x="1481.38" y="5.5" width="1" height="15" fill="#a3a3a5"/><rect x="1482.38" y="5.5" width="1.2" height="15" fill="#3c4044"/><rect x="1513.39" y="5.5" width="1" height="15" fill="#a3a3a5"/><rect x="1514.39" y="5.5" width="1.2" height="15" fill="#3c4044"/><rect x="1545.4" y="5.5" width="1" height="15" fill="#a3a3a5"/><rect x="1546.4" y="5.5" width="1.2" height="15" fill="#3c4044"/><rect x="1577.41" y="5.5" width="1" height="15" fill="#a3a3a5"/><rect x="1578.41" y="5.5" width="1.2" height="15" fill="#3c4044"/><rect x="1609.42" y="5.5" width="1" height="15" fill="#a3a3a5"/><rect x="1610.42" y="5.5" width="1.2" height="15" fill="#3c4044"/><rect x="1641.43" y="5.5" width="1" height="15" fill="#a3a3a5"/><rect x="1642.43" y="5.5" width="1.2" height="15" fill="#3c4044"/><rect x="1673.44" y="5.5" width="1" height="15" fill="#a3a3a5"/><rect x="1674.44" y="5.5" width="1.2" height="15" fill="#3c4044"/><rect x="1705.45" y="5.5" width="1" height="15" fill="#a3a3a5"/><rect x="1706.45" y="5.5" width="1.2" height="15" fill="#3c4044"/><rect x="1737.46" y="5.5" width="1" height="15" fill="#a3a3a5"/><rect x="1738.46" y="5.5" width="1.2" height="15" fill="#3c4044"/><rect x="1769.47" y="5.5" width="1" height="15" fill="#a3a3a5"/><rect x="1770.47" y="5.5" width="1.2" height="15" fill="#3c4044"/><rect x="1801.48" y="5.5" width="1" height="15" fill="#a3a3a5"/><rect x="1802.48" y="5.5" width="1.2" height="15" fill="#3c4044"/><rect x="1833.49" y="5.5" width="1" height="15" fill="#a3a3a5"/><rect x="1834.49" y="5.5" width="1.2" height="15" fill="#3c4044"/><rect x="1865.5" y="5.5" width="1" height="15" fill="#a3a3a5"/><rect x="1866.5" y="5.5" width="1.2" height="15" fill="#3c4044"/><rect x="1897.51" y="5.5" width="1" height="15" fill="#a3a3a5"/><rect x="1898.51" y="5.5" width="1.2" height="15" fill="#3c4044"/><rect x="1930.52" y="5.5" width="1" height="15" fill="#9a9c9e"/><rect x="1962.53" y="5.5" width="1" height="15" fill="#9a9c9e"/><rect x="1915" y="21" width="51" height="1" fill="#3a3d41"/><rect x="522.58" y="20" width="241.68" height="1.6" fill="#52a8dc"/><rect x="1386.85" y="20" width="242.48" height="1.6" fill="#52a8dc"/><polygon points="247,5 253.5,5 247,11.5" fill="#f4f4f4"/><polygon points="1908,5 1915,5 1915,11.5" fill="#f4f4f4"/><rect x="4" y="4" width="215" height="492" fill="#24262a"/><rect x="37.2" y="23" width="173.8" height="25.2" fill="#2a2d30"/><rect x="6" y="23" width="31.2" height="25.2" fill="#9a9b9d"/><g transform="translate(7.8 24.6) scale(0.82 0.9)"><path d="M0.4 0.6 H4.6 L5.6 1.8 H10.2 V3.2 H2.6 L0.4 8.6 Z" fill="#fff"/><path d="M3 3.8 H12.6 L10.4 9.2 H0.8 Z" fill="#fff"/></g><rect x="41.3" y="25.7" width="12.4" height="8.1" rx="0.8" fill="#4c4f51"/><rect x="55" y="25.7" width="12" height="8.1" rx="0.8" fill="#4c4f51"/><rect x="72" y="37.4" width="27.2" height="8.6" rx="1.2" fill="#4c4f51"/><rect x="102" y="37.4" width="27.4" height="8.6" rx="1.2" fill="#4c4f51"/><g transform="translate(72 37.5)"><circle cx="6" cy="4.2" r="2.3" fill="#000"/><path d="M21.6 1.5 V6.9 L18.2 4.2 Z" fill="#000"/><path d="M34 3 H39.4 M34 5.4 H39.4" stroke="#000" stroke-width="1.3"/><path d="M47.6 2.8 L49.4 1.6 L52.4 3.6 L54.2 2.4 M47.6 5.6 L49.4 4.4 L52.4 6.4 L54.2 5.2" stroke="#000" stroke-width="1" fill="none"/></g><rect x="37.2" y="48.2" width="173.8" height="37.62" fill="#2a2d30"/><rect x="37.2" y="47.8" width="173.8" height="0.9" fill="#3f4245"/><rect x="12.6" y="48.2" width="24.6" height="37.82" fill="#7a6df0"/><g transform="translate(14.6 50.2)"><path d="M0 0 H2.2 V5 H3.4 V0 H6.6 V5 H7.8 V0 H10 V9.4 H0 Z" fill="#fff"/><path d="M3.1 5 V9.4 M6.9 5 V9.4" stroke="#777" stroke-width="0.7"/></g><rect x="41.3" y="50.8" width="12.4" height="8.1" rx="0.8" fill="#4c4f51"/><rect x="55" y="50.8" width="12" height="8.1" rx="0.8" fill="#4c4f51"/><rect x="71" y="63.1" width="27" height="8.4" rx="1.2" fill="#4c4f51"/><rect x="101.2" y="63.1" width="27" height="8.4" rx="1.2" fill="#4c4f51"/><rect x="131.4" y="63.1" width="27" height="8.4" rx="1.2" fill="#4c4f51"/><rect x="162.4" y="63.5" width="11.2" height="7.6" rx="1.2" fill="none" stroke="#56595c" stroke-width="0.9"/><g transform="translate(71 63.1)"><circle cx="6.3" cy="4.2" r="2.3" fill="#000"/><path d="M22.6 1.5 L22.6 6.9 L19.2 4.2 Z" fill="#000"/><path d="M34.5 4.5 L38.2 3.5 A2.1 2.3 0 1 0 37.8 6.3" fill="none" stroke="#000" stroke-width="1.1"/><path d="M48.6 1.6 V6.8 H54.6 V1.6 M50.6 1.6 V4.8 M52.6 1.6 V4.8" fill="none" stroke="#000" stroke-width="1.3"/><rect x="93" y="2.7" width="8" height="3" fill="none" stroke="#6a6d70" stroke-width="0.8"/><path d="M95.7 2.7 V5.7 M98.3 2.7 V5.7" stroke="#6a6d70" stroke-width="0.8"/></g><rect x="41.8" y="68.8" width="14" height="14.6" rx="0.5" fill="#282a2d" stroke="#2f3235" stroke-width="0.6"/><rect x="37.2" y="85.82" width="173.8" height="37.62" fill="#2a2d30"/><rect x="37.2" y="85.42" width="173.8" height="0.9" fill="#3f4245"/><rect x="12.6" y="85.82" width="24.6" height="37.82" fill="#e93438"/><g transform="translate(14.6 87.82)"><path d="M0 0 H2.2 V5 H3.4 V0 H6.6 V5 H7.8 V0 H10 V9.4 H0 Z" fill="#fff"/><path d="M3.1 5 V9.4 M6.9 5 V9.4" stroke="#777" stroke-width="0.7"/></g><rect x="41.3" y="88.42" width="12.4" height="8.1" rx="0.8" fill="#4c4f51"/><rect x="55" y="88.42" width="12" height="8.1" rx="0.8" fill="#4c4f51"/><rect x="71" y="100.72" width="27" height="8.4" rx="1.2" fill="#4c4f51"/><rect x="101.2" y="100.72" width="27" height="8.4" rx="1.2" fill="#4c4f51"/><rect x="131.4" y="100.72" width="27" height="8.4" rx="1.2" fill="#4c4f51"/><rect x="162.4" y="101.12" width="11.2" height="7.6" rx="1.2" fill="none" stroke="#56595c" stroke-width="0.9"/><g transform="translate(71 100.72)"><circle cx="6.3" cy="4.2" r="2.3" fill="#000"/><path d="M22.6 1.5 L22.6 6.9 L19.2 4.2 Z" fill="#000"/><path d="M34.5 4.5 L38.2 3.5 A2.1 2.3 0 1 0 37.8 6.3" fill="none" stroke="#000" stroke-width="1.1"/><path d="M48.6 1.6 V6.8 H54.6 V1.6 M50.6 1.6 V4.8 M52.6 1.6 V4.8" fill="none" stroke="#000" stroke-width="1.3"/><rect x="93" y="2.7" width="8" height="3" fill="none" stroke="#6a6d70" stroke-width="0.8"/><path d="M95.7 2.7 V5.7 M98.3 2.7 V5.7" stroke="#6a6d70" stroke-width="0.8"/></g><rect x="41.8" y="106.42" width="14" height="14.6" rx="0.5" fill="#282a2d" stroke="#2f3235" stroke-width="0.6"/><rect x="37.2" y="123.44" width="173.8" height="37.62" fill="#2a2d30"/><rect x="37.2" y="123.04" width="173.8" height="0.9" fill="#3f4245"/><rect x="12.6" y="123.44" width="24.6" height="37.82" fill="#ebbb3b"/><g transform="translate(14.6 125.44)"><path d="M0 0 H2.2 V5 H3.4 V0 H6.6 V5 H7.8 V0 H10 V9.4 H0 Z" fill="#fff"/><path d="M3.1 5 V9.4 M6.9 5 V9.4" stroke="#777" stroke-width="0.7"/></g><rect x="41.3" y="126.04" width="12.4" height="8.1" rx="0.8" fill="#4c4f51"/><rect x="55" y="126.04" width="12" height="8.1" rx="0.8" fill="#4c4f51"/><rect x="71" y="138.34" width="27" height="8.4" rx="1.2" fill="#4c4f51"/><rect x="101.2" y="138.34" width="27" height="8.4" rx="1.2" fill="#4c4f51"/><rect x="131.4" y="138.34" width="27" height="8.4" rx="1.2" fill="#4c4f51"/><rect x="162.4" y="138.74" width="11.2" height="7.6" rx="1.2" fill="none" stroke="#56595c" stroke-width="0.9"/><g transform="translate(71 138.34)"><circle cx="6.3" cy="4.2" r="2.3" fill="#000"/><path d="M22.6 1.5 L22.6 6.9 L19.2 4.2 Z" fill="#000"/><path d="M34.5 4.5 L38.2 3.5 A2.1 2.3 0 1 0 37.8 6.3" fill="none" stroke="#000" stroke-width="1.1"/><path d="M48.6 1.6 V6.8 H54.6 V1.6 M50.6 1.6 V4.8 M52.6 1.6 V4.8" fill="none" stroke="#000" stroke-width="1.3"/><rect x="93" y="2.7" width="8" height="3" fill="none" stroke="#6a6d70" stroke-width="0.8"/><path d="M95.7 2.7 V5.7 M98.3 2.7 V5.7" stroke="#6a6d70" stroke-width="0.8"/></g><rect x="41.8" y="144.04" width="14" height="14.6" rx="0.5" fill="#282a2d" stroke="#2f3235" stroke-width="0.6"/><rect x="37.2" y="161.06" width="173.8" height="37.62" fill="#2a2d30"/><rect x="37.2" y="160.66" width="173.8" height="0.9" fill="#3f4245"/><rect x="12.6" y="161.06" width="24.6" height="37.82" fill="#ebbb3b"/><g transform="translate(14.6 163.06)"><path d="M0 0 H2.2 V5 H3.4 V0 H6.6 V5 H7.8 V0 H10 V9.4 H0 Z" fill="#fff"/><path d="M3.1 5 V9.4 M6.9 5 V9.4" stroke="#777" stroke-width="0.7"/></g><rect x="41.3" y="163.66" width="12.4" height="8.1" rx="0.8" fill="#4c4f51"/><rect x="55" y="163.66" width="12" height="8.1" rx="0.8" fill="#4c4f51"/><rect x="71" y="175.96" width="27" height="8.4" rx="1.2" fill="#4c4f51"/><rect x="101.2" y="175.96" width="27" height="8.4" rx="1.2" fill="#4c4f51"/><rect x="131.4" y="175.96" width="27" height="8.4" rx="1.2" fill="#4c4f51"/><rect x="162.4" y="176.36" width="11.2" height="7.6" rx="1.2" fill="none" stroke="#56595c" stroke-width="0.9"/><g transform="translate(71 175.96)"><circle cx="6.3" cy="4.2" r="2.3" fill="#000"/><path d="M22.6 1.5 L22.6 6.9 L19.2 4.2 Z" fill="#000"/><path d="M34.5 4.5 L38.2 3.5 A2.1 2.3 0 1 0 37.8 6.3" fill="none" stroke="#000" stroke-width="1.1"/><path d="M48.6 1.6 V6.8 H54.6 V1.6 M50.6 1.6 V4.8 M52.6 1.6 V4.8" fill="none" stroke="#000" stroke-width="1.3"/><rect x="93" y="2.7" width="8" height="3" fill="none" stroke="#6a6d70" stroke-width="0.8"/><path d="M95.7 2.7 V5.7 M98.3 2.7 V5.7" stroke="#6a6d70" stroke-width="0.8"/></g><rect x="41.8" y="181.66" width="14" height="14.6" rx="0.5" fill="#282a2d" stroke="#2f3235" stroke-width="0.6"/><rect x="37.2" y="198.68" width="173.8" height="37.62" fill="#2a2d30"/><rect x="37.2" y="198.28" width="173.8" height="0.9" fill="#3f4245"/><rect x="12.6" y="198.68" width="24.6" height="37.82" fill="#ebbb3b"/><g transform="translate(14.6 200.68)"><path d="M0 0 H2.2 V5 H3.4 V0 H6.6 V5 H7.8 V0 H10 V9.4 H0 Z" fill="#fff"/><path d="M3.1 5 V9.4 M6.9 5 V9.4" stroke="#777" stroke-width="0.7"/></g><rect x="41.3" y="201.28" width="12.4" height="8.1" rx="0.8" fill="#4c4f51"/><rect x="55" y="201.28" width="12" height="8.1" rx="0.8" fill="#4c4f51"/><rect x="71" y="213.58" width="27" height="8.4" rx="1.2" fill="#4c4f51"/><rect x="101.2" y="213.58" width="27" height="8.4" rx="1.2" fill="#4c4f51"/><rect x="131.4" y="213.58" width="27" height="8.4" rx="1.2" fill="#4c4f51"/><rect x="162.4" y="213.98" width="11.2" height="7.6" rx="1.2" fill="none" stroke="#56595c" stroke-width="0.9"/><g transform="translate(71 213.58)"><circle cx="6.3" cy="4.2" r="2.3" fill="#000"/><path d="M22.6 1.5 L22.6 6.9 L19.2 4.2 Z" fill="#000"/><path d="M34.5 4.5 L38.2 3.5 A2.1 2.3 0 1 0 37.8 6.3" fill="none" stroke="#000" stroke-width="1.1"/><path d="M48.6 1.6 V6.8 H54.6 V1.6 M50.6 1.6 V4.8 M52.6 1.6 V4.8" fill="none" stroke="#000" stroke-width="1.3"/><rect x="93" y="2.7" width="8" height="3" fill="none" stroke="#6a6d70" stroke-width="0.8"/><path d="M95.7 2.7 V5.7 M98.3 2.7 V5.7" stroke="#6a6d70" stroke-width="0.8"/></g><rect x="41.8" y="219.28" width="14" height="14.6" rx="0.5" fill="#282a2d" stroke="#2f3235" stroke-width="0.6"/><rect x="37.2" y="236.3" width="173.8" height="37.62" fill="#2a2d30"/><rect x="37.2" y="235.9" width="173.8" height="0.9" fill="#3f4245"/><rect x="12.6" y="236.3" width="24.6" height="37.82" fill="#ebbb3b"/><g transform="translate(14.6 238.3)"><path d="M0 0 H2.2 V5 H3.4 V0 H6.6 V5 H7.8 V0 H10 V9.4 H0 Z" fill="#fff"/><path d="M3.1 5 V9.4 M6.9 5 V9.4" stroke="#777" stroke-width="0.7"/></g><rect x="41.3" y="238.9" width="12.4" height="8.1" rx="0.8" fill="#4c4f51"/><rect x="55" y="238.9" width="12" height="8.1" rx="0.8" fill="#4c4f51"/><rect x="71" y="251.2" width="27" height="8.4" rx="1.2" fill="#4c4f51"/><rect x="101.2" y="251.2" width="27" height="8.4" rx="1.2" fill="#4c4f51"/><rect x="131.4" y="251.2" width="27" height="8.4" rx="1.2" fill="#4c4f51"/><rect x="162.4" y="251.6" width="11.2" height="7.6" rx="1.2" fill="none" stroke="#56595c" stroke-width="0.9"/><g transform="translate(71 251.2)"><circle cx="6.3" cy="4.2" r="2.3" fill="#000"/><path d="M22.6 1.5 L22.6 6.9 L19.2 4.2 Z" fill="#000"/><path d="M34.5 4.5 L38.2 3.5 A2.1 2.3 0 1 0 37.8 6.3" fill="none" stroke="#000" stroke-width="1.1"/><path d="M48.6 1.6 V6.8 H54.6 V1.6 M50.6 1.6 V4.8 M52.6 1.6 V4.8" fill="none" stroke="#000" stroke-width="1.3"/><rect x="93" y="2.7" width="8" height="3" fill="none" stroke="#6a6d70" stroke-width="0.8"/><path d="M95.7 2.7 V5.7 M98.3 2.7 V5.7" stroke="#6a6d70" stroke-width="0.8"/></g><rect x="41.8" y="256.9" width="14" height="14.6" rx="0.5" fill="#282a2d" stroke="#2f3235" stroke-width="0.6"/><rect x="37.2" y="273.92" width="173.8" height="37.62" fill="#2a2d30"/><rect x="37.2" y="273.52" width="173.8" height="0.9" fill="#3f4245"/><rect x="12.6" y="273.92" width="24.6" height="37.82" fill="#ebbb3b"/><g transform="translate(14.6 275.92)"><path d="M0 0 H2.2 V5 H3.4 V0 H6.6 V5 H7.8 V0 H10 V9.4 H0 Z" fill="#fff"/><path d="M3.1 5 V9.4 M6.9 5 V9.4" stroke="#777" stroke-width="0.7"/></g><rect x="41.3" y="276.52" width="12.4" height="8.1" rx="0.8" fill="#4c4f51"/><rect x="55" y="276.52" width="12" height="8.1" rx="0.8" fill="#4c4f51"/><rect x="71" y="288.82" width="27" height="8.4" rx="1.2" fill="#4c4f51"/><rect x="101.2" y="288.82" width="27" height="8.4" rx="1.2" fill="#4c4f51"/><rect x="131.4" y="288.82" width="27" height="8.4" rx="1.2" fill="#4c4f51"/><rect x="162.4" y="289.22" width="11.2" height="7.6" rx="1.2" fill="none" stroke="#56595c" stroke-width="0.9"/><g transform="translate(71 288.82)"><circle cx="6.3" cy="4.2" r="2.3" fill="#000"/><path d="M22.6 1.5 L22.6 6.9 L19.2 4.2 Z" fill="#000"/><path d="M34.5 4.5 L38.2 3.5 A2.1 2.3 0 1 0 37.8 6.3" fill="none" stroke="#000" stroke-width="1.1"/><path d="M48.6 1.6 V6.8 H54.6 V1.6 M50.6 1.6 V4.8 M52.6 1.6 V4.8" fill="none" stroke="#000" stroke-width="1.3"/><rect x="93" y="2.7" width="8" height="3" fill="none" stroke="#6a6d70" stroke-width="0.8"/><path d="M95.7 2.7 V5.7 M98.3 2.7 V5.7" stroke="#6a6d70" stroke-width="0.8"/></g><rect x="41.8" y="294.52" width="14" height="14.6" rx="0.5" fill="#282a2d" stroke="#2f3235" stroke-width="0.6"/><rect x="37.2" y="311.54" width="173.8" height="37.62" fill="#ececec"/><rect x="12.6" y="311.54" width="24.6" height="37.82" fill="#41a9ec"/><g transform="translate(14.6 313.54)"><path d="M0 0 H2.2 V5 H3.4 V0 H6.6 V5 H7.8 V0 H10 V9.4 H0 Z" fill="#fff"/><path d="M3.1 5 V9.4 M6.9 5 V9.4" stroke="#777" stroke-width="0.7"/></g><rect x="41.3" y="314.14" width="12.4" height="8.1" rx="0.8" fill="#f4f4f4" stroke="#222" stroke-width="0.9"/><rect x="55" y="314.14" width="12" height="8.1" rx="0.8" fill="#f4f4f4" stroke="#222" stroke-width="0.9"/><rect x="71" y="326.44" width="27" height="8.4" rx="1.2" fill="#f2f2f2" stroke="#222" stroke-width="0.9"/><rect x="101.2" y="326.44" width="27" height="8.4" rx="1.2" fill="#f2f2f2" stroke="#222" stroke-width="0.9"/><rect x="131.4" y="326.44" width="27" height="8.4" rx="1.2" fill="#f2f2f2" stroke="#222" stroke-width="0.9"/><rect x="71.4" y="326.84" width="13" height="7.6" rx="1" fill="#d23a48"/><rect x="162.4" y="326.84" width="11.2" height="7.6" rx="1.2" fill="#f2f2f2" stroke="#222" stroke-width="0.9"/><g transform="translate(71 326.44)"><circle cx="6.3" cy="4.2" r="2.3" fill="#000"/><path d="M22.6 1.5 L22.6 6.9 L19.2 4.2 Z" fill="#000"/><path d="M34.5 4.5 L38.2 3.5 A2.1 2.3 0 1 0 37.8 6.3" fill="none" stroke="#000" stroke-width="1.1"/><path d="M48.6 1.6 V6.8 H54.6 V1.6 M50.6 1.6 V4.8 M52.6 1.6 V4.8" fill="none" stroke="#000" stroke-width="1.3"/><rect x="93" y="2.7" width="8" height="3" fill="none" stroke="#000" stroke-width="0.8"/><path d="M95.7 2.7 V5.7 M98.3 2.7 V5.7" stroke="#000" stroke-width="0.8"/></g><rect x="41.8" y="331.54" width="14.4" height="15.4" rx="1.4" fill="#ebebeb" stroke="#bdbdbd" stroke-width="0.8"/><rect x="37.2" y="349.16" width="173.8" height="37.62" fill="#2a2d30"/><rect x="37.2" y="348.76" width="173.8" height="0.9" fill="#3f4245"/><rect x="12.6" y="349.16" width="24.6" height="37.82" fill="#f07b36"/><g transform="translate(14.6 351.16)"><path d="M0 0 H2.2 V5 H3.4 V0 H6.6 V5 H7.8 V0 H10 V9.4 H0 Z" fill="#fff"/><path d="M3.1 5 V9.4 M6.9 5 V9.4" stroke="#777" stroke-width="0.7"/></g><rect x="41.3" y="351.76" width="12.4" height="8.1" rx="0.8" fill="#4c4f51"/><rect x="55" y="351.76" width="12" height="8.1" rx="0.8" fill="#4c4f51"/><rect x="71" y="364.06" width="27" height="8.4" rx="1.2" fill="#4c4f51"/><rect x="101.2" y="364.06" width="27" height="8.4" rx="1.2" fill="#4c4f51"/><rect x="131.4" y="364.06" width="27" height="8.4" rx="1.2" fill="#4c4f51"/><rect x="162.4" y="364.46" width="11.2" height="7.6" rx="1.2" fill="none" stroke="#56595c" stroke-width="0.9"/><g transform="translate(71 364.06)"><circle cx="6.3" cy="4.2" r="2.3" fill="#000"/><path d="M22.6 1.5 L22.6 6.9 L19.2 4.2 Z" fill="#000"/><path d="M34.5 4.5 L38.2 3.5 A2.1 2.3 0 1 0 37.8 6.3" fill="none" stroke="#000" stroke-width="1.1"/><path d="M48.6 1.6 V6.8 H54.6 V1.6 M50.6 1.6 V4.8 M52.6 1.6 V4.8" fill="none" stroke="#000" stroke-width="1.3"/><rect x="93" y="2.7" width="8" height="3" fill="none" stroke="#6a6d70" stroke-width="0.8"/><path d="M95.7 2.7 V5.7 M98.3 2.7 V5.7" stroke="#6a6d70" stroke-width="0.8"/></g><rect x="41.8" y="369.76" width="14" height="14.6" rx="0.5" fill="#282a2d" stroke="#2f3235" stroke-width="0.6"/><rect x="37.2" y="386.78" width="173.8" height="37.62" fill="#2a2d30"/><rect x="37.2" y="386.38" width="173.8" height="0.9" fill="#3f4245"/><rect x="12.6" y="386.78" width="24.6" height="37.82" fill="#2fcfd0"/><g transform="translate(14.6 388.78)"><path d="M0 0 H2.2 V5 H3.4 V0 H6.6 V5 H7.8 V0 H10 V9.4 H0 Z" fill="#fff"/><path d="M3.1 5 V9.4 M6.9 5 V9.4" stroke="#777" stroke-width="0.7"/></g><rect x="41.3" y="389.38" width="12.4" height="8.1" rx="0.8" fill="#4c4f51"/><rect x="55" y="389.38" width="12" height="8.1" rx="0.8" fill="#4c4f51"/><rect x="71" y="401.68" width="27" height="8.4" rx="1.2" fill="#4c4f51"/><rect x="101.2" y="401.68" width="27" height="8.4" rx="1.2" fill="#4c4f51"/><rect x="131.4" y="401.68" width="27" height="8.4" rx="1.2" fill="#4c4f51"/><rect x="162.4" y="402.08" width="11.2" height="7.6" rx="1.2" fill="none" stroke="#56595c" stroke-width="0.9"/><g transform="translate(71 401.68)"><circle cx="6.3" cy="4.2" r="2.3" fill="#000"/><path d="M22.6 1.5 L22.6 6.9 L19.2 4.2 Z" fill="#000"/><path d="M34.5 4.5 L38.2 3.5 A2.1 2.3 0 1 0 37.8 6.3" fill="none" stroke="#000" stroke-width="1.1"/><path d="M48.6 1.6 V6.8 H54.6 V1.6 M50.6 1.6 V4.8 M52.6 1.6 V4.8" fill="none" stroke="#000" stroke-width="1.3"/><rect x="93" y="2.7" width="8" height="3" fill="none" stroke="#6a6d70" stroke-width="0.8"/><path d="M95.7 2.7 V5.7 M98.3 2.7 V5.7" stroke="#6a6d70" stroke-width="0.8"/></g><rect x="41.8" y="407.38" width="14" height="14.6" rx="0.5" fill="#282a2d" stroke="#2f3235" stroke-width="0.6"/><rect x="37.2" y="424.4" width="173.8" height="37.62" fill="#2a2d30"/><rect x="37.2" y="424" width="173.8" height="0.9" fill="#3f4245"/><rect x="12.6" y="424.4" width="24.6" height="37.82" fill="#2fcfd0"/><g transform="translate(14.6 426.4)"><path d="M0 0 H2.2 V5 H3.4 V0 H6.6 V5 H7.8 V0 H10 V9.4 H0 Z" fill="#fff"/><path d="M3.1 5 V9.4 M6.9 5 V9.4" stroke="#777" stroke-width="0.7"/></g><rect x="41.3" y="427" width="12.4" height="8.1" rx="0.8" fill="#4c4f51"/><rect x="55" y="427" width="12" height="8.1" rx="0.8" fill="#4c4f51"/><rect x="71" y="439.3" width="27" height="8.4" rx="1.2" fill="#4c4f51"/><rect x="101.2" y="439.3" width="27" height="8.4" rx="1.2" fill="#4c4f51"/><rect x="131.4" y="439.3" width="27" height="8.4" rx="1.2" fill="#4c4f51"/><rect x="162.4" y="439.7" width="11.2" height="7.6" rx="1.2" fill="none" stroke="#56595c" stroke-width="0.9"/><g transform="translate(71 439.3)"><circle cx="6.3" cy="4.2" r="2.3" fill="#000"/><path d="M22.6 1.5 L22.6 6.9 L19.2 4.2 Z" fill="#000"/><path d="M34.5 4.5 L38.2 3.5 A2.1 2.3 0 1 0 37.8 6.3" fill="none" stroke="#000" stroke-width="1.1"/><path d="M48.6 1.6 V6.8 H54.6 V1.6 M50.6 1.6 V4.8 M52.6 1.6 V4.8" fill="none" stroke="#000" stroke-width="1.3"/><rect x="93" y="2.7" width="8" height="3" fill="none" stroke="#6a6d70" stroke-width="0.8"/><path d="M95.7 2.7 V5.7 M98.3 2.7 V5.7" stroke="#6a6d70" stroke-width="0.8"/></g><rect x="41.8" y="445" width="14" height="14.6" rx="0.5" fill="#282a2d" stroke="#2f3235" stroke-width="0.6"/><rect x="6" y="461.62" width="213" height="0.9" fill="#3f4245"/><rect x="6" y="48.2" width="6.6" height="413.82" fill="#000"/><rect x="211" y="21.6" width="7" height="440.42" fill="#000"/><rect x="5.2" y="5.4" width="30.8" height="11.4" rx="1.5" fill="#4e5153"/><g transform="translate(5.2 5.4)"><path d="M7.7 2.6 V8.8 M4.6 5.7 H10.8" stroke="#fff" stroke-width="1.5"/><path d="M19 5.7 L20.8 2.8 H24.4 L26 5.4 H23.4 V8.6 H20.8 Z" fill="#fff"/><rect x="23.8" y="5.8" width="4.2" height="3" fill="#ddd"/></g><rect x="127" y="5.5" width="68" height="11.2" rx="1.5" fill="#3b3d40"/><rect x="165" y="5.5" width="14" height="11.2" rx="1.5" fill="#1b1c1e"/><rect x="180.7" y="5.5" width="14" height="11.2" rx="1.5" fill="#1b1c1e"/><g transform="translate(165 5.5)"><path d="M3.6 9 V4.8 L7 2.2 L10.4 4.8 V9 Z" fill="none" stroke="#fff" stroke-width="1.2"/><path d="M5.6 6.2 L8.4 8 M8.4 6.2 L5.6 8" stroke="#fff" stroke-width="0.7"/><rect x="19" y="2.6" width="7.4" height="6.4" fill="none" stroke="#fff" stroke-width="1.1"/><path d="M19 4.8 H26.4 M19 6.9 H26.4" stroke="#fff" stroke-width="1"/></g><rect x="201.7" y="5.5" width="15.1" height="11.2" rx="1.5" fill="#56595b"/><g transform="translate(201.7 5.5)"><circle cx="8.8" cy="4.8" r="2.4" fill="none" stroke="#fff" stroke-width="1.2"/><path d="M7 6.6 L4.4 9.2" stroke="#fff" stroke-width="1.4"/></g><rect x="6" y="20.3" width="213" height="0.9" fill="#4e5053"/><rect x="6" y="21.3" width="213" height="1.3" fill="#0d0d0e"/><rect x="6" y="20.3" width="24" height="2.2" fill="#4aa3da"/><rect x="218.3" y="5" width="1.4" height="491" fill="#787a7c"/><rect x="217.9" y="243" width="1.8" height="1.5" fill="#dcdcdc"/><rect x="217.9" y="246" width="1.8" height="1.5" fill="#dcdcdc"/><rect x="217.9" y="249" width="1.8" height="1.5" fill="#dcdcdc"/><rect x="217.9" y="252" width="1.8" height="1.5" fill="#dcdcdc"/><rect x="217.9" y="255" width="1.8" height="1.5" fill="#dcdcdc"/><g transform="translate(194 486)"><path d="M2.2 2.6 H7 L4.6 5.4 Z" fill="#9a9c9e"/><circle cx="17" cy="4.2" r="2.1" fill="none" stroke="#a4a6a8" stroke-width="1.5"/><path d="M17 0.8 V7.6 M13.6 4.2 H20.4 M14.6 1.8 L19.4 6.6 M19.4 1.8 L14.6 6.6" stroke="#a4a6a8" stroke-width="1"/><circle cx="17" cy="4.2" r="1" fill="#24262a"/></g><rect x="15" y="491" width="2" height="1" fill="#bbb"/><rect x="220.4" y="488" width="1680" height="7.6" fill="#47494c"/><rect x="283.4" y="489.2" width="423.6" height="5" rx="2.5" fill="#f2f2f2"/><g transform="translate(220 488)"><path d="M6 1.4 L3.6 3.8 L6 6.2" stroke="#fff" stroke-width="1.3" fill="none"/><path d="M1674 1.4 L1676.4 3.8 L1674 6.2" stroke="#fff" stroke-width="1.3" fill="none"/><path d="M1684.6 2.6 H1690 L1687.3 5.4 Z" fill="#b0b2b4"/><path d="M1695 4 H1698" stroke="#8a8c8e" stroke-width="0.8"/><path d="M1702 4 H1730" stroke="#8a8c8e" stroke-width="1"/><circle cx="1709.2" cy="4" r="1.8" fill="#c4c6c8"/><path d="M1735 4 H1739 M1737 2 V6" stroke="#8a8c8e" stroke-width="0.7"/></g><rect x="1966.4" y="5.6" width="7.4" height="13" rx="1.6" fill="#55585b"/><rect x="1966.6" y="67.4" width="7.8" height="364" fill="#47494c"/><g transform="translate(1960 0)"><path d="M7.6 10.6 H12.6 L10.1 14.4 Z" fill="#fff"/><path d="M8 27.6 L12.4 23.4" stroke="#9a9c9e" stroke-width="1"/><path d="M10.2 33 V60" stroke="#6a6c6e" stroke-width="1"/><circle cx="10.2" cy="61.6" r="1.7" fill="#b4b6b8"/><path d="M8.2 73.4 L10.4 71 L12.6 73.4" stroke="#d0d0d0" stroke-width="1.2" fill="none"/><rect x="8" y="171.6" width="5" height="249" rx="2.5" fill="#f2f2f2"/><path d="M8.2 425.4 L10.4 427.8 L12.6 425.4" stroke="#d0d0d0" stroke-width="1.2" fill="none"/><path d="M8 434.4 H12.8 L10.4 437.4 Z" fill="#b0b2b4"/><path d="M9 443.4 H11.8" stroke="#9a9c9e" stroke-width="1"/><path d="M10.4 447 V481" stroke="#6a6c6e" stroke-width="1"/><circle cx="10.4" cy="451.4" r="1.8" fill="#c4c6c8"/><circle cx="10.4" cy="483.6" r="1.3" fill="#8a8c8e"/></g></svg><div id="txt"><div class="pl" style="left:301.31px;top:52.2px;width:249.68px;color:#15152a">Bass</div><div class="pl" style="left:525.38px;top:52.2px;width:484.79px;color:#15152a">Bass</div><div class="pl" style="left:957.51px;top:52.2px;width:484.79px;color:#15152a">Bass</div><div class="pl" style="left:1389.65px;top:52.2px;width:593.29px;color:#15152a">Bass</div><div class="pl" style="left:250.8px;top:89.82px;width:17.4px;color:#ffffff">Drums 2</div><div class="pl" style="left:269.3px;top:89.82px;width:68.84px;color:#ffffff">Drums 2</div><div class="pl" style="left:333.32px;top:89.82px;width:68.84px;color:#ffffff">Drums 2</div><div class="pl" style="left:397.34px;top:89.82px;width:68.84px;color:#ffffff">Drums 2</div><div class="pl" style="left:461.36px;top:89.82px;width:68.84px;color:#ffffff">Drums 2</div><div class="pl" style="left:525.38px;top:89.82px;width:32.67px;color:#ffffff">Drums 2</div><div class="pl" style="left:557.39px;top:89.82px;width:32.67px;color:#ffffff">Drums 2</div><div class="pl" style="left:589.4px;top:89.82px;width:68.84px;color:#ffffff">Drums 2</div><div class="pl" style="left:653.42px;top:89.82px;width:68.84px;color:#ffffff">Drums 2</div><div class="pl" style="left:717.44px;top:89.82px;width:50.75px;color:#ffffff">Drums 2</div><div class="pl" style="left:765.45px;top:89.82px;width:14.58px;color:#ffffff">Drums 2</div><div class="pl" style="left:781.46px;top:89.82px;width:68.84px;color:#ffffff">Drums 2</div><div class="pl" style="left:845.48px;top:89.82px;width:68.84px;color:#ffffff">Drums 2</div><div class="pl" style="left:909.5px;top:89.82px;width:50.75px;color:#ffffff">Drums 2</div><div class="pl" style="left:957.51px;top:89.82px;width:68.84px;color:#ffffff">Drums 2</div><div class="pl" style="left:1021.53px;top:89.82px;width:68.84px;color:#ffffff">Drums 2</div><div class="pl" style="left:1085.56px;top:89.82px;width:68.84px;color:#ffffff">Drums 2</div><div class="pl" style="left:1149.58px;top:89.82px;width:68.84px;color:#ffffff">Drums 2</div><div class="pl" style="left:1213.6px;top:89.82px;width:68.84px;color:#ffffff">Drums 2</div><div class="pl" style="left:1277.62px;top:89.82px;width:68.84px;color:#ffffff">Drums 2</div><div class="pl" style="left:1341.63px;top:89.82px;width:50.75px;color:#ffffff">Drums 2</div><div class="pl" style="left:1389.65px;top:89.82px;width:32.67px;color:#ffffff">Drums 2</div><div class="pl" style="left:1421.66px;top:89.82px;width:32.67px;color:#ffffff">Drums 2</div><div class="pl" style="left:1453.67px;top:89.82px;width:68.84px;color:#ffffff">Drums 2</div><div class="pl" style="left:1517.69px;top:89.82px;width:68.84px;color:#ffffff">Drums 2</div><div class="pl" style="left:1581.71px;top:89.82px;width:50.75px;color:#ffffff">Drums 2</div><div class="pl" style="left:1629.72px;top:89.82px;width:14.58px;color:#ffffff">Drums 2</div><div class="pl" style="left:1645.73px;top:89.82px;width:68.84px;color:#ffffff">Drums 2</div><div class="pl" style="left:1709.75px;top:89.82px;width:50.75px;color:#ffffff">Drums 2</div><div class="pl" style="left:1757.76px;top:89.82px;width:14.58px;color:#ffffff">Drums 2</div><div class="pl" style="left:1773.77px;top:89.82px;width:52.02px;color:#ffffff">Drums 2</div><div class="pl" style="left:269.3px;top:127.44px;width:267.77px;color:#1c1a10">Brass Left</div><div class="pl" style="left:525.38px;top:127.44px;width:267.77px;color:#1c1a10">Brass Left</div><div class="pl" style="left:797.46px;top:127.44px;width:32.67px;color:#1c1a10">Brass Left</div><div class="pl" style="left:872.21px;top:127.44px;width:20.55px;color:#1c1a10">Brass Left</div><div class="pl" style="left:925.5px;top:127.44px;width:32.67px;color:#1c1a10">Brass Left</div><div class="pl" style="left:1389.65px;top:127.44px;width:267.77px;color:#1c1a10">Brass Left</div><div class="pl" style="left:1757.76px;top:127.44px;width:68.84px;color:#1c1a10">Brass Left</div><div class="pl" style="left:1389.65px;top:165.06px;width:267.77px;color:#1c1a10">Brass Left 2</div><div class="pl" style="left:269.3px;top:202.68px;width:267.77px;color:#1c1a10">Brass Right</div><div class="pl" style="left:525.38px;top:202.68px;width:267.77px;color:#1c1a10">Brass Right</div><div class="pl" style="left:797.46px;top:202.68px;width:32.67px;color:#1c1a10">Brass Right</div><div class="pl" style="left:872.21px;top:202.68px;width:20.55px;color:#1c1a10">Brass Right</div><div class="pl" style="left:925.5px;top:202.68px;width:32.67px;color:#1c1a10">Brass Right</div><div class="pl" style="left:1389.65px;top:202.68px;width:267.77px;color:#1c1a10">Brass Right</div><div class="pl" style="left:1757.76px;top:202.68px;width:68.84px;color:#1c1a10">Brass Right</div><div class="pl" style="left:1389.65px;top:240.3px;width:267.77px;color:#1c1a10">Brass Right 2</div><div class="pl" style="left:269.3px;top:277.92px;width:267.77px;color:#1c1a10">Brass Center</div><div class="pl" style="left:525.38px;top:277.92px;width:267.77px;color:#1c1a10">Brass Center</div><div class="pl" style="left:797.46px;top:277.92px;width:32.67px;color:#1c1a10">Brass Center</div><div class="pl" style="left:893.49px;top:277.92px;width:68.84px;color:#1c1a10">Brass Center</div><div class="pl" style="left:1149.58px;top:277.92px;width:32.67px;color:#1c1a10">Brass Right</div><div class="pl" style="left:1279.22px;top:277.92px;width:121.28px;color:#1c1a10">Brass Center</div><div class="pl" style="left:1389.65px;top:277.92px;width:267.77px;color:#1c1a10">Brass Center</div><div class="pl" style="left:1757.76px;top:277.92px;width:68.84px;color:#1c1a10">Brass Center</div><div class="pl" style="left:909.5px;top:315.54px;width:50.75px;color:#10202c">Clarinet</div><div class="pl" style="left:957.51px;top:315.54px;width:484.79px;color:#10202c">Clarinet</div><div class="pl" style="left:1389.65px;top:315.54px;width:285.85px;color:#10202c">Clarinet</div><div class="pl" style="left:1773.77px;top:315.54px;width:40.8px;color:#10202c">Clarinet</div><div class="pl" style="left:557.39px;top:353.16px;width:231.6px;color:#2a1408">Guitar</div><div class="pl" style="left:957.51px;top:353.16px;width:249.68px;color:#2a1408">Guitar</div><div class="pl" style="left:1389.65px;top:353.16px;width:267.77px;color:#2a1408">Guitar</div><div class="pl" style="left:1757.76px;top:353.16px;width:63.41px;color:#2a1408">Guitar</div><div class="pl" style="left:557.39px;top:390.78px;width:448.62px;color:#0a2224">Piano 1</div><div class="pl" style="left:1181.58px;top:390.78px;width:231.6px;color:#0a2224">Piano 1</div><div class="pl" style="left:1389.65px;top:390.78px;width:479.36px;color:#0a2224">Piano 1</div><div class="pl" style="left:765.45px;top:428.4px;width:32.67px;color:#0a2224">Piano 2</div><div class="pl" style="left:829.47px;top:428.4px;width:85.11px;color:#0a2224">Piano 2</div><div class="pl" style="left:909.5px;top:428.4px;width:50.75px;color:#0a2224">Piano 2</div><div class="pl" style="left:957.51px;top:428.4px;width:484.79px;color:#0a2224">Piano 2</div><div class="pl" style="left:1629.72px;top:428.4px;width:285.85px;color:#0a2224">Piano 2</div><div class="fl" style="left:251.09px;top:26.5px;width:17.63px">Jazz</div><div class="fl" style="left:269.5px;top:26.5px;width:300.57px">Jazz</div><div class="fl" style="left:525.58px;top:26.5px;width:510.16px">Jazz</div><div class="fl" style="left:957.71px;top:26.5px;width:510.16px">Jazz</div><div class="fl" style="left:1389.85px;top:26.5px;width:624.48px">Jazz</div><div class="rl" style="left:237.69px;color:#fff;width:7.4px;overflow:hidden">15</div><div class="rl" style="left:269.7px;color:#000">17</div><div class="rl" style="left:301.71px;color:#000">19</div><div class="rl" style="left:333.72px;color:#000">21</div><div class="rl" style="left:365.73px;color:#000">23</div><div class="rl" style="left:397.74px;color:#000">25</div><div class="rl" style="left:429.75px;color:#000">27</div><div class="rl" style="left:461.76px;color:#000">29</div><div class="rl" style="left:493.77px;color:#000">31</div><div class="rl" style="left:525.78px;color:#000">33</div><div class="rl" style="left:557.79px;color:#000">35</div><div class="rl" style="left:589.8px;color:#000">37</div><div class="rl" style="left:621.81px;color:#000">39</div><div class="rl" style="left:653.82px;color:#000">41</div><div class="rl" style="left:685.83px;color:#000">43</div><div class="rl" style="left:717.84px;color:#000">45</div><div class="rl" style="left:749.85px;color:#000">47</div><div class="rl" style="left:781.86px;color:#000">49</div><div class="rl" style="left:813.87px;color:#000">51</div><div class="rl" style="left:845.88px;color:#000">53</div><div class="rl" style="left:877.89px;color:#000">55</div><div class="rl" style="left:909.9px;color:#000">57</div><div class="rl" style="left:941.91px;color:#000">59</div><div class="rl" style="left:973.92px;color:#000">61</div><div class="rl" style="left:1005.93px;color:#000">63</div><div class="rl" style="left:1037.94px;color:#000">65</div><div class="rl" style="left:1069.95px;color:#000">67</div><div class="rl" style="left:1101.96px;color:#000">69</div><div class="rl" style="left:1133.97px;color:#000">71</div><div class="rl" style="left:1165.98px;color:#000">73</div><div class="rl" style="left:1197.99px;color:#000">75</div><div class="rl" style="left:1230px;color:#000">77</div><div class="rl" style="left:1262.01px;color:#000">79</div><div class="rl" style="left:1294.02px;color:#000">81</div><div class="rl" style="left:1326.03px;color:#000">83</div><div class="rl" style="left:1358.04px;color:#000">85</div><div class="rl" style="left:1390.05px;color:#000">87</div><div class="rl" style="left:1422.06px;color:#000">89</div><div class="rl" style="left:1454.07px;color:#000">91</div><div class="rl" style="left:1486.08px;color:#000">93</div><div class="rl" style="left:1518.09px;color:#000">95</div><div class="rl" style="left:1550.1px;color:#000">97</div><div class="rl" style="left:1582.11px;color:#000">99</div><div class="rl" style="left:1614.12px;color:#000">101</div><div class="rl" style="left:1646.13px;color:#000">103</div><div class="rl" style="left:1678.14px;color:#000">105</div><div class="rl" style="left:1710.15px;color:#000">107</div><div class="rl" style="left:1742.16px;color:#000">109</div><div class="rl" style="left:1774.17px;color:#000">111</div><div class="rl" style="left:1806.18px;color:#000">113</div><div class="rl" style="left:1838.19px;color:#000">115</div><div class="rl" style="left:1870.2px;color:#000">117</div><div class="rl" style="left:1902.21px;color:#000">119</div><div class="rl" style="left:1934.22px;color:#fff">121</div><div class="ms" style="left:41.3px;top:26.1px"><span class="lm">m</span></div><div class="ms" style="left:54.9px;top:26.1px">S</div><div class="tn" style="left:71.2px;top:25.4px">Jazz</div><div class="num" style="left:27.4px;top:51.4px;color:#4d42c0">22</div><div class="ms" style="left:41.3px;top:51.2px"><span class="lm">m</span></div><div class="ms" style="left:54.9px;top:51.2px">S</div><div class="tn" style="left:70.2px;top:50.35px">Contrabass</div><div class="rw" style="left:134.6px;top:62.8px">R</div><div class="rw" style="left:148.9px;top:62.8px">W</div><div class="num" style="left:27.4px;top:89.02px;color:#a01c20">23</div><div class="ms" style="left:41.3px;top:88.82px"><span class="lm">m</span></div><div class="ms" style="left:54.9px;top:88.82px">S</div><div class="tn" style="left:70.2px;top:87.97px">Drums 2</div><div class="rw" style="left:134.6px;top:100.42px">R</div><div class="rw" style="left:148.9px;top:100.42px">W</div><div class="num" style="left:27.4px;top:126.64px;color:#8a6a18">24</div><div class="ms" style="left:41.3px;top:126.44px"><span class="lm">m</span></div><div class="ms" style="left:54.9px;top:126.44px">S</div><div class="tn" style="left:70.2px;top:125.59px">Brass Left</div><div class="rw" style="left:134.6px;top:138.04px">R</div><div class="rw" style="left:148.9px;top:138.04px">W</div><div class="num" style="left:27.4px;top:164.26px;color:#8a6a18">25</div><div class="ms" style="left:41.3px;top:164.06px"><span class="lm">m</span></div><div class="ms" style="left:54.9px;top:164.06px">S</div><div class="tn" style="left:70.2px;top:163.21px">Brass Left 2</div><div class="rw" style="left:134.6px;top:175.66px">R</div><div class="rw" style="left:148.9px;top:175.66px">W</div><div class="num" style="left:27.4px;top:201.88px;color:#8a6a18">26</div><div class="ms" style="left:41.3px;top:201.68px"><span class="lm">m</span></div><div class="ms" style="left:54.9px;top:201.68px">S</div><div class="tn" style="left:70.2px;top:200.83px">Brass Right</div><div class="rw" style="left:134.6px;top:213.28px">R</div><div class="rw" style="left:148.9px;top:213.28px">W</div><div class="num" style="left:27.4px;top:239.5px;color:#8a6a18">27</div><div class="ms" style="left:41.3px;top:239.3px"><span class="lm">m</span></div><div class="ms" style="left:54.9px;top:239.3px">S</div><div class="tn" style="left:70.2px;top:238.45px">Brass Right 2</div><div class="rw" style="left:134.6px;top:250.9px">R</div><div class="rw" style="left:148.9px;top:250.9px">W</div><div class="num" style="left:27.4px;top:277.12px;color:#8a6a18">28</div><div class="ms" style="left:41.3px;top:276.92px"><span class="lm">m</span></div><div class="ms" style="left:54.9px;top:276.92px">S</div><div class="tn" style="left:70.2px;top:276.07px">Brass Center</div><div class="rw" style="left:134.6px;top:288.52px">R</div><div class="rw" style="left:148.9px;top:288.52px">W</div><div class="num" style="left:27.4px;top:314.74px;color:#2a70a8">29</div><div class="ms" style="left:41.3px;top:314.54px"><span class="lm">m</span></div><div class="ms" style="left:54.9px;top:314.54px">S</div><div class="tn dark" style="left:70.2px;top:313.69px">Clarinet</div><div class="rw" style="left:134.6px;top:326.14px">R</div><div class="rw" style="left:148.9px;top:326.14px">W</div><div class="num" style="left:27.4px;top:352.36px;color:#a04a18">30</div><div class="ms" style="left:41.3px;top:352.16px"><span class="lm">m</span></div><div class="ms" style="left:54.9px;top:352.16px">S</div><div class="tn" style="left:70.2px;top:351.31px">Guitar</div><div class="rw" style="left:134.6px;top:363.76px">R</div><div class="rw" style="left:148.9px;top:363.76px">W</div><div class="num" style="left:27.4px;top:389.98px;color:#168a8e">31</div><div class="ms" style="left:41.3px;top:389.78px"><span class="lm">m</span></div><div class="ms" style="left:54.9px;top:389.78px">S</div><div class="tn" style="left:70.2px;top:388.93px">Piano 1</div><div class="rw" style="left:134.6px;top:401.38px">R</div><div class="rw" style="left:148.9px;top:401.38px">W</div><div class="num" style="left:27.4px;top:427.6px;color:#168a8e">32</div><div class="ms" style="left:41.3px;top:427.4px"><span class="lm">m</span></div><div class="ms" style="left:54.9px;top:427.4px">S</div><div class="tn" style="left:70.2px;top:426.55px">Piano 2</div><div class="rw" style="left:134.6px;top:439px">R</div><div class="rw" style="left:148.9px;top:439px">W</div><div style="position:absolute;left:128.8px;top:7.6px;font-size:6.2px;line-height:8px;color:#e2e2e2">45 / 45</div></div><svg class="l" width="1977" height="500" viewBox="0 0 1977 500"><rect x="245.2" y="4.5" width="1" height="483.5" fill="#a4a6a8"/><rect x="246.9" y="4.5" width="1" height="16" fill="#ececec"/><rect x="246.9" y="20.5" width="1" height="467.5" fill="#c4c6c8"/><path fill-rule="evenodd" fill="#000" d="M0 0 H1977 V500 H0 Z M7.2 2.6 H1970 A5 5 0 0 1 1975 7.6 V492.4 A5 5 0 0 1 1970 497.4 H7.2 A5 5 0 0 1 2.2 492.4 V7.6 A5 5 0 0 1 7.2 2.6 Z"/><rect x="2.6" y="2.6" width="1972.6" height="494.6" rx="5" fill="none" stroke="#f4f4f4" stroke-width="1.5"/></svg></body></html>
